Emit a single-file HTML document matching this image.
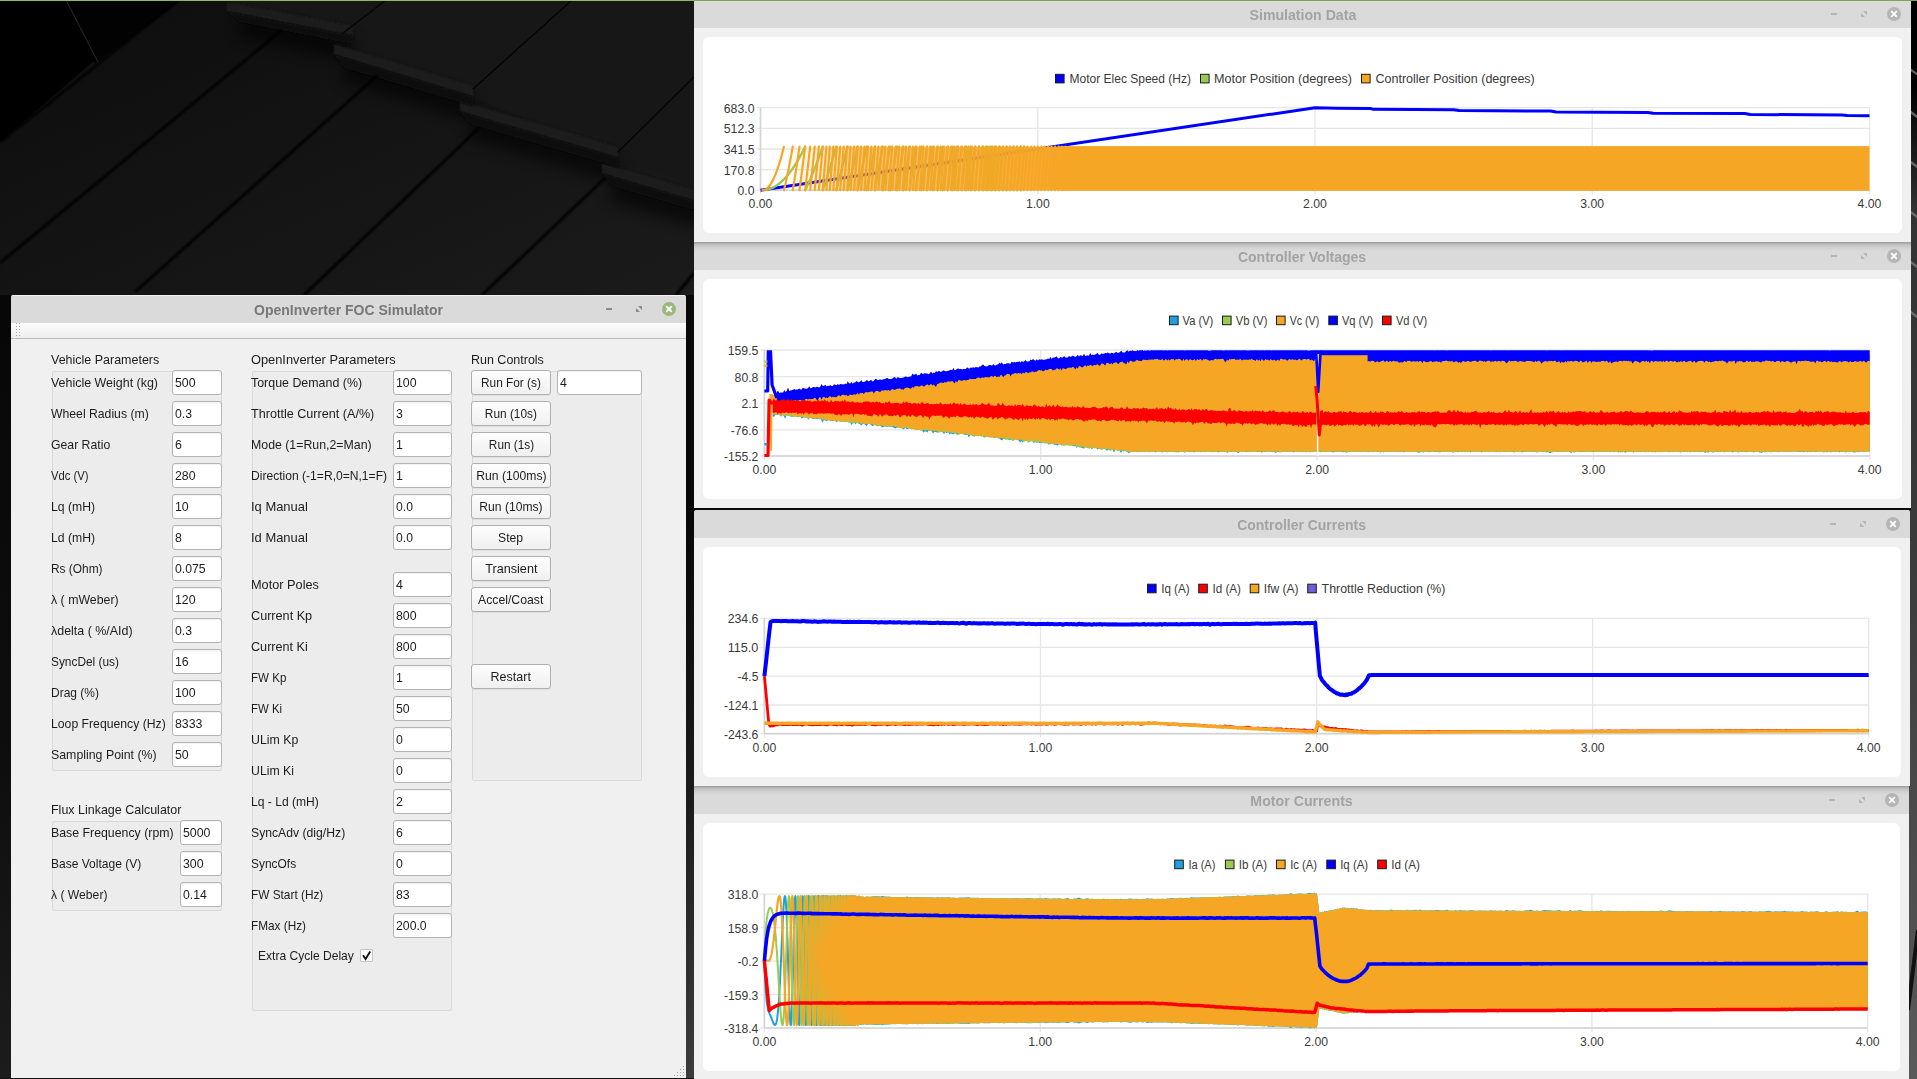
<!DOCTYPE html>
<html lang="en"><head><meta charset="utf-8"><title>OpenInverter FOC Simulator</title><style>
html,body{margin:0;padding:0}
body{width:1917px;height:1079px;overflow:hidden;position:relative;background:#151515;font-family:"Liberation Sans",sans-serif;font-size:12.25px;color:#1c1c1c}
.abs{position:absolute}
.win{position:absolute;background:#f0f0f0;overflow:hidden}
.tb{position:absolute;left:0;top:0;right:0;height:28px;background:#dadada;text-align:center;font-weight:bold;font-size:14px;line-height:30px;white-space:nowrap}
.tb.act{color:#777;box-shadow:inset 0 1px 0 #f2f2f2}
.tb.ina{color:#a3a3a3}
.tb.sh{background:linear-gradient(#9a9a9a 0,#c4c4c4 3px,#d6d6d6 7px,#dadada 10px)}
.card{position:absolute;background:#fff;border-radius:6px}
.lbl{position:absolute;white-space:nowrap;height:16px;line-height:16px}
.inp{position:absolute;box-sizing:border-box;height:25px;background:#fff;border:1px solid #b4b4b4;border-radius:3px;line-height:25px;padding-left:2px;white-space:nowrap;overflow:hidden;box-shadow:inset 0 1px 1px rgba(0,0,0,.06)}
.btn{position:absolute;box-sizing:border-box;height:25px;width:80px;background:linear-gradient(#fdfdfd,#f0f0f0);border:1px solid #b0b0b0;border-radius:3px;line-height:25px;text-align:center;white-space:nowrap;box-shadow:0 1px 0 rgba(0,0,0,.05)}
.grp{position:absolute;box-sizing:border-box;background:#ececec;border:1px solid #d9d9d9;border-radius:2px}
svg{position:absolute;display:block}
svg text{font-family:"Liberation Sans",sans-serif;font-size:12px;fill:#3a3a3a}
</style></head><body>
<svg style="left:0;top:0" width="1917" height="1079" viewBox="0 0 1917 1079">
<defs><linearGradient id="wg" x1="0" y1="0" x2="1" y2="1"><stop offset="0" stop-color="#0d0d0d"/><stop offset="1" stop-color="#1b1b1b"/></linearGradient></defs>
<rect width="700" height="300" fill="url(#wg)"/>
<polygon points="0,0 66,0 95,60 0,142" fill="#000"/>
<polygon points="66,0 181,0 95,64" fill="#020202"/>
<polygon points="226,0 694,186 694,0" fill="#171717"/>
<filter id="b1" x="-5%" y="-5%" width="110%" height="110%"><feGaussianBlur stdDeviation="0.8"/></filter><filter id="b2" x="-10%" y="-30%" width="120%" height="160%"><feGaussianBlur stdDeviation="7"/></filter>
<g filter="url(#b2)" stroke="#060606" stroke-width="22" fill="none" opacity=".6"><path d="M240,26 L353,50"/><path d="M345,70 L473,110"/><path d="M470,127 L618,172"/><path d="M612,190 L700,216"/></g>
<g fill="#1c1c1c" filter="url(#b1)"><polygon points="227,2 353,26 353,36 227,12"/><polygon points="334,44 473,86 473,97 334,55"/><polygon points="460,101 618,147 618,158 460,112"/><polygon points="602,163 694,190 694,201 602,174"/></g>
<g fill="#0c0c0c" filter="url(#b1)"><polygon points="227,12 353,36 353,44 240,22"/><polygon points="334,55 473,97 473,106 345,68"/><polygon points="460,112 618,158 618,167 470,124"/><polygon points="602,174 694,201 694,210 612,186"/></g>
<g stroke="#030303" stroke-width="2.8" fill="none" filter="url(#b1)"><path d="M0,263 L282,30"/><path d="M135,292 L378,75"/><path d="M304,295 L479,128"/><path d="M482,295 L605,178"/><path d="M676,295 L694,273"/><path d="M0,142 L179,0"/></g>
<g stroke="#050505" stroke-width="1.5" fill="none"><path d="M342,34 L386,0"/><path d="M473,89 L572,0"/><path d="M618,152 L694,77"/><path d="M66,0 L98,62" stroke="#2a2a2a" stroke-width="1"/></g>
<rect x="0" y="295" width="11" height="784" fill="url(#lg)"/>
<rect x="686" y="295" width="8" height="230" fill="#080808"/>
<rect x="686" y="525" width="8" height="554" fill="url(#sg)"/>
<defs><linearGradient id="lg" x1="0" y1="0" x2="0" y2="1"><stop offset="0" stop-color="#070707"/><stop offset=".6" stop-color="#0e0e0e"/><stop offset="1" stop-color="#1c1c1c"/></linearGradient><linearGradient id="sg" x1="0" y1="0" x2="0" y2="1"><stop offset="0" stop-color="#080808"/><stop offset=".5" stop-color="#1c1c1c"/><stop offset="1" stop-color="#3c3c3c"/></linearGradient>
<linearGradient id="rg" x1="0" y1="0" x2="0" y2="1"><stop offset="0" stop-color="#000"/><stop offset=".08" stop-color="#000"/><stop offset=".2" stop-color="#333"/><stop offset=".5" stop-color="#3a3a3a"/><stop offset="1" stop-color="#5a5a5a"/></linearGradient></defs>
<rect x="1908" y="0" width="9" height="1079" fill="url(#rg)"/>
<g stroke="#7a7a7a" stroke-width="2.2" opacity=".8"><path d="M1908,68 L1920,76"/><path d="M1908,110 L1920,119"/><path d="M1908,160 L1920,169"/><path d="M1908,210 L1920,219"/><path d="M1908,260 L1920,269"/><path d="M1908,310 L1920,319"/></g><path d="M1908,1010 L1918,930" stroke="#111" stroke-width="4"/>
<rect x="0" y="1078" width="694" height="1" fill="#111"/>
<rect x="694" y="508" width="1217" height="2" fill="#0a0a0a"/>
</svg>
<div class="abs" style="left:0;top:0;width:694px;height:1px;background:#8fb963;z-index:9"></div><div class="abs" style="left:694px;top:0;width:1223px;height:1px;background:#7fa352;z-index:9"></div>
<div class="win" style="left:11px;top:295px;width:675px;height:783px;border-radius:3px 3px 0 0">
<div class="tb act"><span style="display:inline-block;transform:scaleX(0.9999);transform-origin:center center">OpenInverter FOC Simulator</span></div>
<div class="abs" style="left:0;top:28px;width:675px;height:15px;background:linear-gradient(#fbfbfb,#ededed)"></div><div class="abs" style="left:0;top:43px;width:675px;height:1px;background:#b9b9b9"></div>
<svg style="left:4px;top:28px" width="8" height="18" viewBox="0 0 8 18"><rect x="1" y="0" width="1" height="1" fill="#a8a8a8"/><rect x="4" y="0" width="1" height="1" fill="#a8a8a8"/><rect x="1" y="3" width="1" height="1" fill="#a8a8a8"/><rect x="4" y="3" width="1" height="1" fill="#a8a8a8"/><rect x="1" y="6" width="1" height="1" fill="#a8a8a8"/><rect x="4" y="6" width="1" height="1" fill="#a8a8a8"/><rect x="1" y="9" width="1" height="1" fill="#a8a8a8"/><rect x="4" y="9" width="1" height="1" fill="#a8a8a8"/><rect x="1" y="12" width="1" height="1" fill="#a8a8a8"/><rect x="4" y="12" width="1" height="1" fill="#a8a8a8"/><rect x="1" y="15" width="1" height="1" fill="#a8a8a8"/><rect x="4" y="15" width="1" height="1" fill="#a8a8a8"/></svg>
<div class="grp" style="left:41px;top:76px;width:170px;height:400px"></div>
<div class="lbl" style="left:40px;top:57px"><span style="display:inline-block;transform:scaleX(1.0188);transform-origin:left center">Vehicle Parameters</span></div>
<div class="lbl" style="left:40px;top:80px"><span style="display:inline-block;transform:scaleX(1.0162);transform-origin:left center">Vehicle Weight (kg)</span></div>
<div class="inp" style="left:161px;top:75px;width:50px"><span style="display:inline-block;transform:scaleX(1.0069);transform-origin:left center">500</span></div>
<div class="lbl" style="left:40px;top:111px"><span style="display:inline-block;transform:scaleX(0.9968);transform-origin:left center">Wheel Radius (m)</span></div>
<div class="inp" style="left:161px;top:106px;width:50px"><span style="display:inline-block;transform:scaleX(0.9954);transform-origin:left center">0.3</span></div>
<div class="lbl" style="left:40px;top:142px"><span style="display:inline-block;transform:scaleX(0.9995);transform-origin:left center">Gear Ratio</span></div>
<div class="inp" style="left:161px;top:137px;width:50px"><span style="display:inline-block;transform:scaleX(1.0069);transform-origin:left center">6</span></div>
<div class="lbl" style="left:40px;top:173px"><span style="display:inline-block;transform:scaleX(0.9212);transform-origin:left center">Vdc (V)</span></div>
<div class="inp" style="left:161px;top:168px;width:50px"><span style="display:inline-block;transform:scaleX(1.0069);transform-origin:left center">280</span></div>
<div class="lbl" style="left:40px;top:204px"><span style="display:inline-block;transform:scaleX(0.9968);transform-origin:left center">Lq (mH)</span></div>
<div class="inp" style="left:161px;top:199px;width:50px"><span style="display:inline-block;transform:scaleX(1.0069);transform-origin:left center">10</span></div>
<div class="lbl" style="left:40px;top:235px"><span style="display:inline-block;transform:scaleX(0.9968);transform-origin:left center">Ld (mH)</span></div>
<div class="inp" style="left:161px;top:230px;width:50px"><span style="display:inline-block;transform:scaleX(1.0069);transform-origin:left center">8</span></div>
<div class="lbl" style="left:40px;top:266px"><span style="display:inline-block;transform:scaleX(0.9709);transform-origin:left center">Rs (Ohm)</span></div>
<div class="inp" style="left:161px;top:261px;width:50px"><span style="display:inline-block;transform:scaleX(1.0010);transform-origin:left center">0.075</span></div>
<div class="lbl" style="left:40px;top:297px"><span style="display:inline-block;transform:scaleX(1.0079);transform-origin:left center">λ ( mWeber)</span></div>
<div class="inp" style="left:161px;top:292px;width:50px"><span style="display:inline-block;transform:scaleX(1.0069);transform-origin:left center">120</span></div>
<div class="lbl" style="left:40px;top:328px"><span style="display:inline-block;transform:scaleX(1.0148);transform-origin:left center">λdelta ( %/AId)</span></div>
<div class="inp" style="left:161px;top:323px;width:50px"><span style="display:inline-block;transform:scaleX(0.9954);transform-origin:left center">0.3</span></div>
<div class="lbl" style="left:40px;top:359px"><span style="display:inline-block;transform:scaleX(0.9697);transform-origin:left center">SyncDel (us)</span></div>
<div class="inp" style="left:161px;top:354px;width:50px"><span style="display:inline-block;transform:scaleX(1.0069);transform-origin:left center">16</span></div>
<div class="lbl" style="left:40px;top:390px"><span style="display:inline-block;transform:scaleX(0.9770);transform-origin:left center">Drag (%)</span></div>
<div class="inp" style="left:161px;top:385px;width:50px"><span style="display:inline-block;transform:scaleX(1.0069);transform-origin:left center">100</span></div>
<div class="lbl" style="left:40px;top:421px"><span style="display:inline-block;transform:scaleX(0.9970);transform-origin:left center">Loop Frequency (Hz)</span></div>
<div class="inp" style="left:161px;top:416px;width:50px"><span style="display:inline-block;transform:scaleX(1.0074);transform-origin:left center">8333</span></div>
<div class="lbl" style="left:40px;top:452px"><span style="display:inline-block;transform:scaleX(1.0079);transform-origin:left center">Sampling Point (%)</span></div>
<div class="inp" style="left:161px;top:447px;width:50px"><span style="display:inline-block;transform:scaleX(1.0069);transform-origin:left center">50</span></div>
<div class="grp" style="left:41px;top:526px;width:170px;height:90px"></div>
<div class="lbl" style="left:40px;top:507px"><span style="display:inline-block;transform:scaleX(1.0186);transform-origin:left center">Flux Linkage Calculator</span></div>
<div class="lbl" style="left:40px;top:530px"><span style="display:inline-block;transform:scaleX(1.0062);transform-origin:left center">Base Frequency (rpm)</span></div>
<div class="inp" style="left:169px;top:525px;width:42px"><span style="display:inline-block;transform:scaleX(1.0074);transform-origin:left center">5000</span></div>
<div class="lbl" style="left:40px;top:561px"><span style="display:inline-block;transform:scaleX(0.9813);transform-origin:left center">Base Voltage (V)</span></div>
<div class="inp" style="left:169px;top:556px;width:42px"><span style="display:inline-block;transform:scaleX(1.0069);transform-origin:left center">300</span></div>
<div class="lbl" style="left:40px;top:592px"><span style="display:inline-block;transform:scaleX(0.9915);transform-origin:left center">λ ( Weber)</span></div>
<div class="inp" style="left:169px;top:587px;width:42px"><span style="display:inline-block;transform:scaleX(0.9987);transform-origin:left center">0.14</span></div>
<div class="grp" style="left:241px;top:76px;width:200px;height:640px"></div>
<div class="lbl" style="left:240px;top:57px"><span style="display:inline-block;transform:scaleX(1.0466);transform-origin:left center">OpenInverter Parameters</span></div>
<div class="lbl" style="left:240px;top:80px"><span style="display:inline-block;transform:scaleX(1.0131);transform-origin:left center">Torque Demand (%)</span></div>
<div class="inp" style="left:382px;top:75px;width:59px"><span style="display:inline-block;transform:scaleX(1.0069);transform-origin:left center">100</span></div>
<div class="lbl" style="left:240px;top:111px"><span style="display:inline-block;transform:scaleX(1.0293);transform-origin:left center">Throttle Current (A/%)</span></div>
<div class="inp" style="left:382px;top:106px;width:59px"><span style="display:inline-block;transform:scaleX(1.0069);transform-origin:left center">3</span></div>
<div class="lbl" style="left:240px;top:142px"><span style="display:inline-block;transform:scaleX(1.0064);transform-origin:left center">Mode (1=Run,2=Man)</span></div>
<div class="inp" style="left:382px;top:137px;width:59px"><span style="display:inline-block;transform:scaleX(1.0069);transform-origin:left center">1</span></div>
<div class="lbl" style="left:240px;top:173px"><span style="display:inline-block;transform:scaleX(0.9869);transform-origin:left center">Direction (-1=R,0=N,1=F)</span></div>
<div class="inp" style="left:382px;top:168px;width:59px"><span style="display:inline-block;transform:scaleX(1.0069);transform-origin:left center">1</span></div>
<div class="lbl" style="left:240px;top:204px"><span style="display:inline-block;transform:scaleX(1.0566);transform-origin:left center">Iq Manual</span></div>
<div class="inp" style="left:382px;top:199px;width:59px"><span style="display:inline-block;transform:scaleX(0.9954);transform-origin:left center">0.0</span></div>
<div class="lbl" style="left:240px;top:235px"><span style="display:inline-block;transform:scaleX(1.0566);transform-origin:left center">Id Manual</span></div>
<div class="inp" style="left:382px;top:230px;width:59px"><span style="display:inline-block;transform:scaleX(0.9954);transform-origin:left center">0.0</span></div>
<div class="lbl" style="left:240px;top:282px"><span style="display:inline-block;transform:scaleX(1.0397);transform-origin:left center">Motor Poles</span></div>
<div class="inp" style="left:382px;top:277px;width:59px"><span style="display:inline-block;transform:scaleX(1.0069);transform-origin:left center">4</span></div>
<div class="lbl" style="left:240px;top:313px"><span style="display:inline-block;transform:scaleX(1.0319);transform-origin:left center">Current Kp</span></div>
<div class="inp" style="left:382px;top:308px;width:59px"><span style="display:inline-block;transform:scaleX(1.0069);transform-origin:left center">800</span></div>
<div class="lbl" style="left:240px;top:344px"><span style="display:inline-block;transform:scaleX(1.0306);transform-origin:left center">Current Ki</span></div>
<div class="inp" style="left:382px;top:339px;width:59px"><span style="display:inline-block;transform:scaleX(1.0069);transform-origin:left center">800</span></div>
<div class="lbl" style="left:240px;top:375px"><span style="display:inline-block;transform:scaleX(0.9437);transform-origin:left center">FW Kp</span></div>
<div class="inp" style="left:382px;top:370px;width:59px"><span style="display:inline-block;transform:scaleX(1.0069);transform-origin:left center">1</span></div>
<div class="lbl" style="left:240px;top:406px"><span style="display:inline-block;transform:scaleX(0.9311);transform-origin:left center">FW Ki</span></div>
<div class="inp" style="left:382px;top:401px;width:59px"><span style="display:inline-block;transform:scaleX(1.0069);transform-origin:left center">50</span></div>
<div class="lbl" style="left:240px;top:437px"><span style="display:inline-block;transform:scaleX(1.0070);transform-origin:left center">ULim Kp</span></div>
<div class="inp" style="left:382px;top:432px;width:59px"><span style="display:inline-block;transform:scaleX(1.0069);transform-origin:left center">0</span></div>
<div class="lbl" style="left:240px;top:468px"><span style="display:inline-block;transform:scaleX(1.0033);transform-origin:left center">ULim Ki</span></div>
<div class="inp" style="left:382px;top:463px;width:59px"><span style="display:inline-block;transform:scaleX(1.0069);transform-origin:left center">0</span></div>
<div class="lbl" style="left:240px;top:499px"><span style="display:inline-block;transform:scaleX(0.9870);transform-origin:left center">Lq - Ld (mH)</span></div>
<div class="inp" style="left:382px;top:494px;width:59px"><span style="display:inline-block;transform:scaleX(1.0069);transform-origin:left center">2</span></div>
<div class="lbl" style="left:240px;top:530px"><span style="display:inline-block;transform:scaleX(0.9954);transform-origin:left center">SyncAdv (dig/Hz)</span></div>
<div class="inp" style="left:382px;top:525px;width:59px"><span style="display:inline-block;transform:scaleX(1.0069);transform-origin:left center">6</span></div>
<div class="lbl" style="left:240px;top:561px"><span style="display:inline-block;transform:scaleX(0.9750);transform-origin:left center">SyncOfs</span></div>
<div class="inp" style="left:382px;top:556px;width:59px"><span style="display:inline-block;transform:scaleX(1.0069);transform-origin:left center">0</span></div>
<div class="lbl" style="left:240px;top:592px"><span style="display:inline-block;transform:scaleX(0.9660);transform-origin:left center">FW Start (Hz)</span></div>
<div class="inp" style="left:382px;top:587px;width:59px"><span style="display:inline-block;transform:scaleX(1.0069);transform-origin:left center">83</span></div>
<div class="lbl" style="left:240px;top:623px"><span style="display:inline-block;transform:scaleX(0.9628);transform-origin:left center">FMax (Hz)</span></div>
<div class="inp" style="left:382px;top:618px;width:59px"><span style="display:inline-block;transform:scaleX(1.0010);transform-origin:left center">200.0</span></div>
<div class="lbl" style="left:247px;top:653px"><span style="display:inline-block;transform:scaleX(0.9846);transform-origin:left center">Extra Cycle Delay</span></div>
<div class="abs" style="left:349px;top:654px;width:13px;height:13px;box-sizing:border-box;background:#fff;border:1px solid #c4c4c4;border-radius:1px"></div>
<svg style="left:349px;top:654px" width="13" height="13" viewBox="0 0 13 13"><path d="M3,6.2 L5.6,10 L10.2,2.6" stroke="#111" stroke-width="1.9" fill="none"/></svg>
<div class="grp" style="left:461px;top:76px;width:170px;height:410px"></div>
<div class="lbl" style="left:460px;top:57px"><span style="display:inline-block;transform:scaleX(1.0188);transform-origin:left center">Run Controls</span></div>
<div class="btn" style="left:460px;top:75px"><span style="display:inline-block;transform:scaleX(0.9675);transform-origin:center center">Run For (s)</span></div>
<div class="btn" style="left:460px;top:106px"><span style="display:inline-block;transform:scaleX(0.9683);transform-origin:center center">Run (10s)</span></div>
<div class="btn" style="left:460px;top:137px"><span style="display:inline-block;transform:scaleX(0.9628);transform-origin:center center">Run (1s)</span></div>
<div class="btn" style="left:460px;top:168px"><span style="display:inline-block;transform:scaleX(0.9912);transform-origin:center center">Run (100ms)</span></div>
<div class="btn" style="left:460px;top:199px"><span style="display:inline-block;transform:scaleX(0.9893);transform-origin:center center">Run (10ms)</span></div>
<div class="btn" style="left:460px;top:230px"><span style="display:inline-block;transform:scaleX(0.9950);transform-origin:center center">Step</span></div>
<div class="btn" style="left:460px;top:261px"><span style="display:inline-block;transform:scaleX(1.0333);transform-origin:center center">Transient</span></div>
<div class="btn" style="left:460px;top:292px"><span style="display:inline-block;transform:scaleX(0.9974);transform-origin:center center">Accel/Coast</span></div>
<div class="btn" style="left:460px;top:369px"><span style="display:inline-block;transform:scaleX(1.0218);transform-origin:center center">Restart</span></div>
<div class="inp" style="left:546px;top:75px;width:85px"><span style="display:inline-block;transform:scaleX(1.0069);transform-origin:left center">4</span></div>
<svg style="left:661px;top:769px" width="14" height="14" viewBox="0 0 14 14"><rect x="11" y="11" width="1" height="1" fill="#a6a6a6"/><rect x="8" y="11" width="1" height="1" fill="#a6a6a6"/><rect x="5" y="11" width="1" height="1" fill="#a6a6a6"/><rect x="2" y="11" width="1" height="1" fill="#a6a6a6"/><rect x="11" y="8" width="1" height="1" fill="#a6a6a6"/><rect x="8" y="8" width="1" height="1" fill="#a6a6a6"/><rect x="5" y="8" width="1" height="1" fill="#a6a6a6"/><rect x="11" y="5" width="1" height="1" fill="#a6a6a6"/><rect x="8" y="5" width="1" height="1" fill="#a6a6a6"/><rect x="11" y="2" width="1" height="1" fill="#a6a6a6"/></svg>
</div>
<svg style="left:599px;top:299px" width="80" height="20" viewBox="599 299 80 20"><rect x="606" y="308" width="6" height="2" fill="#8a8a8a"/><polygon points="638,306 642,306 642,310" fill="#8a8a8a"/><polygon points="636,308 636,312 640,312" fill="#8a8a8a"/><circle cx="669" cy="309" r="7" fill="#9ab87c"/><path d="M666.2,306.2 L671.8,311.8 M671.8,306.2 L666.2,311.8" stroke="#fff" stroke-width="1.9" fill="none"/></svg>
<div class="win" style="left:694px;top:0px;width:1217px;height:242px"><div class="tb ina"><span style="display:inline-block;transform:scaleX(1.0084);transform-origin:center center">Simulation Data</span></div>
<div class="card" style="left:9px;top:37px;width:1199px;height:196px"></div></div>
<svg style="left:1824px;top:4px" width="80" height="20" viewBox="1824 4 80 20"><rect x="1831" y="13" width="6" height="2" fill="#b4b4b4"/><polygon points="1863,11 1867,11 1867,15" fill="#b4b4b4"/><polygon points="1861,13 1861,17 1865,17" fill="#b4b4b4"/><circle cx="1894" cy="14" r="7" fill="#b5b5b5"/><path d="M1891.2,11.2 L1896.8,16.8 M1896.8,11.2 L1891.2,16.8" stroke="#fff" stroke-width="1.9" fill="none"/></svg>
<svg style="left:703px;top:37px" width="1199" height="196" viewBox="703 37 1199 196">
<line x1="756.5" y1="107.7" x2="1869.5" y2="107.7" stroke="#e6e6e6" stroke-width="1.3"/><line x1="756.5" y1="128.4" x2="1869.5" y2="128.4" stroke="#e6e6e6" stroke-width="1.3"/><line x1="756.5" y1="149" x2="1869.5" y2="149" stroke="#e6e6e6" stroke-width="1.3"/><line x1="756.5" y1="169.6" x2="1869.5" y2="169.6" stroke="#e6e6e6" stroke-width="1.3"/><line x1="756.5" y1="190.2" x2="1869.5" y2="190.2" stroke="#e6e6e6" stroke-width="1.3"/><line x1="760.5" y1="107.7" x2="760.5" y2="194.2" stroke="#e6e6e6" stroke-width="1.3"/><line x1="1037.8" y1="107.7" x2="1037.8" y2="194.2" stroke="#e6e6e6" stroke-width="1.3"/><line x1="1315.0" y1="107.7" x2="1315.0" y2="194.2" stroke="#e6e6e6" stroke-width="1.3"/><line x1="1592.2" y1="107.7" x2="1592.2" y2="194.2" stroke="#e6e6e6" stroke-width="1.3"/><line x1="1869.5" y1="107.7" x2="1869.5" y2="194.2" stroke="#e6e6e6" stroke-width="1.3"/><line x1="760.5" y1="107.7" x2="760.5" y2="190.2" stroke="#d4d4d4" stroke-width="1.6"/><line x1="760.5" y1="190.2" x2="1869.5" y2="190.2" stroke="#d4d4d4" stroke-width="1.6"/><text x="754.5" y="112.7" text-anchor="end" textLength="30.7" lengthAdjust="spacingAndGlyphs">683.0</text><text x="754.5" y="133.4" text-anchor="end" textLength="30.7" lengthAdjust="spacingAndGlyphs">512.3</text><text x="754.5" y="154.0" text-anchor="end" textLength="30.7" lengthAdjust="spacingAndGlyphs">341.5</text><text x="754.5" y="174.6" text-anchor="end" textLength="30.7" lengthAdjust="spacingAndGlyphs">170.8</text><text x="754.5" y="195.2" text-anchor="end" textLength="17.0" lengthAdjust="spacingAndGlyphs">0.0</text><text x="760.5" y="208" text-anchor="middle" textLength="23.8" lengthAdjust="spacingAndGlyphs">0.00</text><text x="1037.8" y="208" text-anchor="middle" textLength="23.8" lengthAdjust="spacingAndGlyphs">1.00</text><text x="1315.0" y="208" text-anchor="middle" textLength="23.8" lengthAdjust="spacingAndGlyphs">2.00</text><text x="1592.2" y="208" text-anchor="middle" textLength="23.8" lengthAdjust="spacingAndGlyphs">3.00</text><text x="1869.5" y="208" text-anchor="middle" textLength="23.8" lengthAdjust="spacingAndGlyphs">4.00</text>
<rect x="1055.5" y="74.3" width="8.6" height="8.6" fill="#0000ff" stroke="#1c1c1c" stroke-width="1"/><text x="1069.5" y="83.3" textLength="121.5" lengthAdjust="spacingAndGlyphs">Motor Elec Speed (Hz)</text><rect x="1200.5" y="74.3" width="8.6" height="8.6" fill="#99ca53" stroke="#1c1c1c" stroke-width="1"/><text x="1214" y="83.3" textLength="138.0" lengthAdjust="spacingAndGlyphs">Motor Position (degrees)</text><rect x="1361.5" y="74.3" width="8.6" height="8.6" fill="#f6a625" stroke="#1c1c1c" stroke-width="1"/><text x="1375.5" y="83.3" textLength="159.3" lengthAdjust="spacingAndGlyphs">Controller Position (degrees)</text>
<polyline points="760.5,190.2 1315.0,107.7 1315.0,107.7 1337.2,108.2 1370.5,108.4 1373.2,109.3 1453.6,109.7 1459.2,110.5 1550.7,111.1 1556.2,112.0 1647.7,112.4 1653.2,113.2 1744.7,113.6 1750.3,114.5 1841.8,114.9 1847.3,115.5 1869.5,115.7" fill="none" stroke="#0000ff" stroke-width="3" stroke-linejoin="round"/>
<defs><linearGradient id="of" x1="0" y1="0" x2="1" y2="0"><stop offset="0" stop-color="#f6a625" stop-opacity="0"/><stop offset=".1" stop-color="#f6a625" stop-opacity=".15"/><stop offset=".25" stop-color="#f6a625" stop-opacity=".6"/><stop offset=".6" stop-color="#f6a625" stop-opacity=".78"/><stop offset=".9" stop-color="#f6a625" stop-opacity=".93"/><stop offset="1" stop-color="#f6a625" stop-opacity="1"/></linearGradient></defs>
<path d="M762.7,190.2 L766.0,189.9 L769.2,189.2 L772.5,187.9 L775.8,186.1 L779.0,183.8 L782.3,180.9 L785.6,177.6 L788.8,173.7 L792.1,169.4 L795.4,164.5 L798.6,159.1 L801.9,153.1 L805.1,146.7M805.1,190.2 L806.5,187.4 L807.9,184.5 L809.2,181.5 L810.6,178.4 L811.9,175.2 L813.3,172.0 L814.6,168.6 L816.0,165.2 L817.3,161.7 L818.7,158.1 L820.0,154.4 L821.4,150.6 L822.7,146.7M822.7,190.2 L823.8,187.2 L824.8,184.1 L825.8,180.9 L826.9,177.8 L827.9,174.5 L828.9,171.2 L830.0,167.9 L831.0,164.5 L832.1,161.0 L833.1,157.5 L834.1,154.0 L835.2,150.4 L836.2,146.7M836.2,190.2 L847.6,146.7M847.6,190.2 L857.6,146.7M857.6,190.2 L866.6,146.7M866.6,190.2 L875.0,146.7M875.0,190.2 L882.7,146.7M882.7,190.2 L890.0,146.7M890.0,190.2 L896.9,146.7M896.9,190.2 L903.4,146.7M903.4,190.2 L909.7,146.7M909.7,190.2 L915.7,146.7M915.7,190.2 L921.5,146.7M921.5,190.2 L927.0,146.7M927.0,190.2 L932.4,146.7M932.4,190.2 L937.7,146.7M937.7,190.2 L942.7,146.7M942.7,190.2 L947.7,146.7M947.7,190.2 L952.5,146.7M952.5,190.2 L957.1,146.7M957.1,190.2 L961.7,146.7M961.7,190.2 L966.2,146.7M966.2,190.2 L970.6,146.7M970.6,190.2 L974.9,146.7M974.9,190.2 L979.1,146.7M979.1,190.2 L983.2,146.7M983.2,190.2 L987.2,146.7M987.2,190.2 L991.2,146.7M991.2,190.2 L995.1,146.7M995.1,190.2 L998.9,146.7M998.9,190.2 L1002.7,146.7M1002.7,190.2 L1006.5,146.7M1006.5,190.2 L1010.1,146.7M1010.1,190.2 L1013.7,146.7M1013.7,190.2 L1017.3,146.7M1017.3,190.2 L1020.8,146.7M1020.8,190.2 L1024.3,146.7" fill="none" stroke="#99ca53" stroke-width="2.4" stroke-linecap="round"/>
<rect x="788.2" y="146.7" width="271.7" height="43.5" fill="url(#of)"/>
<rect x="1059.4" y="146.1" width="810.1" height="44.7" fill="#f6a625"/>
<path d="M762.7,190.2 L764.4,189.9 L766.0,189.2 L767.6,187.9 L769.2,186.1 L770.9,183.8 L772.5,180.9 L774.1,177.6 L775.8,173.7 L777.4,169.4 L779.0,164.5 L780.7,159.1 L782.3,153.1 L783.9,146.7M783.9,190.2 L784.6,187.4 L785.3,184.5 L786.0,181.5 L786.6,178.4 L787.3,175.2 L788.0,172.0 L788.7,168.6 L789.3,165.2 L790.0,161.7 L790.7,158.1 L791.4,154.4 L792.0,150.6 L792.7,146.7M792.7,190.2 L793.2,187.2 L793.8,184.1 L794.3,180.9 L794.8,177.8 L795.3,174.5 L795.8,171.2 L796.4,167.9 L796.9,164.5 L797.4,161.0 L797.9,157.5 L798.4,154.0 L798.9,150.4 L799.5,146.7M799.5,190.2 L805.2,146.7M805.2,190.2 L810.2,146.7M810.2,190.2 L814.7,146.7M814.7,190.2 L818.9,146.7M818.9,190.2 L822.7,146.7M822.7,190.2 L826.4,146.7M826.4,190.2 L829.8,146.7M829.8,190.2 L833.3,146.7M833.3,190.2 L836.8,146.7M836.8,190.2 L840.2,146.7M840.2,190.2 L843.7,146.7M843.7,190.2 L847.2,146.7M847.2,190.2 L850.6,146.7M850.6,190.2 L854.1,146.7M854.1,190.2 L857.6,146.7M857.6,190.2 L861.0,146.7M861.0,190.2 L864.5,146.7M864.5,190.2 L868.0,146.7M868.0,190.2 L871.4,146.7M871.4,190.2 L874.9,146.7M874.9,190.2 L878.4,146.7M878.4,190.2 L881.8,146.7M881.8,190.2 L885.3,146.7M885.3,190.2 L888.8,146.7M888.8,190.2 L892.2,146.7M892.2,190.2 L895.7,146.7M895.7,190.2 L899.2,146.7M899.2,190.2 L902.6,146.7M902.6,190.2 L906.1,146.7M906.1,190.2 L909.6,146.7M909.6,190.2 L913.0,146.7M913.0,190.2 L916.5,146.7M916.5,190.2 L920.0,146.7M920.0,190.2 L923.4,146.7M923.4,190.2 L926.9,146.7M926.9,190.2 L930.4,146.7M930.4,190.2 L933.8,146.7M933.8,190.2 L937.3,146.7M937.3,190.2 L940.7,146.7M940.7,190.2 L944.2,146.7M944.2,190.2 L947.7,146.7M947.7,190.2 L951.1,146.7M951.1,190.2 L954.6,146.7M954.6,190.2 L958.1,146.7M958.1,190.2 L961.5,146.7M961.5,190.2 L965.0,146.7M965.0,190.2 L968.5,146.7M968.5,190.2 L971.9,146.7M971.9,190.2 L975.4,146.7M975.4,190.2 L978.9,146.7M978.9,190.2 L982.3,146.7M982.3,190.2 L985.8,146.7M985.8,190.2 L989.3,146.7M989.3,190.2 L992.7,146.7M992.7,190.2 L996.2,146.7M996.2,190.2 L999.7,146.7M999.7,190.2 L1003.1,146.7M1003.1,190.2 L1006.6,146.7M1006.6,190.2 L1010.1,146.7M1010.1,190.2 L1013.5,146.7M1013.5,190.2 L1017.0,146.7M1017.0,190.2 L1020.5,146.7M1020.5,190.2 L1023.9,146.7M1023.9,190.2 L1027.4,146.7M1027.4,190.2 L1030.9,146.7M1030.9,190.2 L1034.3,146.7M1034.3,190.2 L1037.8,146.7M1037.8,190.2 L1041.3,146.7M1041.3,190.2 L1044.7,146.7M1044.7,190.2 L1048.2,146.7M1048.2,190.2 L1051.6,146.7M1051.6,190.2 L1055.1,146.7M1055.1,190.2 L1058.6,146.7M1058.6,190.2 L1062.0,146.7M1062.0,190.2 L1065.5,146.7" fill="none" stroke="#f6a625" stroke-width="2.2" stroke-linecap="round"/>
</svg>
<div class="win" style="left:694px;top:242px;width:1217px;height:266px"><div class="tb ina sh"><span style="display:inline-block;transform:scaleX(1.0010);transform-origin:center center">Controller Voltages</span></div>
<div class="card" style="left:9px;top:37px;width:1199px;height:220px"></div></div>
<svg style="left:1824px;top:246px" width="80" height="20" viewBox="1824 246 80 20"><rect x="1831" y="255" width="6" height="2" fill="#b4b4b4"/><polygon points="1863,253 1867,253 1867,257" fill="#b4b4b4"/><polygon points="1861,255 1861,259 1865,259" fill="#b4b4b4"/><circle cx="1894" cy="256" r="7" fill="#b5b5b5"/><path d="M1891.2,253.2 L1896.8,258.8 M1896.8,253.2 L1891.2,258.8" stroke="#fff" stroke-width="1.9" fill="none"/></svg>
<svg style="left:703px;top:279px" width="1199" height="220" viewBox="703 279 1199 220">
<line x1="760.4" y1="350" x2="1869.7" y2="350" stroke="#e6e6e6" stroke-width="1.3"/><line x1="760.4" y1="376.6" x2="1869.7" y2="376.6" stroke="#e6e6e6" stroke-width="1.3"/><line x1="760.4" y1="403.2" x2="1869.7" y2="403.2" stroke="#e6e6e6" stroke-width="1.3"/><line x1="760.4" y1="429.8" x2="1869.7" y2="429.8" stroke="#e6e6e6" stroke-width="1.3"/><line x1="760.4" y1="456" x2="1869.7" y2="456" stroke="#e6e6e6" stroke-width="1.3"/><line x1="764.4" y1="350" x2="764.4" y2="460" stroke="#e6e6e6" stroke-width="1.3"/><line x1="1040.7" y1="350" x2="1040.7" y2="460" stroke="#e6e6e6" stroke-width="1.3"/><line x1="1317.1" y1="350" x2="1317.1" y2="460" stroke="#e6e6e6" stroke-width="1.3"/><line x1="1593.4" y1="350" x2="1593.4" y2="460" stroke="#e6e6e6" stroke-width="1.3"/><line x1="1869.7" y1="350" x2="1869.7" y2="460" stroke="#e6e6e6" stroke-width="1.3"/><line x1="764.4" y1="350" x2="764.4" y2="456" stroke="#d4d4d4" stroke-width="1.6"/><line x1="764.4" y1="456" x2="1869.7" y2="456" stroke="#d4d4d4" stroke-width="1.6"/><text x="758.4" y="355.0" text-anchor="end" textLength="30.7" lengthAdjust="spacingAndGlyphs">159.5</text><text x="758.4" y="381.6" text-anchor="end" textLength="23.8" lengthAdjust="spacingAndGlyphs">80.8</text><text x="758.4" y="408.2" text-anchor="end" textLength="17.0" lengthAdjust="spacingAndGlyphs">2.1</text><text x="758.4" y="434.8" text-anchor="end" textLength="27.7" lengthAdjust="spacingAndGlyphs">-76.6</text><text x="758.4" y="461.0" text-anchor="end" textLength="34.5" lengthAdjust="spacingAndGlyphs">-155.2</text><text x="764.4" y="474" text-anchor="middle" textLength="23.8" lengthAdjust="spacingAndGlyphs">0.00</text><text x="1040.7" y="474" text-anchor="middle" textLength="23.8" lengthAdjust="spacingAndGlyphs">1.00</text><text x="1317.1" y="474" text-anchor="middle" textLength="23.8" lengthAdjust="spacingAndGlyphs">2.00</text><text x="1593.4" y="474" text-anchor="middle" textLength="23.8" lengthAdjust="spacingAndGlyphs">3.00</text><text x="1869.7" y="474" text-anchor="middle" textLength="23.8" lengthAdjust="spacingAndGlyphs">4.00</text>
<rect x="1169.5" y="316.1" width="8.6" height="8.6" fill="#209fdf" stroke="#1c1c1c" stroke-width="1"/><text x="1182.6" y="325.1" textLength="30.7" lengthAdjust="spacingAndGlyphs">Va (V)</text><rect x="1222.5" y="316.1" width="8.6" height="8.6" fill="#99ca53" stroke="#1c1c1c" stroke-width="1"/><text x="1235.7" y="325.1" textLength="31.7" lengthAdjust="spacingAndGlyphs">Vb (V)</text><rect x="1276.5" y="316.1" width="8.6" height="8.6" fill="#f6a625" stroke="#1c1c1c" stroke-width="1"/><text x="1289.7" y="325.1" textLength="29.5" lengthAdjust="spacingAndGlyphs">Vc (V)</text><rect x="1328.8" y="316.1" width="8.6" height="8.6" fill="#0000ff" stroke="#1c1c1c" stroke-width="1"/><text x="1341.9" y="325.1" textLength="31.4" lengthAdjust="spacingAndGlyphs">Vq (V)</text><rect x="1382.5" y="316.1" width="8.6" height="8.6" fill="#ff0000" stroke="#1c1c1c" stroke-width="1"/><text x="1395.9" y="325.1" textLength="31.4" lengthAdjust="spacingAndGlyphs">Vd (V)</text>
<defs><clipPath id="c2"><rect x="762.4" y="350.2" width="1109.3000000000002" height="107"/></clipPath></defs><g clip-path="url(#c2)">
<polygon points="772.7,395.0 774.1,395.6 775.5,395.4 776.8,394.4 778.2,394.4 779.6,394.2 781.0,394.6 782.4,394.2 783.7,394.5 785.1,393.1 786.5,394.7 787.9,393.8 789.3,394.1 790.7,393.5 792.0,393.3 793.4,393.6 794.8,393.6 796.2,393.0 797.6,392.8 798.9,393.1 800.3,392.2 801.7,391.7 803.1,392.5 804.5,391.9 805.8,391.1 807.2,391.5 808.6,391.5 810.0,391.0 811.4,390.7 812.8,391.4 814.1,391.6 815.5,390.9 816.9,390.5 818.3,391.0 819.7,391.0 821.0,390.3 822.4,390.6 823.8,390.7 825.2,389.9 826.6,389.5 828.0,389.9 829.3,389.7 830.7,390.0 832.1,388.7 833.5,388.9 834.9,388.6 836.2,388.0 837.6,388.8 839.0,388.9 840.4,388.1 841.8,389.0 843.2,388.6 844.5,388.4 845.9,388.1 847.3,388.2 848.7,386.9 850.1,387.8 851.4,387.6 852.8,386.3 854.2,387.2 855.6,386.8 857.0,387.1 858.4,386.4 859.7,386.4 861.1,386.5 862.5,385.7 863.9,386.3 865.3,385.8 866.6,386.0 868.0,385.3 869.4,386.0 870.8,385.6 872.2,385.1 873.5,385.3 874.9,385.5 876.3,385.6 877.7,383.8 879.1,384.9 880.5,384.5 881.8,384.1 883.2,383.5 884.6,384.5 886.0,383.1 887.4,383.9 888.7,384.1 890.1,382.5 891.5,383.0 892.9,382.4 894.3,383.0 895.7,383.5 897.0,383.6 898.4,381.5 899.8,382.0 901.2,382.5 902.6,382.8 903.9,382.0 905.3,381.3 906.7,381.6 908.1,381.3 909.5,381.0 910.9,380.6 912.2,381.0 913.6,380.7 915.0,380.4 916.4,380.1 917.8,379.4 919.1,379.6 920.5,380.3 921.9,379.4 923.3,378.6 924.7,379.8 926.1,379.3 927.4,379.9 928.8,378.7 930.2,378.2 931.6,377.6 933.0,378.8 934.3,379.2 935.7,377.4 937.1,377.3 938.5,377.7 939.9,376.8 941.2,376.9 942.6,376.7 944.0,376.8 945.4,377.1 946.8,376.4 948.2,376.6 949.5,375.8 950.9,376.0 952.3,374.6 953.7,374.8 955.1,375.7 956.4,374.9 957.8,375.3 959.2,375.1 960.6,375.3 962.0,374.9 963.4,374.8 964.7,374.1 966.1,373.7 967.5,373.5 968.9,373.4 970.3,372.9 971.6,373.1 973.0,373.1 974.4,373.1 975.8,372.7 977.2,371.7 978.6,372.5 979.9,372.4 981.3,372.7 982.7,372.3 984.1,371.5 985.5,371.3 986.8,372.5 988.2,371.7 989.6,372.1 991.0,372.1 992.4,370.4 993.7,370.9 995.1,370.7 996.5,370.6 997.9,370.4 999.3,370.1 1000.7,369.9 1002.0,368.9 1003.4,369.4 1004.8,369.0 1006.2,369.2 1007.6,368.8 1008.9,369.1 1010.3,369.1 1011.7,368.7 1013.1,368.5 1014.5,368.2 1015.9,367.8 1017.2,367.8 1018.6,367.4 1020.0,367.7 1021.4,367.3 1022.8,367.5 1024.1,366.3 1025.5,367.3 1026.9,366.3 1028.3,366.1 1029.7,366.2 1031.1,365.9 1032.4,366.1 1033.8,365.5 1035.2,365.1 1036.6,365.1 1038.0,366.0 1039.3,365.2 1040.7,364.4 1042.1,364.9 1043.5,364.0 1044.9,365.5 1046.3,363.7 1047.6,364.6 1049.0,364.5 1050.4,363.3 1051.8,364.1 1053.2,364.3 1054.5,363.9 1055.9,363.6 1057.3,363.8 1058.7,363.3 1060.1,363.3 1061.4,362.9 1062.8,363.1 1064.2,362.2 1065.6,363.0 1067.0,362.2 1068.4,361.7 1069.7,362.3 1071.1,362.9 1072.5,362.4 1073.9,361.5 1075.3,362.0 1076.6,361.2 1078.0,361.3 1079.4,361.2 1080.8,359.9 1082.2,361.0 1083.6,360.3 1084.9,360.3 1086.3,359.8 1087.7,359.6 1089.1,359.8 1090.5,360.5 1091.8,360.8 1093.2,359.8 1094.6,360.3 1096.0,359.4 1097.4,358.5 1098.8,359.4 1100.1,359.4 1101.5,358.8 1102.9,359.0 1104.3,359.0 1105.7,358.2 1107.0,357.7 1108.4,358.2 1109.8,358.1 1111.2,357.9 1112.6,358.4 1114.0,358.7 1115.3,357.5 1116.7,357.9 1118.1,357.9 1119.5,357.6 1120.9,357.7 1122.2,356.8 1123.6,357.2 1125.0,357.7 1126.4,357.0 1127.8,356.1 1129.1,356.6 1130.5,356.8 1131.9,356.2 1133.3,355.6 1134.7,356.5 1136.1,355.0 1137.4,355.8 1138.8,355.4 1140.2,354.8 1141.6,355.9 1143.0,355.4 1144.3,354.6 1145.7,355.4 1147.1,354.8 1148.5,354.0 1149.9,354.5 1151.3,354.9 1152.6,355.0 1154.0,354.7 1155.4,354.6 1156.8,354.7 1158.2,354.4 1159.5,355.1 1160.9,354.6 1162.3,354.6 1163.7,354.8 1165.1,354.0 1166.5,354.1 1167.8,355.3 1169.2,354.7 1170.6,354.4 1172.0,354.7 1173.4,354.3 1174.7,354.6 1176.1,354.2 1177.5,354.6 1178.9,353.7 1180.3,355.2 1181.7,354.2 1183.0,353.7 1184.4,354.4 1185.8,354.3 1187.2,354.6 1188.6,353.9 1189.9,354.7 1191.3,356.3 1192.7,353.9 1194.1,354.7 1195.5,354.3 1196.8,354.6 1198.2,353.6 1199.6,353.9 1201.0,354.7 1202.4,354.5 1203.8,355.3 1205.1,354.1 1206.5,354.6 1207.9,356.0 1209.3,354.1 1210.7,354.0 1212.0,354.5 1213.4,354.5 1214.8,354.9 1216.2,354.6 1217.6,354.1 1219.0,354.6 1220.3,355.8 1221.7,355.1 1223.1,353.1 1224.5,354.4 1225.9,354.1 1227.2,354.8 1228.6,354.4 1230.0,355.5 1231.4,355.0 1232.8,354.9 1234.2,354.6 1235.5,354.5 1236.9,354.7 1238.3,355.1 1239.7,354.8 1241.1,354.3 1242.4,355.1 1243.8,354.6 1245.2,354.5 1246.6,354.1 1248.0,354.2 1249.4,354.2 1250.7,353.1 1252.1,355.0 1253.5,354.8 1254.9,354.4 1256.3,355.0 1257.6,354.7 1259.0,354.7 1260.4,353.3 1261.8,354.4 1263.2,354.8 1264.5,355.3 1265.9,355.4 1267.3,355.2 1268.7,353.9 1270.1,353.4 1271.5,354.8 1272.8,354.5 1274.2,355.0 1275.6,354.4 1277.0,354.6 1278.4,353.8 1279.7,354.7 1281.1,354.3 1282.5,354.7 1283.9,354.7 1285.3,354.4 1286.7,354.7 1288.0,354.5 1289.4,354.9 1290.8,354.8 1292.2,354.2 1293.6,354.2 1294.9,355.4 1296.3,354.4 1297.7,355.0 1299.1,354.7 1300.5,354.2 1301.9,354.1 1303.2,354.6 1304.6,354.6 1306.0,354.8 1307.4,353.9 1308.8,354.2 1310.1,354.5 1311.5,355.3 1312.9,353.3 1314.3,354.7 1315.7,354.2 1317.0,354.7 1318.4,354.3 1319.8,354.7 1321.2,355.3 1322.6,354.7 1324.0,354.7 1325.3,354.7 1326.7,354.1 1328.1,354.8 1329.5,354.4 1330.9,354.1 1332.2,354.5 1333.6,354.4 1335.0,354.9 1336.4,354.5 1337.8,354.2 1339.2,355.2 1340.5,355.0 1341.9,355.1 1343.3,354.8 1344.7,354.4 1346.1,354.3 1347.4,354.4 1348.8,355.0 1350.2,354.6 1351.6,353.8 1353.0,354.5 1354.4,353.8 1355.7,354.6 1357.1,353.9 1358.5,353.9 1359.9,354.6 1361.3,354.5 1362.6,353.7 1364.0,354.9 1365.4,355.6 1366.8,353.8 1368.2,355.4 1369.6,354.2 1370.9,354.3 1372.3,354.4 1373.7,353.8 1375.1,355.1 1376.5,354.7 1377.8,354.1 1379.2,354.4 1380.6,353.7 1382.0,354.3 1383.4,355.0 1384.7,353.6 1386.1,354.3 1387.5,354.6 1388.9,355.0 1390.3,355.2 1391.7,354.3 1393.0,354.1 1394.4,354.7 1395.8,354.3 1397.2,354.3 1398.6,355.0 1399.9,355.3 1401.3,354.6 1402.7,354.4 1404.1,354.8 1405.5,353.6 1406.9,354.5 1408.2,354.0 1409.6,355.7 1411.0,354.9 1412.4,354.6 1413.8,354.4 1415.1,353.2 1416.5,354.9 1417.9,355.3 1419.3,354.1 1420.7,354.8 1422.1,354.9 1423.4,353.7 1424.8,355.0 1426.2,355.2 1427.6,354.6 1429.0,354.5 1430.3,354.9 1431.7,353.7 1433.1,354.5 1434.5,355.0 1435.9,353.9 1437.3,355.0 1438.6,354.3 1440.0,353.5 1441.4,354.4 1442.8,354.0 1444.2,354.7 1445.5,353.9 1446.9,355.0 1448.3,354.1 1449.7,354.7 1451.1,354.2 1452.4,354.3 1453.8,355.1 1455.2,354.6 1456.6,354.3 1458.0,353.9 1459.4,355.1 1460.7,354.9 1462.1,354.3 1463.5,354.6 1464.9,354.0 1466.3,354.0 1467.6,354.1 1469.0,354.7 1470.4,354.6 1471.8,354.1 1473.2,354.9 1474.6,354.9 1475.9,354.6 1477.3,355.0 1478.7,354.4 1480.1,354.4 1481.5,354.7 1482.8,354.5 1484.2,354.9 1485.6,353.9 1487.0,355.2 1488.4,354.1 1489.8,354.4 1491.1,353.8 1492.5,354.8 1493.9,355.1 1495.3,355.0 1496.7,354.9 1498.0,353.7 1499.4,354.1 1500.8,354.3 1502.2,354.0 1503.6,355.1 1505.0,354.6 1506.3,354.5 1507.7,354.7 1509.1,354.0 1510.5,354.0 1511.9,354.1 1513.2,354.7 1514.6,354.7 1516.0,354.8 1517.4,355.0 1518.8,353.8 1520.1,354.2 1521.5,354.6 1522.9,353.8 1524.3,354.2 1525.7,355.0 1527.1,355.1 1528.4,355.0 1529.8,354.5 1531.2,354.4 1532.6,355.0 1534.0,354.3 1535.3,354.7 1536.7,355.2 1538.1,354.3 1539.5,354.2 1540.9,354.5 1542.3,354.8 1543.6,354.7 1545.0,354.6 1546.4,354.8 1547.8,353.7 1549.2,354.1 1550.5,354.6 1551.9,354.0 1553.3,353.8 1554.7,353.9 1556.1,354.0 1557.5,354.4 1558.8,354.0 1560.2,354.6 1561.6,355.3 1563.0,354.4 1564.4,355.1 1565.7,354.6 1567.1,353.9 1568.5,354.4 1569.9,354.0 1571.3,354.9 1572.7,353.9 1574.0,355.2 1575.4,354.8 1576.8,353.5 1578.2,354.9 1579.6,355.3 1580.9,354.1 1582.3,355.0 1583.7,353.6 1585.1,354.6 1586.5,353.7 1587.8,354.7 1589.2,353.6 1590.6,353.2 1592.0,354.7 1593.4,355.6 1594.8,354.2 1596.1,354.9 1597.5,354.6 1598.9,354.3 1600.3,354.8 1601.7,355.3 1603.0,353.9 1604.4,354.8 1605.8,354.7 1607.2,353.8 1608.6,355.3 1610.0,355.5 1611.3,354.0 1612.7,355.4 1614.1,354.5 1615.5,354.4 1616.9,355.3 1618.2,354.6 1619.6,354.7 1621.0,355.3 1622.4,355.1 1623.8,354.9 1625.2,353.8 1626.5,353.7 1627.9,355.1 1629.3,354.0 1630.7,354.6 1632.1,354.0 1633.4,354.4 1634.8,353.9 1636.2,355.3 1637.6,354.0 1639.0,354.4 1640.4,354.4 1641.7,355.1 1643.1,353.8 1644.5,354.5 1645.9,354.4 1647.3,354.8 1648.6,354.7 1650.0,354.3 1651.4,354.6 1652.8,354.3 1654.2,354.7 1655.5,354.4 1656.9,354.2 1658.3,354.5 1659.7,354.7 1661.1,355.6 1662.5,354.3 1663.8,354.7 1665.2,355.2 1666.6,353.5 1668.0,353.6 1669.4,353.9 1670.7,354.4 1672.1,355.7 1673.5,354.7 1674.9,355.1 1676.3,354.4 1677.7,353.3 1679.0,353.3 1680.4,355.0 1681.8,354.6 1683.2,353.9 1684.6,355.1 1685.9,353.7 1687.3,355.1 1688.7,355.2 1690.1,354.1 1691.5,353.9 1692.9,354.9 1694.2,354.0 1695.6,354.9 1697.0,353.9 1698.4,354.9 1699.8,354.5 1701.1,354.3 1702.5,354.1 1703.9,354.6 1705.3,353.6 1706.7,354.4 1708.0,354.3 1709.4,354.8 1710.8,353.9 1712.2,355.4 1713.6,354.3 1715.0,353.9 1716.3,355.2 1717.7,355.3 1719.1,354.4 1720.5,354.1 1721.9,354.5 1723.2,354.2 1724.6,354.3 1726.0,355.3 1727.4,354.7 1728.8,354.6 1730.2,354.7 1731.5,354.5 1732.9,354.9 1734.3,354.9 1735.7,354.3 1737.1,354.6 1738.4,355.7 1739.8,354.7 1741.2,354.4 1742.6,355.5 1744.0,354.5 1745.4,354.0 1746.7,354.8 1748.1,354.1 1749.5,354.3 1750.9,354.7 1752.3,354.4 1753.6,354.1 1755.0,354.2 1756.4,354.2 1757.8,355.1 1759.2,354.1 1760.6,354.2 1761.9,355.5 1763.3,354.2 1764.7,355.2 1766.1,355.2 1767.5,354.4 1768.8,353.8 1770.2,354.7 1771.6,354.8 1773.0,355.0 1774.4,354.5 1775.7,355.1 1777.1,355.2 1778.5,354.0 1779.9,355.2 1781.3,354.6 1782.7,354.2 1784.0,354.3 1785.4,355.4 1786.8,355.0 1788.2,353.6 1789.6,354.5 1790.9,354.4 1792.3,354.4 1793.7,354.2 1795.1,353.8 1796.5,354.9 1797.9,354.0 1799.2,354.3 1800.6,354.2 1802.0,354.1 1803.4,354.9 1804.8,354.7 1806.1,354.2 1807.5,354.0 1808.9,354.3 1810.3,355.0 1811.7,354.6 1813.1,354.6 1814.4,354.3 1815.8,354.4 1817.2,354.6 1818.6,353.6 1820.0,355.3 1821.3,354.1 1822.7,354.2 1824.1,355.2 1825.5,354.6 1826.9,354.5 1828.3,354.2 1829.6,353.7 1831.0,354.6 1832.4,355.1 1833.8,354.1 1835.2,355.2 1836.5,353.9 1837.9,354.1 1839.3,354.8 1840.7,354.5 1842.1,354.8 1843.4,354.1 1844.8,354.0 1846.2,353.6 1847.6,353.9 1849.0,354.0 1850.4,353.8 1851.7,354.7 1853.1,354.2 1854.5,353.5 1855.9,355.7 1857.3,354.1 1858.6,353.9 1860.0,355.1 1861.4,355.1 1862.8,353.9 1864.2,353.8 1865.6,354.0 1866.9,355.1 1868.3,354.3 1869.7,354.1 1869.7,451.4 1868.3,451.5 1866.9,451.5 1865.6,451.7 1864.2,451.5 1862.8,451.7 1861.4,451.4 1860.0,451.5 1858.6,452.3 1857.3,452.0 1855.9,452.2 1854.5,452.4 1853.1,452.2 1851.7,451.8 1850.4,451.6 1849.0,451.8 1847.6,451.5 1846.2,452.4 1844.8,451.5 1843.4,451.8 1842.1,452.0 1840.7,451.5 1839.3,452.6 1837.9,451.5 1836.5,452.0 1835.2,452.1 1833.8,451.8 1832.4,451.7 1831.0,452.4 1829.6,451.7 1828.3,451.7 1826.9,452.4 1825.5,451.4 1824.1,452.5 1822.7,451.9 1821.3,451.5 1820.0,451.4 1818.6,451.8 1817.2,451.6 1815.8,452.3 1814.4,451.5 1813.1,451.7 1811.7,451.6 1810.3,452.3 1808.9,451.7 1807.5,452.3 1806.1,451.4 1804.8,452.0 1803.4,452.3 1802.0,451.4 1800.6,452.0 1799.2,451.9 1797.9,451.9 1796.5,451.5 1795.1,451.6 1793.7,451.5 1792.3,451.9 1790.9,451.6 1789.6,451.7 1788.2,451.7 1786.8,451.6 1785.4,451.9 1784.0,451.7 1782.7,451.6 1781.3,451.4 1779.9,451.8 1778.5,452.2 1777.1,451.9 1775.7,452.0 1774.4,451.5 1773.0,451.5 1771.6,452.2 1770.2,452.2 1768.8,452.1 1767.5,451.5 1766.1,451.5 1764.7,452.6 1763.3,451.6 1761.9,453.1 1760.6,452.4 1759.2,452.4 1757.8,451.4 1756.4,451.6 1755.0,451.7 1753.6,452.4 1752.3,452.1 1750.9,451.5 1749.5,451.5 1748.1,451.6 1746.7,452.5 1745.4,451.7 1744.0,452.2 1742.6,451.6 1741.2,451.5 1739.8,451.4 1738.4,452.7 1737.1,451.8 1735.7,451.5 1734.3,451.4 1732.9,452.4 1731.5,452.1 1730.2,451.5 1728.8,451.7 1727.4,451.9 1726.0,451.6 1724.6,452.2 1723.2,451.7 1721.9,451.5 1720.5,451.9 1719.1,451.5 1717.7,452.2 1716.3,451.4 1715.0,451.7 1713.6,452.4 1712.2,452.2 1710.8,451.6 1709.4,451.5 1708.0,452.8 1706.7,451.9 1705.3,452.9 1703.9,451.9 1702.5,451.5 1701.1,451.9 1699.8,451.9 1698.4,451.7 1697.0,451.9 1695.6,452.0 1694.2,452.3 1692.9,451.8 1691.5,451.7 1690.1,452.6 1688.7,451.6 1687.3,452.3 1685.9,451.7 1684.6,451.4 1683.2,452.1 1681.8,452.0 1680.4,452.4 1679.0,451.5 1677.7,451.5 1676.3,451.4 1674.9,451.8 1673.5,451.9 1672.1,451.5 1670.7,452.1 1669.4,452.2 1668.0,451.7 1666.6,451.7 1665.2,451.4 1663.8,451.5 1662.5,452.0 1661.1,451.9 1659.7,452.1 1658.3,451.7 1656.9,451.7 1655.5,452.0 1654.2,451.9 1652.8,452.3 1651.4,451.7 1650.0,451.6 1648.6,452.2 1647.3,451.6 1645.9,452.2 1644.5,451.7 1643.1,451.9 1641.7,451.6 1640.4,451.9 1639.0,451.5 1637.6,451.5 1636.2,451.8 1634.8,451.8 1633.4,452.8 1632.1,451.5 1630.7,451.5 1629.3,451.4 1627.9,451.9 1626.5,452.1 1625.2,452.8 1623.8,451.7 1622.4,451.6 1621.0,452.4 1619.6,452.1 1618.2,452.4 1616.9,451.8 1615.5,451.5 1614.1,452.2 1612.7,451.5 1611.3,451.6 1610.0,452.1 1608.6,451.9 1607.2,451.8 1605.8,451.6 1604.4,451.8 1603.0,451.8 1601.7,451.6 1600.3,452.1 1598.9,451.6 1597.5,451.4 1596.1,451.6 1594.8,452.0 1593.4,451.9 1592.0,451.9 1590.6,451.8 1589.2,451.8 1587.8,451.5 1586.5,452.0 1585.1,452.0 1583.7,452.1 1582.3,451.9 1580.9,451.9 1579.6,452.0 1578.2,452.0 1576.8,451.6 1575.4,451.6 1574.0,452.7 1572.7,451.8 1571.3,452.9 1569.9,452.2 1568.5,451.7 1567.1,451.7 1565.7,451.8 1564.4,451.6 1563.0,451.7 1561.6,451.9 1560.2,451.5 1558.8,451.9 1557.5,451.8 1556.1,451.5 1554.7,451.7 1553.3,452.0 1551.9,452.0 1550.5,453.3 1549.2,452.7 1547.8,452.0 1546.4,452.4 1545.0,451.4 1543.6,452.0 1542.3,452.1 1540.9,451.4 1539.5,451.7 1538.1,452.2 1536.7,452.4 1535.3,451.7 1534.0,451.6 1532.6,451.9 1531.2,451.9 1529.8,451.5 1528.4,451.6 1527.1,451.4 1525.7,452.1 1524.3,451.7 1522.9,452.3 1521.5,452.3 1520.1,451.9 1518.8,451.6 1517.4,451.6 1516.0,451.6 1514.6,452.4 1513.2,452.1 1511.9,452.1 1510.5,451.4 1509.1,451.6 1507.7,451.6 1506.3,451.6 1505.0,452.0 1503.6,451.7 1502.2,451.5 1500.8,451.6 1499.4,452.2 1498.0,451.7 1496.7,451.9 1495.3,451.7 1493.9,451.4 1492.5,451.7 1491.1,451.4 1489.8,451.8 1488.4,452.1 1487.0,451.8 1485.6,451.5 1484.2,451.4 1482.8,451.6 1481.5,452.5 1480.1,451.6 1478.7,451.4 1477.3,451.5 1475.9,451.7 1474.6,451.6 1473.2,451.6 1471.8,451.5 1470.4,452.4 1469.0,451.6 1467.6,451.7 1466.3,451.5 1464.9,452.3 1463.5,451.4 1462.1,451.9 1460.7,452.1 1459.4,451.8 1458.0,452.2 1456.6,452.0 1455.2,451.8 1453.8,452.2 1452.4,452.4 1451.1,451.6 1449.7,451.9 1448.3,451.5 1446.9,451.5 1445.5,451.6 1444.2,452.1 1442.8,451.4 1441.4,451.8 1440.0,452.2 1438.6,452.2 1437.3,452.0 1435.9,451.9 1434.5,452.1 1433.1,451.5 1431.7,451.5 1430.3,452.3 1429.0,451.9 1427.6,452.0 1426.2,451.4 1424.8,451.5 1423.4,452.7 1422.1,451.4 1420.7,451.5 1419.3,452.9 1417.9,452.4 1416.5,451.5 1415.1,451.4 1413.8,451.8 1412.4,451.8 1411.0,451.9 1409.6,451.6 1408.2,451.9 1406.9,451.5 1405.5,451.4 1404.1,452.2 1402.7,452.0 1401.3,452.1 1399.9,451.7 1398.6,451.7 1397.2,451.8 1395.8,452.0 1394.4,451.4 1393.0,451.4 1391.7,451.7 1390.3,451.7 1388.9,451.9 1387.5,451.6 1386.1,451.8 1384.7,452.1 1383.4,452.3 1382.0,451.7 1380.6,452.4 1379.2,451.9 1377.8,452.0 1376.5,451.7 1375.1,451.5 1373.7,451.7 1372.3,452.0 1370.9,451.5 1369.6,452.2 1368.2,452.0 1366.8,452.0 1365.4,451.5 1364.0,451.4 1362.6,451.5 1361.3,452.1 1359.9,452.0 1358.5,451.5 1357.1,451.7 1355.7,451.7 1354.4,451.8 1353.0,451.7 1351.6,451.6 1350.2,452.0 1348.8,451.8 1347.4,452.6 1346.1,452.6 1344.7,451.5 1343.3,452.3 1341.9,451.9 1340.5,451.9 1339.2,451.7 1337.8,452.1 1336.4,451.9 1335.0,452.0 1333.6,452.2 1332.2,452.2 1330.9,451.8 1329.5,451.7 1328.1,452.2 1326.7,451.5 1325.3,452.2 1324.0,451.7 1322.6,451.5 1321.2,452.2 1319.8,452.0 1318.4,451.6 1317.0,451.7 1315.7,451.7 1314.3,451.5 1312.9,451.9 1311.5,451.6 1310.1,452.5 1308.8,451.4 1307.4,451.9 1306.0,452.2 1304.6,451.7 1303.2,452.0 1301.9,451.6 1300.5,451.9 1299.1,451.5 1297.7,451.7 1296.3,451.5 1294.9,451.6 1293.6,452.4 1292.2,451.8 1290.8,451.8 1289.4,451.6 1288.0,451.8 1286.7,452.1 1285.3,451.5 1283.9,451.7 1282.5,452.1 1281.1,451.8 1279.7,451.8 1278.4,452.3 1277.0,451.9 1275.6,452.9 1274.2,451.5 1272.8,451.8 1271.5,452.1 1270.1,451.5 1268.7,451.6 1267.3,451.6 1265.9,451.8 1264.5,451.9 1263.2,451.6 1261.8,452.8 1260.4,451.7 1259.0,451.8 1257.6,451.9 1256.3,451.9 1254.9,451.5 1253.5,451.4 1252.1,451.5 1250.7,452.2 1249.4,451.5 1248.0,452.0 1246.6,452.3 1245.2,452.1 1243.8,451.8 1242.4,452.3 1241.1,451.8 1239.7,451.9 1238.3,453.2 1236.9,451.9 1235.5,452.0 1234.2,451.8 1232.8,451.6 1231.4,451.9 1230.0,451.8 1228.6,451.9 1227.2,453.1 1225.9,451.5 1224.5,451.8 1223.1,452.0 1221.7,452.0 1220.3,451.7 1219.0,452.3 1217.6,452.2 1216.2,451.6 1214.8,451.7 1213.4,451.6 1212.0,451.7 1210.7,451.7 1209.3,451.6 1207.9,451.9 1206.5,451.4 1205.1,452.2 1203.8,452.1 1202.4,451.4 1201.0,452.3 1199.6,451.9 1198.2,451.7 1196.8,451.9 1195.5,451.8 1194.1,452.4 1192.7,451.8 1191.3,451.6 1189.9,452.2 1188.6,452.1 1187.2,451.5 1185.8,451.7 1184.4,452.7 1183.0,451.4 1181.7,452.0 1180.3,451.4 1178.9,452.5 1177.5,451.9 1176.1,452.5 1174.7,451.7 1173.4,452.3 1172.0,451.5 1170.6,451.7 1169.2,451.7 1167.8,452.3 1166.5,451.9 1165.1,452.1 1163.7,451.6 1162.3,452.5 1160.9,452.1 1159.5,451.5 1158.2,451.5 1156.8,451.5 1155.4,452.5 1154.0,451.8 1152.6,451.6 1151.3,451.5 1149.9,452.2 1148.5,451.8 1147.1,451.5 1145.7,451.7 1144.3,451.9 1143.0,451.4 1141.6,451.8 1140.2,452.1 1138.8,451.8 1137.4,452.0 1136.1,451.7 1134.7,451.8 1133.3,451.9 1131.9,451.4 1130.5,451.4 1129.1,453.4 1127.8,452.5 1126.4,451.6 1125.0,450.9 1123.6,451.5 1122.2,451.1 1120.9,453.2 1119.5,450.1 1118.1,450.6 1116.7,450.0 1115.3,449.9 1114.0,452.5 1112.6,449.4 1111.2,450.2 1109.8,450.4 1108.4,449.2 1107.0,451.0 1105.7,449.4 1104.3,448.6 1102.9,449.2 1101.5,449.7 1100.1,449.0 1098.8,448.7 1097.4,449.4 1096.0,447.7 1094.6,447.7 1093.2,447.7 1091.8,449.5 1090.5,447.6 1089.1,447.6 1087.7,448.1 1086.3,446.8 1084.9,446.6 1083.6,448.8 1082.2,447.8 1080.8,447.5 1079.4,447.4 1078.0,445.9 1076.6,448.3 1075.3,445.7 1073.9,446.4 1072.5,445.4 1071.1,445.2 1069.7,444.9 1068.4,444.9 1067.0,445.3 1065.6,444.9 1064.2,445.3 1062.8,444.2 1061.4,445.4 1060.1,443.8 1058.7,444.5 1057.3,445.8 1055.9,444.4 1054.5,445.3 1053.2,443.4 1051.8,443.2 1050.4,443.2 1049.0,444.8 1047.6,443.3 1046.3,442.6 1044.9,443.6 1043.5,442.3 1042.1,443.5 1040.7,442.7 1039.3,442.9 1038.0,442.3 1036.6,442.7 1035.2,442.1 1033.8,443.2 1032.4,440.9 1031.1,441.3 1029.7,441.4 1028.3,441.4 1026.9,440.5 1025.5,440.7 1024.1,440.1 1022.8,442.7 1021.4,441.1 1020.0,442.4 1018.6,440.2 1017.2,440.3 1015.9,439.3 1014.5,439.4 1013.1,441.0 1011.7,438.9 1010.3,439.9 1008.9,439.8 1007.6,439.4 1006.2,438.3 1004.8,438.6 1003.4,439.0 1002.0,440.4 1000.7,439.8 999.3,438.2 997.9,438.3 996.5,437.3 995.1,437.5 993.7,437.9 992.4,437.1 991.0,437.6 989.6,437.0 988.2,437.3 986.8,436.2 985.5,436.5 984.1,437.8 982.7,435.8 981.3,435.7 979.9,435.8 978.6,435.2 977.2,436.2 975.8,435.6 974.4,436.5 973.0,436.2 971.6,435.2 970.3,434.7 968.9,437.4 967.5,434.7 966.1,435.1 964.7,434.7 963.4,434.2 962.0,434.1 960.6,433.7 959.2,434.0 957.8,435.0 956.4,433.9 955.1,433.0 953.7,434.0 952.3,434.2 950.9,433.3 949.5,434.4 948.2,432.2 946.8,432.9 945.4,432.0 944.0,434.2 942.6,432.3 941.2,431.3 939.9,432.2 938.5,432.3 937.1,432.5 935.7,432.1 934.3,432.1 933.0,433.4 931.6,431.0 930.2,430.9 928.8,430.4 927.4,432.5 926.1,431.6 924.7,431.5 923.3,432.7 921.9,429.5 920.5,429.8 919.1,429.1 917.8,429.0 916.4,429.7 915.0,429.6 913.6,428.7 912.2,428.6 910.9,428.5 909.5,428.2 908.1,428.8 906.7,429.2 905.3,427.5 903.9,429.6 902.6,428.8 901.2,427.8 899.8,427.2 898.4,427.2 897.0,427.4 895.7,428.4 894.3,428.1 892.9,427.2 891.5,427.1 890.1,426.7 888.7,426.2 887.4,427.1 886.0,426.4 884.6,426.3 883.2,427.3 881.8,427.2 880.5,425.4 879.1,424.8 877.7,426.4 876.3,425.8 874.9,424.7 873.5,425.7 872.2,426.1 870.8,424.6 869.4,424.1 868.0,424.2 866.6,426.2 865.3,424.8 863.9,424.0 862.5,424.2 861.1,425.5 859.7,423.7 858.4,423.8 857.0,422.5 855.6,424.4 854.2,422.7 852.8,422.9 851.4,425.1 850.1,422.0 848.7,422.5 847.3,421.7 845.9,422.0 844.5,421.8 843.2,422.1 841.8,421.1 840.4,422.1 839.0,420.7 837.6,421.3 836.2,422.0 834.9,420.1 833.5,419.9 832.1,421.2 830.7,420.2 829.3,420.4 828.0,419.7 826.6,421.4 825.2,420.3 823.8,420.2 822.4,422.4 821.0,419.5 819.7,418.6 818.3,419.1 816.9,419.3 815.5,418.4 814.1,419.0 812.8,419.0 811.4,417.9 810.0,417.8 808.6,419.8 807.2,417.8 805.8,417.2 804.5,417.5 803.1,417.4 801.7,418.6 800.3,416.4 798.9,416.5 797.6,417.4 796.2,416.3 794.8,416.5 793.4,416.2 792.0,416.9 790.7,416.3 789.3,415.6 787.9,415.6 786.5,415.3 785.1,419.1 783.7,415.8 782.4,414.8 781.0,417.0 779.6,414.5 778.2,414.7 776.8,414.7 775.5,414.3 774.1,417.0 772.7,416.2" fill="#209fdf"/>
<polygon points="772.7,395.0 774.1,395.6 775.5,395.4 776.8,394.4 778.2,394.4 779.6,394.2 781.0,394.6 782.4,394.2 783.7,394.5 785.1,393.1 786.5,394.7 787.9,393.8 789.3,394.1 790.7,393.5 792.0,393.3 793.4,393.6 794.8,393.6 796.2,393.0 797.6,392.8 798.9,393.1 800.3,392.2 801.7,391.7 803.1,392.5 804.5,391.9 805.8,391.1 807.2,391.5 808.6,391.5 810.0,391.0 811.4,390.7 812.8,391.4 814.1,391.6 815.5,390.9 816.9,390.5 818.3,391.0 819.7,391.0 821.0,390.3 822.4,390.6 823.8,390.7 825.2,389.9 826.6,389.5 828.0,389.9 829.3,389.7 830.7,390.0 832.1,388.7 833.5,388.9 834.9,388.6 836.2,388.0 837.6,388.8 839.0,388.9 840.4,388.1 841.8,389.0 843.2,388.6 844.5,388.4 845.9,388.1 847.3,388.2 848.7,386.9 850.1,387.8 851.4,387.6 852.8,386.3 854.2,387.2 855.6,386.8 857.0,387.1 858.4,386.4 859.7,386.4 861.1,386.5 862.5,385.7 863.9,386.3 865.3,385.8 866.6,386.0 868.0,385.3 869.4,386.0 870.8,385.6 872.2,385.1 873.5,385.3 874.9,385.5 876.3,385.6 877.7,383.8 879.1,384.9 880.5,384.5 881.8,384.1 883.2,383.5 884.6,384.5 886.0,383.1 887.4,383.9 888.7,384.1 890.1,382.5 891.5,383.0 892.9,382.4 894.3,383.0 895.7,383.5 897.0,383.6 898.4,381.5 899.8,382.0 901.2,382.5 902.6,382.8 903.9,382.0 905.3,381.3 906.7,381.6 908.1,381.3 909.5,381.0 910.9,380.6 912.2,381.0 913.6,380.7 915.0,380.4 916.4,380.1 917.8,379.4 919.1,379.6 920.5,380.3 921.9,379.4 923.3,378.6 924.7,379.8 926.1,379.3 927.4,379.9 928.8,378.7 930.2,378.2 931.6,377.6 933.0,378.8 934.3,379.2 935.7,377.4 937.1,377.3 938.5,377.7 939.9,376.8 941.2,376.9 942.6,376.7 944.0,376.8 945.4,377.1 946.8,376.4 948.2,376.6 949.5,375.8 950.9,376.0 952.3,374.6 953.7,374.8 955.1,375.7 956.4,374.9 957.8,375.3 959.2,375.1 960.6,375.3 962.0,374.9 963.4,374.8 964.7,374.1 966.1,373.7 967.5,373.5 968.9,373.4 970.3,372.9 971.6,373.1 973.0,373.1 974.4,373.1 975.8,372.7 977.2,371.7 978.6,372.5 979.9,372.4 981.3,372.7 982.7,372.3 984.1,371.5 985.5,371.3 986.8,372.5 988.2,371.7 989.6,372.1 991.0,372.1 992.4,370.4 993.7,370.9 995.1,370.7 996.5,370.6 997.9,370.4 999.3,370.1 1000.7,369.9 1002.0,368.9 1003.4,369.4 1004.8,369.0 1006.2,369.2 1007.6,368.8 1008.9,369.1 1010.3,369.1 1011.7,368.7 1013.1,368.5 1014.5,368.2 1015.9,367.8 1017.2,367.8 1018.6,367.4 1020.0,367.7 1021.4,367.3 1022.8,367.5 1024.1,366.3 1025.5,367.3 1026.9,366.3 1028.3,366.1 1029.7,366.2 1031.1,365.9 1032.4,366.1 1033.8,365.5 1035.2,365.1 1036.6,365.1 1038.0,366.0 1039.3,365.2 1040.7,364.4 1042.1,364.9 1043.5,364.0 1044.9,365.5 1046.3,363.7 1047.6,364.6 1049.0,364.5 1050.4,363.3 1051.8,364.1 1053.2,364.3 1054.5,363.9 1055.9,363.6 1057.3,363.8 1058.7,363.3 1060.1,363.3 1061.4,362.9 1062.8,363.1 1064.2,362.2 1065.6,363.0 1067.0,362.2 1068.4,361.7 1069.7,362.3 1071.1,362.9 1072.5,362.4 1073.9,361.5 1075.3,362.0 1076.6,361.2 1078.0,361.3 1079.4,361.2 1080.8,359.9 1082.2,361.0 1083.6,360.3 1084.9,360.3 1086.3,359.8 1087.7,359.6 1089.1,359.8 1090.5,360.5 1091.8,360.8 1093.2,359.8 1094.6,360.3 1096.0,359.4 1097.4,358.5 1098.8,359.4 1100.1,359.4 1101.5,358.8 1102.9,359.0 1104.3,359.0 1105.7,358.2 1107.0,357.7 1108.4,358.2 1109.8,358.1 1111.2,357.9 1112.6,358.4 1114.0,358.7 1115.3,357.5 1116.7,357.9 1118.1,357.9 1119.5,357.6 1120.9,357.7 1122.2,356.8 1123.6,357.2 1125.0,357.7 1126.4,357.0 1127.8,356.1 1129.1,356.6 1130.5,356.8 1131.9,356.2 1133.3,355.6 1134.7,356.5 1136.1,355.0 1137.4,355.8 1138.8,355.4 1140.2,354.8 1141.6,355.9 1143.0,355.4 1144.3,354.6 1145.7,355.4 1147.1,354.8 1148.5,354.0 1149.9,354.5 1151.3,354.9 1152.6,355.0 1154.0,354.7 1155.4,354.6 1156.8,354.7 1158.2,354.4 1159.5,355.1 1160.9,354.6 1162.3,354.6 1163.7,354.8 1165.1,354.0 1166.5,354.1 1167.8,355.3 1169.2,354.7 1170.6,354.4 1172.0,354.7 1173.4,354.3 1174.7,354.6 1176.1,354.2 1177.5,354.6 1178.9,353.7 1180.3,355.2 1181.7,354.2 1183.0,353.7 1184.4,354.4 1185.8,354.3 1187.2,354.6 1188.6,353.9 1189.9,354.7 1191.3,356.3 1192.7,353.9 1194.1,354.7 1195.5,354.3 1196.8,354.6 1198.2,353.6 1199.6,353.9 1201.0,354.7 1202.4,354.5 1203.8,355.3 1205.1,354.1 1206.5,354.6 1207.9,356.0 1209.3,354.1 1210.7,354.0 1212.0,354.5 1213.4,354.5 1214.8,354.9 1216.2,354.6 1217.6,354.1 1219.0,354.6 1220.3,355.8 1221.7,355.1 1223.1,353.1 1224.5,354.4 1225.9,354.1 1227.2,354.8 1228.6,354.4 1230.0,355.5 1231.4,355.0 1232.8,354.9 1234.2,354.6 1235.5,354.5 1236.9,354.7 1238.3,355.1 1239.7,354.8 1241.1,354.3 1242.4,355.1 1243.8,354.6 1245.2,354.5 1246.6,354.1 1248.0,354.2 1249.4,354.2 1250.7,353.1 1252.1,355.0 1253.5,354.8 1254.9,354.4 1256.3,355.0 1257.6,354.7 1259.0,354.7 1260.4,353.3 1261.8,354.4 1263.2,354.8 1264.5,355.3 1265.9,355.4 1267.3,355.2 1268.7,353.9 1270.1,353.4 1271.5,354.8 1272.8,354.5 1274.2,355.0 1275.6,354.4 1277.0,354.6 1278.4,353.8 1279.7,354.7 1281.1,354.3 1282.5,354.7 1283.9,354.7 1285.3,354.4 1286.7,354.7 1288.0,354.5 1289.4,354.9 1290.8,354.8 1292.2,354.2 1293.6,354.2 1294.9,355.4 1296.3,354.4 1297.7,355.0 1299.1,354.7 1300.5,354.2 1301.9,354.1 1303.2,354.6 1304.6,354.6 1306.0,354.8 1307.4,353.9 1308.8,354.2 1310.1,354.5 1311.5,355.3 1312.9,353.3 1314.3,354.7 1315.7,354.2 1317.0,354.7 1318.4,354.3 1319.8,354.7 1321.2,355.3 1322.6,354.7 1324.0,354.7 1325.3,354.7 1326.7,354.1 1328.1,354.8 1329.5,354.4 1330.9,354.1 1332.2,354.5 1333.6,354.4 1335.0,354.9 1336.4,354.5 1337.8,354.2 1339.2,355.2 1340.5,355.0 1341.9,355.1 1343.3,354.8 1344.7,354.4 1346.1,354.3 1347.4,354.4 1348.8,355.0 1350.2,354.6 1351.6,353.8 1353.0,354.5 1354.4,353.8 1355.7,354.6 1357.1,353.9 1358.5,353.9 1359.9,354.6 1361.3,354.5 1362.6,353.7 1364.0,354.9 1365.4,355.6 1366.8,353.8 1368.2,355.4 1369.6,354.2 1370.9,354.3 1372.3,354.4 1373.7,353.8 1375.1,355.1 1376.5,354.7 1377.8,354.1 1379.2,354.4 1380.6,353.7 1382.0,354.3 1383.4,355.0 1384.7,353.6 1386.1,354.3 1387.5,354.6 1388.9,355.0 1390.3,355.2 1391.7,354.3 1393.0,354.1 1394.4,354.7 1395.8,354.3 1397.2,354.3 1398.6,355.0 1399.9,355.3 1401.3,354.6 1402.7,354.4 1404.1,354.8 1405.5,353.6 1406.9,354.5 1408.2,354.0 1409.6,355.7 1411.0,354.9 1412.4,354.6 1413.8,354.4 1415.1,353.2 1416.5,354.9 1417.9,355.3 1419.3,354.1 1420.7,354.8 1422.1,354.9 1423.4,353.7 1424.8,355.0 1426.2,355.2 1427.6,354.6 1429.0,354.5 1430.3,354.9 1431.7,353.7 1433.1,354.5 1434.5,355.0 1435.9,353.9 1437.3,355.0 1438.6,354.3 1440.0,353.5 1441.4,354.4 1442.8,354.0 1444.2,354.7 1445.5,353.9 1446.9,355.0 1448.3,354.1 1449.7,354.7 1451.1,354.2 1452.4,354.3 1453.8,355.1 1455.2,354.6 1456.6,354.3 1458.0,353.9 1459.4,355.1 1460.7,354.9 1462.1,354.3 1463.5,354.6 1464.9,354.0 1466.3,354.0 1467.6,354.1 1469.0,354.7 1470.4,354.6 1471.8,354.1 1473.2,354.9 1474.6,354.9 1475.9,354.6 1477.3,355.0 1478.7,354.4 1480.1,354.4 1481.5,354.7 1482.8,354.5 1484.2,354.9 1485.6,353.9 1487.0,355.2 1488.4,354.1 1489.8,354.4 1491.1,353.8 1492.5,354.8 1493.9,355.1 1495.3,355.0 1496.7,354.9 1498.0,353.7 1499.4,354.1 1500.8,354.3 1502.2,354.0 1503.6,355.1 1505.0,354.6 1506.3,354.5 1507.7,354.7 1509.1,354.0 1510.5,354.0 1511.9,354.1 1513.2,354.7 1514.6,354.7 1516.0,354.8 1517.4,355.0 1518.8,353.8 1520.1,354.2 1521.5,354.6 1522.9,353.8 1524.3,354.2 1525.7,355.0 1527.1,355.1 1528.4,355.0 1529.8,354.5 1531.2,354.4 1532.6,355.0 1534.0,354.3 1535.3,354.7 1536.7,355.2 1538.1,354.3 1539.5,354.2 1540.9,354.5 1542.3,354.8 1543.6,354.7 1545.0,354.6 1546.4,354.8 1547.8,353.7 1549.2,354.1 1550.5,354.6 1551.9,354.0 1553.3,353.8 1554.7,353.9 1556.1,354.0 1557.5,354.4 1558.8,354.0 1560.2,354.6 1561.6,355.3 1563.0,354.4 1564.4,355.1 1565.7,354.6 1567.1,353.9 1568.5,354.4 1569.9,354.0 1571.3,354.9 1572.7,353.9 1574.0,355.2 1575.4,354.8 1576.8,353.5 1578.2,354.9 1579.6,355.3 1580.9,354.1 1582.3,355.0 1583.7,353.6 1585.1,354.6 1586.5,353.7 1587.8,354.7 1589.2,353.6 1590.6,353.2 1592.0,354.7 1593.4,355.6 1594.8,354.2 1596.1,354.9 1597.5,354.6 1598.9,354.3 1600.3,354.8 1601.7,355.3 1603.0,353.9 1604.4,354.8 1605.8,354.7 1607.2,353.8 1608.6,355.3 1610.0,355.5 1611.3,354.0 1612.7,355.4 1614.1,354.5 1615.5,354.4 1616.9,355.3 1618.2,354.6 1619.6,354.7 1621.0,355.3 1622.4,355.1 1623.8,354.9 1625.2,353.8 1626.5,353.7 1627.9,355.1 1629.3,354.0 1630.7,354.6 1632.1,354.0 1633.4,354.4 1634.8,353.9 1636.2,355.3 1637.6,354.0 1639.0,354.4 1640.4,354.4 1641.7,355.1 1643.1,353.8 1644.5,354.5 1645.9,354.4 1647.3,354.8 1648.6,354.7 1650.0,354.3 1651.4,354.6 1652.8,354.3 1654.2,354.7 1655.5,354.4 1656.9,354.2 1658.3,354.5 1659.7,354.7 1661.1,355.6 1662.5,354.3 1663.8,354.7 1665.2,355.2 1666.6,353.5 1668.0,353.6 1669.4,353.9 1670.7,354.4 1672.1,355.7 1673.5,354.7 1674.9,355.1 1676.3,354.4 1677.7,353.3 1679.0,353.3 1680.4,355.0 1681.8,354.6 1683.2,353.9 1684.6,355.1 1685.9,353.7 1687.3,355.1 1688.7,355.2 1690.1,354.1 1691.5,353.9 1692.9,354.9 1694.2,354.0 1695.6,354.9 1697.0,353.9 1698.4,354.9 1699.8,354.5 1701.1,354.3 1702.5,354.1 1703.9,354.6 1705.3,353.6 1706.7,354.4 1708.0,354.3 1709.4,354.8 1710.8,353.9 1712.2,355.4 1713.6,354.3 1715.0,353.9 1716.3,355.2 1717.7,355.3 1719.1,354.4 1720.5,354.1 1721.9,354.5 1723.2,354.2 1724.6,354.3 1726.0,355.3 1727.4,354.7 1728.8,354.6 1730.2,354.7 1731.5,354.5 1732.9,354.9 1734.3,354.9 1735.7,354.3 1737.1,354.6 1738.4,355.7 1739.8,354.7 1741.2,354.4 1742.6,355.5 1744.0,354.5 1745.4,354.0 1746.7,354.8 1748.1,354.1 1749.5,354.3 1750.9,354.7 1752.3,354.4 1753.6,354.1 1755.0,354.2 1756.4,354.2 1757.8,355.1 1759.2,354.1 1760.6,354.2 1761.9,355.5 1763.3,354.2 1764.7,355.2 1766.1,355.2 1767.5,354.4 1768.8,353.8 1770.2,354.7 1771.6,354.8 1773.0,355.0 1774.4,354.5 1775.7,355.1 1777.1,355.2 1778.5,354.0 1779.9,355.2 1781.3,354.6 1782.7,354.2 1784.0,354.3 1785.4,355.4 1786.8,355.0 1788.2,353.6 1789.6,354.5 1790.9,354.4 1792.3,354.4 1793.7,354.2 1795.1,353.8 1796.5,354.9 1797.9,354.0 1799.2,354.3 1800.6,354.2 1802.0,354.1 1803.4,354.9 1804.8,354.7 1806.1,354.2 1807.5,354.0 1808.9,354.3 1810.3,355.0 1811.7,354.6 1813.1,354.6 1814.4,354.3 1815.8,354.4 1817.2,354.6 1818.6,353.6 1820.0,355.3 1821.3,354.1 1822.7,354.2 1824.1,355.2 1825.5,354.6 1826.9,354.5 1828.3,354.2 1829.6,353.7 1831.0,354.6 1832.4,355.1 1833.8,354.1 1835.2,355.2 1836.5,353.9 1837.9,354.1 1839.3,354.8 1840.7,354.5 1842.1,354.8 1843.4,354.1 1844.8,354.0 1846.2,353.6 1847.6,353.9 1849.0,354.0 1850.4,353.8 1851.7,354.7 1853.1,354.2 1854.5,353.5 1855.9,355.7 1857.3,354.1 1858.6,353.9 1860.0,355.1 1861.4,355.1 1862.8,353.9 1864.2,353.8 1865.6,354.0 1866.9,355.1 1868.3,354.3 1869.7,354.1 1869.7,451.7 1868.3,451.7 1866.9,451.6 1865.6,452.0 1864.2,452.0 1862.8,451.8 1861.4,451.9 1860.0,451.5 1858.6,451.6 1857.3,452.1 1855.9,451.4 1854.5,451.5 1853.1,451.6 1851.7,451.7 1850.4,451.9 1849.0,451.6 1847.6,452.0 1846.2,451.8 1844.8,452.5 1843.4,451.9 1842.1,451.6 1840.7,451.6 1839.3,451.4 1837.9,451.6 1836.5,451.9 1835.2,451.5 1833.8,451.8 1832.4,451.7 1831.0,451.8 1829.6,451.4 1828.3,451.6 1826.9,451.8 1825.5,451.5 1824.1,452.2 1822.7,451.7 1821.3,451.6 1820.0,451.8 1818.6,451.5 1817.2,451.7 1815.8,451.5 1814.4,451.6 1813.1,452.1 1811.7,451.6 1810.3,451.6 1808.9,451.8 1807.5,451.5 1806.1,451.7 1804.8,451.8 1803.4,451.4 1802.0,451.4 1800.6,451.5 1799.2,451.4 1797.9,451.5 1796.5,451.5 1795.1,451.5 1793.7,452.2 1792.3,451.8 1790.9,451.5 1789.6,451.6 1788.2,451.5 1786.8,451.8 1785.4,451.6 1784.0,452.1 1782.7,451.5 1781.3,451.8 1779.9,451.4 1778.5,451.8 1777.1,451.5 1775.7,452.0 1774.4,451.8 1773.0,451.8 1771.6,451.7 1770.2,452.1 1768.8,451.5 1767.5,451.5 1766.1,451.7 1764.7,451.9 1763.3,451.5 1761.9,451.9 1760.6,451.9 1759.2,451.6 1757.8,451.7 1756.4,451.4 1755.0,451.6 1753.6,451.5 1752.3,451.8 1750.9,451.8 1749.5,452.0 1748.1,451.9 1746.7,451.6 1745.4,451.6 1744.0,451.6 1742.6,452.1 1741.2,451.8 1739.8,451.9 1738.4,451.9 1737.1,451.6 1735.7,451.4 1734.3,451.6 1732.9,451.5 1731.5,451.7 1730.2,451.7 1728.8,451.6 1727.4,452.1 1726.0,451.7 1724.6,452.2 1723.2,452.1 1721.9,451.9 1720.5,451.5 1719.1,451.8 1717.7,451.5 1716.3,451.5 1715.0,451.6 1713.6,451.6 1712.2,452.0 1710.8,451.9 1709.4,451.6 1708.0,451.6 1706.7,452.0 1705.3,451.7 1703.9,451.7 1702.5,451.5 1701.1,451.4 1699.8,451.4 1698.4,451.6 1697.0,451.7 1695.6,451.4 1694.2,452.1 1692.9,451.7 1691.5,452.2 1690.1,451.7 1688.7,451.7 1687.3,451.7 1685.9,452.1 1684.6,451.5 1683.2,451.9 1681.8,451.8 1680.4,451.7 1679.0,451.4 1677.7,451.4 1676.3,451.6 1674.9,452.1 1673.5,451.4 1672.1,451.9 1670.7,451.6 1669.4,452.0 1668.0,451.5 1666.6,451.7 1665.2,451.9 1663.8,451.7 1662.5,451.7 1661.1,452.2 1659.7,451.6 1658.3,452.2 1656.9,451.4 1655.5,452.7 1654.2,451.6 1652.8,451.7 1651.4,452.3 1650.0,452.1 1648.6,451.9 1647.3,451.7 1645.9,452.2 1644.5,452.0 1643.1,451.7 1641.7,451.6 1640.4,451.5 1639.0,451.9 1637.6,451.8 1636.2,452.2 1634.8,451.8 1633.4,451.4 1632.1,451.5 1630.7,451.7 1629.3,451.7 1627.9,452.3 1626.5,451.5 1625.2,451.5 1623.8,451.9 1622.4,452.4 1621.0,451.5 1619.6,451.5 1618.2,451.7 1616.9,452.0 1615.5,452.0 1614.1,451.8 1612.7,451.7 1611.3,451.4 1610.0,451.6 1608.6,451.9 1607.2,451.7 1605.8,451.6 1604.4,451.5 1603.0,451.7 1601.7,452.2 1600.3,451.5 1598.9,451.9 1597.5,451.5 1596.1,451.9 1594.8,451.7 1593.4,451.5 1592.0,451.4 1590.6,451.4 1589.2,451.8 1587.8,451.8 1586.5,451.8 1585.1,451.7 1583.7,451.4 1582.3,451.4 1580.9,451.8 1579.6,451.6 1578.2,451.7 1576.8,451.8 1575.4,451.6 1574.0,452.4 1572.7,451.9 1571.3,451.7 1569.9,451.5 1568.5,452.0 1567.1,452.0 1565.7,451.5 1564.4,451.4 1563.0,451.5 1561.6,451.5 1560.2,451.4 1558.8,451.7 1557.5,451.5 1556.1,451.4 1554.7,451.6 1553.3,451.9 1551.9,452.7 1550.5,451.7 1549.2,452.0 1547.8,451.6 1546.4,451.5 1545.0,452.4 1543.6,451.6 1542.3,451.4 1540.9,451.5 1539.5,451.6 1538.1,452.1 1536.7,451.9 1535.3,451.8 1534.0,451.5 1532.6,451.4 1531.2,452.1 1529.8,451.8 1528.4,451.6 1527.1,452.1 1525.7,451.6 1524.3,451.5 1522.9,451.5 1521.5,451.7 1520.1,452.2 1518.8,452.2 1517.4,451.4 1516.0,451.5 1514.6,451.9 1513.2,451.6 1511.9,451.9 1510.5,451.9 1509.1,451.8 1507.7,452.0 1506.3,451.9 1505.0,451.5 1503.6,451.4 1502.2,451.7 1500.8,451.8 1499.4,452.2 1498.0,451.5 1496.7,451.5 1495.3,452.2 1493.9,451.8 1492.5,451.7 1491.1,451.4 1489.8,451.5 1488.4,452.2 1487.0,452.1 1485.6,452.1 1484.2,452.0 1482.8,452.0 1481.5,451.5 1480.1,451.8 1478.7,451.5 1477.3,451.6 1475.9,451.8 1474.6,451.6 1473.2,451.5 1471.8,451.5 1470.4,451.5 1469.0,451.4 1467.6,452.6 1466.3,451.5 1464.9,451.4 1463.5,451.8 1462.1,451.8 1460.7,451.7 1459.4,451.7 1458.0,451.8 1456.6,451.7 1455.2,451.7 1453.8,452.2 1452.4,451.8 1451.1,451.6 1449.7,452.0 1448.3,452.0 1446.9,451.9 1445.5,451.5 1444.2,451.6 1442.8,451.7 1441.4,451.5 1440.0,451.6 1438.6,451.5 1437.3,451.7 1435.9,451.6 1434.5,451.8 1433.1,451.5 1431.7,451.6 1430.3,451.7 1429.0,451.6 1427.6,451.7 1426.2,452.0 1424.8,451.8 1423.4,452.0 1422.1,451.5 1420.7,451.6 1419.3,451.7 1417.9,452.1 1416.5,451.5 1415.1,451.4 1413.8,451.5 1412.4,452.1 1411.0,451.6 1409.6,451.8 1408.2,451.6 1406.9,451.8 1405.5,452.1 1404.1,451.4 1402.7,451.7 1401.3,451.6 1399.9,451.5 1398.6,451.9 1397.2,451.5 1395.8,451.8 1394.4,451.7 1393.0,451.4 1391.7,451.8 1390.3,451.7 1388.9,451.7 1387.5,451.9 1386.1,451.9 1384.7,451.7 1383.4,452.2 1382.0,451.5 1380.6,451.6 1379.2,451.9 1377.8,451.5 1376.5,451.7 1375.1,451.7 1373.7,451.7 1372.3,451.5 1370.9,452.0 1369.6,451.9 1368.2,451.4 1366.8,451.9 1365.4,451.6 1364.0,451.5 1362.6,451.9 1361.3,452.1 1359.9,451.5 1358.5,451.6 1357.1,451.6 1355.7,451.9 1354.4,451.7 1353.0,451.7 1351.6,451.9 1350.2,451.6 1348.8,451.5 1347.4,452.0 1346.1,451.8 1344.7,451.5 1343.3,451.6 1341.9,451.5 1340.5,451.8 1339.2,451.8 1337.8,451.7 1336.4,451.5 1335.0,451.5 1333.6,451.6 1332.2,451.6 1330.9,451.8 1329.5,452.1 1328.1,452.0 1326.7,451.6 1325.3,452.1 1324.0,451.8 1322.6,451.5 1321.2,451.7 1319.8,451.4 1318.4,451.7 1317.0,452.0 1315.7,451.6 1314.3,451.8 1312.9,451.7 1311.5,451.7 1310.1,451.7 1308.8,451.9 1307.4,451.5 1306.0,452.1 1304.6,451.6 1303.2,451.7 1301.9,451.6 1300.5,451.6 1299.1,451.8 1297.7,451.5 1296.3,451.5 1294.9,451.6 1293.6,451.6 1292.2,451.8 1290.8,452.0 1289.4,451.4 1288.0,451.5 1286.7,451.7 1285.3,452.0 1283.9,451.5 1282.5,451.5 1281.1,452.5 1279.7,452.4 1278.4,451.4 1277.0,451.5 1275.6,451.6 1274.2,451.6 1272.8,451.7 1271.5,451.5 1270.1,451.6 1268.7,451.6 1267.3,451.6 1265.9,451.4 1264.5,451.6 1263.2,451.6 1261.8,451.6 1260.4,451.8 1259.0,451.7 1257.6,451.4 1256.3,451.5 1254.9,452.1 1253.5,451.9 1252.1,451.6 1250.7,452.0 1249.4,451.6 1248.0,451.5 1246.6,452.0 1245.2,451.7 1243.8,451.9 1242.4,451.9 1241.1,451.9 1239.7,451.4 1238.3,452.2 1236.9,451.5 1235.5,451.9 1234.2,451.8 1232.8,451.5 1231.4,451.4 1230.0,451.7 1228.6,451.7 1227.2,451.7 1225.9,451.4 1224.5,451.9 1223.1,451.4 1221.7,451.6 1220.3,452.1 1219.0,451.6 1217.6,451.6 1216.2,451.8 1214.8,452.2 1213.4,451.9 1212.0,452.5 1210.7,451.6 1209.3,451.9 1207.9,451.7 1206.5,451.7 1205.1,452.0 1203.8,451.8 1202.4,451.9 1201.0,451.5 1199.6,452.2 1198.2,451.8 1196.8,451.5 1195.5,451.8 1194.1,451.6 1192.7,451.7 1191.3,451.7 1189.9,451.4 1188.6,451.9 1187.2,451.8 1185.8,451.8 1184.4,452.0 1183.0,451.6 1181.7,451.7 1180.3,451.5 1178.9,451.7 1177.5,451.8 1176.1,451.7 1174.7,451.7 1173.4,451.8 1172.0,451.4 1170.6,451.5 1169.2,451.5 1167.8,451.6 1166.5,452.4 1165.1,451.4 1163.7,451.4 1162.3,451.4 1160.9,451.9 1159.5,451.9 1158.2,451.5 1156.8,451.5 1155.4,451.4 1154.0,451.5 1152.6,451.5 1151.3,451.7 1149.9,452.1 1148.5,451.9 1147.1,451.7 1145.7,451.4 1144.3,451.9 1143.0,452.1 1141.6,451.7 1140.2,451.9 1138.8,451.6 1137.4,451.5 1136.1,451.6 1134.7,451.4 1133.3,451.5 1131.9,452.1 1130.5,452.5 1129.1,451.9 1127.8,451.8 1126.4,451.1 1125.0,450.9 1123.6,450.8 1122.2,450.7 1120.9,450.5 1119.5,450.2 1118.1,451.4 1116.7,450.6 1115.3,449.7 1114.0,450.1 1112.6,450.0 1111.2,450.4 1109.8,449.2 1108.4,449.5 1107.0,449.1 1105.7,449.8 1104.3,448.5 1102.9,448.9 1101.5,448.4 1100.1,448.5 1098.8,448.6 1097.4,448.2 1096.0,447.9 1094.6,448.5 1093.2,447.5 1091.8,448.1 1090.5,448.1 1089.1,449.0 1087.7,447.5 1086.3,446.7 1084.9,448.4 1083.6,447.4 1082.2,446.3 1080.8,447.2 1079.4,447.0 1078.0,445.9 1076.6,448.1 1075.3,445.5 1073.9,445.3 1072.5,445.9 1071.1,445.1 1069.7,445.0 1068.4,445.7 1067.0,444.8 1065.6,445.2 1064.2,445.8 1062.8,445.7 1061.4,444.1 1060.1,444.4 1058.7,444.4 1057.3,444.1 1055.9,444.3 1054.5,444.3 1053.2,443.1 1051.8,443.5 1050.4,444.7 1049.0,443.1 1047.6,443.8 1046.3,443.3 1044.9,443.4 1043.5,442.1 1042.1,443.6 1040.7,442.0 1039.3,442.1 1038.0,442.3 1036.6,441.7 1035.2,442.1 1033.8,441.5 1032.4,440.9 1031.1,441.3 1029.7,441.5 1028.3,442.9 1026.9,441.2 1025.5,440.6 1024.1,442.0 1022.8,441.6 1021.4,439.8 1020.0,439.8 1018.6,439.6 1017.2,439.9 1015.9,439.5 1014.5,439.5 1013.1,441.0 1011.7,439.9 1010.3,439.4 1008.9,439.3 1007.6,439.1 1006.2,439.9 1004.8,439.5 1003.4,438.4 1002.0,438.3 1000.7,437.7 999.3,438.4 997.9,438.1 996.5,437.7 995.1,437.9 993.7,437.0 992.4,437.5 991.0,436.9 989.6,436.6 988.2,436.5 986.8,436.8 985.5,437.4 984.1,436.3 982.7,436.0 981.3,437.1 979.9,435.4 978.6,436.5 977.2,436.0 975.8,435.9 974.4,436.5 973.0,436.0 971.6,434.5 970.3,435.7 968.9,434.8 967.5,434.8 966.1,434.2 964.7,434.6 963.4,434.3 962.0,433.6 960.6,433.9 959.2,434.8 957.8,433.5 956.4,433.3 955.1,433.5 953.7,432.9 952.3,433.1 950.9,432.4 949.5,432.6 948.2,432.4 946.8,431.9 945.4,432.6 944.0,432.5 942.6,431.7 941.2,431.5 939.9,432.2 938.5,432.7 937.1,431.2 935.7,431.0 934.3,431.5 933.0,430.5 931.6,431.2 930.2,430.7 928.8,430.5 927.4,429.8 926.1,430.5 924.7,430.4 923.3,429.7 921.9,430.8 920.5,430.5 919.1,429.4 917.8,430.5 916.4,428.8 915.0,428.9 913.6,428.5 912.2,428.7 910.9,428.7 909.5,428.4 908.1,428.2 906.7,427.9 905.3,427.8 903.9,427.5 902.6,428.9 901.2,428.2 899.8,427.4 898.4,428.0 897.0,426.7 895.7,426.9 894.3,426.3 892.9,426.5 891.5,427.1 890.1,426.4 888.7,426.9 887.4,426.5 886.0,425.8 884.6,426.3 883.2,426.0 881.8,425.3 880.5,425.7 879.1,425.9 877.7,425.7 876.3,425.6 874.9,425.1 873.5,424.9 872.2,424.1 870.8,424.1 869.4,423.8 868.0,423.9 866.6,424.0 865.3,423.3 863.9,423.3 862.5,423.3 861.1,424.0 859.7,422.7 858.4,423.1 857.0,423.1 855.6,423.0 854.2,422.7 852.8,424.1 851.4,422.3 850.1,423.0 848.7,422.3 847.3,421.7 845.9,422.2 844.5,421.7 843.2,422.0 841.8,421.7 840.4,420.9 839.0,420.7 837.6,422.1 836.2,420.2 834.9,420.1 833.5,420.9 832.1,420.0 830.7,421.4 829.3,420.1 828.0,420.4 826.6,420.2 825.2,419.2 823.8,420.1 822.4,419.7 821.0,419.0 819.7,419.4 818.3,418.6 816.9,418.2 815.5,418.0 814.1,419.0 812.8,417.9 811.4,418.5 810.0,417.7 808.6,418.8 807.2,417.9 805.8,417.4 804.5,417.4 803.1,416.8 801.7,417.1 800.3,417.1 798.9,416.7 797.6,416.7 796.2,417.0 794.8,415.9 793.4,417.2 792.0,415.7 790.7,416.8 789.3,416.1 787.9,416.2 786.5,415.2 785.1,416.3 783.7,415.3 782.4,415.2 781.0,414.9 779.6,414.3 778.2,415.1 776.8,414.3 775.5,414.0 774.1,414.8 772.7,414.2" fill="#99ca53"/>
<polygon points="772.7,395.0 774.1,395.6 775.5,395.4 776.8,394.4 778.2,394.4 779.6,394.2 781.0,394.6 782.4,394.2 783.7,394.5 785.1,393.1 786.5,394.7 787.9,393.8 789.3,394.1 790.7,393.5 792.0,393.3 793.4,393.6 794.8,393.6 796.2,393.0 797.6,392.8 798.9,393.1 800.3,392.2 801.7,391.7 803.1,392.5 804.5,391.9 805.8,391.1 807.2,391.5 808.6,391.5 810.0,391.0 811.4,390.7 812.8,391.4 814.1,391.6 815.5,390.9 816.9,390.5 818.3,391.0 819.7,391.0 821.0,390.3 822.4,390.6 823.8,390.7 825.2,389.9 826.6,389.5 828.0,389.9 829.3,389.7 830.7,390.0 832.1,388.7 833.5,388.9 834.9,388.6 836.2,388.0 837.6,388.8 839.0,388.9 840.4,388.1 841.8,389.0 843.2,388.6 844.5,388.4 845.9,388.1 847.3,388.2 848.7,386.9 850.1,387.8 851.4,387.6 852.8,386.3 854.2,387.2 855.6,386.8 857.0,387.1 858.4,386.4 859.7,386.4 861.1,386.5 862.5,385.7 863.9,386.3 865.3,385.8 866.6,386.0 868.0,385.3 869.4,386.0 870.8,385.6 872.2,385.1 873.5,385.3 874.9,385.5 876.3,385.6 877.7,383.8 879.1,384.9 880.5,384.5 881.8,384.1 883.2,383.5 884.6,384.5 886.0,383.1 887.4,383.9 888.7,384.1 890.1,382.5 891.5,383.0 892.9,382.4 894.3,383.0 895.7,383.5 897.0,383.6 898.4,381.5 899.8,382.0 901.2,382.5 902.6,382.8 903.9,382.0 905.3,381.3 906.7,381.6 908.1,381.3 909.5,381.0 910.9,380.6 912.2,381.0 913.6,380.7 915.0,380.4 916.4,380.1 917.8,379.4 919.1,379.6 920.5,380.3 921.9,379.4 923.3,378.6 924.7,379.8 926.1,379.3 927.4,379.9 928.8,378.7 930.2,378.2 931.6,377.6 933.0,378.8 934.3,379.2 935.7,377.4 937.1,377.3 938.5,377.7 939.9,376.8 941.2,376.9 942.6,376.7 944.0,376.8 945.4,377.1 946.8,376.4 948.2,376.6 949.5,375.8 950.9,376.0 952.3,374.6 953.7,374.8 955.1,375.7 956.4,374.9 957.8,375.3 959.2,375.1 960.6,375.3 962.0,374.9 963.4,374.8 964.7,374.1 966.1,373.7 967.5,373.5 968.9,373.4 970.3,372.9 971.6,373.1 973.0,373.1 974.4,373.1 975.8,372.7 977.2,371.7 978.6,372.5 979.9,372.4 981.3,372.7 982.7,372.3 984.1,371.5 985.5,371.3 986.8,372.5 988.2,371.7 989.6,372.1 991.0,372.1 992.4,370.4 993.7,370.9 995.1,370.7 996.5,370.6 997.9,370.4 999.3,370.1 1000.7,369.9 1002.0,368.9 1003.4,369.4 1004.8,369.0 1006.2,369.2 1007.6,368.8 1008.9,369.1 1010.3,369.1 1011.7,368.7 1013.1,368.5 1014.5,368.2 1015.9,367.8 1017.2,367.8 1018.6,367.4 1020.0,367.7 1021.4,367.3 1022.8,367.5 1024.1,366.3 1025.5,367.3 1026.9,366.3 1028.3,366.1 1029.7,366.2 1031.1,365.9 1032.4,366.1 1033.8,365.5 1035.2,365.1 1036.6,365.1 1038.0,366.0 1039.3,365.2 1040.7,364.4 1042.1,364.9 1043.5,364.0 1044.9,365.5 1046.3,363.7 1047.6,364.6 1049.0,364.5 1050.4,363.3 1051.8,364.1 1053.2,364.3 1054.5,363.9 1055.9,363.6 1057.3,363.8 1058.7,363.3 1060.1,363.3 1061.4,362.9 1062.8,363.1 1064.2,362.2 1065.6,363.0 1067.0,362.2 1068.4,361.7 1069.7,362.3 1071.1,362.9 1072.5,362.4 1073.9,361.5 1075.3,362.0 1076.6,361.2 1078.0,361.3 1079.4,361.2 1080.8,359.9 1082.2,361.0 1083.6,360.3 1084.9,360.3 1086.3,359.8 1087.7,359.6 1089.1,359.8 1090.5,360.5 1091.8,360.8 1093.2,359.8 1094.6,360.3 1096.0,359.4 1097.4,358.5 1098.8,359.4 1100.1,359.4 1101.5,358.8 1102.9,359.0 1104.3,359.0 1105.7,358.2 1107.0,357.7 1108.4,358.2 1109.8,358.1 1111.2,357.9 1112.6,358.4 1114.0,358.7 1115.3,357.5 1116.7,357.9 1118.1,357.9 1119.5,357.6 1120.9,357.7 1122.2,356.8 1123.6,357.2 1125.0,357.7 1126.4,357.0 1127.8,356.1 1129.1,356.6 1130.5,356.8 1131.9,356.2 1133.3,355.6 1134.7,356.5 1136.1,355.0 1137.4,355.8 1138.8,355.4 1140.2,354.8 1141.6,355.9 1143.0,355.4 1144.3,354.6 1145.7,355.4 1147.1,354.8 1148.5,354.0 1149.9,354.5 1151.3,354.9 1152.6,355.0 1154.0,354.7 1155.4,354.6 1156.8,354.7 1158.2,354.4 1159.5,355.1 1160.9,354.6 1162.3,354.6 1163.7,354.8 1165.1,354.0 1166.5,354.1 1167.8,355.3 1169.2,354.7 1170.6,354.4 1172.0,354.7 1173.4,354.3 1174.7,354.6 1176.1,354.2 1177.5,354.6 1178.9,353.7 1180.3,355.2 1181.7,354.2 1183.0,353.7 1184.4,354.4 1185.8,354.3 1187.2,354.6 1188.6,353.9 1189.9,354.7 1191.3,356.3 1192.7,353.9 1194.1,354.7 1195.5,354.3 1196.8,354.6 1198.2,353.6 1199.6,353.9 1201.0,354.7 1202.4,354.5 1203.8,355.3 1205.1,354.1 1206.5,354.6 1207.9,356.0 1209.3,354.1 1210.7,354.0 1212.0,354.5 1213.4,354.5 1214.8,354.9 1216.2,354.6 1217.6,354.1 1219.0,354.6 1220.3,355.8 1221.7,355.1 1223.1,353.1 1224.5,354.4 1225.9,354.1 1227.2,354.8 1228.6,354.4 1230.0,355.5 1231.4,355.0 1232.8,354.9 1234.2,354.6 1235.5,354.5 1236.9,354.7 1238.3,355.1 1239.7,354.8 1241.1,354.3 1242.4,355.1 1243.8,354.6 1245.2,354.5 1246.6,354.1 1248.0,354.2 1249.4,354.2 1250.7,353.1 1252.1,355.0 1253.5,354.8 1254.9,354.4 1256.3,355.0 1257.6,354.7 1259.0,354.7 1260.4,353.3 1261.8,354.4 1263.2,354.8 1264.5,355.3 1265.9,355.4 1267.3,355.2 1268.7,353.9 1270.1,353.4 1271.5,354.8 1272.8,354.5 1274.2,355.0 1275.6,354.4 1277.0,354.6 1278.4,353.8 1279.7,354.7 1281.1,354.3 1282.5,354.7 1283.9,354.7 1285.3,354.4 1286.7,354.7 1288.0,354.5 1289.4,354.9 1290.8,354.8 1292.2,354.2 1293.6,354.2 1294.9,355.4 1296.3,354.4 1297.7,355.0 1299.1,354.7 1300.5,354.2 1301.9,354.1 1303.2,354.6 1304.6,354.6 1306.0,354.8 1307.4,353.9 1308.8,354.2 1310.1,354.5 1311.5,355.3 1312.9,353.3 1314.3,354.7 1315.7,354.2 1317.0,354.7 1318.4,354.3 1319.8,354.7 1321.2,355.3 1322.6,354.7 1324.0,354.7 1325.3,354.7 1326.7,354.1 1328.1,354.8 1329.5,354.4 1330.9,354.1 1332.2,354.5 1333.6,354.4 1335.0,354.9 1336.4,354.5 1337.8,354.2 1339.2,355.2 1340.5,355.0 1341.9,355.1 1343.3,354.8 1344.7,354.4 1346.1,354.3 1347.4,354.4 1348.8,355.0 1350.2,354.6 1351.6,353.8 1353.0,354.5 1354.4,353.8 1355.7,354.6 1357.1,353.9 1358.5,353.9 1359.9,354.6 1361.3,354.5 1362.6,353.7 1364.0,354.9 1365.4,355.6 1366.8,353.8 1368.2,355.4 1369.6,354.2 1370.9,354.3 1372.3,354.4 1373.7,353.8 1375.1,355.1 1376.5,354.7 1377.8,354.1 1379.2,354.4 1380.6,353.7 1382.0,354.3 1383.4,355.0 1384.7,353.6 1386.1,354.3 1387.5,354.6 1388.9,355.0 1390.3,355.2 1391.7,354.3 1393.0,354.1 1394.4,354.7 1395.8,354.3 1397.2,354.3 1398.6,355.0 1399.9,355.3 1401.3,354.6 1402.7,354.4 1404.1,354.8 1405.5,353.6 1406.9,354.5 1408.2,354.0 1409.6,355.7 1411.0,354.9 1412.4,354.6 1413.8,354.4 1415.1,353.2 1416.5,354.9 1417.9,355.3 1419.3,354.1 1420.7,354.8 1422.1,354.9 1423.4,353.7 1424.8,355.0 1426.2,355.2 1427.6,354.6 1429.0,354.5 1430.3,354.9 1431.7,353.7 1433.1,354.5 1434.5,355.0 1435.9,353.9 1437.3,355.0 1438.6,354.3 1440.0,353.5 1441.4,354.4 1442.8,354.0 1444.2,354.7 1445.5,353.9 1446.9,355.0 1448.3,354.1 1449.7,354.7 1451.1,354.2 1452.4,354.3 1453.8,355.1 1455.2,354.6 1456.6,354.3 1458.0,353.9 1459.4,355.1 1460.7,354.9 1462.1,354.3 1463.5,354.6 1464.9,354.0 1466.3,354.0 1467.6,354.1 1469.0,354.7 1470.4,354.6 1471.8,354.1 1473.2,354.9 1474.6,354.9 1475.9,354.6 1477.3,355.0 1478.7,354.4 1480.1,354.4 1481.5,354.7 1482.8,354.5 1484.2,354.9 1485.6,353.9 1487.0,355.2 1488.4,354.1 1489.8,354.4 1491.1,353.8 1492.5,354.8 1493.9,355.1 1495.3,355.0 1496.7,354.9 1498.0,353.7 1499.4,354.1 1500.8,354.3 1502.2,354.0 1503.6,355.1 1505.0,354.6 1506.3,354.5 1507.7,354.7 1509.1,354.0 1510.5,354.0 1511.9,354.1 1513.2,354.7 1514.6,354.7 1516.0,354.8 1517.4,355.0 1518.8,353.8 1520.1,354.2 1521.5,354.6 1522.9,353.8 1524.3,354.2 1525.7,355.0 1527.1,355.1 1528.4,355.0 1529.8,354.5 1531.2,354.4 1532.6,355.0 1534.0,354.3 1535.3,354.7 1536.7,355.2 1538.1,354.3 1539.5,354.2 1540.9,354.5 1542.3,354.8 1543.6,354.7 1545.0,354.6 1546.4,354.8 1547.8,353.7 1549.2,354.1 1550.5,354.6 1551.9,354.0 1553.3,353.8 1554.7,353.9 1556.1,354.0 1557.5,354.4 1558.8,354.0 1560.2,354.6 1561.6,355.3 1563.0,354.4 1564.4,355.1 1565.7,354.6 1567.1,353.9 1568.5,354.4 1569.9,354.0 1571.3,354.9 1572.7,353.9 1574.0,355.2 1575.4,354.8 1576.8,353.5 1578.2,354.9 1579.6,355.3 1580.9,354.1 1582.3,355.0 1583.7,353.6 1585.1,354.6 1586.5,353.7 1587.8,354.7 1589.2,353.6 1590.6,353.2 1592.0,354.7 1593.4,355.6 1594.8,354.2 1596.1,354.9 1597.5,354.6 1598.9,354.3 1600.3,354.8 1601.7,355.3 1603.0,353.9 1604.4,354.8 1605.8,354.7 1607.2,353.8 1608.6,355.3 1610.0,355.5 1611.3,354.0 1612.7,355.4 1614.1,354.5 1615.5,354.4 1616.9,355.3 1618.2,354.6 1619.6,354.7 1621.0,355.3 1622.4,355.1 1623.8,354.9 1625.2,353.8 1626.5,353.7 1627.9,355.1 1629.3,354.0 1630.7,354.6 1632.1,354.0 1633.4,354.4 1634.8,353.9 1636.2,355.3 1637.6,354.0 1639.0,354.4 1640.4,354.4 1641.7,355.1 1643.1,353.8 1644.5,354.5 1645.9,354.4 1647.3,354.8 1648.6,354.7 1650.0,354.3 1651.4,354.6 1652.8,354.3 1654.2,354.7 1655.5,354.4 1656.9,354.2 1658.3,354.5 1659.7,354.7 1661.1,355.6 1662.5,354.3 1663.8,354.7 1665.2,355.2 1666.6,353.5 1668.0,353.6 1669.4,353.9 1670.7,354.4 1672.1,355.7 1673.5,354.7 1674.9,355.1 1676.3,354.4 1677.7,353.3 1679.0,353.3 1680.4,355.0 1681.8,354.6 1683.2,353.9 1684.6,355.1 1685.9,353.7 1687.3,355.1 1688.7,355.2 1690.1,354.1 1691.5,353.9 1692.9,354.9 1694.2,354.0 1695.6,354.9 1697.0,353.9 1698.4,354.9 1699.8,354.5 1701.1,354.3 1702.5,354.1 1703.9,354.6 1705.3,353.6 1706.7,354.4 1708.0,354.3 1709.4,354.8 1710.8,353.9 1712.2,355.4 1713.6,354.3 1715.0,353.9 1716.3,355.2 1717.7,355.3 1719.1,354.4 1720.5,354.1 1721.9,354.5 1723.2,354.2 1724.6,354.3 1726.0,355.3 1727.4,354.7 1728.8,354.6 1730.2,354.7 1731.5,354.5 1732.9,354.9 1734.3,354.9 1735.7,354.3 1737.1,354.6 1738.4,355.7 1739.8,354.7 1741.2,354.4 1742.6,355.5 1744.0,354.5 1745.4,354.0 1746.7,354.8 1748.1,354.1 1749.5,354.3 1750.9,354.7 1752.3,354.4 1753.6,354.1 1755.0,354.2 1756.4,354.2 1757.8,355.1 1759.2,354.1 1760.6,354.2 1761.9,355.5 1763.3,354.2 1764.7,355.2 1766.1,355.2 1767.5,354.4 1768.8,353.8 1770.2,354.7 1771.6,354.8 1773.0,355.0 1774.4,354.5 1775.7,355.1 1777.1,355.2 1778.5,354.0 1779.9,355.2 1781.3,354.6 1782.7,354.2 1784.0,354.3 1785.4,355.4 1786.8,355.0 1788.2,353.6 1789.6,354.5 1790.9,354.4 1792.3,354.4 1793.7,354.2 1795.1,353.8 1796.5,354.9 1797.9,354.0 1799.2,354.3 1800.6,354.2 1802.0,354.1 1803.4,354.9 1804.8,354.7 1806.1,354.2 1807.5,354.0 1808.9,354.3 1810.3,355.0 1811.7,354.6 1813.1,354.6 1814.4,354.3 1815.8,354.4 1817.2,354.6 1818.6,353.6 1820.0,355.3 1821.3,354.1 1822.7,354.2 1824.1,355.2 1825.5,354.6 1826.9,354.5 1828.3,354.2 1829.6,353.7 1831.0,354.6 1832.4,355.1 1833.8,354.1 1835.2,355.2 1836.5,353.9 1837.9,354.1 1839.3,354.8 1840.7,354.5 1842.1,354.8 1843.4,354.1 1844.8,354.0 1846.2,353.6 1847.6,353.9 1849.0,354.0 1850.4,353.8 1851.7,354.7 1853.1,354.2 1854.5,353.5 1855.9,355.7 1857.3,354.1 1858.6,353.9 1860.0,355.1 1861.4,355.1 1862.8,353.9 1864.2,353.8 1865.6,354.0 1866.9,355.1 1868.3,354.3 1869.7,354.1 1869.7,451.5 1868.3,451.6 1866.9,451.1 1865.6,451.7 1864.2,451.2 1862.8,451.5 1861.4,451.2 1860.0,451.5 1858.6,451.2 1857.3,451.5 1855.9,451.5 1854.5,451.7 1853.1,451.3 1851.7,451.3 1850.4,451.3 1849.0,451.5 1847.6,451.3 1846.2,451.3 1844.8,451.5 1843.4,451.3 1842.1,451.1 1840.7,451.4 1839.3,451.1 1837.9,451.4 1836.5,451.2 1835.2,451.4 1833.8,451.4 1832.4,451.4 1831.0,451.4 1829.6,451.5 1828.3,451.2 1826.9,451.4 1825.5,451.5 1824.1,451.5 1822.7,451.3 1821.3,451.7 1820.0,451.4 1818.6,451.4 1817.2,451.5 1815.8,451.3 1814.4,451.5 1813.1,451.5 1811.7,451.3 1810.3,451.2 1808.9,451.4 1807.5,451.3 1806.1,451.4 1804.8,451.2 1803.4,451.3 1802.0,451.2 1800.6,451.1 1799.2,451.4 1797.9,451.1 1796.5,451.2 1795.1,451.4 1793.7,451.3 1792.3,451.4 1790.9,451.3 1789.6,451.5 1788.2,451.5 1786.8,451.3 1785.4,451.2 1784.0,451.5 1782.7,451.4 1781.3,451.6 1779.9,451.5 1778.5,451.9 1777.1,451.4 1775.7,451.3 1774.4,451.6 1773.0,451.4 1771.6,451.6 1770.2,451.4 1768.8,451.6 1767.5,451.3 1766.1,451.3 1764.7,451.4 1763.3,451.3 1761.9,451.3 1760.6,451.3 1759.2,451.4 1757.8,451.5 1756.4,451.4 1755.0,451.7 1753.6,451.4 1752.3,451.4 1750.9,451.5 1749.5,451.5 1748.1,451.5 1746.7,451.5 1745.4,451.3 1744.0,451.4 1742.6,451.3 1741.2,451.3 1739.8,451.3 1738.4,451.6 1737.1,451.4 1735.7,451.2 1734.3,451.3 1732.9,451.2 1731.5,451.1 1730.2,451.4 1728.8,451.4 1727.4,451.7 1726.0,451.5 1724.6,451.5 1723.2,451.5 1721.9,451.4 1720.5,451.5 1719.1,451.5 1717.7,451.3 1716.3,451.2 1715.0,451.2 1713.6,451.6 1712.2,451.7 1710.8,451.6 1709.4,451.3 1708.0,451.5 1706.7,451.1 1705.3,451.5 1703.9,451.3 1702.5,451.6 1701.1,451.2 1699.8,451.5 1698.4,451.6 1697.0,451.5 1695.6,451.5 1694.2,451.2 1692.9,451.5 1691.5,451.6 1690.1,451.5 1688.7,451.4 1687.3,451.2 1685.9,451.2 1684.6,451.5 1683.2,451.5 1681.8,451.4 1680.4,451.7 1679.0,451.3 1677.7,451.5 1676.3,451.4 1674.9,451.5 1673.5,451.6 1672.1,451.2 1670.7,451.4 1669.4,451.5 1668.0,451.4 1666.6,451.3 1665.2,451.5 1663.8,451.2 1662.5,451.6 1661.1,450.9 1659.7,451.5 1658.3,451.7 1656.9,451.4 1655.5,451.4 1654.2,451.2 1652.8,451.7 1651.4,451.5 1650.0,451.7 1648.6,451.8 1647.3,451.5 1645.9,451.5 1644.5,451.1 1643.1,451.3 1641.7,451.6 1640.4,451.6 1639.0,451.3 1637.6,451.7 1636.2,451.5 1634.8,451.3 1633.4,451.2 1632.1,451.3 1630.7,451.1 1629.3,451.2 1627.9,451.5 1626.5,451.6 1625.2,451.1 1623.8,451.3 1622.4,451.5 1621.0,451.3 1619.6,451.5 1618.2,451.2 1616.9,451.6 1615.5,451.6 1614.1,451.3 1612.7,451.3 1611.3,451.2 1610.0,451.3 1608.6,451.4 1607.2,451.4 1605.8,451.5 1604.4,451.2 1603.0,451.5 1601.7,451.3 1600.3,451.6 1598.9,451.4 1597.5,451.3 1596.1,451.5 1594.8,451.3 1593.4,451.3 1592.0,451.2 1590.6,451.4 1589.2,451.2 1587.8,451.1 1586.5,451.2 1585.1,451.4 1583.7,451.5 1582.3,451.6 1580.9,451.1 1579.6,451.6 1578.2,451.7 1576.8,451.6 1575.4,451.7 1574.0,451.5 1572.7,451.3 1571.3,451.6 1569.9,451.3 1568.5,451.2 1567.1,451.2 1565.7,451.4 1564.4,451.6 1563.0,451.2 1561.6,451.3 1560.2,451.7 1558.8,451.5 1557.5,451.2 1556.1,451.8 1554.7,451.1 1553.3,451.4 1551.9,451.7 1550.5,451.3 1549.2,451.7 1547.8,451.3 1546.4,451.3 1545.0,451.1 1543.6,451.4 1542.3,451.4 1540.9,451.3 1539.5,451.6 1538.1,451.6 1536.7,451.5 1535.3,450.8 1534.0,451.3 1532.6,451.6 1531.2,451.5 1529.8,451.5 1528.4,451.6 1527.1,451.1 1525.7,451.4 1524.3,451.3 1522.9,451.3 1521.5,451.1 1520.1,451.5 1518.8,451.0 1517.4,451.3 1516.0,451.4 1514.6,451.3 1513.2,451.3 1511.9,451.4 1510.5,451.5 1509.1,451.5 1507.7,451.1 1506.3,451.3 1505.0,451.5 1503.6,451.4 1502.2,451.5 1500.8,451.2 1499.4,451.4 1498.0,451.4 1496.7,451.0 1495.3,451.2 1493.9,451.4 1492.5,451.3 1491.1,451.6 1489.8,451.6 1488.4,451.4 1487.0,451.6 1485.6,451.1 1484.2,451.5 1482.8,451.3 1481.5,451.6 1480.1,451.6 1478.7,451.4 1477.3,451.4 1475.9,451.1 1474.6,451.3 1473.2,451.6 1471.8,451.4 1470.4,450.9 1469.0,451.2 1467.6,451.4 1466.3,451.3 1464.9,451.7 1463.5,451.4 1462.1,451.1 1460.7,451.6 1459.4,451.4 1458.0,451.4 1456.6,451.3 1455.2,451.4 1453.8,451.2 1452.4,451.7 1451.1,451.3 1449.7,451.4 1448.3,451.4 1446.9,451.8 1445.5,451.2 1444.2,451.4 1442.8,451.1 1441.4,451.2 1440.0,451.3 1438.6,451.4 1437.3,451.3 1435.9,451.5 1434.5,451.5 1433.1,451.5 1431.7,451.3 1430.3,451.4 1429.0,451.5 1427.6,451.3 1426.2,451.0 1424.8,451.3 1423.4,451.4 1422.1,451.4 1420.7,451.3 1419.3,451.5 1417.9,451.3 1416.5,451.5 1415.1,451.5 1413.8,451.6 1412.4,451.7 1411.0,451.4 1409.6,451.4 1408.2,451.7 1406.9,451.6 1405.5,451.5 1404.1,451.2 1402.7,451.4 1401.3,451.5 1399.9,451.5 1398.6,451.5 1397.2,451.4 1395.8,451.4 1394.4,451.3 1393.0,451.2 1391.7,451.5 1390.3,451.5 1388.9,451.2 1387.5,451.4 1386.1,451.6 1384.7,451.5 1383.4,451.4 1382.0,451.3 1380.6,451.7 1379.2,451.8 1377.8,451.5 1376.5,451.0 1375.1,451.4 1373.7,451.5 1372.3,451.2 1370.9,451.2 1369.6,451.2 1368.2,451.5 1366.8,451.2 1365.4,451.3 1364.0,451.5 1362.6,451.5 1361.3,451.3 1359.9,451.6 1358.5,451.3 1357.1,451.5 1355.7,451.5 1354.4,451.5 1353.0,451.4 1351.6,451.2 1350.2,451.4 1348.8,451.1 1347.4,451.5 1346.1,451.4 1344.7,451.0 1343.3,451.2 1341.9,451.3 1340.5,451.3 1339.2,451.3 1337.8,451.8 1336.4,451.2 1335.0,451.4 1333.6,451.2 1332.2,451.2 1330.9,451.3 1329.5,451.3 1328.1,451.4 1326.7,451.1 1325.3,451.5 1324.0,451.1 1322.6,451.5 1321.2,451.4 1319.8,451.3 1318.4,451.3 1317.0,451.4 1315.7,451.5 1314.3,451.5 1312.9,451.3 1311.5,450.9 1310.1,451.2 1308.8,451.3 1307.4,451.7 1306.0,451.6 1304.6,451.6 1303.2,451.5 1301.9,451.5 1300.5,451.5 1299.1,451.7 1297.7,451.3 1296.3,451.7 1294.9,451.2 1293.6,451.6 1292.2,451.3 1290.8,451.4 1289.4,451.1 1288.0,451.3 1286.7,451.4 1285.3,451.2 1283.9,451.5 1282.5,451.4 1281.1,451.3 1279.7,451.4 1278.4,451.3 1277.0,451.1 1275.6,451.6 1274.2,451.2 1272.8,451.7 1271.5,451.4 1270.1,451.4 1268.7,451.4 1267.3,451.5 1265.9,451.3 1264.5,451.1 1263.2,451.4 1261.8,451.1 1260.4,451.5 1259.0,451.3 1257.6,451.4 1256.3,451.4 1254.9,451.4 1253.5,451.3 1252.1,451.5 1250.7,451.5 1249.4,451.3 1248.0,451.5 1246.6,451.5 1245.2,451.2 1243.8,451.6 1242.4,451.6 1241.1,451.6 1239.7,451.8 1238.3,451.5 1236.9,451.6 1235.5,451.5 1234.2,451.4 1232.8,450.9 1231.4,451.4 1230.0,451.6 1228.6,451.4 1227.2,451.3 1225.9,451.2 1224.5,451.5 1223.1,451.5 1221.7,451.5 1220.3,451.6 1219.0,451.2 1217.6,451.4 1216.2,451.5 1214.8,451.5 1213.4,451.4 1212.0,451.3 1210.7,451.2 1209.3,451.4 1207.9,451.5 1206.5,451.4 1205.1,451.2 1203.8,451.4 1202.4,451.3 1201.0,451.3 1199.6,451.2 1198.2,451.5 1196.8,451.6 1195.5,451.4 1194.1,451.3 1192.7,451.4 1191.3,451.4 1189.9,451.2 1188.6,451.3 1187.2,451.6 1185.8,451.5 1184.4,451.7 1183.0,451.3 1181.7,451.4 1180.3,451.4 1178.9,451.4 1177.5,451.2 1176.1,451.4 1174.7,451.4 1173.4,451.3 1172.0,451.4 1170.6,451.6 1169.2,451.7 1167.8,451.5 1166.5,451.5 1165.1,451.3 1163.7,451.3 1162.3,451.7 1160.9,451.5 1159.5,451.3 1158.2,451.3 1156.8,451.4 1155.4,451.2 1154.0,451.9 1152.6,451.5 1151.3,451.6 1149.9,451.5 1148.5,451.5 1147.1,451.5 1145.7,451.5 1144.3,451.3 1143.0,451.1 1141.6,451.7 1140.2,451.1 1138.8,451.3 1137.4,451.4 1136.1,451.4 1134.7,451.4 1133.3,451.4 1131.9,452.0 1130.5,451.1 1129.1,451.4 1127.8,449.5 1126.4,450.7 1125.0,450.9 1123.6,450.0 1122.2,450.5 1120.9,450.3 1119.5,450.5 1118.1,449.8 1116.7,449.8 1115.3,449.7 1114.0,449.5 1112.6,449.5 1111.2,448.2 1109.8,449.4 1108.4,449.3 1107.0,448.6 1105.7,447.8 1104.3,447.7 1102.9,448.0 1101.5,449.3 1100.1,449.1 1098.8,448.9 1097.4,446.9 1096.0,447.2 1094.6,448.2 1093.2,447.3 1091.8,448.2 1090.5,447.2 1089.1,445.9 1087.7,446.0 1086.3,448.3 1084.9,446.4 1083.6,446.8 1082.2,446.3 1080.8,446.6 1079.4,445.6 1078.0,443.8 1076.6,446.5 1075.3,444.5 1073.9,444.1 1072.5,445.1 1071.1,445.6 1069.7,446.5 1068.4,442.4 1067.0,443.2 1065.6,444.4 1064.2,444.5 1062.8,444.0 1061.4,444.4 1060.1,444.2 1058.7,443.4 1057.3,442.8 1055.9,443.5 1054.5,443.1 1053.2,444.7 1051.8,442.9 1050.4,442.9 1049.0,442.8 1047.6,441.9 1046.3,441.5 1044.9,442.1 1043.5,442.3 1042.1,441.5 1040.7,441.6 1039.3,441.2 1038.0,439.6 1036.6,439.9 1035.2,441.5 1033.8,441.4 1032.4,441.4 1031.1,440.1 1029.7,439.3 1028.3,439.5 1026.9,440.5 1025.5,440.5 1024.1,439.7 1022.8,440.0 1021.4,438.8 1020.0,440.0 1018.6,439.4 1017.2,440.1 1015.9,439.3 1014.5,438.9 1013.1,440.4 1011.7,437.4 1010.3,437.9 1008.9,437.8 1007.6,438.3 1006.2,437.1 1004.8,438.4 1003.4,437.7 1002.0,438.6 1000.7,437.0 999.3,437.8 997.9,438.2 996.5,437.0 995.1,437.3 993.7,437.5 992.4,436.6 991.0,437.2 989.6,437.3 988.2,437.3 986.8,436.4 985.5,436.0 984.1,435.3 982.7,436.4 981.3,435.2 979.9,434.5 978.6,435.7 977.2,435.9 975.8,435.5 974.4,435.3 973.0,435.6 971.6,434.2 970.3,434.4 968.9,434.8 967.5,433.1 966.1,433.8 964.7,433.8 963.4,433.0 962.0,434.0 960.6,434.0 959.2,433.8 957.8,432.5 956.4,432.5 955.1,432.6 953.7,432.0 952.3,431.0 950.9,431.3 949.5,432.6 948.2,432.1 946.8,431.1 945.4,430.2 944.0,431.1 942.6,431.5 941.2,430.7 939.9,431.4 938.5,429.9 937.1,431.5 935.7,430.0 934.3,431.5 933.0,429.7 931.6,430.5 930.2,430.4 928.8,429.9 927.4,430.2 926.1,428.7 924.7,429.6 923.3,429.1 921.9,429.3 920.5,430.8 919.1,429.2 917.8,429.4 916.4,429.8 915.0,430.3 913.6,427.4 912.2,429.7 910.9,429.0 909.5,427.7 908.1,427.5 906.7,426.2 905.3,426.8 903.9,428.3 902.6,427.4 901.2,427.5 899.8,427.9 898.4,426.7 897.0,426.0 895.7,425.7 894.3,426.5 892.9,425.3 891.5,426.1 890.1,424.8 888.7,426.4 887.4,425.9 886.0,425.8 884.6,425.7 883.2,425.4 881.8,425.2 880.5,424.4 879.1,426.2 877.7,424.4 876.3,424.6 874.9,424.2 873.5,424.5 872.2,423.5 870.8,424.7 869.4,423.7 868.0,423.6 866.6,423.6 865.3,423.9 863.9,424.1 862.5,423.4 861.1,423.0 859.7,421.7 858.4,423.3 857.0,421.8 855.6,422.3 854.2,421.4 852.8,420.7 851.4,421.7 850.1,420.5 848.7,421.3 847.3,422.2 845.9,420.4 844.5,421.1 843.2,421.2 841.8,421.0 840.4,421.8 839.0,421.2 837.6,420.5 836.2,420.2 834.9,421.4 833.5,420.6 832.1,419.9 830.7,421.4 829.3,419.8 828.0,419.7 826.6,419.6 825.2,419.7 823.8,419.0 822.4,418.0 821.0,418.2 819.7,418.6 818.3,418.4 816.9,417.8 815.5,418.3 814.1,418.2 812.8,418.3 811.4,417.4 810.0,417.8 808.6,418.8 807.2,416.8 805.8,415.1 804.5,416.2 803.1,417.5 801.7,416.5 800.3,416.9 798.9,415.6 797.6,416.3 796.2,416.5 794.8,416.2 793.4,415.4 792.0,415.0 790.7,414.5 789.3,414.3 787.9,415.3 786.5,413.5 785.1,415.3 783.7,414.6 782.4,415.2 781.0,415.6 779.6,415.7 778.2,413.1 776.8,413.7 775.5,412.8 774.1,414.5 772.7,413.5" fill="#f6a625"/>
<polygon points="769.4,394 772.7,394 771.9,451 770.2,451" fill="#f6a625"/>
<rect x="1316.9" y="351" width="1.4" height="105" fill="#fff"/>
<polygon points="776.8,391.7 778.1,390.8 779.3,393.1 780.6,392.6 781.8,392.5 783.1,392.5 784.3,390.0 785.5,391.9 786.8,390.8 788.0,387.6 789.3,391.0 790.5,390.5 791.8,390.3 793.0,389.7 794.2,389.1 795.5,389.7 796.7,389.5 798.0,389.6 799.2,388.6 800.5,389.4 801.7,389.5 802.9,387.5 804.2,388.6 805.4,388.5 806.7,388.7 807.9,388.2 809.2,386.3 810.4,388.2 811.7,388.1 812.9,387.0 814.1,387.0 815.4,387.6 816.6,386.8 817.9,387.0 819.1,387.4 820.4,386.6 821.6,383.9 822.8,385.9 824.1,385.8 825.3,384.8 826.6,386.4 827.8,385.7 829.1,385.9 830.3,385.0 831.5,386.1 832.8,385.9 834.0,384.2 835.3,384.8 836.5,385.3 837.8,384.1 839.0,385.0 840.3,384.0 841.5,384.3 842.7,384.2 844.0,384.5 845.2,383.6 846.5,384.2 847.7,381.3 849.0,383.3 850.2,383.4 851.4,381.9 852.7,383.7 853.9,382.4 855.2,382.6 856.4,380.9 857.7,382.1 858.9,382.2 860.1,381.5 861.4,380.2 862.6,382.0 863.9,382.1 865.1,381.6 866.4,380.3 867.6,380.6 868.9,381.5 870.1,380.5 871.3,379.9 872.6,381.5 873.8,380.9 875.1,379.1 876.3,379.1 877.6,380.0 878.8,379.9 880.0,379.3 881.3,380.1 882.5,379.6 883.8,379.3 885.0,379.1 886.3,378.3 887.5,378.1 888.7,378.9 890.0,379.1 891.2,379.1 892.5,378.6 893.7,377.6 895.0,376.9 896.2,378.8 897.5,377.2 898.7,377.6 899.9,378.1 901.2,377.9 902.4,377.8 903.7,377.6 904.9,376.8 906.2,376.6 907.4,377.2 908.6,377.1 909.9,376.4 911.1,376.6 912.4,373.6 913.6,374.7 914.9,374.5 916.1,373.6 917.3,375.5 918.6,375.0 919.8,374.9 921.1,372.6 922.3,373.7 923.6,373.7 924.8,373.2 926.1,373.4 927.3,373.5 928.5,374.2 929.8,373.3 931.0,371.4 932.3,373.4 933.5,372.6 934.8,373.1 936.0,371.0 937.2,372.0 938.5,371.1 939.7,371.3 941.0,372.1 942.2,371.2 943.5,370.2 944.7,371.0 945.9,371.3 947.2,370.9 948.4,370.7 949.7,370.2 950.9,369.8 952.2,370.2 953.4,367.7 954.6,370.2 955.9,369.7 957.1,368.8 958.4,368.4 959.6,369.3 960.9,368.7 962.1,369.6 963.4,369.0 964.6,369.1 965.8,369.0 967.1,367.2 968.3,368.3 969.6,368.5 970.8,367.6 972.1,367.8 973.3,367.3 974.5,367.7 975.8,366.9 977.0,367.3 978.3,367.4 979.5,366.5 980.8,366.6 982.0,365.1 983.2,364.5 984.5,365.9 985.7,366.2 987.0,366.4 988.2,365.4 989.5,365.0 990.7,364.9 992.0,365.8 993.2,363.9 994.4,365.3 995.7,365.4 996.9,364.4 998.2,364.6 999.4,362.5 1000.7,363.7 1001.9,362.2 1003.1,364.6 1004.4,364.0 1005.6,364.1 1006.9,363.3 1008.1,363.3 1009.4,363.4 1010.6,363.7 1011.8,361.6 1013.1,362.6 1014.3,362.0 1015.6,362.4 1016.8,361.8 1018.1,362.0 1019.3,361.3 1020.6,362.4 1021.8,361.1 1023.0,362.0 1024.3,361.3 1025.5,360.0 1026.8,361.5 1028.0,361.4 1029.3,361.2 1030.5,359.4 1031.7,360.3 1033.0,358.9 1034.2,360.1 1035.5,360.7 1036.7,359.2 1038.0,360.4 1039.2,359.3 1040.4,359.7 1041.7,359.3 1042.9,359.7 1044.2,359.7 1045.4,359.5 1046.7,359.3 1047.9,358.5 1049.2,359.1 1050.4,356.7 1051.6,358.9 1052.9,357.6 1054.1,357.6 1055.4,357.3 1056.6,356.3 1057.9,358.4 1059.1,358.3 1060.3,357.1 1061.6,357.6 1062.8,357.6 1064.1,355.9 1065.3,357.6 1066.6,357.6 1067.8,357.5 1069.0,356.1 1070.3,356.7 1071.5,356.4 1072.8,355.8 1074.0,356.3 1075.3,356.9 1076.5,356.2 1077.8,354.7 1079.0,356.4 1080.2,355.3 1081.5,355.5 1082.7,356.3 1084.0,353.5 1085.2,355.9 1086.5,355.8 1087.7,355.3 1088.9,355.7 1090.2,352.9 1091.4,354.9 1092.7,354.5 1093.9,355.1 1095.2,354.5 1096.4,353.7 1097.6,352.9 1098.9,354.7 1100.1,354.7 1101.4,353.5 1102.6,353.7 1103.9,353.7 1105.1,353.1 1106.4,353.3 1107.6,352.6 1108.8,353.1 1110.1,353.8 1111.3,352.7 1112.6,352.9 1113.8,353.4 1115.1,352.5 1116.3,351.8 1117.5,352.9 1118.8,352.7 1120.0,352.1 1121.3,350.6 1122.5,352.5 1123.8,352.5 1125.0,352.4 1126.2,350.9 1127.5,350.1 1128.7,351.7 1130.0,350.6 1131.2,351.0 1132.5,350.1 1133.7,351.1 1135.0,351.0 1136.2,351.3 1137.4,349.6 1138.7,350.7 1139.9,349.1 1141.2,350.2 1142.4,349.0 1143.7,351.0 1144.9,349.9 1146.1,351.0 1147.4,348.3 1148.6,350.2 1149.9,350.6 1151.1,349.4 1152.4,349.1 1153.6,350.2 1154.8,349.8 1156.1,348.5 1157.3,349.7 1158.6,349.5 1159.8,349.9 1161.1,349.4 1162.3,348.7 1163.6,350.5 1164.8,349.1 1166.0,348.9 1167.3,350.5 1168.5,349.4 1169.8,350.2 1171.0,349.8 1172.3,350.0 1173.5,350.1 1174.7,349.9 1176.0,350.1 1177.2,348.9 1178.5,348.6 1179.7,349.9 1181.0,349.2 1182.2,349.3 1183.4,349.7 1184.7,350.4 1185.9,347.0 1187.2,349.4 1188.4,349.7 1189.7,349.6 1190.9,350.1 1192.2,349.7 1193.4,349.2 1194.6,349.6 1195.9,346.8 1197.1,349.5 1198.4,349.8 1199.6,348.7 1200.9,349.7 1202.1,349.1 1203.3,348.6 1204.6,349.2 1205.8,350.3 1207.1,348.8 1208.3,350.4 1209.6,350.4 1210.8,350.4 1212.0,349.5 1213.3,349.5 1214.5,349.8 1215.8,349.8 1217.0,347.7 1218.3,350.1 1219.5,349.4 1220.8,349.6 1222.0,350.0 1223.2,350.2 1224.5,350.3 1225.7,349.1 1227.0,349.7 1228.2,350.4 1229.5,347.4 1230.7,349.4 1231.9,348.7 1233.2,349.7 1234.4,349.7 1235.7,349.0 1236.9,349.8 1238.2,350.3 1239.4,349.1 1240.6,349.7 1241.9,350.2 1243.1,349.6 1244.4,349.7 1245.6,348.4 1246.9,350.0 1248.1,350.4 1249.4,349.9 1250.6,350.2 1251.8,349.5 1253.1,350.2 1254.3,349.2 1255.6,349.8 1256.8,348.9 1258.1,349.5 1259.3,350.4 1260.5,348.2 1261.8,350.1 1263.0,349.6 1264.3,350.3 1265.5,349.8 1266.8,349.9 1268.0,350.0 1269.2,349.4 1270.5,348.9 1271.7,350.3 1273.0,349.9 1274.2,348.9 1275.5,350.3 1276.7,348.8 1278.0,349.9 1279.2,349.6 1280.4,348.8 1281.7,348.8 1282.9,349.3 1284.2,349.6 1285.4,349.1 1286.7,349.8 1287.9,349.6 1289.1,349.6 1290.4,348.7 1291.6,350.2 1292.9,348.1 1294.1,348.0 1295.4,349.7 1296.6,349.3 1297.8,350.1 1299.1,350.0 1300.3,349.6 1301.6,349.8 1302.8,349.9 1304.1,350.3 1305.3,349.3 1306.5,349.0 1307.8,350.4 1309.0,350.4 1310.3,350.3 1311.5,349.3 1312.8,349.2 1314.0,348.9 1315.3,350.4 1316.5,349.2 1316.5,360.1 1315.3,358.8 1314.0,361.3 1312.8,360.3 1311.5,359.4 1310.3,360.4 1309.0,359.0 1307.8,358.8 1306.5,359.7 1305.3,359.0 1304.1,358.9 1302.8,359.3 1301.6,360.4 1300.3,359.4 1299.1,358.7 1297.8,359.9 1296.6,360.2 1295.4,359.6 1294.1,359.9 1292.9,359.2 1291.6,359.6 1290.4,359.7 1289.1,358.7 1287.9,360.5 1286.7,360.4 1285.4,359.3 1284.2,359.4 1282.9,359.6 1281.7,358.8 1280.4,358.8 1279.2,361.0 1278.0,359.4 1276.7,360.5 1275.5,360.7 1274.2,359.5 1273.0,360.5 1271.7,360.0 1270.5,358.9 1269.2,360.7 1268.0,359.5 1266.8,359.9 1265.5,358.9 1264.3,360.5 1263.0,360.6 1261.8,358.8 1260.5,361.3 1259.3,359.4 1258.1,360.7 1256.8,359.0 1255.6,360.9 1254.3,360.0 1253.1,360.1 1251.8,358.8 1250.6,359.8 1249.4,359.2 1248.1,360.0 1246.9,359.6 1245.6,359.8 1244.4,359.8 1243.1,359.6 1241.9,360.4 1240.6,359.0 1239.4,359.5 1238.2,359.8 1236.9,359.6 1235.7,360.1 1234.4,358.8 1233.2,359.1 1231.9,359.0 1230.7,359.6 1229.5,359.0 1228.2,360.7 1227.0,359.6 1225.7,362.3 1224.5,360.9 1223.2,358.8 1222.0,358.9 1220.8,358.9 1219.5,359.3 1218.3,359.0 1217.0,359.4 1215.8,358.7 1214.5,358.9 1213.3,360.5 1212.0,360.0 1210.8,360.2 1209.6,360.7 1208.3,360.2 1207.1,359.4 1205.8,359.1 1204.6,359.5 1203.3,358.9 1202.1,360.8 1200.9,359.0 1199.6,359.4 1198.4,359.9 1197.1,358.9 1195.9,361.1 1194.6,359.0 1193.4,359.9 1192.2,360.2 1190.9,359.4 1189.7,359.2 1188.4,360.7 1187.2,359.3 1185.9,359.3 1184.7,360.7 1183.4,358.8 1182.2,360.9 1181.0,359.7 1179.7,359.0 1178.5,358.8 1177.2,359.5 1176.0,359.0 1174.7,360.6 1173.5,358.9 1172.3,359.3 1171.0,359.1 1169.8,360.5 1168.5,359.3 1167.3,360.6 1166.0,358.8 1164.8,360.0 1163.6,360.5 1162.3,358.7 1161.1,359.9 1159.8,359.7 1158.6,359.7 1157.3,358.8 1156.1,359.2 1154.8,359.1 1153.6,359.8 1152.4,359.4 1151.1,359.6 1149.9,359.7 1148.6,359.5 1147.4,360.3 1146.1,359.8 1144.9,359.9 1143.7,359.5 1142.4,360.3 1141.2,361.3 1139.9,360.7 1138.7,361.0 1137.4,360.0 1136.2,360.2 1135.0,361.6 1133.7,361.8 1132.5,361.7 1131.2,360.7 1130.0,360.8 1128.7,363.2 1127.5,361.3 1126.2,364.4 1125.0,363.2 1123.8,363.3 1122.5,361.4 1121.3,361.9 1120.0,362.3 1118.8,363.7 1117.5,363.4 1116.3,362.2 1115.1,362.4 1113.8,362.7 1112.6,364.6 1111.3,363.1 1110.1,364.3 1108.8,363.2 1107.6,363.1 1106.4,363.1 1105.1,365.8 1103.9,364.2 1102.6,363.6 1101.4,363.6 1100.1,365.8 1098.9,365.4 1097.6,364.3 1096.4,364.8 1095.2,365.2 1093.9,364.8 1092.7,366.2 1091.4,365.3 1090.2,364.8 1088.9,365.9 1087.7,365.2 1086.5,366.8 1085.2,365.3 1084.0,366.0 1082.7,367.6 1081.5,367.2 1080.2,366.2 1079.0,366.1 1077.8,368.8 1076.5,367.3 1075.3,369.4 1074.0,367.5 1072.8,366.7 1071.5,367.7 1070.3,367.8 1069.0,367.5 1067.8,368.1 1066.6,368.4 1065.3,369.3 1064.1,368.4 1062.8,368.3 1061.6,370.2 1060.3,368.3 1059.1,369.7 1057.9,368.7 1056.6,368.3 1055.4,369.8 1054.1,369.7 1052.9,370.6 1051.6,369.0 1050.4,369.1 1049.2,369.1 1047.9,370.0 1046.7,370.3 1045.4,369.6 1044.2,370.9 1042.9,371.3 1041.7,370.3 1040.4,370.5 1039.2,370.1 1038.0,370.5 1036.7,371.7 1035.5,371.5 1034.2,372.2 1033.0,371.4 1031.7,371.6 1030.5,372.4 1029.3,372.3 1028.0,373.3 1026.8,372.2 1025.5,372.0 1024.3,373.5 1023.0,372.4 1021.8,373.9 1020.6,373.0 1019.3,373.4 1018.1,373.0 1016.8,373.8 1015.6,373.1 1014.3,373.3 1013.1,374.0 1011.8,374.3 1010.6,376.4 1009.4,373.9 1008.1,374.0 1006.9,374.0 1005.6,375.2 1004.4,375.8 1003.1,377.3 1001.9,375.2 1000.7,375.1 999.4,376.9 998.2,376.5 996.9,377.3 995.7,376.2 994.4,375.8 993.2,377.2 992.0,376.1 990.7,376.3 989.5,377.5 988.2,377.2 987.0,377.3 985.7,376.9 984.5,377.6 983.2,377.7 982.0,377.3 980.8,378.6 979.5,377.7 978.3,377.5 977.0,377.9 975.8,378.9 974.5,378.9 973.3,379.0 972.1,379.0 970.8,379.3 969.6,378.8 968.3,379.9 967.1,380.1 965.8,380.5 964.6,380.0 963.4,380.2 962.1,380.7 960.9,380.8 959.6,380.1 958.4,380.3 957.1,382.6 955.9,381.0 954.6,383.4 953.4,382.0 952.2,381.1 950.9,381.4 949.7,381.6 948.4,381.5 947.2,381.8 945.9,382.4 944.7,381.9 943.5,382.9 942.2,382.7 941.0,382.4 939.7,382.9 938.5,383.8 937.2,384.0 936.0,386.9 934.8,385.8 933.5,384.5 932.3,385.5 931.0,383.7 929.8,385.0 928.5,385.4 927.3,384.2 926.1,385.1 924.8,386.1 923.6,386.8 922.3,385.5 921.1,385.6 919.8,386.4 918.6,386.6 917.3,385.9 916.1,386.3 914.9,386.2 913.6,387.8 912.4,387.0 911.1,388.6 909.9,388.6 908.6,387.9 907.4,387.5 906.2,387.8 904.9,387.9 903.7,389.8 902.4,389.3 901.2,389.5 899.9,388.2 898.7,388.7 897.5,388.8 896.2,389.0 895.0,389.9 893.7,389.4 892.5,389.3 891.2,389.6 890.0,391.1 888.7,390.1 887.5,390.6 886.3,390.3 885.0,389.9 883.8,390.7 882.5,390.2 881.3,391.1 880.0,391.9 878.8,391.4 877.6,391.0 876.3,390.9 875.1,391.5 873.8,393.5 872.6,391.6 871.3,391.4 870.1,391.8 868.9,392.2 867.6,392.2 866.4,392.3 865.1,392.3 863.9,394.3 862.6,392.8 861.4,393.2 860.1,392.8 858.9,394.8 857.7,393.1 856.4,394.2 855.2,394.7 853.9,394.2 852.7,395.1 851.4,395.0 850.2,394.6 849.0,395.6 847.7,396.2 846.5,394.7 845.2,395.4 844.0,394.7 842.7,394.8 841.5,395.2 840.3,396.4 839.0,395.1 837.8,396.0 836.5,397.1 835.3,397.2 834.0,396.9 832.8,396.8 831.5,397.4 830.3,396.2 829.1,396.5 827.8,398.2 826.6,397.4 825.3,397.9 824.1,396.8 822.8,397.2 821.6,399.8 820.4,397.2 819.1,397.5 817.9,400.6 816.6,399.7 815.4,397.9 814.1,398.0 812.9,398.9 811.7,399.1 810.4,399.3 809.2,398.9 807.9,399.6 806.7,398.9 805.4,398.9 804.2,400.6 802.9,400.4 801.7,400.7 800.5,400.1 799.2,400.2 798.0,400.6 796.7,401.1 795.5,400.0 794.2,400.2 793.0,400.8 791.8,401.0 790.5,401.7 789.3,401.6 788.0,402.1 786.8,403.2 785.5,403.9 784.3,402.9 783.1,404.7 781.8,403.8 780.6,404.4 779.3,403.9 778.1,403.7 776.8,404.6" fill="#0000ff"/>
<rect x="1320.4" y="350" width="47.8" height="5.2" fill="#0000ff"/>
<polygon points="1367.6,349.5 1368.9,350.0 1370.1,348.4 1371.3,349.5 1372.6,348.4 1373.8,350.2 1375.1,349.5 1376.3,350.0 1377.6,348.4 1378.8,349.9 1380.1,349.9 1381.3,348.5 1382.5,349.9 1383.8,349.6 1385.0,348.6 1386.3,347.7 1387.5,348.1 1388.8,349.0 1390.0,349.8 1391.2,349.2 1392.5,349.5 1393.7,349.5 1395.0,349.8 1396.2,350.1 1397.5,348.6 1398.7,348.2 1399.9,350.2 1401.2,349.2 1402.4,349.3 1403.7,347.9 1404.9,349.8 1406.2,350.0 1407.4,348.6 1408.7,349.1 1409.9,350.0 1411.1,349.1 1412.4,349.1 1413.6,349.1 1414.9,349.3 1416.1,350.0 1417.4,349.4 1418.6,349.3 1419.8,349.4 1421.1,349.5 1422.3,349.3 1423.6,349.6 1424.8,349.9 1426.1,350.1 1427.3,347.9 1428.5,349.6 1429.8,349.9 1431.0,349.7 1432.3,349.2 1433.5,349.8 1434.8,350.2 1436.0,349.3 1437.3,348.8 1438.5,348.7 1439.7,349.8 1441.0,350.0 1442.2,349.3 1443.5,349.5 1444.7,349.0 1446.0,350.0 1447.2,350.2 1448.4,349.9 1449.7,349.1 1450.9,348.9 1452.2,349.3 1453.4,348.8 1454.7,347.9 1455.9,350.0 1457.1,348.9 1458.4,348.2 1459.6,349.8 1460.9,349.0 1462.1,349.3 1463.4,349.9 1464.6,348.3 1465.9,348.1 1467.1,349.1 1468.3,350.1 1469.6,349.3 1470.8,347.5 1472.1,349.1 1473.3,349.1 1474.6,349.5 1475.8,350.0 1477.0,348.6 1478.3,348.6 1479.5,349.3 1480.8,348.9 1482.0,350.2 1483.3,349.4 1484.5,348.8 1485.7,350.0 1487.0,350.0 1488.2,348.9 1489.5,349.6 1490.7,350.2 1492.0,350.1 1493.2,350.1 1494.5,349.0 1495.7,349.3 1496.9,349.8 1498.2,349.3 1499.4,349.6 1500.7,349.6 1501.9,348.6 1503.2,348.7 1504.4,350.1 1505.6,350.0 1506.9,349.5 1508.1,350.2 1509.4,349.9 1510.6,348.9 1511.9,350.1 1513.1,349.2 1514.3,349.7 1515.6,348.3 1516.8,348.4 1518.1,350.0 1519.3,350.1 1520.6,347.7 1521.8,347.8 1523.1,350.1 1524.3,349.5 1525.5,349.0 1526.8,348.3 1528.0,350.1 1529.3,350.1 1530.5,348.9 1531.8,349.9 1533.0,349.4 1534.2,349.5 1535.5,349.0 1536.7,349.3 1538.0,347.3 1539.2,349.9 1540.5,348.7 1541.7,349.0 1542.9,348.8 1544.2,349.1 1545.4,350.1 1546.7,350.2 1547.9,350.1 1549.2,349.3 1550.4,349.9 1551.6,350.1 1552.9,349.5 1554.1,349.3 1555.4,349.4 1556.6,349.3 1557.9,349.3 1559.1,350.0 1560.4,349.8 1561.6,350.2 1562.8,350.1 1564.1,349.9 1565.3,349.6 1566.6,349.5 1567.8,350.0 1569.1,349.1 1570.3,350.1 1571.5,348.1 1572.8,350.0 1574.0,346.9 1575.3,349.7 1576.5,348.4 1577.8,350.2 1579.0,349.7 1580.2,349.2 1581.5,348.7 1582.7,349.1 1584.0,349.5 1585.2,349.7 1586.5,348.6 1587.7,349.3 1589.0,348.8 1590.2,349.4 1591.4,350.0 1592.7,350.1 1593.9,349.4 1595.2,350.2 1596.4,347.0 1597.7,348.5 1598.9,349.1 1600.1,350.1 1601.4,349.8 1602.6,350.0 1603.9,348.8 1605.1,349.9 1606.4,349.9 1607.6,349.8 1608.8,349.2 1610.1,349.5 1611.3,349.0 1612.6,348.7 1613.8,349.6 1615.1,350.1 1616.3,349.2 1617.6,349.4 1618.8,348.4 1620.0,348.4 1621.3,348.9 1622.5,347.8 1623.8,349.8 1625.0,349.8 1626.3,348.7 1627.5,348.5 1628.7,350.0 1630.0,349.2 1631.2,349.7 1632.5,348.7 1633.7,349.3 1635.0,348.3 1636.2,350.1 1637.4,349.9 1638.7,349.5 1639.9,349.8 1641.2,348.2 1642.4,347.8 1643.7,349.6 1644.9,350.0 1646.2,348.9 1647.4,349.4 1648.6,350.2 1649.9,350.1 1651.1,350.2 1652.4,350.2 1653.6,349.7 1654.9,348.7 1656.1,349.1 1657.3,349.0 1658.6,349.3 1659.8,349.6 1661.1,348.8 1662.3,349.5 1663.6,349.9 1664.8,348.2 1666.0,349.3 1667.3,350.2 1668.5,349.0 1669.8,349.4 1671.0,350.1 1672.3,350.0 1673.5,348.9 1674.8,350.0 1676.0,350.0 1677.2,350.1 1678.5,349.3 1679.7,349.2 1681.0,348.1 1682.2,350.1 1683.5,348.8 1684.7,349.5 1685.9,349.5 1687.2,350.0 1688.4,348.3 1689.7,349.5 1690.9,349.8 1692.2,349.5 1693.4,349.8 1694.6,349.9 1695.9,349.9 1697.1,349.2 1698.4,347.1 1699.6,350.0 1700.9,349.1 1702.1,349.0 1703.4,349.1 1704.6,350.1 1705.8,350.1 1707.1,349.3 1708.3,349.2 1709.6,349.6 1710.8,348.5 1712.1,349.2 1713.3,349.1 1714.5,349.2 1715.8,349.8 1717.0,349.7 1718.3,348.2 1719.5,349.5 1720.8,350.0 1722.0,349.0 1723.2,349.0 1724.5,350.2 1725.7,349.3 1727.0,349.5 1728.2,349.4 1729.5,349.4 1730.7,347.3 1732.0,348.6 1733.2,348.7 1734.4,350.1 1735.7,349.9 1736.9,350.0 1738.2,347.8 1739.4,348.3 1740.7,349.5 1741.9,349.1 1743.1,349.7 1744.4,349.2 1745.6,348.8 1746.9,349.8 1748.1,349.7 1749.4,350.2 1750.6,349.1 1751.8,350.0 1753.1,350.1 1754.3,348.5 1755.6,349.0 1756.8,348.5 1758.1,349.9 1759.3,349.1 1760.6,349.3 1761.8,349.5 1763.0,349.4 1764.3,348.8 1765.5,350.0 1766.8,348.5 1768.0,349.5 1769.3,350.2 1770.5,349.4 1771.7,349.6 1773.0,349.7 1774.2,349.5 1775.5,349.4 1776.7,350.1 1778.0,349.2 1779.2,348.6 1780.4,350.1 1781.7,349.9 1782.9,349.2 1784.2,349.7 1785.4,350.1 1786.7,350.0 1787.9,349.0 1789.2,348.8 1790.4,349.8 1791.6,348.9 1792.9,350.0 1794.1,349.7 1795.4,348.4 1796.6,349.8 1797.9,349.7 1799.1,350.2 1800.3,348.2 1801.6,349.0 1802.8,349.4 1804.1,349.6 1805.3,348.9 1806.6,349.0 1807.8,349.4 1809.0,350.0 1810.3,349.8 1811.5,348.2 1812.8,349.4 1814.0,350.1 1815.3,349.9 1816.5,349.4 1817.8,349.5 1819.0,349.6 1820.2,349.4 1821.5,348.7 1822.7,347.5 1824.0,350.0 1825.2,349.8 1826.5,349.2 1827.7,346.7 1828.9,350.2 1830.2,350.2 1831.4,349.1 1832.7,349.7 1833.9,348.0 1835.2,350.2 1836.4,349.3 1837.6,347.7 1838.9,348.6 1840.1,350.0 1841.4,350.1 1842.6,349.4 1843.9,349.9 1845.1,350.0 1846.4,348.6 1847.6,350.0 1848.8,348.7 1850.1,347.8 1851.3,347.4 1852.6,349.2 1853.8,349.9 1855.1,348.2 1856.3,348.4 1857.5,349.6 1858.8,350.0 1860.0,349.9 1861.3,349.8 1862.5,350.2 1863.8,349.3 1865.0,347.5 1866.2,349.0 1867.5,348.5 1868.7,349.5 1869.7,348.9 1869.7,361.5 1868.7,360.8 1867.5,361.2 1866.2,362.8 1865.0,361.7 1863.8,360.7 1862.5,361.7 1861.3,361.5 1860.0,360.8 1858.8,361.7 1857.5,361.7 1856.3,361.5 1855.1,361.1 1853.8,362.0 1852.6,362.1 1851.3,362.1 1850.1,361.1 1848.8,362.4 1847.6,361.4 1846.4,361.2 1845.1,360.9 1843.9,361.2 1842.6,361.6 1841.4,362.3 1840.1,361.0 1838.9,361.5 1837.6,362.4 1836.4,362.2 1835.2,362.0 1833.9,361.8 1832.7,362.2 1831.4,361.2 1830.2,362.0 1828.9,361.0 1827.7,361.1 1826.5,362.2 1825.2,361.1 1824.0,361.0 1822.7,362.0 1821.5,362.2 1820.2,361.3 1819.0,361.7 1817.8,360.7 1816.5,360.7 1815.3,363.6 1814.0,361.5 1812.8,361.5 1811.5,361.8 1810.3,361.7 1809.0,361.0 1807.8,360.9 1806.6,361.1 1805.3,360.6 1804.1,360.9 1802.8,361.1 1801.6,360.9 1800.3,361.5 1799.1,360.9 1797.9,360.8 1796.6,364.2 1795.4,361.3 1794.1,361.4 1792.9,361.4 1791.6,362.6 1790.4,362.4 1789.2,361.6 1787.9,360.9 1786.7,360.9 1785.4,362.0 1784.2,361.9 1782.9,361.3 1781.7,361.3 1780.4,362.4 1779.2,360.8 1778.0,361.1 1776.7,360.9 1775.5,362.1 1774.2,361.9 1773.0,360.8 1771.7,361.5 1770.5,361.2 1769.3,360.7 1768.0,361.0 1766.8,360.6 1765.5,360.6 1764.3,361.7 1763.0,360.9 1761.8,362.0 1760.6,362.6 1759.3,361.8 1758.1,361.3 1756.8,361.6 1755.6,361.3 1754.3,362.1 1753.1,361.5 1751.8,362.2 1750.6,360.7 1749.4,361.7 1748.1,361.8 1746.9,360.6 1745.6,361.7 1744.4,362.2 1743.1,362.3 1741.9,361.3 1740.7,361.2 1739.4,360.9 1738.2,361.7 1736.9,361.2 1735.7,363.9 1734.4,360.6 1733.2,361.1 1732.0,361.5 1730.7,361.6 1729.5,361.1 1728.2,361.7 1727.0,363.4 1725.7,361.7 1724.5,361.6 1723.2,360.7 1722.0,360.6 1720.8,361.1 1719.5,360.8 1718.3,361.2 1717.0,361.2 1715.8,360.8 1714.5,361.3 1713.3,361.8 1712.1,361.7 1710.8,362.5 1709.6,361.5 1708.3,361.9 1707.1,361.1 1705.8,360.8 1704.6,362.8 1703.4,361.3 1702.1,360.9 1700.9,360.8 1699.6,361.0 1698.4,361.2 1697.1,361.8 1695.9,362.9 1694.6,361.1 1693.4,361.6 1692.2,362.5 1690.9,360.8 1689.7,361.0 1688.4,361.3 1687.2,361.7 1685.9,362.3 1684.7,361.0 1683.5,361.1 1682.2,362.3 1681.0,361.0 1679.7,362.1 1678.5,361.5 1677.2,362.4 1676.0,361.7 1674.8,360.7 1673.5,361.7 1672.3,361.5 1671.0,360.7 1669.8,361.2 1668.5,361.9 1667.3,360.8 1666.0,360.8 1664.8,362.2 1663.6,360.8 1662.3,362.0 1661.1,361.3 1659.8,361.2 1658.6,361.5 1657.3,361.4 1656.1,361.1 1654.9,360.9 1653.6,362.3 1652.4,361.1 1651.1,360.8 1649.9,363.3 1648.6,361.0 1647.4,362.1 1646.2,360.6 1644.9,362.1 1643.7,361.0 1642.4,361.1 1641.2,361.8 1639.9,363.1 1638.7,361.9 1637.4,361.6 1636.2,361.2 1635.0,360.7 1633.7,362.3 1632.5,363.4 1631.2,361.0 1630.0,361.6 1628.7,360.7 1627.5,361.2 1626.3,360.8 1625.0,361.1 1623.8,360.6 1622.5,361.5 1621.3,361.0 1620.0,360.7 1618.8,361.3 1617.6,362.3 1616.3,361.3 1615.1,361.7 1613.8,361.9 1612.6,362.4 1611.3,363.4 1610.1,361.1 1608.8,363.0 1607.6,361.5 1606.4,360.7 1605.1,361.7 1603.9,360.8 1602.6,360.9 1601.4,360.9 1600.1,361.9 1598.9,361.5 1597.7,361.8 1596.4,362.1 1595.2,361.5 1593.9,361.5 1592.7,361.3 1591.4,363.0 1590.2,360.7 1589.0,361.2 1587.7,363.1 1586.5,360.6 1585.2,361.6 1584.0,361.9 1582.7,362.5 1581.5,360.9 1580.2,360.8 1579.0,362.4 1577.8,361.2 1576.5,361.0 1575.3,360.8 1574.0,361.5 1572.8,361.4 1571.5,360.9 1570.3,361.1 1569.1,361.8 1567.8,360.8 1566.6,362.4 1565.3,360.9 1564.1,362.4 1562.8,362.5 1561.6,361.5 1560.4,363.2 1559.1,360.9 1557.9,362.1 1556.6,362.2 1555.4,360.7 1554.1,360.8 1552.9,361.4 1551.6,360.7 1550.4,361.2 1549.2,360.7 1547.9,361.4 1546.7,361.5 1545.4,360.9 1544.2,361.6 1542.9,362.1 1541.7,363.7 1540.5,362.0 1539.2,360.8 1538.0,361.0 1536.7,362.0 1535.5,360.8 1534.2,362.2 1533.0,361.6 1531.8,361.6 1530.5,361.1 1529.3,360.9 1528.0,361.0 1526.8,361.1 1525.5,361.5 1524.3,361.9 1523.1,361.4 1521.8,361.4 1520.6,361.1 1519.3,361.2 1518.1,362.1 1516.8,361.3 1515.6,360.9 1514.3,360.7 1513.1,361.3 1511.9,360.9 1510.6,361.5 1509.4,360.6 1508.1,361.7 1506.9,363.2 1505.6,362.6 1504.4,361.0 1503.2,361.0 1501.9,360.7 1500.7,361.7 1499.4,360.9 1498.2,360.9 1496.9,361.7 1495.7,360.8 1494.5,361.3 1493.2,361.8 1492.0,361.2 1490.7,361.9 1489.5,360.7 1488.2,360.8 1487.0,361.0 1485.7,361.9 1484.5,361.0 1483.3,361.8 1482.0,360.9 1480.8,360.7 1479.5,360.6 1478.3,361.7 1477.0,361.9 1475.8,360.7 1474.6,360.8 1473.3,360.9 1472.1,361.2 1470.8,362.0 1469.6,361.4 1468.3,360.9 1467.1,360.9 1465.9,362.0 1464.6,361.6 1463.4,361.1 1462.1,361.8 1460.9,363.0 1459.6,362.0 1458.4,362.7 1457.1,361.4 1455.9,361.3 1454.7,361.7 1453.4,362.2 1452.2,360.7 1450.9,361.5 1449.7,361.3 1448.4,361.2 1447.2,360.9 1446.0,360.6 1444.7,360.9 1443.5,361.1 1442.2,361.2 1441.0,362.8 1439.7,361.6 1438.5,362.1 1437.3,361.6 1436.0,361.2 1434.8,361.7 1433.5,361.6 1432.3,362.2 1431.0,360.8 1429.8,361.6 1428.5,361.7 1427.3,362.2 1426.1,362.0 1424.8,361.6 1423.6,360.7 1422.3,363.3 1421.1,361.0 1419.8,360.9 1418.6,362.0 1417.4,361.0 1416.1,361.4 1414.9,361.5 1413.6,361.2 1412.4,361.6 1411.1,361.7 1409.9,360.8 1408.7,361.1 1407.4,360.8 1406.2,362.2 1404.9,361.1 1403.7,361.4 1402.4,362.8 1401.2,362.0 1399.9,362.4 1398.7,362.4 1397.5,361.2 1396.2,361.5 1395.0,361.2 1393.7,360.8 1392.5,361.3 1391.2,361.7 1390.0,360.8 1388.8,362.0 1387.5,361.3 1386.3,360.8 1385.0,362.3 1383.8,360.6 1382.5,360.8 1381.3,361.2 1380.1,361.7 1378.8,362.3 1377.6,361.3 1376.3,361.7 1375.1,362.4 1373.8,361.0 1372.6,360.7 1371.3,360.9 1370.1,361.7 1368.9,361.0 1367.6,361.4" fill="#0000ff"/>
<path d="M764.4,391 L767.7,391 L768.3,351 L770.5,351 L772.1,385 L776.8,398" fill="none" stroke="#0000ff" stroke-width="3.2" stroke-linejoin="round"/>
<path d="M1316.2,352 L1318.2,392 L1320.6,352" fill="none" stroke="#0000ff" stroke-width="2.6" stroke-linejoin="round"/>
<rect x="1315.4" y="350" width="6.1" height="4" fill="#0000ff"/>
<polygon points="772.7,399.8 773.9,399.1 775.2,400.6 776.4,400.4 777.7,399.4 778.9,400.9 780.2,400.3 781.4,400.0 782.6,400.1 783.9,398.9 785.1,400.8 786.4,399.5 787.6,399.9 788.9,399.0 790.1,401.0 791.3,398.9 792.6,401.2 793.8,399.8 795.1,400.5 796.3,400.8 797.6,400.5 798.8,400.7 800.0,401.5 801.3,400.7 802.5,401.0 803.8,400.5 805.0,399.4 806.3,401.3 807.5,400.3 808.8,401.5 810.0,400.0 811.2,401.8 812.5,401.8 813.7,401.4 815.0,400.4 816.2,401.4 817.5,400.4 818.7,400.1 819.9,401.7 821.2,400.5 822.4,400.4 823.7,401.1 824.9,399.3 826.2,401.8 827.4,400.6 828.6,402.2 829.9,402.2 831.1,399.5 832.4,402.0 833.6,402.0 834.9,401.0 836.1,400.7 837.3,401.4 838.6,400.9 839.8,402.0 841.1,401.3 842.3,400.5 843.6,401.8 844.8,399.2 846.1,401.7 847.3,401.5 848.5,401.5 849.8,401.9 851.0,402.6 852.3,400.9 853.5,402.2 854.8,402.6 856.0,402.8 857.2,402.0 858.5,402.4 859.7,402.7 861.0,402.6 862.2,402.9 863.5,401.8 864.7,401.8 865.9,401.3 867.2,401.4 868.4,401.4 869.7,401.8 870.9,402.7 872.2,401.9 873.4,401.7 874.7,402.7 875.9,401.8 877.1,401.6 878.4,402.5 879.6,401.7 880.9,403.0 882.1,403.5 883.4,402.9 884.6,403.5 885.8,401.7 887.1,402.9 888.3,401.9 889.6,401.1 890.8,403.4 892.1,403.2 893.3,403.4 894.5,403.1 895.8,403.1 897.0,402.8 898.3,403.1 899.5,403.7 900.8,403.4 902.0,403.8 903.3,401.3 904.5,403.3 905.7,401.8 907.0,401.6 908.2,403.6 909.5,402.8 910.7,402.9 912.0,404.1 913.2,403.3 914.4,403.3 915.7,402.9 916.9,404.2 918.2,402.8 919.4,403.9 920.7,403.8 921.9,401.8 923.1,402.7 924.4,404.1 925.6,404.1 926.9,403.0 928.1,403.1 929.4,404.6 930.6,404.0 931.9,403.9 933.1,404.6 934.3,403.7 935.6,404.3 936.8,403.5 938.1,404.1 939.3,404.1 940.6,402.3 941.8,404.0 943.0,404.7 944.3,403.9 945.5,403.7 946.8,404.5 948.0,403.9 949.3,404.2 950.5,402.9 951.7,405.1 953.0,403.1 954.2,402.4 955.5,403.7 956.7,403.7 958.0,403.3 959.2,405.2 960.5,402.8 961.7,404.8 962.9,404.7 964.2,403.2 965.4,404.3 966.7,405.1 967.9,405.1 969.2,405.0 970.4,404.3 971.6,405.3 972.9,404.1 974.1,404.8 975.4,404.4 976.6,404.1 977.9,405.6 979.1,404.8 980.3,404.9 981.6,403.5 982.8,403.1 984.1,404.6 985.3,404.5 986.6,404.7 987.8,404.1 989.1,402.6 990.3,405.2 991.5,405.5 992.8,405.2 994.0,405.9 995.3,405.8 996.5,406.1 997.8,403.6 999.0,403.2 1000.2,405.5 1001.5,405.0 1002.7,402.5 1004.0,405.0 1005.2,405.6 1006.5,406.3 1007.7,405.7 1008.9,405.0 1010.2,405.9 1011.4,405.3 1012.7,405.8 1013.9,406.2 1015.2,404.0 1016.4,406.6 1017.7,404.8 1018.9,405.2 1020.1,404.7 1021.4,406.0 1022.6,403.8 1023.9,406.0 1025.1,406.8 1026.4,405.2 1027.6,405.5 1028.8,406.0 1030.1,405.8 1031.3,406.0 1032.6,406.7 1033.8,404.6 1035.1,404.7 1036.3,405.9 1037.5,406.7 1038.8,405.6 1040.0,407.0 1041.3,407.1 1042.5,406.0 1043.8,407.3 1045.0,407.2 1046.3,403.4 1047.5,407.1 1048.7,405.6 1050.0,405.6 1051.2,407.2 1052.5,405.8 1053.7,404.5 1055.0,407.4 1056.2,406.4 1057.4,404.2 1058.7,406.0 1059.9,406.2 1061.2,407.3 1062.4,406.2 1063.7,407.2 1064.9,407.0 1066.1,406.8 1067.4,407.2 1068.6,407.5 1069.9,407.0 1071.1,407.8 1072.4,406.1 1073.6,407.5 1074.9,407.1 1076.1,407.8 1077.3,406.3 1078.6,407.1 1079.8,407.2 1081.1,408.0 1082.3,406.9 1083.6,405.9 1084.8,408.1 1086.0,407.8 1087.3,407.8 1088.5,407.9 1089.8,408.0 1091.0,408.0 1092.3,407.1 1093.5,407.1 1094.7,406.6 1096.0,407.4 1097.2,408.1 1098.5,408.5 1099.7,407.9 1101.0,408.2 1102.2,407.9 1103.5,407.1 1104.7,407.6 1105.9,406.3 1107.2,407.1 1108.4,408.8 1109.7,407.8 1110.9,407.0 1112.2,406.5 1113.4,407.9 1114.6,408.8 1115.9,408.5 1117.1,408.8 1118.4,408.8 1119.6,408.7 1120.9,407.5 1122.1,407.3 1123.3,409.1 1124.6,409.1 1125.8,409.1 1127.1,405.9 1128.3,408.5 1129.6,408.8 1130.8,408.9 1132.1,409.3 1133.3,408.0 1134.5,408.2 1135.8,408.5 1137.0,408.2 1138.3,408.3 1139.5,409.3 1140.8,408.5 1142.0,408.7 1143.2,407.5 1144.5,408.2 1145.7,408.2 1147.0,408.0 1148.2,409.7 1149.5,408.8 1150.7,408.9 1151.9,409.2 1153.2,408.6 1154.4,409.6 1155.7,408.6 1156.9,407.0 1158.2,409.7 1159.4,408.4 1160.7,408.5 1161.9,408.1 1163.1,409.2 1164.4,409.1 1165.6,408.3 1166.9,409.4 1168.1,406.5 1169.4,408.4 1170.6,407.4 1171.8,408.8 1173.1,409.6 1174.3,409.7 1175.6,407.9 1176.8,409.7 1178.1,410.3 1179.3,408.7 1180.5,410.4 1181.8,409.5 1183.0,409.6 1184.3,409.6 1185.5,410.5 1186.8,410.2 1188.0,409.4 1189.2,408.8 1190.5,410.5 1191.7,408.1 1193.0,410.7 1194.2,409.1 1195.5,409.2 1196.7,409.0 1198.0,409.9 1199.2,409.0 1200.4,410.6 1201.7,410.5 1202.9,408.8 1204.2,410.4 1205.4,409.3 1206.7,408.8 1207.9,410.8 1209.1,411.1 1210.4,410.2 1211.6,409.9 1212.9,410.5 1214.1,410.7 1215.4,410.7 1216.6,411.3 1217.8,410.8 1219.1,410.9 1220.3,410.7 1221.6,411.0 1222.8,410.6 1224.1,410.6 1225.3,410.9 1226.6,411.3 1227.8,411.5 1229.0,408.1 1230.3,407.9 1231.5,411.2 1232.8,411.3 1234.0,409.8 1235.3,410.8 1236.5,411.5 1237.7,411.8 1239.0,409.9 1240.2,410.7 1241.5,411.1 1242.7,411.2 1244.0,411.7 1245.2,411.6 1246.4,410.8 1247.7,411.4 1248.9,411.6 1250.2,410.9 1251.4,411.6 1252.7,409.9 1253.9,411.7 1255.2,410.6 1256.4,411.1 1257.6,411.3 1258.9,411.2 1260.1,410.9 1261.4,411.9 1262.6,410.2 1263.9,411.5 1265.1,412.4 1266.3,411.5 1267.6,412.1 1268.8,411.1 1270.1,410.3 1271.3,412.1 1272.6,410.5 1273.8,410.2 1275.0,411.4 1276.3,412.0 1277.5,412.0 1278.8,412.3 1280.0,412.5 1281.3,411.8 1282.5,411.6 1283.8,411.6 1285.0,412.6 1286.2,412.3 1287.5,412.7 1288.7,411.5 1290.0,411.0 1291.2,412.6 1292.5,412.5 1293.7,411.4 1294.9,412.2 1296.2,412.2 1297.4,411.4 1298.7,412.7 1299.9,412.6 1301.2,413.0 1302.4,411.0 1303.6,411.6 1304.9,413.0 1306.1,412.8 1307.4,411.8 1308.6,413.5 1309.9,411.7 1311.1,411.4 1312.4,413.2 1313.6,412.6 1314.8,412.7 1316.1,412.5 1316.1,424.8 1314.8,424.6 1313.6,424.2 1312.4,424.4 1311.1,428.3 1309.9,424.6 1308.6,424.9 1307.4,424.9 1306.1,427.3 1304.9,426.2 1303.6,425.3 1302.4,427.1 1301.2,425.3 1299.9,424.5 1298.7,427.2 1297.4,424.5 1296.2,425.4 1294.9,424.7 1293.7,425.9 1292.5,426.0 1291.2,424.1 1290.0,425.1 1288.7,424.2 1287.5,424.5 1286.2,424.4 1285.0,424.1 1283.8,423.8 1282.5,424.0 1281.3,424.0 1280.0,426.1 1278.8,424.0 1277.5,426.0 1276.3,423.8 1275.0,423.5 1273.8,425.1 1272.6,423.8 1271.3,423.4 1270.1,425.5 1268.8,423.5 1267.6,425.7 1266.3,423.9 1265.1,423.5 1263.9,424.3 1262.6,423.3 1261.4,423.0 1260.1,423.2 1258.9,423.4 1257.6,424.4 1256.4,424.2 1255.2,425.1 1253.9,423.4 1252.7,423.6 1251.4,424.4 1250.2,423.3 1248.9,423.1 1247.7,424.0 1246.4,423.0 1245.2,423.7 1244.0,422.9 1242.7,426.0 1241.5,424.0 1240.2,424.0 1239.0,423.0 1237.7,422.7 1236.5,422.4 1235.3,423.5 1234.0,424.2 1232.8,423.3 1231.5,423.9 1230.3,423.7 1229.0,423.6 1227.8,423.7 1226.6,426.5 1225.3,423.2 1224.1,422.6 1222.8,422.6 1221.6,422.4 1220.3,423.4 1219.1,422.0 1217.8,422.5 1216.6,423.3 1215.4,422.9 1214.1,422.9 1212.9,422.4 1211.6,423.8 1210.4,424.0 1209.1,423.2 1207.9,423.6 1206.7,422.1 1205.4,422.2 1204.2,424.1 1202.9,421.7 1201.7,421.8 1200.4,422.3 1199.2,422.6 1198.0,423.1 1196.7,422.2 1195.5,423.4 1194.2,422.7 1193.0,425.2 1191.7,423.0 1190.5,422.0 1189.2,421.8 1188.0,421.4 1186.8,421.9 1185.5,423.0 1184.3,421.4 1183.0,422.4 1181.8,422.2 1180.5,422.6 1179.3,421.2 1178.1,421.6 1176.8,422.3 1175.6,421.4 1174.3,423.8 1173.1,422.1 1171.8,421.7 1170.6,422.2 1169.4,421.3 1168.1,421.7 1166.9,421.0 1165.6,421.5 1164.4,423.3 1163.1,421.2 1161.9,421.5 1160.7,421.9 1159.4,421.0 1158.2,421.5 1156.9,422.0 1155.7,420.6 1154.4,420.6 1153.2,420.9 1151.9,420.6 1150.7,420.6 1149.5,420.8 1148.2,420.8 1147.0,423.2 1145.7,421.8 1144.5,420.6 1143.2,420.8 1142.0,420.5 1140.8,421.6 1139.5,420.7 1138.3,422.4 1137.0,420.5 1135.8,421.4 1134.5,420.2 1133.3,421.2 1132.1,420.2 1130.8,421.9 1129.6,421.2 1128.3,421.2 1127.1,421.0 1125.8,422.2 1124.6,420.1 1123.3,420.1 1122.1,420.6 1120.9,421.5 1119.6,419.8 1118.4,421.2 1117.1,421.3 1115.9,420.3 1114.6,420.6 1113.4,419.6 1112.2,420.0 1110.9,419.7 1109.7,420.9 1108.4,420.7 1107.2,421.3 1105.9,421.1 1104.7,419.9 1103.5,419.9 1102.2,420.0 1101.0,421.7 1099.7,420.4 1098.5,420.9 1097.2,420.9 1096.0,419.9 1094.7,419.2 1093.5,419.8 1092.3,419.3 1091.0,420.1 1089.8,419.9 1088.5,419.6 1087.3,421.3 1086.0,419.9 1084.8,421.7 1083.6,421.2 1082.3,420.4 1081.1,419.2 1079.8,420.0 1078.6,419.1 1077.3,418.9 1076.1,419.2 1074.9,419.4 1073.6,420.6 1072.4,420.2 1071.1,419.3 1069.9,419.3 1068.6,420.6 1067.4,419.3 1066.1,419.5 1064.9,418.9 1063.7,418.5 1062.4,418.5 1061.2,419.1 1059.9,419.4 1058.7,418.3 1057.4,420.4 1056.2,419.3 1055.0,421.0 1053.7,419.1 1052.5,419.1 1051.2,419.1 1050.0,420.4 1048.7,418.2 1047.5,419.8 1046.3,419.2 1045.0,418.9 1043.8,418.0 1042.5,417.9 1041.3,418.6 1040.0,420.2 1038.8,417.8 1037.5,419.3 1036.3,418.3 1035.1,419.9 1033.8,418.1 1032.6,418.6 1031.3,419.3 1030.1,418.6 1028.8,418.4 1027.6,420.3 1026.4,418.3 1025.1,420.2 1023.9,417.6 1022.6,421.7 1021.4,418.2 1020.1,418.3 1018.9,420.3 1017.7,419.5 1016.4,419.0 1015.2,418.2 1013.9,420.0 1012.7,419.2 1011.4,418.2 1010.2,417.7 1008.9,417.4 1007.7,418.8 1006.5,418.4 1005.2,419.8 1004.0,418.3 1002.7,417.0 1001.5,417.1 1000.2,417.9 999.0,417.9 997.8,419.8 996.5,417.0 995.3,417.2 994.0,418.4 992.8,420.1 991.5,417.0 990.3,416.9 989.1,417.7 987.8,418.7 986.6,418.6 985.3,417.7 984.1,417.6 982.8,416.5 981.6,417.2 980.3,418.0 979.1,417.2 977.9,417.0 976.6,416.6 975.4,417.3 974.1,419.1 972.9,416.6 971.6,417.8 970.4,416.5 969.2,417.8 967.9,417.2 966.7,416.4 965.4,416.2 964.2,416.1 962.9,417.2 961.7,417.2 960.5,417.3 959.2,417.0 958.0,416.0 956.7,415.8 955.5,417.3 954.2,416.4 953.0,416.8 951.7,417.1 950.5,416.5 949.3,419.0 948.0,417.2 946.8,416.5 945.5,415.9 944.3,417.6 943.0,417.7 941.8,415.6 940.6,415.5 939.3,415.8 938.1,415.8 936.8,415.5 935.6,416.2 934.3,415.7 933.1,415.3 931.9,415.9 930.6,417.0 929.4,419.8 928.1,416.3 926.9,417.1 925.6,415.9 924.4,415.6 923.1,418.5 921.9,415.8 920.7,415.1 919.4,415.4 918.2,415.8 916.9,417.3 915.7,416.6 914.4,416.4 913.2,415.1 912.0,414.8 910.7,417.0 909.5,416.2 908.2,415.2 907.0,417.1 905.7,415.2 904.5,415.0 903.3,415.0 902.0,415.6 900.8,417.1 899.5,417.2 898.3,414.5 897.0,414.8 895.8,416.0 894.5,415.1 893.3,416.0 892.1,416.2 890.8,415.8 889.6,416.2 888.3,415.8 887.1,414.5 885.8,414.2 884.6,415.2 883.4,415.6 882.1,416.8 880.9,414.4 879.6,414.2 878.4,416.8 877.1,415.3 875.9,415.0 874.7,414.0 873.4,414.2 872.2,416.6 870.9,416.1 869.7,416.1 868.4,415.8 867.2,415.8 865.9,414.0 864.7,415.0 863.5,414.0 862.2,414.2 861.0,415.0 859.7,414.2 858.5,413.9 857.2,413.7 856.0,413.8 854.8,413.5 853.5,417.5 852.3,413.8 851.0,413.5 849.8,414.6 848.5,414.8 847.3,414.2 846.1,414.3 844.8,414.4 843.6,414.3 842.3,414.2 841.1,415.9 839.8,414.4 838.6,413.9 837.3,415.3 836.1,415.1 834.9,414.8 833.6,413.4 832.4,413.5 831.1,413.8 829.9,413.3 828.6,413.4 827.4,413.1 826.2,413.8 824.9,413.3 823.7,414.0 822.4,413.1 821.2,413.4 819.9,413.5 818.7,413.3 817.5,413.7 816.2,414.6 815.0,413.7 813.7,414.6 812.5,412.8 811.2,413.1 810.0,413.3 808.8,414.8 807.5,412.8 806.3,412.4 805.0,412.6 803.8,414.7 802.5,412.8 801.3,413.7 800.0,413.0 798.8,413.5 797.6,414.6 796.3,412.1 795.1,412.9 793.8,412.7 792.6,412.4 791.3,413.5 790.1,412.2 788.9,413.4 787.6,412.9 786.4,411.9 785.1,413.1 783.9,412.9 782.6,412.6 781.4,413.4 780.2,413.5 778.9,412.8 777.7,414.4 776.4,411.9 775.2,412.3 773.9,413.2 772.7,412.0" fill="#ff0000"/>
<polygon points="1319.8,411.7 1321.1,410.7 1322.3,409.6 1323.5,413.0 1324.8,411.8 1326.0,411.3 1327.3,412.3 1328.5,411.1 1329.8,412.8 1331.0,412.4 1332.2,412.9 1333.5,411.7 1334.7,412.0 1336.0,412.7 1337.2,412.4 1338.5,411.4 1339.7,411.4 1341.0,410.7 1342.2,413.2 1343.4,411.3 1344.7,411.9 1345.9,412.1 1347.2,413.1 1348.4,412.8 1349.7,411.0 1350.9,410.8 1352.1,412.7 1353.4,412.0 1354.6,411.5 1355.9,412.6 1357.1,412.8 1358.4,412.9 1359.6,411.9 1360.8,413.0 1362.1,411.7 1363.3,412.5 1364.6,412.9 1365.8,412.2 1367.1,412.4 1368.3,413.1 1369.6,412.0 1370.8,410.4 1372.0,412.7 1373.3,413.0 1374.5,412.6 1375.8,410.8 1377.0,413.0 1378.3,412.2 1379.5,413.1 1380.7,411.2 1382.0,412.1 1383.2,411.8 1384.5,412.9 1385.7,413.2 1387.0,411.1 1388.2,411.1 1389.4,412.7 1390.7,412.3 1391.9,412.5 1393.2,412.8 1394.4,411.8 1395.7,413.1 1396.9,412.4 1398.2,411.2 1399.4,411.5 1400.6,412.2 1401.9,410.6 1403.1,412.6 1404.4,412.9 1405.6,412.4 1406.9,411.7 1408.1,413.1 1409.3,412.6 1410.6,413.1 1411.8,411.9 1413.1,412.4 1414.3,411.7 1415.6,412.8 1416.8,412.7 1418.0,411.4 1419.3,411.1 1420.5,412.6 1421.8,411.5 1423.0,412.3 1424.3,411.5 1425.5,412.8 1426.8,412.8 1428.0,412.0 1429.2,411.9 1430.5,412.9 1431.7,412.3 1433.0,411.7 1434.2,411.7 1435.5,411.2 1436.7,411.9 1437.9,411.1 1439.2,411.9 1440.4,413.0 1441.7,412.7 1442.9,412.6 1444.2,412.5 1445.4,412.8 1446.6,412.8 1447.9,410.7 1449.1,410.1 1450.4,410.8 1451.6,412.5 1452.9,411.4 1454.1,409.6 1455.4,412.1 1456.6,412.2 1457.8,409.8 1459.1,412.0 1460.3,411.4 1461.6,411.5 1462.8,412.5 1464.1,413.0 1465.3,411.6 1466.5,412.9 1467.8,412.3 1469.0,412.6 1470.3,412.7 1471.5,411.8 1472.8,412.0 1474.0,411.5 1475.2,411.0 1476.5,410.7 1477.7,412.6 1479.0,412.4 1480.2,412.6 1481.5,412.8 1482.7,412.9 1484.0,411.9 1485.2,412.4 1486.4,412.5 1487.7,411.9 1488.9,410.8 1490.2,413.0 1491.4,411.7 1492.7,412.7 1493.9,411.4 1495.1,413.0 1496.4,412.9 1497.6,413.0 1498.9,412.2 1500.1,412.4 1501.4,413.0 1502.6,413.0 1503.8,411.8 1505.1,409.9 1506.3,411.8 1507.6,412.8 1508.8,409.8 1510.1,412.3 1511.3,412.1 1512.5,412.3 1513.8,412.9 1515.0,411.2 1516.3,411.0 1517.5,413.2 1518.8,412.6 1520.0,410.2 1521.3,413.0 1522.5,412.3 1523.7,411.9 1525.0,413.0 1526.2,412.1 1527.5,412.6 1528.7,413.1 1530.0,411.3 1531.2,408.9 1532.4,412.7 1533.7,413.0 1534.9,412.2 1536.2,413.1 1537.4,412.2 1538.7,412.5 1539.9,413.1 1541.1,412.2 1542.4,412.9 1543.6,411.8 1544.9,413.0 1546.1,410.9 1547.4,411.7 1548.6,413.2 1549.9,410.6 1551.1,411.8 1552.3,411.4 1553.6,410.5 1554.8,413.0 1556.1,413.2 1557.3,411.7 1558.6,411.0 1559.8,412.4 1561.0,412.7 1562.3,411.8 1563.5,412.7 1564.8,411.7 1566.0,413.1 1567.3,413.1 1568.5,411.3 1569.7,412.5 1571.0,412.3 1572.2,412.0 1573.5,411.3 1574.7,412.1 1576.0,411.3 1577.2,411.2 1578.5,411.3 1579.7,411.0 1580.9,411.0 1582.2,411.8 1583.4,411.8 1584.7,411.0 1585.9,412.6 1587.2,412.7 1588.4,412.9 1589.6,411.6 1590.9,411.2 1592.1,412.8 1593.4,411.3 1594.6,412.3 1595.9,413.2 1597.1,411.9 1598.3,412.9 1599.6,412.2 1600.8,410.1 1602.1,411.1 1603.3,412.4 1604.6,412.7 1605.8,412.8 1607.1,411.6 1608.3,412.4 1609.5,413.1 1610.8,412.2 1612.0,412.0 1613.3,411.7 1614.5,411.6 1615.8,413.1 1617.0,412.7 1618.2,412.2 1619.5,412.3 1620.7,411.0 1622.0,411.8 1623.2,412.6 1624.5,411.4 1625.7,410.9 1626.9,411.0 1628.2,411.5 1629.4,412.0 1630.7,410.6 1631.9,411.4 1633.2,412.4 1634.4,412.8 1635.7,412.8 1636.9,412.5 1638.1,412.3 1639.4,412.4 1640.6,412.6 1641.9,413.2 1643.1,412.8 1644.4,412.9 1645.6,411.6 1646.8,411.3 1648.1,411.3 1649.3,412.8 1650.6,412.3 1651.8,412.1 1653.1,411.7 1654.3,412.1 1655.5,412.2 1656.8,412.4 1658.0,411.8 1659.3,412.9 1660.5,411.7 1661.8,412.6 1663.0,411.9 1664.3,411.1 1665.5,412.0 1666.7,413.0 1668.0,412.5 1669.2,411.1 1670.5,413.0 1671.7,412.9 1673.0,411.6 1674.2,411.0 1675.4,413.0 1676.7,412.1 1677.9,413.1 1679.2,410.2 1680.4,411.0 1681.7,411.4 1682.9,412.5 1684.1,412.5 1685.4,412.6 1686.6,412.8 1687.9,412.9 1689.1,411.9 1690.4,412.9 1691.6,410.9 1692.9,412.2 1694.1,410.9 1695.3,411.7 1696.6,411.3 1697.8,410.9 1699.1,412.4 1700.3,412.7 1701.6,411.2 1702.8,412.1 1704.0,412.1 1705.3,411.4 1706.5,412.6 1707.8,412.6 1709.0,412.4 1710.3,412.9 1711.5,413.0 1712.7,412.3 1714.0,411.9 1715.2,409.8 1716.5,413.1 1717.7,412.2 1719.0,411.8 1720.2,412.4 1721.5,412.8 1722.7,413.2 1723.9,410.4 1725.2,411.6 1726.4,411.6 1727.7,411.9 1728.9,412.8 1730.2,409.7 1731.4,412.5 1732.6,411.6 1733.9,411.4 1735.1,409.3 1736.4,413.0 1737.6,412.1 1738.9,412.4 1740.1,412.9 1741.3,410.7 1742.6,412.6 1743.8,412.7 1745.1,412.4 1746.3,412.3 1747.6,412.9 1748.8,412.0 1750.1,411.7 1751.3,412.2 1752.5,413.2 1753.8,412.4 1755.0,412.7 1756.3,411.5 1757.5,412.6 1758.8,411.9 1760.0,413.1 1761.2,412.0 1762.5,411.9 1763.7,411.2 1765.0,411.2 1766.2,411.9 1767.5,411.0 1768.7,411.6 1769.9,411.9 1771.2,412.7 1772.4,412.5 1773.7,410.1 1774.9,412.8 1776.2,412.6 1777.4,411.6 1778.7,411.8 1779.9,411.4 1781.1,411.2 1782.4,413.1 1783.6,412.0 1784.9,412.0 1786.1,411.3 1787.4,412.9 1788.6,412.7 1789.8,412.3 1791.1,413.1 1792.3,413.0 1793.6,413.1 1794.8,413.1 1796.1,411.9 1797.3,411.7 1798.5,410.9 1799.8,408.8 1801.0,411.6 1802.3,411.0 1803.5,413.1 1804.8,411.5 1806.0,411.0 1807.3,412.6 1808.5,412.7 1809.7,412.0 1811.0,412.1 1812.2,411.7 1813.5,412.6 1814.7,413.0 1816.0,410.7 1817.2,412.1 1818.4,410.6 1819.7,412.2 1820.9,410.3 1822.2,412.8 1823.4,412.7 1824.7,411.5 1825.9,412.0 1827.1,411.1 1828.4,411.4 1829.6,412.3 1830.9,412.4 1832.1,411.6 1833.4,411.8 1834.6,411.6 1835.9,412.3 1837.1,412.2 1838.3,412.6 1839.6,412.2 1840.8,412.2 1842.1,413.1 1843.3,412.5 1844.6,413.2 1845.8,410.5 1847.0,413.1 1848.3,412.6 1849.5,412.7 1850.8,412.9 1852.0,412.4 1853.3,411.5 1854.5,413.0 1855.7,413.0 1857.0,412.7 1858.2,413.0 1859.5,412.3 1860.7,412.1 1862.0,412.3 1863.2,412.2 1864.4,411.9 1865.7,412.3 1866.9,413.2 1868.2,410.6 1869.4,412.0 1869.7,411.6 1869.7,425.3 1869.4,424.3 1868.2,424.9 1866.9,424.2 1865.7,424.1 1864.4,424.2 1863.2,425.2 1862.0,425.2 1860.7,425.7 1859.5,424.4 1858.2,424.2 1857.0,424.1 1855.7,425.4 1854.5,426.9 1853.3,425.2 1852.0,424.0 1850.8,425.7 1849.5,423.9 1848.3,424.6 1847.0,424.3 1845.8,424.7 1844.6,424.7 1843.3,425.3 1842.1,423.9 1840.8,424.8 1839.6,423.9 1838.3,424.4 1837.1,425.2 1835.9,424.8 1834.6,426.3 1833.4,425.8 1832.1,424.8 1830.9,424.0 1829.6,424.4 1828.4,424.5 1827.1,425.4 1825.9,423.9 1824.7,425.5 1823.4,426.0 1822.2,425.6 1820.9,424.4 1819.7,424.9 1818.4,423.8 1817.2,424.0 1816.0,425.5 1814.7,424.5 1813.5,426.1 1812.2,423.9 1811.0,426.5 1809.7,424.8 1808.5,427.1 1807.3,425.4 1806.0,425.6 1804.8,423.9 1803.5,426.8 1802.3,426.4 1801.0,423.8 1799.8,425.1 1798.5,425.2 1797.3,423.8 1796.1,425.3 1794.8,426.6 1793.6,425.5 1792.3,424.4 1791.1,425.3 1789.8,425.5 1788.6,424.8 1787.4,426.1 1786.1,425.3 1784.9,424.4 1783.6,424.1 1782.4,424.5 1781.1,425.7 1779.9,425.7 1778.7,424.0 1777.4,425.5 1776.2,425.3 1774.9,425.5 1773.7,425.2 1772.4,425.1 1771.2,424.4 1769.9,427.0 1768.7,425.2 1767.5,424.7 1766.2,425.9 1765.0,424.8 1763.7,424.4 1762.5,425.0 1761.2,424.9 1760.0,424.9 1758.8,426.5 1757.5,424.0 1756.3,425.4 1755.0,424.0 1753.8,425.1 1752.5,423.9 1751.3,425.4 1750.1,425.5 1748.8,424.2 1747.6,425.1 1746.3,425.1 1745.1,425.2 1743.8,425.2 1742.6,424.1 1741.3,424.2 1740.1,425.8 1738.9,427.2 1737.6,424.7 1736.4,425.9 1735.1,424.9 1733.9,424.3 1732.6,425.7 1731.4,424.2 1730.2,425.7 1728.9,425.9 1727.7,425.0 1726.4,425.2 1725.2,424.9 1723.9,425.1 1722.7,426.1 1721.5,425.7 1720.2,424.1 1719.0,426.1 1717.7,426.6 1716.5,425.9 1715.2,424.8 1714.0,424.3 1712.7,424.8 1711.5,425.3 1710.3,425.5 1709.0,425.4 1707.8,425.1 1706.5,424.3 1705.3,424.4 1704.0,424.0 1702.8,423.9 1701.6,424.9 1700.3,423.9 1699.1,425.9 1697.8,425.0 1696.6,424.1 1695.3,424.8 1694.1,426.1 1692.9,424.8 1691.6,424.4 1690.4,425.3 1689.1,425.1 1687.9,425.4 1686.6,424.7 1685.4,424.2 1684.1,425.4 1682.9,423.8 1681.7,424.7 1680.4,425.6 1679.2,425.9 1677.9,424.2 1676.7,424.0 1675.4,424.5 1674.2,425.5 1673.0,424.9 1671.7,424.1 1670.5,424.5 1669.2,425.4 1668.0,424.5 1666.7,424.6 1665.5,425.3 1664.3,425.9 1663.0,424.3 1661.8,424.8 1660.5,424.5 1659.3,424.0 1658.0,424.3 1656.8,424.9 1655.5,424.3 1654.3,424.5 1653.1,427.3 1651.8,427.1 1650.6,424.5 1649.3,424.2 1648.1,424.4 1646.8,426.2 1645.6,424.6 1644.4,426.6 1643.1,424.6 1641.9,424.2 1640.6,425.3 1639.4,424.5 1638.1,424.1 1636.9,425.5 1635.7,424.7 1634.4,424.2 1633.2,424.8 1631.9,425.9 1630.7,424.9 1629.4,424.7 1628.2,426.0 1626.9,424.8 1625.7,425.2 1624.5,425.0 1623.2,425.4 1622.0,424.4 1620.7,424.0 1619.5,425.5 1618.2,423.8 1617.0,424.5 1615.8,424.0 1614.5,424.5 1613.3,424.2 1612.0,424.3 1610.8,425.1 1609.5,424.3 1608.3,424.7 1607.1,424.0 1605.8,426.3 1604.6,424.4 1603.3,424.1 1602.1,425.3 1600.8,425.0 1599.6,424.3 1598.3,424.3 1597.1,426.2 1595.9,424.5 1594.6,425.0 1593.4,424.2 1592.1,425.3 1590.9,424.1 1589.6,424.4 1588.4,424.7 1587.2,424.2 1585.9,425.0 1584.7,424.5 1583.4,426.2 1582.2,424.5 1580.9,424.1 1579.7,424.6 1578.5,425.7 1577.2,425.9 1576.0,425.8 1574.7,424.9 1573.5,424.3 1572.2,425.2 1571.0,424.9 1569.7,424.1 1568.5,424.0 1567.3,425.4 1566.0,424.2 1564.8,424.4 1563.5,424.5 1562.3,424.6 1561.0,424.2 1559.8,423.9 1558.6,423.9 1557.3,424.4 1556.1,427.0 1554.8,425.7 1553.6,425.0 1552.3,423.9 1551.1,423.8 1549.9,424.8 1548.6,423.9 1547.4,425.3 1546.1,424.0 1544.9,427.3 1543.6,425.5 1542.4,423.9 1541.1,424.0 1539.9,425.4 1538.7,425.8 1537.4,424.0 1536.2,423.9 1534.9,424.2 1533.7,424.6 1532.4,424.4 1531.2,424.0 1530.0,424.1 1528.7,424.7 1527.5,424.4 1526.2,424.3 1525.0,423.8 1523.7,425.3 1522.5,425.2 1521.3,424.0 1520.0,424.4 1518.8,424.9 1517.5,425.6 1516.3,424.5 1515.0,426.3 1513.8,424.5 1512.5,425.2 1511.3,424.6 1510.1,424.3 1508.8,424.8 1507.6,424.3 1506.3,425.5 1505.1,424.3 1503.8,425.8 1502.6,424.8 1501.4,423.9 1500.1,425.3 1498.9,424.8 1497.6,424.4 1496.4,424.6 1495.1,425.5 1493.9,423.9 1492.7,424.0 1491.4,424.6 1490.2,424.7 1488.9,424.3 1487.7,425.1 1486.4,425.0 1485.2,424.9 1484.0,424.0 1482.7,424.8 1481.5,424.5 1480.2,428.5 1479.0,424.1 1477.7,424.5 1476.5,425.5 1475.2,424.3 1474.0,424.6 1472.8,423.8 1471.5,425.5 1470.3,423.8 1469.0,425.8 1467.8,424.3 1466.5,424.7 1465.3,424.2 1464.1,425.8 1462.8,424.5 1461.6,424.1 1460.3,424.5 1459.1,424.2 1457.8,424.4 1456.6,425.5 1455.4,424.3 1454.1,426.0 1452.9,424.6 1451.6,424.1 1450.4,425.0 1449.1,424.0 1447.9,424.0 1446.6,424.1 1445.4,424.6 1444.2,424.0 1442.9,424.0 1441.7,424.2 1440.4,424.3 1439.2,424.3 1437.9,423.8 1436.7,425.8 1435.5,427.7 1434.2,427.0 1433.0,426.2 1431.7,424.0 1430.5,425.7 1429.2,425.1 1428.0,425.1 1426.8,425.2 1425.5,424.0 1424.3,425.6 1423.0,425.2 1421.8,424.3 1420.5,426.6 1419.3,424.1 1418.0,424.2 1416.8,424.7 1415.6,424.5 1414.3,427.2 1413.1,423.8 1411.8,425.5 1410.6,425.4 1409.3,424.6 1408.1,424.1 1406.9,424.4 1405.6,424.6 1404.4,424.8 1403.1,424.7 1401.9,424.5 1400.6,425.6 1399.4,425.3 1398.2,423.8 1396.9,424.2 1395.7,423.8 1394.4,425.2 1393.2,424.8 1391.9,424.1 1390.7,424.3 1389.4,425.2 1388.2,426.1 1387.0,424.6 1385.7,425.0 1384.5,424.2 1383.2,425.0 1382.0,424.5 1380.7,424.1 1379.5,426.0 1378.3,427.6 1377.0,424.0 1375.8,424.1 1374.5,427.2 1373.3,424.4 1372.0,427.0 1370.8,424.5 1369.6,424.2 1368.3,424.4 1367.1,424.0 1365.8,426.3 1364.6,425.8 1363.3,424.0 1362.1,424.8 1360.8,425.6 1359.6,425.9 1358.4,425.2 1357.1,424.2 1355.9,425.1 1354.6,424.1 1353.4,425.9 1352.1,424.2 1350.9,424.9 1349.7,424.5 1348.4,425.6 1347.2,424.0 1345.9,425.5 1344.7,424.8 1343.4,425.2 1342.2,425.9 1341.0,425.2 1339.7,424.8 1338.5,425.6 1337.2,424.1 1336.0,425.3 1334.7,426.8 1333.5,424.7 1332.2,424.7 1331.0,426.1 1329.8,426.1 1328.5,424.3 1327.3,424.9 1326.0,425.2 1324.8,425.1 1323.5,424.4 1322.3,424.9 1321.1,425.1 1319.8,424.8" fill="#ff0000"/>
<path d="M764.4,455.5 L768.0,455.5 L769.1,400 L772.7,404" fill="none" stroke="#ff0000" stroke-width="3.2" stroke-linejoin="round"/>
<path d="M1315.7,386 L1317.1,400 L1319.3,435 L1320.9,420" fill="none" stroke="#ff0000" stroke-width="3" stroke-linejoin="round"/>
<rect x="764.4" y="360.5" width="3" height="2.5" fill="#99ca53"/><rect x="764.4" y="364.5" width="3" height="2.5" fill="#f6a625"/><rect x="764.4" y="443" width="3" height="2.5" fill="#209fdf"/>
</g></svg>
<div class="win" style="left:694px;top:510px;width:1216px;height:276px;border-radius:3px 3px 0 0"><div class="tb ina"><span style="display:inline-block;transform:scaleX(0.9964);transform-origin:center center">Controller Currents</span></div>
<div class="card" style="left:9px;top:37px;width:1198px;height:230px"></div></div>
<svg style="left:1823px;top:514px" width="80" height="20" viewBox="1823 514 80 20"><rect x="1830" y="523" width="6" height="2" fill="#b4b4b4"/><polygon points="1862,521 1866,521 1866,525" fill="#b4b4b4"/><polygon points="1860,523 1860,527 1864,527" fill="#b4b4b4"/><circle cx="1893" cy="524" r="7" fill="#b5b5b5"/><path d="M1890.2,521.2 L1895.8,526.8 M1895.8,521.2 L1890.2,526.8" stroke="#fff" stroke-width="1.9" fill="none"/></svg>
<svg style="left:703px;top:547px" width="1198" height="230" viewBox="703 547 1198 230">
<line x1="760.4" y1="618.4" x2="1868.7" y2="618.4" stroke="#e6e6e6" stroke-width="1.3"/><line x1="760.4" y1="647.3" x2="1868.7" y2="647.3" stroke="#e6e6e6" stroke-width="1.3"/><line x1="760.4" y1="676.2" x2="1868.7" y2="676.2" stroke="#e6e6e6" stroke-width="1.3"/><line x1="760.4" y1="705" x2="1868.7" y2="705" stroke="#e6e6e6" stroke-width="1.3"/><line x1="760.4" y1="733.6" x2="1868.7" y2="733.6" stroke="#e6e6e6" stroke-width="1.3"/><line x1="764.4" y1="618.4" x2="764.4" y2="737.6" stroke="#e6e6e6" stroke-width="1.3"/><line x1="1040.5" y1="618.4" x2="1040.5" y2="737.6" stroke="#e6e6e6" stroke-width="1.3"/><line x1="1316.6" y1="618.4" x2="1316.6" y2="737.6" stroke="#e6e6e6" stroke-width="1.3"/><line x1="1592.6" y1="618.4" x2="1592.6" y2="737.6" stroke="#e6e6e6" stroke-width="1.3"/><line x1="1868.7" y1="618.4" x2="1868.7" y2="737.6" stroke="#e6e6e6" stroke-width="1.3"/><line x1="764.4" y1="618.4" x2="764.4" y2="733.6" stroke="#d4d4d4" stroke-width="1.6"/><line x1="764.4" y1="733.6" x2="1868.7" y2="733.6" stroke="#d4d4d4" stroke-width="1.6"/><text x="758.4" y="623.4" text-anchor="end" textLength="30.7" lengthAdjust="spacingAndGlyphs">234.6</text><text x="758.4" y="652.3" text-anchor="end" textLength="30.7" lengthAdjust="spacingAndGlyphs">115.0</text><text x="758.4" y="681.2" text-anchor="end" textLength="20.8" lengthAdjust="spacingAndGlyphs">-4.5</text><text x="758.4" y="710.0" text-anchor="end" textLength="34.5" lengthAdjust="spacingAndGlyphs">-124.1</text><text x="758.4" y="738.6" text-anchor="end" textLength="34.5" lengthAdjust="spacingAndGlyphs">-243.6</text><text x="764.4" y="752" text-anchor="middle" textLength="23.8" lengthAdjust="spacingAndGlyphs">0.00</text><text x="1040.5" y="752" text-anchor="middle" textLength="23.8" lengthAdjust="spacingAndGlyphs">1.00</text><text x="1316.6" y="752" text-anchor="middle" textLength="23.8" lengthAdjust="spacingAndGlyphs">2.00</text><text x="1592.6" y="752" text-anchor="middle" textLength="23.8" lengthAdjust="spacingAndGlyphs">3.00</text><text x="1868.7" y="752" text-anchor="middle" textLength="23.8" lengthAdjust="spacingAndGlyphs">4.00</text>
<rect x="1147.5" y="584.2" width="8.6" height="8.6" fill="#0000ff" stroke="#1c1c1c" stroke-width="1"/><text x="1161.2" y="593.2" textLength="28.4" lengthAdjust="spacingAndGlyphs">Iq (A)</text><rect x="1198.7" y="584.2" width="8.6" height="8.6" fill="#ff0000" stroke="#1c1c1c" stroke-width="1"/><text x="1212.4" y="593.2" textLength="28.6" lengthAdjust="spacingAndGlyphs">Id (A)</text><rect x="1250.2" y="584.2" width="8.6" height="8.6" fill="#f6a625" stroke="#1c1c1c" stroke-width="1"/><text x="1263.8" y="593.2" textLength="34.8" lengthAdjust="spacingAndGlyphs">Ifw (A)</text><rect x="1307.7" y="584.2" width="8.6" height="8.6" fill="#6d5fd5" stroke="#1c1c1c" stroke-width="1"/><text x="1321.6" y="593.2" textLength="123.9" lengthAdjust="spacingAndGlyphs">Throttle Reduction (%)</text>
<polyline points="764.4,676.1 766.1,661.4 767.7,646.6 769.4,631.6 770.5,622.2 771.0,621.8 772.7,620.9 774.3,621.1 776.0,621.1 777.7,621.1 779.3,621.1 781.0,621.2 782.6,621.0 784.3,621.1 785.9,621.1 787.6,621.3 789.2,621.2 790.9,621.2 792.6,621.1 794.2,621.2 795.9,621.3 797.5,621.2 799.2,621.5 800.8,621.5 802.5,620.9 804.2,621.0 805.8,621.4 807.5,621.3 809.1,621.5 810.8,621.5 812.4,621.8 814.1,621.3 815.7,621.4 817.4,621.9 819.1,621.7 820.7,621.7 822.4,621.5 824.0,621.3 825.7,621.6 827.3,621.7 829.0,621.4 830.7,621.5 832.3,621.7 834.0,621.5 835.6,621.7 837.3,621.8 838.9,621.8 840.6,621.7 842.3,621.9 843.9,622.0 845.6,621.9 847.2,621.7 848.9,622.0 850.5,621.8 852.2,622.1 853.8,621.7 855.5,622.1 857.2,622.0 858.8,621.8 860.5,622.0 862.1,622.0 863.8,622.1 865.4,621.9 867.1,621.9 868.8,622.1 870.4,622.0 872.1,622.2 873.7,622.3 875.4,621.9 877.0,622.3 878.7,622.4 880.4,622.2 882.0,622.1 883.7,622.4 885.3,622.3 887.0,622.5 888.6,622.3 890.3,622.1 891.9,622.4 893.6,622.3 895.3,622.6 896.9,622.5 898.6,622.2 900.2,622.3 901.9,622.7 902.4,622.6 903.5,622.4 905.2,622.5 906.9,622.6 908.5,622.7 910.2,622.7 911.8,622.6 913.5,622.6 915.1,622.6 916.8,622.8 918.4,622.3 920.1,622.7 921.8,622.7 923.4,622.5 925.1,622.8 926.7,622.6 928.4,622.9 930.0,622.8 931.7,622.9 933.4,623.1 935.0,622.9 936.7,622.7 938.3,622.6 940.0,623.2 941.6,622.9 943.3,622.8 945.0,623.0 946.6,622.9 948.3,623.2 949.9,623.0 951.6,623.0 953.2,622.9 954.9,623.2 956.5,622.9 958.2,623.2 959.9,623.4 961.5,622.9 963.2,622.7 964.8,623.3 966.5,623.7 968.1,623.0 969.8,623.0 971.5,623.4 973.1,623.1 974.8,623.2 976.4,623.2 978.1,623.4 979.7,623.3 981.4,623.4 983.1,623.3 984.7,623.2 986.4,623.4 988.0,623.3 989.7,623.4 991.3,623.3 993.0,623.3 994.6,623.8 996.3,623.5 998.0,623.5 999.6,623.6 1001.3,623.5 1002.9,623.6 1004.6,623.7 1006.2,623.7 1007.9,623.4 1009.6,623.8 1011.2,623.6 1012.9,623.5 1014.5,623.6 1016.2,623.7 1017.8,624.0 1019.5,623.6 1021.1,623.8 1022.8,623.4 1024.5,623.8 1026.1,624.0 1027.8,623.8 1029.4,623.8 1031.1,623.9 1032.7,624.0 1034.4,624.1 1036.1,624.3 1037.7,624.0 1039.4,623.9 1040.5,624.0 1041.0,624.0 1042.7,624.0 1044.3,624.0 1046.0,624.1 1047.7,623.7 1049.3,624.2 1051.0,624.0 1052.6,623.9 1054.3,624.2 1055.9,624.3 1057.6,624.2 1059.2,624.1 1060.9,624.0 1062.6,624.7 1064.2,624.3 1065.9,623.9 1067.5,624.0 1069.2,624.2 1070.8,623.9 1072.5,624.2 1074.2,624.1 1075.8,624.4 1077.5,624.4 1079.1,623.7 1080.8,624.3 1082.4,624.0 1084.1,624.5 1085.8,624.3 1087.4,624.4 1089.1,624.1 1090.7,624.6 1092.4,624.7 1094.0,624.1 1095.7,624.4 1097.3,624.2 1099.0,624.3 1100.7,624.1 1102.3,624.7 1104.0,624.2 1105.6,624.3 1107.3,624.5 1108.9,624.3 1110.6,624.4 1112.3,624.3 1113.9,624.4 1115.6,624.2 1117.2,624.4 1118.9,624.4 1120.5,624.4 1122.2,624.5 1123.3,624.4 1123.8,624.6 1125.5,624.4 1127.2,624.5 1128.8,624.4 1130.5,624.4 1132.1,624.2 1133.8,624.5 1135.4,624.2 1137.1,624.3 1138.8,624.5 1140.4,624.5 1142.1,624.3 1143.7,624.0 1145.4,624.5 1147.0,624.4 1148.7,624.1 1150.4,624.5 1152.0,624.2 1153.7,624.2 1155.3,624.4 1157.0,624.3 1158.6,624.4 1160.3,624.0 1161.9,624.7 1163.6,624.2 1165.3,624.0 1166.9,624.4 1168.6,624.2 1170.2,624.3 1171.9,624.2 1173.5,624.3 1175.2,624.3 1176.9,624.1 1178.5,624.4 1180.2,624.2 1181.8,624.1 1183.5,624.2 1185.1,624.3 1186.8,624.2 1188.5,624.0 1190.1,624.3 1191.8,623.9 1193.4,624.0 1195.1,624.2 1196.7,623.9 1198.4,624.2 1200.0,624.1 1201.7,624.3 1203.4,624.0 1205.0,624.0 1206.7,624.2 1208.3,623.7 1210.0,624.7 1211.6,624.0 1213.3,624.0 1215.0,624.2 1216.6,624.1 1218.3,623.7 1219.9,624.2 1221.6,624.2 1223.2,624.0 1224.9,624.0 1226.5,624.1 1228.2,623.9 1229.9,624.1 1231.5,624.0 1233.2,623.9 1233.7,623.7 1234.8,623.9 1236.5,623.8 1238.1,624.1 1239.8,624.0 1241.5,624.0 1243.1,623.9 1244.8,623.9 1246.4,623.7 1248.1,623.9 1249.7,624.1 1251.4,623.7 1253.1,623.7 1254.7,623.7 1256.4,623.6 1258.0,623.6 1259.7,623.7 1261.3,623.6 1263.0,623.9 1264.6,623.6 1266.3,623.7 1268.0,623.8 1269.6,623.5 1271.3,623.8 1272.9,623.4 1274.6,623.4 1276.2,623.4 1277.9,623.4 1279.6,623.2 1281.2,623.4 1282.9,623.1 1284.5,623.6 1286.2,623.3 1287.8,623.2 1289.5,623.2 1291.2,623.2 1292.8,623.2 1294.5,623.1 1296.1,623.1 1297.8,623.2 1299.4,623.1 1301.1,623.3 1302.7,623.4 1304.4,623.1 1306.1,623.2 1307.7,622.9 1309.4,623.2 1311.0,623.0 1312.7,623.1 1314.3,623.3 1315.2,622.6 1316.0,633.2 1316.6,639.8 1317.7,652.1 1319.3,669.8 1319.9,675.9 1321.0,678.0 1322.0,680.0 1322.6,680.7 1324.1,682.5 1324.3,682.7 1325.9,684.9 1326.3,685.1 1327.6,686.1 1328.4,687.4 1329.2,688.1 1330.5,689.3 1330.9,689.4 1332.6,690.8 1332.7,690.6 1334.2,691.9 1334.8,692.1 1335.9,692.8 1337.0,693.5 1337.5,693.4 1339.1,694.1 1339.2,694.1 1340.8,694.8 1341.2,694.8 1342.5,694.6 1343.4,695.0 1344.2,695.1 1345.5,695.3 1345.8,694.6 1347.5,694.6 1347.6,694.9 1349.1,694.0 1349.8,693.9 1350.8,693.8 1351.9,693.5 1352.4,692.9 1354.0,692.3 1354.1,692.2 1355.8,691.3 1356.2,690.8 1357.4,690.0 1358.3,689.0 1359.1,688.5 1360.5,687.2 1360.7,687.2 1362.4,685.4 1362.6,685.0 1364.0,683.6 1364.7,682.8 1365.7,681.4 1366.9,679.8 1367.3,678.8 1369.0,675.2 1370.7,675.2 1371.8,675.0 1372.3,675.0 1374.0,675.0 1375.6,675.0 1377.3,675.0 1378.9,675.0 1380.6,675.1 1382.3,674.9 1383.9,675.0 1385.6,675.0 1387.2,675.0 1388.9,675.0 1390.5,675.0 1392.2,674.9 1393.9,675.0 1395.5,675.0 1397.2,675.0 1398.8,675.0 1400.5,675.0 1402.1,675.0 1403.8,675.0 1405.4,675.0 1407.1,675.0 1408.8,675.0 1410.4,675.0 1412.1,675.0 1413.7,675.0 1415.4,675.0 1417.0,675.0 1418.7,675.0 1420.4,675.0 1422.0,675.0 1423.7,675.0 1425.3,675.1 1427.0,675.0 1428.6,675.1 1430.3,675.0 1431.9,675.0 1433.6,675.0 1435.3,675.0 1436.9,675.0 1438.6,675.0 1440.2,675.0 1441.9,675.0 1443.5,675.0 1445.2,675.0 1446.9,675.0 1448.5,675.0 1450.2,675.0 1451.8,675.0 1453.5,675.0 1455.1,675.0 1456.8,675.1 1458.5,675.0 1460.1,675.0 1461.8,675.0 1463.4,675.0 1465.1,675.0 1466.7,675.0 1468.4,675.0 1470.0,675.1 1471.7,675.0 1473.4,675.0 1475.0,675.1 1476.7,675.0 1478.3,675.1 1480.0,675.0 1481.6,675.0 1483.3,675.0 1485.0,675.0 1486.6,675.0 1488.3,675.0 1489.9,675.0 1491.6,675.0 1493.2,675.0 1494.9,675.0 1496.6,674.9 1498.2,675.0 1499.9,675.0 1501.5,675.0 1503.2,675.0 1504.8,675.0 1506.5,675.0 1508.1,675.0 1509.8,675.0 1511.5,675.0 1513.1,675.0 1514.8,675.1 1516.4,675.0 1518.1,675.0 1519.7,675.0 1521.4,675.0 1523.1,675.0 1524.7,675.0 1526.4,675.0 1528.0,675.0 1529.7,675.0 1531.3,675.0 1533.0,675.0 1534.6,675.0 1536.3,674.9 1538.0,675.0 1539.6,675.0 1541.3,675.0 1542.9,675.1 1544.6,675.0 1546.2,675.0 1547.9,675.0 1549.6,675.0 1551.2,675.0 1552.9,675.0 1554.5,675.0 1556.2,675.0 1557.8,675.0 1559.5,675.0 1561.2,675.1 1562.8,675.0 1564.5,675.0 1566.1,675.0 1567.8,675.0 1569.4,675.0 1571.1,675.0 1572.7,675.0 1574.4,675.0 1576.1,675.0 1577.7,674.9 1579.4,675.1 1581.0,675.1 1582.7,675.0 1584.3,675.0 1586.0,675.1 1587.7,674.9 1589.3,674.9 1591.0,675.0 1592.6,675.0 1594.3,675.0 1595.9,675.0 1597.6,675.0 1599.3,675.0 1600.9,675.0 1602.6,675.1 1604.2,675.0 1605.9,675.0 1607.5,675.0 1609.2,675.0 1610.8,675.0 1612.5,675.0 1614.2,675.0 1615.8,675.0 1617.5,675.0 1619.1,675.0 1620.8,675.0 1622.4,675.0 1624.1,675.0 1625.8,675.0 1627.4,675.0 1629.1,674.9 1630.7,675.0 1632.4,675.0 1634.0,675.0 1635.7,675.0 1637.3,675.0 1639.0,675.0 1640.7,675.0 1642.3,675.0 1644.0,675.0 1645.6,675.0 1647.3,675.0 1648.9,675.0 1650.6,675.0 1652.3,675.1 1653.9,675.0 1655.6,674.9 1657.2,675.0 1658.9,675.1 1660.5,675.0 1662.2,675.0 1663.9,675.0 1665.5,674.9 1667.2,674.9 1668.8,675.0 1670.5,675.0 1672.1,675.0 1673.8,675.0 1675.4,675.0 1677.1,675.0 1678.8,675.0 1680.4,675.0 1682.1,675.0 1683.7,675.0 1685.4,674.9 1687.0,675.0 1688.7,675.0 1690.4,674.9 1692.0,675.0 1693.7,675.0 1695.3,674.9 1697.0,674.9 1698.6,675.0 1700.3,675.0 1702.0,675.0 1703.6,675.0 1705.3,674.9 1706.9,675.0 1708.6,675.0 1710.2,675.1 1711.9,675.0 1713.5,675.0 1715.2,675.1 1716.9,675.0 1718.5,675.0 1720.2,674.9 1721.8,675.0 1723.5,675.1 1725.1,674.9 1726.8,675.0 1728.5,674.9 1730.1,675.0 1731.8,675.0 1733.4,675.0 1735.1,675.0 1736.7,675.0 1738.4,675.0 1740.0,675.1 1741.7,675.0 1743.4,675.0 1745.0,675.0 1746.7,675.0 1748.3,675.0 1750.0,675.0 1751.6,675.1 1753.3,675.1 1755.0,675.0 1756.6,675.0 1758.3,675.1 1759.9,674.9 1761.6,675.0 1763.2,675.0 1764.9,675.0 1766.6,675.0 1768.2,675.0 1769.9,675.0 1771.5,675.0 1773.2,675.0 1774.8,675.0 1776.5,675.0 1778.1,675.0 1779.8,675.0 1781.5,674.9 1783.1,674.9 1784.8,674.9 1786.4,675.0 1788.1,675.0 1789.7,675.0 1791.4,675.0 1793.1,675.0 1794.7,675.0 1796.4,675.0 1798.0,675.0 1799.7,674.9 1801.3,675.0 1803.0,675.0 1804.7,674.9 1806.3,675.0 1808.0,674.9 1809.6,675.0 1811.3,675.0 1812.9,674.9 1814.6,675.0 1816.2,675.1 1817.9,675.0 1819.6,675.0 1821.2,675.0 1822.9,674.9 1824.5,675.0 1826.2,675.0 1827.8,674.9 1829.5,675.0 1831.2,675.0 1832.8,675.0 1834.5,675.0 1836.1,675.0 1837.8,675.0 1839.4,675.0 1841.1,675.0 1842.7,675.0 1844.4,675.1 1846.1,675.0 1847.7,675.1 1849.4,675.0 1851.0,675.0 1852.7,675.0 1854.3,674.9 1856.0,675.0 1857.7,675.0 1859.3,675.0 1861.0,675.0 1862.6,675.0 1864.3,675.0 1865.9,675.0 1867.6,675.0 1868.7,674.9" fill="none" stroke="#0000ff" stroke-width="4" stroke-linejoin="round"/>
<polyline points="764.4,676.1 766.1,693.8 767.7,711.9 768.8,723.3 769.4,725.2 770.5,726.3 771.0,725.8 772.7,725.8 774.3,725.3 776.0,724.8 777.7,724.9 778.2,724.4 779.3,724.4 781.0,724.3 782.6,724.6 784.3,724.5 785.9,724.6 787.6,724.3 789.2,724.5 790.9,724.2 792.6,724.7 794.2,724.5 795.9,724.6 797.5,724.6 799.2,724.2 800.8,724.7 802.5,725.1 804.2,724.0 805.8,723.9 807.5,724.0 809.1,724.7 810.8,724.5 812.4,724.8 814.1,724.6 815.7,724.5 817.4,724.5 819.1,724.4 820.7,724.7 822.4,724.1 824.0,724.3 825.7,724.5 827.3,724.9 829.0,724.2 830.7,724.1 832.3,724.2 834.0,724.7 835.6,724.3 837.3,724.8 838.9,723.8 840.6,724.7 842.3,724.7 843.9,723.9 845.6,724.4 847.2,724.7 848.9,724.4 850.5,724.7 852.2,725.1 853.8,724.4 855.5,724.3 857.2,724.1 858.8,724.5 860.5,724.3 862.1,724.3 863.8,724.3 865.4,724.5 867.1,724.0 868.8,723.9 870.4,723.6 872.1,724.7 873.7,724.3 875.4,724.8 877.0,724.3 878.7,724.1 880.4,724.4 882.0,724.3 883.7,723.9 885.3,724.0 887.0,724.8 888.6,724.4 890.3,724.4 891.9,724.2 893.6,724.1 895.3,724.5 896.9,724.2 898.6,724.0 900.2,724.2 901.9,724.0 903.5,724.3 905.2,724.6 906.9,724.0 908.5,724.7 910.2,724.0 911.8,724.3 913.5,724.0 915.1,724.2 916.8,724.3 918.4,724.1 920.1,724.0 921.8,724.0 923.4,724.0 925.1,723.7 926.7,724.1 928.4,724.3 930.0,724.5 931.7,724.4 933.4,724.9 935.0,724.3 936.7,724.1 938.3,724.8 940.0,723.9 941.6,724.5 943.3,723.9 945.0,724.3 946.6,723.6 948.3,724.4 949.9,724.1 951.6,723.9 953.2,724.7 954.9,724.4 956.5,724.2 958.2,723.9 959.9,724.1 961.5,724.1 963.2,724.4 964.8,724.4 966.5,723.9 968.1,724.0 969.8,724.0 971.5,723.7 973.1,724.0 974.8,724.1 976.4,724.3 978.1,724.5 979.7,723.9 981.4,724.3 983.1,724.0 984.7,724.7 986.4,724.1 988.0,724.3 989.7,723.8 991.3,723.9 993.0,724.2 994.6,724.0 996.3,724.2 998.0,723.6 999.6,724.3 1001.3,723.8 1002.9,724.6 1004.6,724.0 1006.2,724.4 1007.9,723.6 1009.6,724.2 1011.2,723.8 1012.9,723.9 1014.5,724.1 1016.2,724.0 1017.8,724.1 1019.5,724.3 1021.1,724.2 1022.8,724.0 1024.5,723.6 1026.1,723.8 1027.8,724.0 1029.4,723.4 1031.1,724.2 1032.7,723.9 1034.4,723.9 1036.1,724.3 1037.7,724.2 1039.4,724.1 1040.5,723.7 1041.0,724.1 1042.7,724.1 1044.3,723.7 1046.0,724.3 1047.7,724.1 1049.3,723.4 1051.0,724.0 1052.6,723.6 1054.3,724.3 1055.9,724.2 1057.6,723.6 1059.2,723.7 1060.9,723.9 1062.6,723.8 1064.2,724.4 1065.9,724.1 1067.5,723.8 1069.2,724.0 1070.8,723.3 1072.5,724.0 1074.2,724.1 1075.8,723.8 1077.5,723.6 1079.1,724.0 1080.8,724.4 1082.4,723.9 1084.1,723.5 1085.8,724.2 1087.4,723.2 1089.1,723.9 1090.7,723.6 1092.4,724.1 1094.0,723.5 1095.7,724.2 1097.3,723.8 1099.0,723.2 1100.7,723.1 1102.3,723.6 1104.0,724.1 1105.6,723.8 1107.3,723.7 1108.9,723.6 1110.6,723.9 1112.3,723.8 1113.9,723.8 1115.6,723.4 1117.2,724.0 1118.9,724.1 1120.5,723.3 1122.2,724.3 1123.8,723.9 1125.5,723.5 1127.2,723.1 1128.8,723.8 1130.5,723.8 1132.1,723.4 1133.8,723.1 1135.4,723.9 1137.1,723.4 1138.8,723.4 1140.4,724.4 1142.1,724.2 1143.7,723.8 1145.4,723.4 1147.0,723.7 1148.7,722.8 1150.4,723.6 1152.0,723.3 1153.7,723.1 1155.3,723.0 1156.4,723.7 1157.0,723.6 1158.6,723.7 1160.3,723.9 1161.9,723.5 1163.6,723.5 1165.3,723.4 1166.9,723.9 1168.6,724.3 1170.2,724.1 1171.9,724.4 1173.5,723.9 1175.2,724.2 1176.9,724.2 1178.5,724.2 1180.2,725.2 1181.8,724.9 1183.5,724.5 1185.1,724.6 1186.8,724.9 1188.5,724.6 1190.1,725.2 1191.8,724.8 1193.4,725.1 1195.1,725.0 1196.7,725.2 1198.4,725.1 1200.0,725.1 1201.7,725.3 1203.4,725.5 1205.0,725.7 1206.7,725.9 1208.3,726.4 1210.0,726.3 1211.6,726.0 1213.3,726.4 1215.0,726.0 1216.6,726.8 1218.3,726.6 1219.9,726.1 1221.6,726.8 1223.2,726.9 1224.9,725.9 1226.5,726.6 1228.2,726.7 1229.9,726.4 1231.5,726.7 1233.2,726.8 1234.8,727.3 1236.5,727.3 1238.1,728.1 1239.8,727.3 1241.5,727.8 1243.1,727.6 1244.8,727.7 1246.4,727.4 1248.1,727.2 1249.7,727.6 1251.4,728.2 1253.1,728.5 1254.7,728.3 1256.4,728.3 1258.0,728.0 1259.7,728.8 1261.3,728.8 1263.0,728.3 1264.6,728.6 1266.3,728.3 1268.0,729.2 1269.6,728.9 1271.3,728.9 1272.9,729.1 1274.6,729.2 1276.2,729.0 1277.9,728.8 1279.6,728.9 1281.2,728.8 1282.9,729.6 1284.5,730.2 1286.2,729.1 1287.8,729.7 1289.5,729.9 1291.2,729.5 1292.8,729.9 1294.5,729.6 1296.1,730.4 1297.8,729.9 1299.4,730.2 1301.1,730.5 1302.7,730.2 1304.4,729.9 1306.1,730.3 1307.7,730.8 1309.4,730.6 1311.0,730.8 1312.7,730.5 1314.3,730.9 1316.0,731.2 1316.6,731.0 1317.7,723.6 1319.3,725.2 1319.9,725.7 1321.0,725.7 1322.6,726.9 1324.3,726.8 1325.9,727.4 1327.6,727.6 1329.2,728.3 1330.9,728.5 1332.6,728.3 1333.1,728.6 1334.2,728.9 1335.9,728.4 1337.5,729.4 1339.2,729.5 1340.8,729.6 1342.5,729.4 1344.2,729.8 1345.8,729.5 1347.5,730.0 1349.1,730.0 1350.8,730.4 1352.4,730.4 1354.1,730.8 1355.8,731.2 1357.4,730.7 1359.1,731.5 1360.7,730.8 1362.4,730.9 1364.0,731.7 1365.7,731.9 1366.2,732.1 1367.3,731.5 1369.0,732.0 1370.7,732.0 1372.3,732.0 1374.0,732.0 1375.6,732.0 1377.3,731.9 1378.9,731.9 1380.6,731.9 1382.3,732.0 1383.9,731.8 1385.6,731.8 1387.2,731.9 1388.9,732.0 1390.5,731.9 1392.2,731.9 1393.9,731.8 1395.5,731.9 1397.2,731.9 1398.8,731.9 1400.5,731.8 1402.1,731.7 1403.8,731.8 1405.4,731.7 1407.1,731.7 1408.8,731.8 1410.4,731.8 1412.1,731.7 1413.7,731.8 1415.4,731.7 1417.0,731.7 1418.7,731.7 1420.4,731.7 1422.0,731.6 1423.7,731.6 1425.3,731.7 1427.0,731.7 1428.6,731.5 1430.3,731.7 1431.9,731.7 1433.6,731.6 1435.3,731.6 1436.9,731.6 1438.6,731.5 1440.2,731.6 1441.9,731.7 1443.5,731.5 1445.2,731.6 1446.9,731.6 1448.5,731.5 1450.2,731.5 1451.8,731.4 1453.5,731.5 1454.6,731.5 1455.1,731.5 1456.8,731.4 1458.5,731.7 1460.1,731.4 1461.8,731.5 1463.4,731.5 1465.1,731.4 1466.7,731.5 1468.4,731.4 1470.0,731.5 1471.7,731.5 1473.4,731.4 1475.0,731.5 1476.7,731.4 1478.3,731.6 1480.0,731.4 1481.6,731.4 1483.3,731.3 1485.0,731.3 1486.6,731.4 1488.3,731.3 1489.9,731.3 1491.6,731.4 1493.2,731.4 1494.9,731.5 1496.6,731.3 1498.2,731.3 1499.9,731.3 1501.5,731.3 1503.2,731.3 1504.8,731.3 1506.5,731.4 1508.1,731.3 1509.8,731.3 1511.5,731.4 1513.1,731.3 1514.8,731.3 1516.4,731.3 1518.1,731.3 1519.7,731.3 1521.4,731.3 1523.1,731.3 1524.7,731.2 1526.4,731.4 1528.0,731.3 1529.7,731.5 1531.3,731.2 1533.0,731.3 1534.6,731.2 1536.3,731.3 1538.0,731.3 1539.6,731.2 1541.3,731.2 1542.9,731.3 1544.6,731.2 1546.2,731.3 1547.9,731.3 1549.6,731.3 1551.2,731.2 1552.9,731.2 1554.5,731.1 1556.2,731.2 1557.8,731.2 1559.5,731.2 1561.2,731.2 1562.8,731.1 1564.5,731.2 1566.1,731.1 1567.8,731.1 1569.4,731.2 1571.1,731.2 1572.7,731.0 1574.4,731.1 1576.1,731.2 1577.7,731.1 1579.4,731.1 1581.0,731.1 1582.7,731.2 1584.3,731.1 1586.0,731.2 1587.7,731.2 1589.3,731.1 1591.0,731.1 1592.6,731.1 1594.3,731.1 1595.9,731.0 1597.6,731.1 1599.3,731.1 1600.9,731.0 1602.6,731.0 1604.2,731.2 1605.9,731.1 1607.5,731.0 1609.2,731.0 1610.8,731.0 1612.5,731.1 1614.2,731.1 1615.8,730.9 1617.5,731.1 1619.1,731.1 1620.8,731.0 1622.4,731.0 1624.1,731.0 1625.8,731.0 1627.4,731.0 1629.1,730.9 1630.7,731.1 1632.4,731.0 1634.0,731.1 1635.7,731.1 1637.3,731.0 1639.0,731.0 1640.7,731.0 1642.3,731.0 1644.0,730.9 1645.6,730.9 1647.3,730.9 1648.9,730.9 1650.6,730.9 1652.3,730.8 1653.9,730.9 1655.6,730.9 1657.2,730.9 1658.9,730.9 1660.5,730.9 1662.2,731.0 1663.9,730.9 1665.5,730.8 1667.2,730.9 1668.8,730.8 1670.5,730.9 1672.1,730.8 1673.8,730.8 1675.4,730.8 1677.1,730.8 1678.8,730.7 1680.4,730.8 1682.1,730.8 1683.7,730.9 1685.4,730.8 1687.0,730.8 1688.7,730.9 1690.4,730.8 1692.0,730.9 1693.7,730.8 1695.3,730.8 1697.0,730.9 1698.6,730.9 1700.3,730.8 1702.0,730.8 1703.6,730.7 1705.3,730.8 1706.9,730.7 1708.6,730.8 1710.2,730.7 1711.9,730.7 1713.5,730.7 1715.2,730.8 1716.9,730.8 1718.5,730.7 1720.2,730.7 1721.8,730.8 1723.5,730.8 1725.1,730.7 1726.8,730.7 1728.5,730.6 1730.1,730.6 1731.8,730.7 1733.4,730.8 1735.1,730.6 1736.7,730.6 1738.4,730.8 1740.0,730.6 1741.7,730.7 1743.4,730.7 1745.0,730.6 1746.7,730.7 1748.3,730.8 1750.0,730.6 1751.6,730.6 1753.3,730.6 1755.0,730.6 1756.6,730.5 1758.3,730.7 1759.9,730.6 1761.6,730.5 1763.2,730.6 1764.9,730.6 1766.6,730.6 1768.2,730.5 1769.9,730.6 1771.5,730.6 1773.2,730.6 1774.8,730.6 1776.5,730.5 1778.1,730.7 1779.8,730.6 1781.5,730.7 1783.1,730.7 1784.8,730.5 1786.4,730.5 1788.1,730.6 1789.7,730.5 1791.4,730.5 1793.1,730.5 1794.7,730.6 1796.4,730.5 1798.0,730.4 1799.7,730.5 1801.3,730.4 1803.0,730.5 1804.7,730.5 1806.3,730.4 1808.0,730.5 1809.6,730.4 1811.3,730.5 1812.9,730.5 1814.6,730.4 1816.2,730.4 1817.9,730.5 1819.6,730.5 1821.2,730.4 1822.9,730.4 1824.5,730.4 1826.2,730.4 1827.8,730.5 1829.5,730.4 1831.2,730.4 1832.8,730.4 1834.5,730.4 1836.1,730.4 1837.8,730.4 1839.4,730.4 1841.1,730.3 1842.7,730.3 1844.4,730.5 1846.1,730.4 1847.7,730.3 1849.4,730.3 1851.0,730.5 1852.7,730.4 1854.3,730.3 1856.0,730.4 1857.7,730.2 1859.3,730.3 1861.0,730.4 1862.6,730.2 1864.3,730.3 1865.9,730.4 1867.6,730.4 1868.7,730.3" fill="none" stroke="#ff0000" stroke-width="2.8" stroke-linejoin="round"/>
<polyline points="764.4,723.5 766.1,723.1 767.7,723.3 769.4,723.3 771.0,723.3 772.7,723.3 774.3,723.1 776.0,723.3 777.7,723.2 779.3,723.6 781.0,723.3 782.6,723.3 784.3,723.3 785.9,723.2 787.6,723.2 789.2,723.3 790.9,723.3 792.6,723.3 794.2,723.4 795.9,723.3 797.5,723.3 799.2,723.4 800.8,723.3 802.5,723.3 804.2,723.3 805.8,723.3 807.5,723.5 809.1,723.3 810.8,723.3 812.4,723.4 814.1,723.2 815.7,723.3 817.4,723.4 819.1,723.3 820.7,723.3 822.4,723.4 824.0,723.1 825.7,723.4 827.3,723.2 829.0,723.2 830.7,723.3 832.3,723.4 834.0,723.3 835.6,723.2 837.3,723.3 838.9,723.3 840.6,723.4 842.3,723.4 843.9,723.3 845.6,723.4 847.2,723.3 848.9,723.2 850.5,723.3 852.2,723.3 853.8,723.3 855.5,723.2 857.2,723.3 858.8,723.1 860.5,723.4 862.1,723.3 863.8,723.2 865.4,723.3 867.1,723.2 868.8,723.4 870.4,723.1 872.1,723.2 873.7,723.4 875.4,723.4 877.0,723.1 878.7,723.3 880.4,723.3 882.0,723.3 883.7,723.4 885.3,723.2 887.0,723.3 888.6,723.2 890.3,723.4 891.9,723.3 893.6,723.3 895.3,723.2 896.9,723.4 898.6,723.4 900.2,723.4 901.9,723.4 903.5,723.3 905.2,723.2 906.9,723.2 908.5,723.2 910.2,723.4 911.8,723.2 913.5,723.3 915.1,723.3 916.8,723.3 918.4,723.3 920.1,723.2 921.8,723.2 923.4,723.3 925.1,723.4 926.7,723.4 928.4,723.3 930.0,723.3 931.7,723.3 933.4,723.3 935.0,723.4 936.7,723.2 938.3,723.3 940.0,723.3 941.6,723.3 943.3,723.3 945.0,723.5 946.6,723.4 948.3,723.4 949.9,723.1 951.6,723.3 953.2,723.3 954.9,723.3 956.5,723.1 958.2,723.4 959.9,723.4 961.5,723.2 963.2,723.2 964.8,723.2 966.5,723.3 968.1,723.4 969.8,723.5 971.5,723.3 973.1,723.4 974.8,723.3 976.4,723.4 978.1,723.4 979.7,723.4 981.4,723.2 983.1,723.3 984.7,723.2 986.4,723.4 988.0,723.4 989.7,723.3 991.3,723.3 993.0,723.3 994.6,723.2 996.3,723.2 998.0,723.3 999.6,723.5 1001.3,723.3 1002.9,723.3 1004.6,723.2 1006.2,723.2 1007.9,723.3 1009.6,723.4 1011.2,723.3 1012.9,723.3 1014.5,723.3 1016.2,723.3 1017.8,723.2 1019.5,723.3 1021.1,723.3 1022.8,723.2 1024.5,723.3 1026.1,723.2 1027.8,723.3 1029.4,723.4 1031.1,723.3 1032.7,723.3 1034.4,723.4 1036.1,723.4 1037.7,723.4 1039.4,723.1 1041.0,723.4 1042.7,723.3 1044.3,723.3 1046.0,723.4 1047.7,723.4 1049.3,723.4 1051.0,723.3 1052.6,723.4 1054.3,723.3 1055.9,723.3 1057.6,723.4 1059.2,723.3 1060.9,723.5 1062.6,723.4 1064.2,723.5 1065.9,723.3 1067.5,723.3 1069.2,723.3 1070.8,723.4 1072.5,723.3 1074.2,723.3 1075.8,723.3 1077.5,723.4 1079.1,723.2 1080.8,723.4 1082.4,723.2 1084.1,723.2 1085.8,723.2 1087.4,723.2 1089.1,723.3 1090.7,723.4 1092.4,723.3 1094.0,723.3 1095.7,723.4 1097.3,723.3 1099.0,723.3 1100.7,723.3 1102.3,723.2 1104.0,723.4 1105.6,723.2 1107.3,723.4 1108.9,723.3 1110.6,723.4 1112.3,723.3 1113.9,723.2 1115.6,723.3 1117.2,723.3 1118.9,723.3 1120.5,723.3 1122.2,723.3 1123.8,723.3 1125.5,723.2 1127.2,723.3 1128.8,723.1 1130.5,723.3 1132.1,723.2 1133.8,723.4 1135.4,723.4 1137.1,723.1 1138.8,723.3 1140.4,723.3 1142.1,723.2 1143.7,723.3 1145.4,723.3 1147.0,723.2 1148.7,723.3 1150.4,723.3 1152.0,723.3 1153.7,723.2 1155.3,723.3 1156.4,723.4 1157.0,723.2 1158.6,723.4 1160.3,723.5 1161.9,723.6 1163.6,723.8 1165.3,723.8 1166.9,723.8 1168.6,723.9 1170.2,724.1 1171.9,724.3 1173.5,724.2 1175.2,724.3 1176.9,724.5 1178.5,724.5 1180.2,724.8 1181.8,724.6 1183.5,724.8 1185.1,724.9 1186.8,725.0 1188.5,725.0 1190.1,725.3 1191.8,725.2 1193.4,725.3 1195.1,725.3 1196.7,725.5 1198.4,725.6 1200.0,725.8 1201.7,725.8 1203.4,726.0 1205.0,726.0 1206.7,726.1 1208.3,726.2 1210.0,726.3 1211.6,726.3 1213.3,726.5 1215.0,726.6 1216.6,726.6 1218.3,726.7 1219.9,726.8 1221.6,727.0 1223.2,726.9 1224.9,727.0 1226.5,727.1 1228.2,727.3 1229.9,727.2 1231.5,727.4 1233.2,727.6 1234.8,727.5 1236.5,727.8 1238.1,727.8 1239.8,727.8 1241.5,728.0 1243.1,727.9 1244.8,728.1 1246.4,728.4 1248.1,728.3 1249.7,728.6 1251.4,728.5 1253.1,728.7 1254.7,728.7 1256.4,728.6 1258.0,728.8 1259.7,729.0 1261.3,729.0 1263.0,729.0 1264.6,729.3 1266.3,729.3 1268.0,729.3 1269.6,729.4 1271.3,729.7 1272.9,729.6 1274.6,729.9 1276.2,730.0 1277.9,730.0 1279.6,730.0 1281.2,730.0 1282.9,730.2 1284.5,730.4 1286.2,730.4 1287.8,730.5 1289.5,730.6 1291.2,730.7 1292.8,730.7 1294.5,730.8 1296.1,730.9 1297.8,730.9 1299.4,731.1 1301.1,731.1 1302.7,731.2 1304.4,731.5 1306.1,731.5 1307.7,731.8 1309.4,731.8 1311.0,731.7 1312.7,731.9 1314.3,732.0 1315.2,731.9 1316.0,729.1 1317.7,722.9 1317.9,721.8 1319.3,724.2 1319.9,725.0 1321.0,726.1 1322.6,727.4 1324.3,728.9 1324.8,729.6 1325.9,729.5 1327.6,729.7 1329.2,729.9 1330.9,729.9 1332.6,730.1 1334.2,730.2 1335.9,730.4 1337.5,730.4 1339.2,730.6 1340.8,730.7 1342.5,731.0 1344.2,730.9 1345.8,730.9 1347.5,731.2 1349.1,731.2 1350.8,731.4 1352.4,731.5 1354.1,731.7 1355.8,731.7 1357.4,731.9 1359.1,731.8 1360.7,732.0 1362.4,732.3 1364.0,732.3 1365.7,732.4 1366.2,732.4 1367.3,732.5 1369.0,732.5 1370.7,732.4 1372.3,732.5 1374.0,732.5 1375.6,732.5 1377.3,732.4 1378.9,732.5 1380.6,732.4 1382.3,732.4 1383.9,732.4 1385.6,732.4 1387.2,732.4 1388.9,732.4 1390.5,732.4 1392.2,732.4 1393.9,732.4 1395.5,732.3 1397.2,732.3 1398.8,732.3 1400.5,732.3 1402.1,732.3 1403.8,732.3 1405.4,732.3 1407.1,732.3 1408.8,732.3 1410.4,732.2 1412.1,732.3 1413.7,732.2 1415.4,732.2 1417.0,732.2 1418.7,732.2 1420.4,732.2 1422.0,732.2 1423.7,732.2 1425.3,732.2 1427.0,732.2 1428.6,732.2 1430.3,732.2 1431.9,732.1 1433.6,732.1 1435.3,732.1 1436.9,732.1 1438.6,732.1 1440.2,732.1 1441.9,732.1 1443.5,732.0 1445.2,732.1 1446.9,732.1 1448.5,732.0 1450.2,732.0 1451.8,732.0 1453.5,732.0 1454.6,732.0 1455.1,732.0 1456.8,732.0 1458.5,732.0 1460.1,732.0 1461.8,732.0 1463.4,732.0 1465.1,732.0 1466.7,731.9 1468.4,731.9 1470.0,732.0 1471.7,731.9 1473.4,731.9 1475.0,731.9 1476.7,731.9 1478.3,731.9 1480.0,731.9 1481.6,731.9 1483.3,731.9 1485.0,731.9 1486.6,731.9 1488.3,731.9 1489.9,731.9 1491.6,731.9 1493.2,731.9 1494.9,731.9 1496.6,731.9 1498.2,731.9 1499.9,731.9 1501.5,731.9 1503.2,731.9 1504.8,731.8 1506.5,731.9 1508.1,731.9 1509.8,731.9 1511.5,731.8 1513.1,731.8 1514.8,731.8 1516.4,731.8 1518.1,731.8 1519.7,731.8 1521.4,731.8 1523.1,731.8 1524.7,731.8 1526.4,731.8 1528.0,731.8 1529.7,731.8 1531.3,731.8 1533.0,731.7 1534.6,731.8 1536.3,731.8 1538.0,731.7 1539.6,731.8 1541.3,731.7 1542.9,731.7 1544.6,731.7 1546.2,731.7 1547.9,731.7 1549.6,731.7 1551.2,731.7 1552.9,731.7 1554.5,731.7 1556.2,731.7 1557.8,731.7 1559.5,731.7 1561.2,731.7 1562.8,731.7 1564.5,731.7 1566.1,731.7 1567.8,731.7 1569.4,731.7 1571.1,731.7 1572.7,731.7 1574.4,731.7 1576.1,731.7 1577.7,731.6 1579.4,731.7 1581.0,731.6 1582.7,731.7 1584.3,731.6 1586.0,731.6 1587.7,731.6 1589.3,731.6 1591.0,731.6 1592.6,731.6 1594.3,731.6 1595.9,731.6 1597.6,731.6 1599.3,731.6 1600.9,731.6 1602.6,731.6 1604.2,731.6 1605.9,731.6 1607.5,731.6 1609.2,731.6 1610.8,731.5 1612.5,731.5 1614.2,731.5 1615.8,731.5 1617.5,731.5 1619.1,731.5 1620.8,731.5 1622.4,731.5 1624.1,731.5 1625.8,731.5 1627.4,731.5 1629.1,731.5 1630.7,731.5 1632.4,731.5 1634.0,731.5 1635.7,731.5 1637.3,731.5 1639.0,731.4 1640.7,731.5 1642.3,731.5 1644.0,731.4 1645.6,731.5 1647.3,731.4 1648.9,731.4 1650.6,731.4 1652.3,731.5 1653.9,731.4 1655.6,731.4 1657.2,731.4 1658.9,731.4 1660.5,731.4 1662.2,731.4 1663.9,731.4 1665.5,731.4 1667.2,731.4 1668.8,731.4 1670.5,731.4 1672.1,731.4 1673.8,731.4 1675.4,731.4 1677.1,731.3 1678.8,731.3 1680.4,731.4 1682.1,731.4 1683.7,731.3 1685.4,731.3 1687.0,731.3 1688.7,731.3 1690.4,731.3 1692.0,731.3 1693.7,731.3 1695.3,731.3 1697.0,731.3 1698.6,731.3 1700.3,731.3 1702.0,731.3 1703.6,731.3 1705.3,731.3 1706.9,731.3 1708.6,731.3 1710.2,731.3 1711.9,731.2 1713.5,731.2 1715.2,731.2 1716.9,731.2 1718.5,731.3 1720.2,731.2 1721.8,731.2 1723.5,731.2 1725.1,731.2 1726.8,731.2 1728.5,731.2 1730.1,731.2 1731.8,731.2 1733.4,731.2 1735.1,731.2 1736.7,731.2 1738.4,731.2 1740.0,731.2 1741.7,731.2 1743.4,731.2 1745.0,731.2 1746.7,731.1 1748.3,731.1 1750.0,731.1 1751.6,731.1 1753.3,731.1 1755.0,731.1 1756.6,731.1 1758.3,731.1 1759.9,731.1 1761.6,731.1 1763.2,731.1 1764.9,731.1 1766.6,731.1 1768.2,731.1 1769.9,731.1 1771.5,731.1 1773.2,731.1 1774.8,731.1 1776.5,731.1 1778.1,731.0 1779.8,731.1 1781.5,731.1 1783.1,731.0 1784.8,731.0 1786.4,731.1 1788.1,731.0 1789.7,731.0 1791.4,731.0 1793.1,731.0 1794.7,731.0 1796.4,731.0 1798.0,731.0 1799.7,731.0 1801.3,731.0 1803.0,731.0 1804.7,731.0 1806.3,731.0 1808.0,731.0 1809.6,731.0 1811.3,731.0 1812.9,731.0 1814.6,731.0 1816.2,730.9 1817.9,730.9 1819.6,731.0 1821.2,730.9 1822.9,730.9 1824.5,730.9 1826.2,730.9 1827.8,730.9 1829.5,730.9 1831.2,730.9 1832.8,730.9 1834.5,730.9 1836.1,730.9 1837.8,730.9 1839.4,730.9 1841.1,730.9 1842.7,730.9 1844.4,730.9 1846.1,730.9 1847.7,730.9 1849.4,730.8 1851.0,730.8 1852.7,730.8 1854.3,730.8 1856.0,730.8 1857.7,730.9 1859.3,730.8 1861.0,730.8 1862.6,730.8 1864.3,730.8 1865.9,730.8 1867.6,730.8 1868.7,730.8" fill="none" stroke="#f6a625" stroke-width="3.4" stroke-linejoin="round"/>
</svg>
<div class="win" style="left:694px;top:786px;width:1215px;height:293px"><div class="tb ina sh"><span style="display:inline-block;transform:scaleX(1.0127);transform-origin:center center">Motor Currents</span></div>
<div class="card" style="left:9px;top:37px;width:1197px;height:248px"></div></div>
<svg style="left:1822px;top:790px" width="80" height="20" viewBox="1822 790 80 20"><rect x="1829" y="799" width="6" height="2" fill="#b4b4b4"/><polygon points="1861,797 1865,797 1865,801" fill="#b4b4b4"/><polygon points="1859,799 1859,803 1863,803" fill="#b4b4b4"/><circle cx="1892" cy="800" r="7" fill="#b5b5b5"/><path d="M1889.2,797.2 L1894.8,802.8 M1894.8,797.2 L1889.2,802.8" stroke="#fff" stroke-width="1.9" fill="none"/></svg>
<svg style="left:703px;top:823px" width="1197" height="248" viewBox="703 823 1197 248">
<line x1="760.4" y1="894.2" x2="1867.7" y2="894.2" stroke="#e6e6e6" stroke-width="1.3"/><line x1="760.4" y1="927.7" x2="1867.7" y2="927.7" stroke="#e6e6e6" stroke-width="1.3"/><line x1="760.4" y1="961.1" x2="1867.7" y2="961.1" stroke="#e6e6e6" stroke-width="1.3"/><line x1="760.4" y1="994.6" x2="1867.7" y2="994.6" stroke="#e6e6e6" stroke-width="1.3"/><line x1="760.4" y1="1028" x2="1867.7" y2="1028" stroke="#e6e6e6" stroke-width="1.3"/><line x1="764.4" y1="894.2" x2="764.4" y2="1032" stroke="#e6e6e6" stroke-width="1.3"/><line x1="1040.2" y1="894.2" x2="1040.2" y2="1032" stroke="#e6e6e6" stroke-width="1.3"/><line x1="1316.1" y1="894.2" x2="1316.1" y2="1032" stroke="#e6e6e6" stroke-width="1.3"/><line x1="1591.9" y1="894.2" x2="1591.9" y2="1032" stroke="#e6e6e6" stroke-width="1.3"/><line x1="1867.7" y1="894.2" x2="1867.7" y2="1032" stroke="#e6e6e6" stroke-width="1.3"/><line x1="764.4" y1="894.2" x2="764.4" y2="1028" stroke="#d4d4d4" stroke-width="1.6"/><line x1="764.4" y1="1028" x2="1867.7" y2="1028" stroke="#d4d4d4" stroke-width="1.6"/><text x="758.4" y="899.2" text-anchor="end" textLength="30.7" lengthAdjust="spacingAndGlyphs">318.0</text><text x="758.4" y="932.7" text-anchor="end" textLength="30.7" lengthAdjust="spacingAndGlyphs">158.9</text><text x="758.4" y="966.1" text-anchor="end" textLength="20.8" lengthAdjust="spacingAndGlyphs">-0.2</text><text x="758.4" y="999.6" text-anchor="end" textLength="34.5" lengthAdjust="spacingAndGlyphs">-159.3</text><text x="758.4" y="1033.0" text-anchor="end" textLength="34.5" lengthAdjust="spacingAndGlyphs">-318.4</text><text x="764.4" y="1046" text-anchor="middle" textLength="23.8" lengthAdjust="spacingAndGlyphs">0.00</text><text x="1040.2" y="1046" text-anchor="middle" textLength="23.8" lengthAdjust="spacingAndGlyphs">1.00</text><text x="1316.1" y="1046" text-anchor="middle" textLength="23.8" lengthAdjust="spacingAndGlyphs">2.00</text><text x="1591.9" y="1046" text-anchor="middle" textLength="23.8" lengthAdjust="spacingAndGlyphs">3.00</text><text x="1867.7" y="1046" text-anchor="middle" textLength="23.8" lengthAdjust="spacingAndGlyphs">4.00</text>
<rect x="1174.7" y="860.1" width="8.6" height="8.6" fill="#209fdf" stroke="#1c1c1c" stroke-width="1"/><text x="1188.4" y="869.1" textLength="27.0" lengthAdjust="spacingAndGlyphs">Ia (A)</text><rect x="1225.4" y="860.1" width="8.6" height="8.6" fill="#99ca53" stroke="#1c1c1c" stroke-width="1"/><text x="1238.8" y="869.1" textLength="28.3" lengthAdjust="spacingAndGlyphs">Ib (A)</text><rect x="1276.5" y="860.1" width="8.6" height="8.6" fill="#f6a625" stroke="#1c1c1c" stroke-width="1"/><text x="1290.2" y="869.1" textLength="26.9" lengthAdjust="spacingAndGlyphs">Ic (A)</text><rect x="1326.8" y="860.1" width="8.6" height="8.6" fill="#0000ff" stroke="#1c1c1c" stroke-width="1"/><text x="1340.2" y="869.1" textLength="28.0" lengthAdjust="spacingAndGlyphs">Iq (A)</text><rect x="1377.7" y="860.1" width="8.6" height="8.6" fill="#ff0000" stroke="#1c1c1c" stroke-width="1"/><text x="1391.3" y="869.1" textLength="28.6" lengthAdjust="spacingAndGlyphs">Id (A)</text>
<polyline points="764.4,960.6 764.5,963.9 764.6,967.1 764.7,970.0 764.8,972.8 765.0,975.4 765.1,977.8 765.2,980.2 765.3,982.3 765.4,984.4 765.5,986.3 765.6,988.1 765.7,989.8 765.8,991.4 765.9,992.9 766.1,994.3 766.2,995.6 766.3,996.8 766.4,998.0 766.5,999.1 766.6,1000.1 766.7,1001.1 766.8,1002.0 766.9,1002.9 767.0,1003.7 767.2,1004.5 767.3,1005.2 767.4,1005.9 767.5,1006.5 767.6,1007.1 767.7,1007.6 767.8,1008.2 767.9,1008.7 768.0,1009.1 768.2,1009.6 768.3,1010.0 768.4,1010.4 768.5,1010.7 768.6,1011.1 768.7,1011.4 768.8,1011.7 768.9,1012.0 769.0,1012.3 769.1,1012.5 769.3,1012.8 769.4,1013.1 769.5,1013.4 769.6,1013.6 769.7,1013.9 769.8,1014.1 769.9,1014.4 770.0,1014.7 770.1,1014.9 770.2,1015.2 770.4,1015.5 770.5,1015.7 770.6,1016.0 770.7,1016.3 770.8,1016.5 770.9,1016.8 771.0,1017.1 771.1,1017.4 771.2,1017.7 771.4,1017.9 771.5,1018.2 771.6,1018.5 771.7,1018.8 771.8,1019.1 771.9,1019.4 772.0,1019.7 772.1,1019.9 772.2,1020.2 772.3,1020.5 772.5,1020.8 772.6,1021.1 772.7,1021.4 772.8,1021.6 772.9,1021.9 773.0,1022.2 773.1,1022.4 773.2,1022.7 773.3,1022.9 773.4,1023.1 773.6,1023.4 773.7,1023.6 773.8,1023.8 773.9,1024.0 774.0,1024.1 774.1,1024.3 774.2,1024.4 774.3,1024.6 774.4,1024.7 774.6,1024.8 774.7,1024.8 774.8,1024.9 774.9,1024.9 775.0,1024.9 775.1,1024.9 775.2,1024.9 775.3,1024.8 775.4,1024.7 775.5,1024.5 775.7,1024.4 775.8,1024.2 775.9,1024.0 776.0,1023.7 776.1,1023.4 776.2,1023.1 776.3,1022.7 776.4,1022.3 776.5,1021.8 776.6,1021.3 776.8,1020.8 776.9,1020.2 777.0,1019.5 777.1,1018.9 777.2,1018.1 777.3,1017.3 777.4,1016.5 777.5,1015.6 777.6,1014.7 777.7,1013.7 777.9,1012.7 778.0,1011.6 778.1,1010.4 778.2,1009.2 778.3,1008.0 778.4,1006.6 778.5,1005.3 778.6,1003.8 778.7,1002.3 778.9,1000.8 779.0,999.2 779.1,997.5 779.2,995.8 779.3,994.0 779.4,992.2 779.5,990.3 779.6,988.4 779.7,986.4 779.8,984.4 780.0,982.3 780.1,980.2 780.2,978.0 780.3,975.8 780.4,973.5 780.5,971.2 780.6,968.9 780.7,966.5 780.8,964.1 780.9,961.7 781.1,959.3 781.2,956.8 781.3,954.3 781.4,951.8 781.5,949.3 781.6,946.8 781.7,944.3 781.8,941.8 781.9,939.3 782.1,936.8 782.2,934.4 782.3,931.9 782.4,929.5 782.5,927.2 782.6,924.8 782.7,922.6 782.8,920.3 782.9,918.2 783.0,916.1 783.2,914.0 783.3,912.1 783.4,910.2 783.5,908.4 783.6,906.8 783.7,905.2 783.8,903.7 783.9,902.3 784.0,901.1 784.1,900.0 784.3,899.0 784.4,898.1 784.5,897.4 784.6,896.9 784.7,896.5 784.8,896.2 784.9,896.1 785.0,896.2 785.1,896.4 785.3,896.8 785.4,897.3 785.5,898.1 785.6,899.0 785.7,900.1 785.8,901.3 785.9,902.8 786.0,904.4 786.1,906.2 786.2,908.1 786.4,910.2 786.5,912.5 786.6,914.9 786.7,917.5 786.8,920.3 786.9,923.2 787.0,926.2 787.1,929.3 787.2,932.6 787.3,936.0 787.5,939.5 787.6,943.1 787.7,946.7 787.8,950.5 787.9,954.3 788.0,958.1 788.1,962.0 788.2,965.8 788.3,969.7 788.5,973.6 788.6,977.4 788.7,981.2 788.8,985.0 788.9,988.7 789.0,992.2 789.1,995.7 789.2,999.1 789.3,1002.3 789.4,1005.3 789.6,1008.2 789.7,1011.0 789.8,1013.5 789.9,1015.8 790.0,1017.8 790.1,1019.7 790.2,1021.3 790.3,1022.6 790.4,1023.7 790.5,1024.4 790.7,1024.9 790.8,1025.1 790.9,1025.0 791.0,1024.6 791.1,1023.8 791.2,1022.8 791.3,1021.5 791.4,1019.8 791.5,1017.9 791.7,1015.6 791.8,1013.1 791.9,1010.3 792.0,1007.2 792.1,1003.9 792.2,1000.3 792.3,996.5 792.4,992.4 792.5,988.2 792.6,983.9 792.8,979.3 792.9,974.7 793.0,969.9 793.1,965.1 793.2,960.2 793.3,955.3 793.4,950.4 793.5,945.6 793.6,940.8 793.7,936.1 793.9,931.5 794.0,927.1 794.1,922.9 794.2,918.9 794.3,915.1 794.4,911.6 794.5,908.5 794.6,905.6 794.7,903.1 794.9,900.9 795.0,899.1 795.1,897.7 795.2,896.8 795.3,896.2 795.4,896.1 795.5,896.5 795.6,897.2 795.7,898.5 795.8,900.1 796.0,902.2 796.1,904.8 796.2,907.7 796.3,911.0 796.4,914.8 796.5,918.8 796.6,923.2 796.7,927.9 796.8,932.9 796.9,938.0 797.1,943.4 797.2,949.0 797.3,954.6 797.4,960.3 797.5,966.1 797.6,971.8 797.7,977.4 797.8,983.0 797.9,988.3 798.1,993.5 798.2,998.4 798.3,1003.0 798.4,1007.3 798.5,1011.2 798.6,1014.7 798.7,1017.7 798.8,1020.3 798.9,1022.3 799.0,1023.8 799.2,1024.7 799.3,1025.1 799.4,1024.9 799.5,1024.1 799.6,1022.7 799.7,1020.8 799.8,1018.3 799.9,1015.2 800.0,1011.6 800.1,1007.6 800.3,1003.0 800.4,998.1 800.5,992.7 800.6,987.1 800.7,981.1 800.8,975.0 800.9,968.6 801.0,962.2 801.1,955.7 801.3,949.3 801.4,942.9 801.5,936.7 801.6,930.8 801.7,925.1 801.8,919.8 801.9,914.9 802.0,910.4 802.1,906.5 802.2,903.2 802.4,900.4 802.5,898.3 802.6,896.9 802.7,896.2 802.8,896.2 802.9,896.9 803.0,898.3 803.1,900.5 803.2,903.3 803.3,906.8 803.5,911.0 803.6,915.7 803.7,921.0 803.8,926.7 803.9,932.9 804.0,939.4 804.1,946.2 804.2,953.2 804.3,960.3 804.4,967.5 804.6,974.5 804.7,981.4 804.8,988.1 804.9,994.5 805.0,1000.4 805.1,1005.9 805.2,1010.8 805.3,1015.0 805.4,1018.6 805.6,1021.4 805.7,1023.5 805.8,1024.7 805.9,1025.1 806.0,1024.6 806.1,1023.3 806.2,1021.1 806.3,1018.1 806.4,1014.3 806.5,1009.7 806.7,1004.5 806.8,998.6 806.9,992.2 807.0,985.4 807.1,978.1 807.2,970.6 807.3,962.9 807.4,955.2 807.5,947.5 807.6,940.0 807.8,932.8 807.9,925.9 808.0,919.6 808.1,913.8 808.2,908.8 808.3,904.5 808.4,901.0 808.5,898.4 808.6,896.8 808.8,896.1 808.9,896.5 809.0,897.8 809.1,900.1 809.2,903.4 809.3,907.6 809.4,912.6 809.5,918.4 809.6,924.9 809.7,932.0 809.9,939.6 810.0,947.6 810.1,955.8 810.2,964.1 810.3,972.3 810.4,980.4 810.5,988.2 810.6,995.5 810.7,1002.2 810.8,1008.3 811.0,1013.6 811.1,1017.9 811.2,1021.3 811.3,1023.6 811.4,1024.9 811.5,1025.0 811.6,1024.0 811.7,1021.8 811.8,1018.6 812.0,1014.3 812.1,1009.0 812.2,1002.9 812.3,995.9 812.4,988.3 812.5,980.2 812.6,971.7 812.7,962.9 812.8,954.1 812.9,945.4 813.1,937.0 813.2,928.9 813.3,921.5 813.4,914.8 813.5,908.9 813.6,904.1 813.7,900.3 813.8,897.7 813.9,896.3 814.0,896.2 814.2,897.4 814.3,899.8 814.4,903.4 814.5,908.2 814.6,914.1 814.7,920.9 814.8,928.6 814.9,936.9 815.0,945.7 815.2,954.9 815.3,964.2 815.4,973.5 815.5,982.5 815.6,991.0 815.7,999.0 815.8,1006.1 815.9,1012.3 816.0,1017.4 816.1,1021.2 816.3,1023.8 816.4,1025.0 816.5,1024.8 816.6,1023.2 816.7,1020.2 816.8,1015.8 816.9,1010.3 817.0,1003.6 817.1,995.9 817.2,987.4 817.4,978.3 817.5,968.7 817.6,959.0 817.7,949.2 817.8,939.7 817.9,930.7 818.0,922.3 818.1,914.9 818.2,908.4 818.4,903.2 818.5,899.4 818.6,897.0 818.7,896.1 818.8,896.8 818.9,899.0 819.0,902.7 819.1,907.8 819.2,914.3 819.3,921.8 819.5,930.4 819.6,939.7 819.7,949.6 819.8,959.8 819.9,970.0 820.0,980.0 820.1,989.5 820.2,998.3 820.3,1006.2 820.4,1012.9 820.6,1018.3 820.7,1022.1 820.8,1024.4 820.9,1025.1 821.0,1024.0 821.1,1021.3 821.2,1017.0 821.3,1011.1 821.4,1003.9 821.6,995.6 821.7,986.2 821.8,976.2 821.9,965.7 822.0,955.0 822.1,944.5 822.2,934.4 822.3,925.0 822.4,916.6 822.5,909.4 822.7,903.5 822.8,899.3 822.9,896.8 823.0,896.1 823.1,897.2 823.2,900.2 823.3,904.8 823.4,911.1 823.5,918.8 823.6,927.8 823.8,937.7 823.9,948.3 824.0,959.2 824.1,970.3 824.2,981.1 824.3,991.3 824.4,1000.6 824.5,1008.7 824.6,1015.4 824.8,1020.5 824.9,1023.7 825.0,1025.1 825.1,1024.5 825.2,1021.9 825.3,1017.4 825.4,1011.2 825.5,1003.4 825.6,994.3 825.7,984.0 825.9,973.1 826.0,961.7 826.1,950.3 826.2,939.1 826.3,928.7 826.4,919.2 826.5,911.0 826.6,904.5 826.7,899.7 826.8,896.9 827.0,896.1 827.1,897.5 827.2,900.9 827.3,906.3 827.4,913.5 827.5,922.3 827.6,932.4 827.7,943.4 827.8,955.1 828.0,966.9 828.1,978.6 828.2,989.6 828.3,999.7 828.4,1008.5 828.5,1015.6 828.6,1020.9 828.7,1024.1 828.8,1025.1 828.9,1023.8 829.1,1020.4 829.2,1014.8 829.3,1007.3 829.4,998.2 829.5,987.7 829.6,976.2 829.7,964.2 829.8,952.0 829.9,940.0 830.0,928.9 830.2,918.8 830.3,910.2 830.4,903.5 830.5,898.8 830.6,896.4 830.7,896.4 830.8,898.7 830.9,903.4 831.0,910.1 831.1,918.8 831.3,929.1 831.4,940.6 831.5,952.8 831.6,965.4 831.7,977.8 831.8,989.6 831.9,1000.2 832.0,1009.4 832.1,1016.7 832.3,1021.9 832.4,1024.6 832.5,1024.9 832.6,1022.7 832.7,1018.0 832.8,1011.0 832.9,1002.1 833.0,991.5 833.1,979.6 833.2,966.9 833.4,954.0 833.5,941.3 833.6,929.4 833.7,918.7 833.8,909.7 833.9,902.8 834.0,898.2 834.1,896.2 834.2,896.8 834.3,900.1 834.5,905.8 834.6,913.9 834.7,923.9 834.8,935.5 834.9,948.2 835.0,961.4 835.1,974.5 835.2,987.2 835.3,998.7 835.5,1008.6 835.6,1016.4 835.7,1021.9 835.8,1024.7 835.9,1024.8 836.0,1022.1 836.1,1016.6 836.2,1008.8 836.3,998.8 836.4,987.1 836.6,974.2 836.7,960.7 836.8,947.2 836.9,934.2 837.0,922.4 837.1,912.3 837.2,904.4 837.3,899.0 837.4,896.3 837.5,896.6 837.7,899.8 837.8,905.8 837.9,914.3 838.0,925.0 838.1,937.3 838.2,950.7 838.3,964.6 838.4,978.4 838.5,991.3 838.7,1002.8 838.8,1012.3 838.9,1019.4 839.0,1023.8 839.1,1025.1 839.2,1023.4 839.3,1018.6 839.4,1011.1 839.5,1001.1 839.6,989.2 839.8,975.8 839.9,961.7 840.0,947.5 840.1,934.0 840.2,921.7 840.3,911.3 840.4,903.3 840.5,898.2 840.6,896.1 840.7,897.3 840.9,901.6 841.0,908.9 841.1,918.8 841.2,930.8 841.3,944.3 841.4,958.7 841.5,973.2 841.6,987.1 841.7,999.6 841.9,1010.2 842.0,1018.2 842.1,1023.3 842.2,1025.1 842.3,1023.6 842.4,1018.8 842.5,1010.9 842.6,1000.4 842.7,987.8 842.8,973.8 843.0,959.0 843.1,944.3 843.2,930.4 843.3,918.1 843.4,908.1 843.5,900.9 843.6,896.9 843.7,896.3 843.8,899.2 843.9,905.4 844.1,914.7 844.2,926.4 844.3,940.1 844.4,954.9 844.5,970.0 844.6,984.7 844.7,998.0 844.8,1009.3 844.9,1017.8 845.1,1023.2 845.2,1025.1 845.3,1023.4 845.4,1018.1 845.5,1009.5 845.6,998.2 845.7,984.7 845.8,969.9 845.9,954.4 846.0,939.3 846.2,925.4 846.3,913.6 846.4,904.4 846.5,898.5 846.6,896.1 846.7,897.6 846.8,902.7 846.9,911.2 847.0,922.7 847.1,936.4 847.3,951.5 847.4,967.2 847.5,982.6 847.6,996.6 847.7,1008.5 847.8,1017.6 847.9,1023.2 848.0,1025.1 848.1,1023.1 848.3,1017.2 848.4,1008.0 848.5,995.8 848.6,981.4 848.7,965.8 848.8,949.8 848.9,934.5 849.0,920.7 849.1,909.4 849.2,901.3 849.4,896.9 849.5,896.4 849.6,900.0 849.7,907.3 849.8,918.1 849.9,931.5 850.0,946.8 850.1,963.0 850.2,979.1 850.3,994.0 850.5,1006.8 850.6,1016.6 850.7,1022.9 850.8,1025.1 850.9,1023.1 851.0,1017.1 851.1,1007.4 851.2,994.7 851.3,979.6 851.5,963.3 851.6,946.9 851.7,931.3 851.8,917.6 851.9,906.7 852.0,899.4 852.1,896.2 852.2,897.3 852.3,902.7 852.4,911.9 852.6,924.4 852.7,939.4 852.8,955.8 852.9,972.6 853.0,988.6 853.1,1002.7 853.2,1013.9 853.3,1021.5 853.4,1024.9 853.5,1023.9 853.7,1018.5 853.8,1009.1 853.9,996.3 854.0,980.9 854.1,964.2 854.2,947.2 854.3,931.1 854.4,917.0 854.5,906.0 854.6,898.9 854.8,896.1 854.9,897.9 855.0,904.2 855.1,914.6 855.2,928.2 855.3,944.2" fill="none" stroke="#209fdf" stroke-width="2" stroke-linejoin="round"/>
<polyline points="764.4,960.6 764.5,957.3 764.6,954.1 764.7,951.2 764.8,948.4 765.0,945.8 765.1,943.4 765.2,941.0 765.3,938.9 765.4,936.8 765.5,934.9 765.6,933.1 765.7,931.4 765.8,929.8 765.9,928.3 766.1,926.9 766.2,925.6 766.3,924.4 766.4,923.2 766.5,922.1 766.6,921.1 766.7,920.1 766.8,919.2 766.9,918.3 767.0,917.5 767.2,916.7 767.3,916.0 767.4,915.3 767.5,914.7 767.6,914.1 767.7,913.6 767.8,913.0 767.9,912.5 768.0,912.1 768.2,911.6 768.3,911.2 768.4,910.8 768.5,910.5 768.6,910.1 768.7,909.8 768.8,909.5 768.9,909.2 769.0,909.0 769.1,908.7 769.3,908.5 769.4,908.4 769.5,908.2 769.6,908.1 769.7,908.0 769.8,907.9 769.9,907.9 770.0,907.8 770.1,907.8 770.2,907.8 770.4,907.8 770.5,907.9 770.6,907.9 770.7,908.0 770.8,908.1 770.9,908.3 771.0,908.4 771.1,908.6 771.2,908.8 771.4,909.0 771.5,909.2 771.6,909.5 771.7,909.7 771.8,910.0 771.9,910.4 772.0,910.7 772.1,911.0 772.2,911.4 772.3,911.8 772.5,912.3 772.6,912.7 772.7,913.2 772.8,913.7 772.9,914.2 773.0,914.7 773.1,915.3 773.2,915.9 773.3,916.5 773.4,917.2 773.6,917.9 773.7,918.6 773.8,919.3 773.9,920.0 774.0,920.8 774.1,921.7 774.2,922.5 774.3,923.4 774.4,924.3 774.6,925.2 774.7,926.2 774.8,927.2 774.9,928.2 775.0,929.3 775.1,930.4 775.2,931.5 775.3,932.6 775.4,933.8 775.5,935.0 775.7,936.3 775.8,937.6 775.9,938.9 776.0,940.2 776.1,941.6 776.2,943.0 776.3,944.4 776.4,945.9 776.5,947.4 776.6,948.9 776.8,950.5 776.9,952.1 777.0,953.7 777.1,955.3 777.2,957.0 777.3,958.7 777.4,960.4 777.5,962.2 777.6,963.9 777.7,965.7 777.9,967.5 778.0,969.3 778.1,971.1 778.2,973.0 778.3,974.8 778.4,976.7 778.5,978.5 778.6,980.4 778.7,982.3 778.9,984.2 779.0,986.0 779.1,987.9 779.2,989.8 779.3,991.6 779.4,993.5 779.5,995.3 779.6,997.1 779.7,998.9 779.8,1000.6 780.0,1002.3 780.1,1004.0 780.2,1005.7 780.3,1007.3 780.4,1008.9 780.5,1010.4 780.6,1011.8 780.7,1013.2 780.8,1014.6 780.9,1015.9 781.1,1017.1 781.2,1018.3 781.3,1019.3 781.4,1020.3 781.5,1021.2 781.6,1022.1 781.7,1022.8 781.8,1023.4 781.9,1024.0 782.1,1024.4 782.2,1024.7 782.3,1025.0 782.4,1025.1 782.5,1025.1 782.6,1025.0 782.7,1024.7 782.8,1024.4 782.9,1023.9 783.0,1023.3 783.2,1022.5 783.3,1021.7 783.4,1020.7 783.5,1019.5 783.6,1018.3 783.7,1016.9 783.8,1015.4 783.9,1013.7 784.0,1011.9 784.1,1010.0 784.3,1007.9 784.4,1005.8 784.5,1003.5 784.6,1001.1 784.7,998.6 784.8,995.9 784.9,993.2 785.0,990.4 785.1,987.4 785.3,984.4 785.4,981.3 785.5,978.1 785.6,974.9 785.7,971.5 785.8,968.2 785.9,964.8 786.0,961.3 786.1,957.9 786.2,954.4 786.4,950.9 786.5,947.4 786.6,944.0 786.7,940.5 786.8,937.2 786.9,933.8 787.0,930.6 787.1,927.4 787.2,924.3 787.3,921.3 787.5,918.4 787.6,915.6 787.7,913.0 787.8,910.5 787.9,908.2 788.0,906.0 788.1,904.1 788.2,902.3 788.3,900.7 788.5,899.4 788.6,898.3 788.7,897.4 788.8,896.7 788.9,896.3 789.0,896.1 789.1,896.2 789.2,896.5 789.3,897.1 789.4,898.0 789.6,899.1 789.7,900.5 789.8,902.2 789.9,904.1 790.0,906.2 790.1,908.7 790.2,911.3 790.3,914.2 790.4,917.3 790.5,920.6 790.7,924.1 790.8,927.8 790.9,931.7 791.0,935.8 791.1,939.9 791.2,944.2 791.3,948.6 791.4,953.1 791.5,957.6 791.7,962.2 791.8,966.8 791.9,971.4 792.0,975.9 792.1,980.4 792.2,984.8 792.3,989.1 792.4,993.3 792.5,997.3 792.6,1001.1 792.8,1004.7 792.9,1008.1 793.0,1011.2 793.1,1014.1 793.2,1016.7 793.3,1018.9 793.4,1020.9 793.5,1022.4 793.6,1023.7 793.7,1024.5 793.9,1025.0 794.0,1025.1 794.1,1024.8 794.2,1024.1 794.3,1023.0 794.4,1021.4 794.5,1019.5 794.6,1017.3 794.7,1014.6 794.9,1011.6 795.0,1008.2 795.1,1004.5 795.2,1000.5 795.3,996.2 795.4,991.6 795.5,986.8 795.6,981.9 795.7,976.7 795.8,971.4 796.0,966.0 796.1,960.6 796.2,955.1 796.3,949.6 796.4,944.2 796.5,938.9 796.6,933.8 796.7,928.8 796.8,924.0 796.9,919.5 797.1,915.3 797.2,911.5 797.3,908.0 797.4,904.9 797.5,902.2 797.6,900.0 797.7,898.3 797.8,897.0 797.9,896.3 798.1,896.1 798.2,896.4 798.3,897.3 798.4,898.7 798.5,900.7 798.6,903.1 798.7,906.1 798.8,909.5 798.9,913.4 799.0,917.8 799.2,922.5 799.3,927.6 799.4,933.0 799.5,938.6 799.6,944.5 799.7,950.6 799.8,956.8 799.9,963.0 800.0,969.2 800.1,975.4 800.3,981.5 800.4,987.3 800.5,993.0 800.6,998.3 800.7,1003.3 800.8,1007.9 800.9,1012.0 801.0,1015.6 801.1,1018.7 801.3,1021.3 801.4,1023.2 801.5,1024.4 801.6,1025.0 801.7,1025.0 801.8,1024.3 801.9,1022.9 802.0,1020.8 802.1,1018.1 802.2,1014.7 802.4,1010.8 802.5,1006.3 802.6,1001.3 802.7,995.8 802.8,989.9 802.9,983.6 803.0,977.1 803.1,970.4 803.2,963.5 803.3,956.6 803.5,949.7 803.6,942.9 803.7,936.3 803.8,930.0 803.9,924.0 804.0,918.4 804.1,913.3 804.2,908.8 804.3,904.9 804.4,901.6 804.6,899.1 804.7,897.3 804.8,896.3 804.9,896.1 805.0,896.7 805.1,898.2 805.2,900.4 805.3,903.4 805.4,907.2 805.6,911.6 805.7,916.8 805.8,922.5 805.9,928.7 806.0,935.4 806.1,942.4 806.2,949.7 806.3,957.2 806.4,964.7 806.5,972.2 806.7,979.6 806.8,986.7 806.9,993.5 807.0,999.8 807.1,1005.6 807.2,1010.8 807.3,1015.3 807.4,1019.0 807.5,1021.8 807.6,1023.8 807.8,1024.9 807.9,1025.0 808.0,1024.2 808.1,1022.5 808.2,1019.8 808.3,1016.2 808.4,1011.7 808.5,1006.5 808.6,1000.5 808.8,994.0 808.9,986.9 809.0,979.3 809.1,971.5 809.2,963.4 809.3,955.3 809.4,947.3 809.5,939.4 809.6,931.9 809.7,924.8 809.9,918.3 810.0,912.4 810.1,907.3 810.2,903.1 810.3,899.8 810.4,897.5 810.5,896.3 810.6,896.2 810.7,897.1 810.8,899.1 811.0,902.2 811.1,906.3 811.2,911.4 811.3,917.3 811.4,924.0 811.5,931.3 811.6,939.2 811.7,947.5 811.8,956.0 812.0,964.7 812.1,973.3 812.2,981.6 812.3,989.7 812.4,997.2 812.5,1004.0 812.6,1010.1 812.7,1015.3 812.8,1019.4 812.9,1022.5 813.1,1024.4 813.2,1025.1 813.3,1024.6 813.4,1022.8 813.5,1019.9 813.6,1015.8 813.7,1010.6 813.8,1004.4 813.9,997.4 814.0,989.6 814.2,981.2 814.3,972.4 814.4,963.3 814.5,954.2 814.6,945.1 814.7,936.4 814.8,928.1 814.9,920.5 815.0,913.7 815.2,907.8 815.3,903.0 815.4,899.4 815.5,897.1 815.6,896.1 815.7,896.5 815.8,898.3 815.9,901.3 816.0,905.7 816.1,911.2 816.3,917.9 816.4,925.5 816.5,933.8 816.6,942.8 816.7,952.2 816.8,961.8 816.9,971.4 817.0,980.8 817.1,989.7 817.2,998.0 817.4,1005.5 817.5,1011.9 817.6,1017.3 817.7,1021.3 817.8,1023.9 817.9,1025.0 818.0,1024.7 818.1,1022.9 818.2,1019.5 818.4,1014.8 818.5,1008.8 818.6,1001.6 818.7,993.5 818.8,984.5 818.9,974.9 819.0,965.0 819.1,954.9 819.2,944.9 819.3,935.3 819.5,926.3 819.6,918.2 819.7,911.1 819.8,905.2 819.9,900.6 820.0,897.6 820.1,896.2 820.2,896.4 820.3,898.3 820.4,901.7 820.6,906.7 820.7,913.1 820.8,920.8 820.9,929.5 821.0,939.0 821.1,949.1 821.2,959.5 821.3,970.0 821.4,980.3 821.6,990.1 821.7,999.1 821.8,1007.0 821.9,1013.7 822.0,1019.0 822.1,1022.7 822.2,1024.7 822.3,1025.0 822.4,1023.4 822.5,1020.1 822.7,1015.2 822.8,1008.7 822.9,1000.8 823.0,991.8 823.1,981.9 823.2,971.3 823.3,960.4 823.4,949.5 823.5,938.9 823.6,929.0 823.8,919.9 823.9,911.9 824.0,905.4 824.1,900.5 824.2,897.4 824.3,896.1 824.4,896.8 824.5,899.3 824.6,903.7 824.8,909.9 824.9,917.5 825.0,926.5 825.1,936.6 825.2,947.4 825.3,958.6 825.4,969.9 825.5,981.0 825.6,991.4 825.7,1000.9 825.9,1009.2 826.0,1015.9 826.1,1020.9 826.2,1024.0 826.3,1025.1 826.4,1024.1 826.5,1021.1 826.6,1016.2 826.7,1009.4 826.8,1001.0 827.0,991.4 827.1,980.6 827.2,969.3 827.3,957.6 827.4,945.9 827.5,934.8 827.6,924.5 827.7,915.3 827.8,907.7 828.0,901.9 828.1,898.0 828.2,896.2 828.3,896.6 828.4,899.2 828.5,904.0 828.6,910.6 828.7,919.1 828.8,928.9 828.9,939.9 829.1,951.7 829.2,963.7 829.3,975.7 829.4,987.2 829.5,997.7 829.6,1007.0 829.7,1014.6 829.8,1020.3 829.9,1023.8 830.0,1025.1 830.2,1024.0 830.3,1020.7 830.4,1015.1 830.5,1007.5 830.6,998.2 830.7,987.5 830.8,975.8 830.9,963.5 831.0,951.0 831.1,938.9 831.3,927.6 831.4,917.5 831.5,909.0 831.6,902.5 831.7,898.2 831.8,896.2 831.9,896.7 832.0,899.7 832.1,905.0 832.3,912.5 832.4,921.9 832.5,932.8 832.6,944.8 832.7,957.4 832.8,970.2 832.9,982.6 833.0,994.2 833.1,1004.5 833.2,1013.0 833.4,1019.5 833.5,1023.5 833.6,1025.1 833.7,1024.0 833.8,1020.4 833.9,1014.3 834.0,1006.0 834.1,995.8 834.2,984.2 834.3,971.6 834.5,958.5 834.6,945.4 834.7,933.0 834.8,921.7 834.9,912.0 835.0,904.4 835.1,899.1 835.2,896.4 835.3,896.5 835.5,899.3 835.6,904.7 835.7,912.5 835.8,922.5 835.9,934.1 836.0,946.8 836.1,960.2 836.2,973.7 836.3,986.5 836.4,998.3 836.6,1008.4 836.7,1016.4 836.8,1022.0 836.9,1024.8 837.0,1024.7 837.1,1021.8 837.2,1016.1 837.3,1007.9 837.4,997.5 837.5,985.5 837.7,972.3 837.8,958.5 837.9,944.8 838.0,931.8 838.1,920.1 838.2,910.3 838.3,902.8 838.4,898.0 838.5,896.1 838.7,897.3 838.8,901.4 838.9,908.3 839.0,917.7 839.1,929.2 839.2,942.1 839.3,956.0 839.4,970.1 839.5,983.8 839.6,996.4 839.8,1007.3 839.9,1015.9 840.0,1021.8 840.1,1024.8 840.2,1024.6 840.3,1021.3 840.4,1014.9 840.5,1005.9 840.6,994.6 840.7,981.6 840.9,967.5 841.0,953.1 841.1,939.0 841.2,926.0 841.3,914.7 841.4,905.7 841.5,899.5 841.6,896.4 841.7,896.6 841.9,900.1 842.0,906.7 842.1,916.0 842.2,927.7 842.3,941.2 842.4,955.6 842.5,970.4 842.6,984.6 842.7,997.6 842.8,1008.7 843.0,1017.2 843.1,1022.8 843.2,1025.1 843.3,1023.9 843.4,1019.3 843.5,1011.6 843.6,1001.1 843.7,988.4 843.8,974.2 843.9,959.3 844.1,944.4 844.2,930.3 844.3,917.9 844.4,907.8 844.5,900.6 844.6,896.7 844.7,896.4 844.8,899.6 844.9,906.2 845.1,915.9 845.2,928.1 845.3,942.1 845.4,957.2 845.5,972.5 845.6,987.2 845.7,1000.3 845.8,1011.3 845.9,1019.3 846.0,1024.0 846.2,1025.0 846.3,1022.3 846.4,1016.1 846.5,1006.6 846.6,994.5 846.7,980.3 846.8,965.0 846.9,949.4 847.0,934.4 847.1,921.0 847.3,909.8 847.4,901.7 847.5,897.1 847.6,896.3 847.7,899.3 847.8,905.9 847.9,915.9 848.0,928.6 848.1,943.3 848.3,959.0 848.4,974.8 848.5,989.8 848.6,1003.0 848.7,1013.7 848.8,1021.1 848.9,1024.7 849.0,1024.4 849.1,1020.2 849.2,1012.2 849.4,1001.0 849.5,987.3 849.6,971.9 849.7,955.7 849.8,939.8 849.9,925.3 850.0,912.9 850.1,903.6 850.2,897.8 850.3,896.1 850.5,898.5 850.6,904.9 850.7,914.9 850.8,927.9 850.9,943.0 851.0,959.2 851.1,975.6 851.2,991.0 851.3,1004.5 851.5,1015.0 851.6,1022.0 851.7,1025.0 851.8,1023.7 851.9,1018.2 852.0,1008.9 852.1,996.4 852.2,981.4 852.3,965.0 852.4,948.3 852.6,932.5 852.7,918.4 852.8,907.3 852.9,899.7 853.0,896.3 853.1,897.2 853.2,902.5 853.3,911.8 853.4,924.5 853.5,939.6 853.7,956.3 853.8,973.2 853.9,989.3 854.0,1003.4 854.1,1014.6 854.2,1022.0 854.3,1025.0 854.4,1023.6 854.5,1017.7 854.6,1007.7 854.8,994.4 854.9,978.7 855.0,961.6 855.1,944.5 855.2,928.5 855.3,914.8" fill="none" stroke="#99ca53" stroke-width="2" stroke-linejoin="round"/>
<polygon points="847.1,896.6 849.4,896.0 851.6,895.8 853.8,895.9 856.0,896.8 858.2,896.5 860.4,896.5 862.6,896.4 864.8,896.9 867.0,896.5 869.2,896.7 871.4,896.7 873.6,896.2 875.8,896.2 878.0,896.3 880.2,896.6 882.5,896.0 884.7,896.6 886.9,896.7 889.1,896.6 891.3,897.0 893.5,897.2 895.7,896.9 897.9,897.4 900.1,897.3 902.3,896.9 904.5,897.4 906.7,896.6 908.9,897.1 911.1,897.3 913.3,897.3 915.6,897.1 917.8,897.0 920.0,897.1 922.2,897.4 924.4,897.6 926.6,897.5 928.8,897.4 931.0,897.6 933.2,897.5 935.4,897.7 937.6,897.3 939.8,897.7 942.0,897.4 944.2,897.4 946.4,897.8 948.7,897.2 950.9,898.0 953.1,898.0 955.3,898.0 957.5,898.0 959.7,897.4 961.9,897.4 964.1,897.5 966.3,897.5 968.5,897.3 970.7,897.8 972.9,898.1 975.1,898.2 977.3,897.7 979.5,897.9 981.8,898.3 984.0,898.0 986.2,898.0 988.4,898.0 990.6,897.9 992.8,898.4 995.0,898.4 997.2,898.4 999.4,898.2 1001.6,898.2 1003.8,897.9 1006.0,898.2 1008.2,898.5 1010.4,898.5 1012.6,898.5 1014.8,898.3 1017.1,897.9 1019.3,898.5 1021.5,898.5 1023.7,898.6 1025.9,898.3 1028.1,898.0 1030.3,898.3 1032.5,898.4 1034.7,898.7 1036.9,898.4 1039.1,898.3 1041.3,898.6 1043.5,898.7 1045.7,898.0 1047.9,898.4 1050.2,898.7 1052.4,898.5 1054.6,898.5 1056.8,898.8 1059.0,898.2 1061.2,899.0 1063.4,898.9 1065.6,898.5 1067.8,898.1 1070.0,898.9 1072.2,899.1 1074.4,898.4 1076.6,898.6 1078.8,897.6 1081.0,898.5 1083.3,899.1 1085.5,898.8 1087.7,898.3 1089.9,899.1 1092.1,898.9 1094.3,898.9 1096.5,899.4 1098.7,899.3 1100.9,899.4 1103.1,898.7 1105.3,898.9 1107.5,898.9 1109.7,899.4 1111.9,899.5 1114.1,899.1 1116.4,899.1 1118.6,899.4 1120.8,898.8 1123.0,899.2 1125.2,899.2 1127.4,898.9 1129.6,898.4 1131.8,898.7 1134.0,899.1 1136.2,898.8 1138.4,898.9 1140.6,899.3 1142.8,898.7 1145.0,899.1 1147.2,898.2 1149.5,898.7 1151.7,898.5 1153.9,898.9 1156.1,899.0 1158.3,898.8 1160.5,898.9 1162.7,898.8 1164.9,899.0 1167.1,898.6 1169.3,898.6 1171.5,898.0 1173.7,898.2 1175.9,898.4 1178.1,898.3 1180.3,898.4 1182.6,898.2 1184.8,898.3 1187.0,897.7 1189.2,897.9 1191.4,897.3 1193.6,897.4 1195.8,897.6 1198.0,897.4 1200.2,897.5 1202.4,897.2 1204.6,897.6 1206.8,897.2 1209.0,897.0 1211.2,897.1 1213.4,896.9 1215.6,897.0 1217.9,897.0 1220.1,897.0 1222.3,897.0 1224.5,896.6 1226.7,896.6 1228.9,896.5 1231.1,896.4 1233.3,896.0 1235.5,896.4 1237.7,895.6 1239.9,896.1 1242.1,896.2 1244.3,896.2 1246.5,895.8 1248.7,895.6 1251.0,895.9 1253.2,895.8 1255.4,895.3 1257.6,895.2 1259.8,895.5 1262.0,895.0 1264.2,894.9 1266.4,895.2 1268.6,894.5 1270.8,894.8 1273.0,894.2 1275.2,895.0 1277.4,894.9 1279.6,894.6 1281.8,894.7 1284.1,894.4 1286.3,894.5 1288.5,894.3 1290.7,893.3 1292.9,894.1 1295.1,894.0 1297.3,893.8 1299.5,893.6 1301.7,893.5 1303.9,893.9 1306.1,893.9 1308.3,893.1 1310.5,892.7 1312.7,893.7 1313.3,893.6 1313.8,893.4 1314.4,892.2 1314.9,893.6 1315.5,893.3 1316.1,893.1 1316.6,893.4 1317.2,895.1 1317.7,899.8 1318.3,904.4 1318.8,908.5 1319.4,912.9 1319.9,913.0 1320.5,912.0 1321.0,912.7 1321.6,912.4 1322.1,911.6 1322.7,912.0 1323.2,912.1 1323.8,911.8 1324.3,911.3 1324.9,911.0 1325.4,911.7 1326.0,911.4 1326.5,910.5 1327.1,911.3 1327.6,910.9 1328.2,911.0 1328.7,910.4 1329.3,910.3 1329.8,910.8 1330.4,910.6 1330.9,910.5 1331.5,910.3 1332.0,910.0 1332.6,910.2 1333.2,910.1 1333.7,909.7 1334.3,909.5 1334.8,909.7 1335.4,909.7 1335.9,909.4 1336.5,909.0 1337.0,908.8 1337.6,908.7 1338.1,908.7 1338.7,908.9 1339.2,908.9 1339.8,908.3 1340.3,908.2 1340.9,908.3 1341.4,908.3 1342.0,907.7 1342.5,907.5 1343.1,907.6 1343.6,907.9 1344.2,907.6 1344.7,907.6 1345.3,907.9 1345.8,908.0 1346.4,907.9 1346.9,908.1 1347.5,907.8 1348.0,908.0 1348.6,908.3 1349.1,908.5 1349.7,908.6 1350.3,908.4 1350.8,908.1 1351.4,908.4 1351.9,907.6 1352.5,908.8 1353.0,908.3 1353.6,907.8 1354.1,908.6 1354.7,908.5 1355.2,909.0 1355.8,908.1 1356.3,908.6 1356.9,908.5 1357.4,908.5 1358.0,909.0 1358.5,909.0 1359.1,909.4 1359.6,909.5 1360.2,909.2 1360.7,909.3 1361.3,909.6 1361.8,909.0 1362.4,909.4 1362.9,909.7 1363.5,909.8 1364.0,909.9 1364.6,909.9 1365.1,909.7 1365.7,909.8 1366.3,910.1 1366.8,909.6 1367.4,910.1 1367.9,910.0 1368.5,909.9 1369.0,909.8 1369.6,910.3 1370.1,909.6 1370.7,910.0 1371.2,910.0 1371.8,910.0 1372.3,910.4 1372.9,910.0 1373.4,910.3 1374.0,910.4 1374.5,910.3 1375.1,910.1 1375.6,910.2 1376.2,910.1 1376.7,910.5 1377.3,909.7 1377.8,910.1 1378.4,910.4 1378.9,910.0 1379.5,910.3 1380.0,910.3 1380.6,910.6 1381.1,910.2 1381.7,910.2 1382.2,910.5 1382.8,910.3 1383.4,910.5 1383.9,910.5 1384.5,910.5 1385.0,910.4 1387.2,910.6 1389.4,909.9 1391.6,909.4 1393.8,910.5 1396.0,910.1 1398.2,910.5 1400.5,910.2 1402.7,910.5 1404.9,910.5 1407.1,910.2 1409.3,910.4 1411.5,910.3 1413.7,909.9 1415.9,909.8 1418.1,910.2 1420.3,909.5 1422.5,910.5 1424.7,910.6 1426.9,910.7 1429.1,910.6 1431.3,910.2 1433.6,910.6 1435.8,909.9 1438.0,910.1 1440.2,910.6 1442.4,910.6 1444.6,910.3 1446.8,909.5 1449.0,910.8 1451.2,910.7 1453.4,910.8 1455.6,910.3 1457.8,910.7 1460.0,909.9 1462.2,910.5 1464.4,910.6 1466.7,910.8 1468.9,910.5 1471.1,910.2 1473.3,910.5 1475.5,910.7 1477.7,910.8 1479.9,910.5 1482.1,910.8 1484.3,910.7 1486.5,910.7 1488.7,910.9 1490.9,910.2 1493.1,910.9 1495.3,910.6 1497.5,910.9 1499.7,910.4 1502.0,911.0 1504.2,910.9 1506.4,910.0 1508.6,910.4 1510.8,910.9 1513.0,910.3 1515.2,910.8 1517.4,911.1 1519.6,910.8 1521.8,910.9 1524.0,910.9 1526.2,910.2 1528.4,910.4 1530.6,909.8 1532.8,910.6 1535.1,910.9 1537.3,910.6 1539.5,911.1 1541.7,910.7 1543.9,910.1 1546.1,910.3 1548.3,910.2 1550.5,910.6 1552.7,910.7 1554.9,910.7 1557.1,910.6 1559.3,910.0 1561.5,911.1 1563.7,911.1 1565.9,911.2 1568.2,911.0 1570.4,910.1 1572.6,911.2 1574.8,910.6 1577.0,910.8 1579.2,910.3 1581.4,910.4 1583.6,911.0 1585.8,911.1 1588.0,911.3 1590.2,911.3 1592.4,910.7 1594.6,911.0 1596.8,910.7 1599.0,911.2 1601.3,910.2 1603.5,911.2 1605.7,910.9 1607.9,910.7 1610.1,910.8 1612.3,911.2 1614.5,910.9 1616.7,910.9 1618.9,911.2 1621.1,911.3 1623.3,910.8 1625.5,911.3 1627.7,910.7 1629.9,911.1 1632.1,911.4 1634.4,911.2 1636.6,911.5 1638.8,911.4 1641.0,911.1 1643.2,911.3 1645.4,911.5 1647.6,911.3 1649.8,911.1 1652.0,911.0 1654.2,911.3 1656.4,911.3 1658.6,911.3 1660.8,910.6 1663.0,910.9 1665.2,911.6 1667.5,910.7 1669.7,910.3 1671.9,910.7 1674.1,910.9 1676.3,911.6 1678.5,911.5 1680.7,911.6 1682.9,911.6 1685.1,911.4 1687.3,911.1 1689.5,911.6 1691.7,911.0 1693.9,911.6 1696.1,911.4 1698.3,911.7 1700.6,911.2 1702.8,911.6 1705.0,911.6 1707.2,911.5 1709.4,911.3 1711.6,911.0 1713.8,911.7 1716.0,911.6 1718.2,911.2 1720.4,910.8 1722.6,911.7 1724.8,911.6 1727.0,911.8 1729.2,911.4 1731.4,911.5 1733.6,911.2 1735.9,911.8 1738.1,911.6 1740.3,911.8 1742.5,911.0 1744.7,911.2 1746.9,911.9 1749.1,911.3 1751.3,911.2 1753.5,911.7 1755.7,911.8 1757.9,911.8 1760.1,911.3 1762.3,911.9 1764.5,911.6 1766.7,911.0 1769.0,910.7 1771.2,911.6 1773.4,911.7 1775.6,911.3 1777.8,911.4 1780.0,911.4 1782.2,911.5 1784.4,910.7 1786.6,911.4 1788.8,911.6 1791.0,911.7 1793.2,911.5 1795.4,911.9 1797.6,911.7 1799.8,911.7 1802.1,911.0 1804.3,911.7 1806.5,911.5 1808.7,911.9 1810.9,911.6 1813.1,912.1 1815.3,911.5 1817.5,911.3 1819.7,912.1 1821.9,912.0 1824.1,912.0 1826.3,911.2 1828.5,912.1 1830.7,912.0 1832.9,912.0 1835.2,912.1 1837.4,911.2 1839.6,912.1 1841.8,911.4 1844.0,912.2 1846.2,911.9 1848.4,912.0 1850.6,911.9 1852.8,912.1 1855.0,911.8 1857.2,910.6 1859.4,912.1 1861.6,911.7 1863.8,911.5 1866.0,911.4 1867.7,911.9 1867.7,1009.3 1866.0,1009.8 1863.8,1009.7 1861.6,1009.5 1859.4,1009.1 1857.2,1010.6 1855.0,1009.4 1852.8,1009.1 1850.6,1009.3 1848.4,1009.2 1846.2,1009.3 1844.0,1009.0 1841.8,1009.8 1839.6,1009.1 1837.4,1010.0 1835.2,1009.1 1832.9,1009.2 1830.7,1009.2 1828.5,1009.1 1826.3,1010.0 1824.1,1009.2 1821.9,1009.2 1819.7,1009.1 1817.5,1009.9 1815.3,1009.7 1813.1,1009.1 1810.9,1009.6 1808.7,1009.3 1806.5,1009.7 1804.3,1009.5 1802.1,1010.2 1799.8,1009.5 1797.6,1009.5 1795.4,1009.3 1793.2,1009.7 1791.0,1009.5 1788.8,1009.6 1786.6,1009.8 1784.4,1010.5 1782.2,1009.7 1780.0,1009.8 1777.8,1009.8 1775.6,1009.9 1773.4,1009.5 1771.2,1009.6 1769.0,1010.5 1766.7,1010.2 1764.5,1009.6 1762.3,1009.3 1760.1,1009.9 1757.9,1009.4 1755.7,1009.4 1753.5,1009.5 1751.3,1010.0 1749.1,1009.9 1746.9,1009.3 1744.7,1010.0 1742.5,1010.2 1740.3,1009.4 1738.1,1009.6 1735.9,1009.4 1733.6,1010.0 1731.4,1009.7 1729.2,1009.8 1727.0,1009.4 1724.8,1009.6 1722.6,1009.5 1720.4,1010.4 1718.2,1010.0 1716.0,1009.6 1713.8,1009.5 1711.6,1010.2 1709.4,1009.9 1707.2,1009.7 1705.0,1009.6 1702.8,1009.6 1700.6,1010.0 1698.3,1009.5 1696.1,1009.8 1693.9,1009.6 1691.7,1010.2 1689.5,1009.6 1687.3,1010.1 1685.1,1009.8 1682.9,1009.6 1680.7,1009.6 1678.5,1009.7 1676.3,1009.6 1674.1,1010.3 1671.9,1010.5 1669.7,1010.9 1667.5,1010.5 1665.2,1009.6 1663.0,1010.3 1660.8,1010.6 1658.6,1009.9 1656.4,1009.9 1654.2,1009.9 1652.0,1010.2 1649.8,1010.1 1647.6,1009.9 1645.4,1009.7 1643.2,1009.9 1641.0,1010.1 1638.8,1009.8 1636.6,1009.7 1634.4,1010.0 1632.1,1009.8 1629.9,1010.1 1627.7,1010.5 1625.5,1009.9 1623.3,1010.4 1621.1,1009.9 1618.9,1010.0 1616.7,1010.3 1614.5,1010.3 1612.3,1010.0 1610.1,1010.4 1607.9,1010.5 1605.7,1010.3 1603.5,1010.0 1601.3,1011.0 1599.0,1010.0 1596.8,1010.5 1594.6,1010.2 1592.4,1010.5 1590.2,1009.9 1588.0,1009.9 1585.8,1010.1 1583.6,1010.2 1581.4,1010.8 1579.2,1010.9 1577.0,1010.4 1574.8,1010.6 1572.6,1010.0 1570.4,1011.1 1568.2,1010.2 1565.9,1010.0 1563.7,1010.1 1561.5,1010.1 1559.3,1011.2 1557.1,1010.6 1554.9,1010.5 1552.7,1010.5 1550.5,1010.6 1548.3,1011.0 1546.1,1010.9 1543.9,1011.1 1541.7,1010.5 1539.5,1010.1 1537.3,1010.6 1535.1,1010.3 1532.8,1010.6 1530.6,1011.4 1528.4,1010.8 1526.2,1011.0 1524.0,1010.3 1521.8,1010.3 1519.6,1010.4 1517.4,1010.1 1515.2,1010.4 1513.0,1010.9 1510.8,1010.3 1508.6,1010.8 1506.4,1011.2 1504.2,1010.3 1502.0,1010.2 1499.7,1010.8 1497.5,1010.3 1495.3,1010.6 1493.1,1010.3 1490.9,1011.0 1488.7,1010.3 1486.5,1010.5 1484.3,1010.5 1482.1,1010.4 1479.9,1010.7 1477.7,1010.4 1475.5,1010.5 1473.3,1010.7 1471.1,1011.0 1468.9,1010.7 1466.7,1010.4 1464.4,1010.6 1462.2,1010.7 1460.0,1011.3 1457.8,1010.5 1455.6,1010.9 1453.4,1010.4 1451.2,1010.5 1449.0,1010.4 1446.8,1011.7 1444.6,1010.9 1442.4,1010.6 1440.2,1010.6 1438.0,1011.1 1435.8,1011.3 1433.6,1010.6 1431.3,1011.0 1429.1,1010.6 1426.9,1010.5 1424.7,1010.6 1422.5,1010.7 1420.3,1011.7 1418.1,1011.0 1415.9,1011.4 1413.7,1011.3 1411.5,1010.9 1409.3,1010.8 1407.1,1011.0 1404.9,1010.7 1402.7,1010.7 1400.5,1011.0 1398.2,1010.7 1396.0,1011.1 1393.8,1010.7 1391.6,1011.8 1389.4,1011.3 1387.2,1010.6 1385.0,1010.8 1384.5,1010.7 1383.9,1010.7 1383.4,1010.7 1382.8,1010.9 1382.2,1010.7 1381.7,1011.0 1381.1,1011.0 1380.6,1010.6 1380.0,1010.9 1379.5,1010.9 1378.9,1011.2 1378.4,1010.8 1377.8,1011.1 1377.3,1011.5 1376.7,1010.7 1376.2,1011.1 1375.6,1011.0 1375.1,1011.1 1374.5,1010.9 1374.0,1010.8 1373.4,1010.9 1372.9,1011.2 1372.3,1010.8 1371.8,1011.2 1371.2,1011.2 1370.7,1011.2 1370.1,1011.6 1369.6,1010.9 1369.0,1011.4 1368.5,1011.3 1367.9,1011.2 1367.4,1011.1 1366.8,1011.6 1366.3,1011.1 1365.7,1011.4 1365.1,1011.5 1364.6,1011.3 1364.0,1011.3 1363.5,1011.4 1362.9,1011.5 1362.4,1011.8 1361.8,1012.2 1361.3,1011.6 1360.7,1011.9 1360.2,1012.0 1359.6,1011.7 1359.1,1011.8 1358.5,1012.2 1358.0,1012.2 1357.4,1012.7 1356.9,1012.7 1356.3,1012.6 1355.8,1013.1 1355.2,1012.2 1354.7,1012.7 1354.1,1012.6 1353.6,1013.4 1353.0,1012.9 1352.5,1012.4 1351.9,1013.6 1351.4,1012.8 1350.8,1013.1 1350.3,1012.8 1349.7,1012.6 1349.1,1012.7 1348.6,1012.9 1348.0,1013.2 1347.5,1013.4 1346.9,1013.1 1346.4,1013.3 1345.8,1013.2 1345.3,1013.3 1344.7,1013.6 1344.2,1013.6 1343.6,1013.3 1343.1,1013.6 1342.5,1013.7 1342.0,1013.5 1341.4,1012.9 1340.9,1012.9 1340.3,1013.0 1339.8,1012.9 1339.2,1012.3 1338.7,1012.3 1338.1,1012.5 1337.6,1012.5 1337.0,1012.4 1336.5,1012.2 1335.9,1011.8 1335.4,1011.5 1334.8,1011.5 1334.3,1011.7 1333.7,1011.5 1333.2,1011.1 1332.6,1011.0 1332.0,1011.2 1331.5,1010.9 1330.9,1010.7 1330.4,1010.6 1329.8,1010.4 1329.3,1010.9 1328.7,1010.8 1328.2,1010.2 1327.6,1010.3 1327.1,1009.9 1326.5,1010.7 1326.0,1009.8 1325.4,1009.5 1324.9,1010.2 1324.3,1009.9 1323.8,1009.4 1323.2,1009.1 1322.7,1009.2 1322.1,1009.6 1321.6,1008.8 1321.0,1008.5 1320.5,1009.2 1319.9,1008.2 1319.4,1008.3 1318.8,1012.7 1318.3,1016.8 1317.7,1021.4 1317.2,1026.1 1316.6,1027.8 1316.1,1028.1 1315.5,1027.9 1314.9,1027.6 1314.4,1029.0 1313.8,1027.8 1313.3,1027.6 1312.7,1027.5 1310.5,1028.5 1308.3,1028.1 1306.1,1027.3 1303.9,1027.3 1301.7,1027.7 1299.5,1027.6 1297.3,1027.4 1295.1,1027.2 1292.9,1027.1 1290.7,1027.9 1288.5,1026.9 1286.3,1026.7 1284.1,1026.8 1281.8,1026.5 1279.6,1026.6 1277.4,1026.3 1275.2,1026.2 1273.0,1027.0 1270.8,1026.4 1268.6,1026.7 1266.4,1026.0 1264.2,1026.3 1262.0,1026.2 1259.8,1025.7 1257.6,1026.0 1255.4,1025.9 1253.2,1025.4 1251.0,1025.3 1248.7,1025.6 1246.5,1025.4 1244.3,1025.0 1242.1,1025.0 1239.9,1025.1 1237.7,1025.6 1235.5,1024.8 1233.3,1025.2 1231.1,1024.8 1228.9,1024.7 1226.7,1024.6 1224.5,1024.6 1222.3,1024.2 1220.1,1024.2 1217.9,1024.2 1215.6,1024.2 1213.4,1024.3 1211.2,1024.1 1209.0,1024.2 1206.8,1024.0 1204.6,1023.6 1202.4,1024.0 1200.2,1023.7 1198.0,1023.8 1195.8,1023.6 1193.6,1023.8 1191.4,1023.9 1189.2,1023.3 1187.0,1023.5 1184.8,1022.9 1182.6,1023.0 1180.3,1022.8 1178.1,1022.9 1175.9,1022.8 1173.7,1023.0 1171.5,1023.2 1169.3,1022.6 1167.1,1022.6 1164.9,1022.2 1162.7,1022.4 1160.5,1022.3 1158.3,1022.4 1156.1,1022.2 1153.9,1022.3 1151.7,1022.7 1149.5,1022.5 1147.2,1023.0 1145.0,1022.1 1142.8,1022.5 1140.6,1021.9 1138.4,1022.3 1136.2,1022.4 1134.0,1022.1 1131.8,1022.5 1129.6,1022.8 1127.4,1022.3 1125.2,1022.0 1123.0,1022.0 1120.8,1022.4 1118.6,1021.8 1116.4,1022.1 1114.1,1022.1 1111.9,1021.7 1109.7,1021.8 1107.5,1022.3 1105.3,1022.3 1103.1,1022.5 1100.9,1021.8 1098.7,1021.9 1096.5,1021.8 1094.3,1022.3 1092.1,1022.3 1089.9,1022.1 1087.7,1022.9 1085.5,1022.4 1083.3,1022.1 1081.0,1022.7 1078.8,1023.6 1076.6,1022.6 1074.4,1022.8 1072.2,1022.1 1070.0,1022.3 1067.8,1023.1 1065.6,1022.7 1063.4,1022.3 1061.2,1022.2 1059.0,1023.0 1056.8,1022.4 1054.6,1022.7 1052.4,1022.7 1050.2,1022.5 1047.9,1022.8 1045.7,1023.2 1043.5,1022.5 1041.3,1022.6 1039.1,1022.9 1036.9,1022.8 1034.7,1022.5 1032.5,1022.8 1030.3,1022.9 1028.1,1023.2 1025.9,1022.9 1023.7,1022.6 1021.5,1022.7 1019.3,1022.7 1017.1,1023.3 1014.8,1022.9 1012.6,1022.7 1010.4,1022.7 1008.2,1022.7 1006.0,1023.0 1003.8,1023.3 1001.6,1023.0 999.4,1023.0 997.2,1022.8 995.0,1022.8 992.8,1022.8 990.6,1023.3 988.4,1023.2 986.2,1023.2 984.0,1023.2 981.8,1022.9 979.5,1023.3 977.3,1023.5 975.1,1023.0 972.9,1023.1 970.7,1023.4 968.5,1023.9 966.3,1023.7 964.1,1023.7 961.9,1023.8 959.7,1023.8 957.5,1023.2 955.3,1023.2 953.1,1023.2 950.9,1023.2 948.7,1024.0 946.4,1023.4 944.2,1023.8 942.0,1023.8 939.8,1023.5 937.6,1023.9 935.4,1023.5 933.2,1023.7 931.0,1023.6 928.8,1023.8 926.6,1023.7 924.4,1023.6 922.2,1023.8 920.0,1024.1 917.8,1024.2 915.6,1024.1 913.3,1023.9 911.1,1023.9 908.9,1024.1 906.7,1024.6 904.5,1023.8 902.3,1024.3 900.1,1023.9 897.9,1023.8 895.7,1024.3 893.5,1024.0 891.3,1024.2 889.1,1024.6 886.9,1024.5 884.7,1024.6 882.5,1025.2 880.2,1024.6 878.0,1024.9 875.8,1025.0 873.6,1025.0 871.4,1024.5 869.2,1024.5 867.0,1024.7 864.8,1024.3 862.6,1024.8 860.4,1024.7 858.2,1024.7 856.0,1024.4 853.8,1025.3 851.6,1025.4 849.4,1025.2 847.1,1024.6" fill="#209fdf"/>
<polygon points="847.1,896.3 849.4,896.4 851.6,896.4 853.8,896.6 856.0,896.4 858.2,896.3 860.4,896.6 862.6,896.5 864.8,896.9 867.0,896.8 869.2,896.9 871.4,896.6 873.6,896.3 875.8,896.8 878.0,896.6 880.2,897.0 882.5,896.9 884.7,896.6 886.9,896.8 889.1,897.1 891.3,897.2 893.5,896.9 895.7,897.1 897.9,897.3 900.1,897.2 902.3,897.2 904.5,896.8 906.7,897.4 908.9,897.2 911.1,897.2 913.3,896.9 915.6,897.4 917.8,897.2 920.0,897.1 922.2,896.9 924.4,897.2 926.6,897.7 928.8,897.4 931.0,897.6 933.2,897.6 935.4,897.7 937.6,897.7 939.8,897.6 942.0,897.5 944.2,897.4 946.4,897.3 948.7,897.6 950.9,897.4 953.1,897.3 955.3,897.8 957.5,897.8 959.7,897.9 961.9,897.9 964.1,897.9 966.3,897.6 968.5,898.1 970.7,898.0 972.9,897.5 975.1,897.8 977.3,897.7 979.5,897.9 981.8,898.2 984.0,898.2 986.2,898.2 988.4,898.1 990.6,898.2 992.8,898.3 995.0,898.2 997.2,898.4 999.4,897.9 1001.6,898.4 1003.8,898.0 1006.0,898.3 1008.2,898.3 1010.4,898.4 1012.6,898.5 1014.8,898.5 1017.1,898.5 1019.3,898.3 1021.5,898.4 1023.7,898.5 1025.9,898.6 1028.1,898.5 1030.3,897.8 1032.5,898.3 1034.7,898.8 1036.9,898.1 1039.1,898.6 1041.3,898.6 1043.5,898.6 1045.7,898.9 1047.9,898.5 1050.2,898.9 1052.4,898.9 1054.6,898.9 1056.8,898.6 1059.0,898.6 1061.2,898.6 1063.4,898.8 1065.6,898.9 1067.8,899.1 1070.0,899.0 1072.2,899.1 1074.4,898.8 1076.6,898.9 1078.8,898.9 1081.0,898.9 1083.3,899.0 1085.5,898.7 1087.7,899.3 1089.9,899.1 1092.1,898.5 1094.3,899.3 1096.5,899.3 1098.7,899.4 1100.9,899.2 1103.1,899.2 1105.3,899.4 1107.5,898.8 1109.7,899.1 1111.9,899.1 1114.1,899.1 1116.4,899.4 1118.6,899.3 1120.8,899.4 1123.0,899.1 1125.2,899.5 1127.4,899.5 1129.6,899.0 1131.8,899.4 1134.0,899.1 1136.2,899.2 1138.4,899.2 1140.6,899.1 1142.8,899.1 1145.0,899.2 1147.2,899.2 1149.5,898.9 1151.7,898.8 1153.9,898.9 1156.1,898.8 1158.3,899.1 1160.5,898.7 1162.7,898.8 1164.9,898.9 1167.1,899.0 1169.3,898.8 1171.5,898.7 1173.7,898.2 1175.9,898.7 1178.1,898.4 1180.3,897.6 1182.6,898.1 1184.8,898.4 1187.0,898.3 1189.2,897.8 1191.4,897.8 1193.6,897.7 1195.8,897.9 1198.0,897.9 1200.2,897.7 1202.4,897.1 1204.6,897.6 1206.8,897.1 1209.0,897.1 1211.2,897.3 1213.4,897.0 1215.6,896.9 1217.9,896.8 1220.1,896.5 1222.3,896.9 1224.5,896.9 1226.7,896.8 1228.9,896.6 1231.1,896.4 1233.3,896.4 1235.5,896.3 1237.7,896.3 1239.9,896.2 1242.1,896.1 1244.3,896.0 1246.5,895.8 1248.7,895.5 1251.0,895.6 1253.2,895.8 1255.4,895.8 1257.6,895.1 1259.8,895.5 1262.0,895.4 1264.2,895.0 1266.4,895.2 1268.6,895.1 1270.8,895.1 1273.0,894.7 1275.2,894.5 1277.4,894.9 1279.6,894.6 1281.8,894.6 1284.1,894.7 1286.3,894.6 1288.5,894.6 1290.7,894.3 1292.9,894.4 1295.1,894.0 1297.3,894.2 1299.5,894.1 1301.7,894.0 1303.9,893.8 1306.1,893.8 1308.3,893.5 1310.5,893.7 1312.7,893.6 1313.3,893.6 1313.8,893.6 1314.4,893.4 1314.9,893.5 1315.5,893.3 1316.1,893.3 1316.6,893.5 1317.2,894.9 1317.7,900.0 1318.3,904.3 1318.8,908.7 1319.4,913.0 1319.9,913.0 1320.5,912.2 1321.0,912.7 1321.6,912.1 1322.1,912.3 1322.7,912.1 1323.2,912.1 1323.8,912.0 1324.3,911.7 1324.9,911.5 1325.4,911.7 1326.0,911.5 1326.5,911.2 1327.1,911.3 1327.6,911.2 1328.2,910.4 1328.7,911.1 1329.3,910.9 1329.8,910.8 1330.4,910.6 1330.9,910.5 1331.5,910.4 1332.0,910.1 1332.6,910.1 1333.2,910.1 1333.7,910.0 1334.3,909.8 1334.8,909.4 1335.4,909.3 1335.9,909.5 1336.5,909.2 1337.0,909.1 1337.6,909.3 1338.1,909.1 1338.7,908.7 1339.2,908.8 1339.8,908.7 1340.3,908.4 1340.9,908.4 1341.4,907.7 1342.0,908.1 1342.5,907.9 1343.1,907.7 1343.6,907.8 1344.2,908.0 1344.7,907.6 1345.3,907.7 1345.8,908.0 1346.4,907.7 1346.9,907.9 1347.5,908.4 1348.0,907.5 1348.6,908.3 1349.1,908.4 1349.7,908.2 1350.3,908.2 1350.8,908.5 1351.4,908.4 1351.9,908.4 1352.5,908.0 1353.0,908.6 1353.6,908.6 1354.1,908.7 1354.7,908.9 1355.2,908.7 1355.8,908.8 1356.3,908.6 1356.9,909.2 1357.4,909.0 1358.0,909.1 1358.5,909.4 1359.1,909.0 1359.6,909.5 1360.2,909.4 1360.7,909.1 1361.3,909.2 1361.8,909.4 1362.4,909.6 1362.9,909.6 1363.5,909.2 1364.0,909.3 1364.6,909.9 1365.1,909.9 1365.7,909.7 1366.3,910.1 1366.8,909.6 1367.4,910.1 1367.9,910.1 1368.5,910.1 1369.0,910.3 1369.6,910.4 1370.1,910.4 1370.7,910.4 1371.2,910.5 1371.8,910.5 1372.3,910.5 1372.9,910.2 1373.4,910.1 1374.0,910.4 1374.5,910.5 1375.1,910.3 1375.6,910.0 1376.2,910.6 1376.7,910.5 1377.3,910.6 1377.8,910.2 1378.4,910.1 1378.9,910.6 1379.5,910.4 1380.0,910.0 1380.6,910.5 1381.1,910.1 1381.7,910.4 1382.2,910.5 1382.8,910.5 1383.4,910.4 1383.9,910.2 1384.5,910.5 1385.0,910.1 1387.2,910.4 1389.4,910.2 1391.6,910.6 1393.8,910.2 1396.0,910.0 1398.2,910.1 1400.5,910.3 1402.7,910.5 1404.9,910.4 1407.1,909.6 1409.3,910.2 1411.5,910.3 1413.7,910.4 1415.9,910.4 1418.1,909.8 1420.3,910.6 1422.5,910.5 1424.7,910.2 1426.9,910.6 1429.1,910.4 1431.3,910.4 1433.6,910.5 1435.8,910.8 1438.0,910.4 1440.2,910.2 1442.4,910.6 1444.6,910.3 1446.8,910.6 1449.0,910.8 1451.2,910.5 1453.4,910.7 1455.6,910.8 1457.8,910.8 1460.0,910.6 1462.2,910.8 1464.4,910.6 1466.7,910.7 1468.9,910.7 1471.1,910.8 1473.3,910.6 1475.5,910.7 1477.7,910.7 1479.9,910.6 1482.1,910.8 1484.3,910.5 1486.5,910.7 1488.7,910.6 1490.9,910.5 1493.1,910.5 1495.3,910.8 1497.5,910.8 1499.7,911.0 1502.0,910.6 1504.2,911.0 1506.4,911.0 1508.6,910.4 1510.8,910.6 1513.0,910.9 1515.2,910.7 1517.4,910.8 1519.6,911.1 1521.8,910.9 1524.0,910.4 1526.2,910.7 1528.4,911.1 1530.6,911.1 1532.8,911.0 1535.1,910.8 1537.3,911.1 1539.5,911.1 1541.7,911.1 1543.9,911.0 1546.1,911.1 1548.3,911.1 1550.5,910.5 1552.7,910.8 1554.9,911.0 1557.1,910.7 1559.3,910.8 1561.5,910.7 1563.7,910.8 1565.9,911.2 1568.2,910.9 1570.4,910.7 1572.6,911.3 1574.8,911.2 1577.0,911.0 1579.2,911.1 1581.4,911.3 1583.6,911.3 1585.8,910.7 1588.0,911.3 1590.2,911.0 1592.4,911.0 1594.6,911.0 1596.8,911.2 1599.0,911.4 1601.3,911.1 1603.5,911.2 1605.7,910.8 1607.9,911.1 1610.1,911.4 1612.3,911.2 1614.5,911.3 1616.7,911.2 1618.9,911.3 1621.1,911.4 1623.3,910.9 1625.5,911.0 1627.7,910.9 1629.9,911.4 1632.1,911.3 1634.4,911.1 1636.6,911.1 1638.8,911.0 1641.0,911.4 1643.2,911.1 1645.4,911.2 1647.6,911.2 1649.8,910.8 1652.0,911.5 1654.2,911.3 1656.4,911.4 1658.6,911.3 1660.8,911.3 1663.0,911.5 1665.2,910.9 1667.5,911.3 1669.7,911.2 1671.9,911.4 1674.1,911.5 1676.3,911.6 1678.5,911.2 1680.7,911.6 1682.9,911.3 1685.1,911.5 1687.3,911.6 1689.5,911.5 1691.7,911.5 1693.9,911.5 1696.1,911.4 1698.3,911.2 1700.6,911.5 1702.8,911.4 1705.0,911.3 1707.2,911.6 1709.4,911.7 1711.6,911.7 1713.8,911.5 1716.0,911.5 1718.2,911.4 1720.4,911.5 1722.6,911.0 1724.8,911.8 1727.0,911.7 1729.2,911.7 1731.4,911.8 1733.6,911.6 1735.9,911.7 1738.1,911.7 1740.3,911.8 1742.5,911.8 1744.7,911.1 1746.9,911.7 1749.1,911.5 1751.3,911.9 1753.5,911.8 1755.7,911.6 1757.9,911.9 1760.1,911.6 1762.3,911.2 1764.5,911.8 1766.7,911.7 1769.0,911.7 1771.2,911.9 1773.4,911.8 1775.6,911.9 1777.8,911.8 1780.0,911.7 1782.2,911.5 1784.4,911.7 1786.6,911.8 1788.8,912.0 1791.0,911.6 1793.2,911.8 1795.4,911.8 1797.6,911.6 1799.8,911.9 1802.1,911.5 1804.3,911.8 1806.5,912.0 1808.7,912.0 1810.9,912.0 1813.1,911.5 1815.3,911.9 1817.5,911.4 1819.7,912.0 1821.9,911.9 1824.1,912.1 1826.3,911.5 1828.5,912.0 1830.7,912.1 1832.9,911.4 1835.2,911.6 1837.4,912.0 1839.6,911.9 1841.8,911.6 1844.0,911.8 1846.2,911.4 1848.4,912.1 1850.6,912.0 1852.8,912.2 1855.0,911.9 1857.2,912.2 1859.4,912.3 1861.6,911.4 1863.8,912.3 1866.0,911.8 1867.7,912.3 1867.7,1008.9 1866.0,1009.4 1863.8,1008.9 1861.6,1009.8 1859.4,1008.9 1857.2,1009.0 1855.0,1009.3 1852.8,1009.0 1850.6,1009.2 1848.4,1009.1 1846.2,1009.8 1844.0,1009.4 1841.8,1009.6 1839.6,1009.3 1837.4,1009.2 1835.2,1009.6 1832.9,1009.8 1830.7,1009.1 1828.5,1009.2 1826.3,1009.7 1824.1,1009.1 1821.9,1009.3 1819.7,1009.2 1817.5,1009.8 1815.3,1009.3 1813.1,1009.7 1810.9,1009.2 1808.7,1009.2 1806.5,1009.2 1804.3,1009.4 1802.1,1009.7 1799.8,1009.3 1797.6,1009.6 1795.4,1009.4 1793.2,1009.4 1791.0,1009.6 1788.8,1009.2 1786.6,1009.4 1784.4,1009.5 1782.2,1009.7 1780.0,1009.5 1777.8,1009.4 1775.6,1009.3 1773.4,1009.4 1771.2,1009.3 1769.0,1009.5 1766.7,1009.5 1764.5,1009.4 1762.3,1010.0 1760.1,1009.6 1757.9,1009.3 1755.7,1009.6 1753.5,1009.4 1751.3,1009.3 1749.1,1009.7 1746.9,1009.5 1744.7,1010.1 1742.5,1009.4 1740.3,1009.4 1738.1,1009.5 1735.9,1009.5 1733.6,1009.6 1731.4,1009.4 1729.2,1009.5 1727.0,1009.5 1724.8,1009.4 1722.6,1010.2 1720.4,1009.7 1718.2,1009.8 1716.0,1009.7 1713.8,1009.7 1711.6,1009.5 1709.4,1009.5 1707.2,1009.6 1705.0,1009.9 1702.8,1009.8 1700.6,1009.7 1698.3,1010.0 1696.1,1009.8 1693.9,1009.7 1691.7,1009.7 1689.5,1009.7 1687.3,1009.6 1685.1,1009.7 1682.9,1009.9 1680.7,1009.6 1678.5,1010.0 1676.3,1009.6 1674.1,1009.7 1671.9,1009.8 1669.7,1010.0 1667.5,1009.9 1665.2,1010.3 1663.0,1009.7 1660.8,1009.9 1658.6,1009.9 1656.4,1009.8 1654.2,1009.9 1652.0,1009.7 1649.8,1010.4 1647.6,1010.0 1645.4,1010.0 1643.2,1010.1 1641.0,1009.8 1638.8,1010.2 1636.6,1010.1 1634.4,1010.1 1632.1,1009.9 1629.9,1009.8 1627.7,1010.3 1625.5,1010.2 1623.3,1010.3 1621.1,1009.8 1618.9,1009.9 1616.7,1010.0 1614.5,1009.9 1612.3,1010.0 1610.1,1009.8 1607.9,1010.1 1605.7,1010.4 1603.5,1010.0 1601.3,1010.1 1599.0,1009.8 1596.8,1010.0 1594.6,1010.2 1592.4,1010.2 1590.2,1010.2 1588.0,1009.9 1585.8,1010.5 1583.6,1009.9 1581.4,1009.9 1579.2,1010.1 1577.0,1010.2 1574.8,1010.0 1572.6,1009.9 1570.4,1010.5 1568.2,1010.3 1565.9,1010.0 1563.7,1010.4 1561.5,1010.5 1559.3,1010.4 1557.1,1010.5 1554.9,1010.2 1552.7,1010.4 1550.5,1010.7 1548.3,1010.1 1546.1,1010.1 1543.9,1010.2 1541.7,1010.1 1539.5,1010.1 1537.3,1010.1 1535.1,1010.4 1532.8,1010.2 1530.6,1010.1 1528.4,1010.1 1526.2,1010.5 1524.0,1010.8 1521.8,1010.3 1519.6,1010.1 1517.4,1010.4 1515.2,1010.5 1513.0,1010.3 1510.8,1010.6 1508.6,1010.8 1506.4,1010.2 1504.2,1010.2 1502.0,1010.6 1499.7,1010.2 1497.5,1010.4 1495.3,1010.4 1493.1,1010.7 1490.9,1010.7 1488.7,1010.6 1486.5,1010.5 1484.3,1010.7 1482.1,1010.4 1479.9,1010.6 1477.7,1010.5 1475.5,1010.5 1473.3,1010.6 1471.1,1010.4 1468.9,1010.5 1466.7,1010.5 1464.4,1010.6 1462.2,1010.4 1460.0,1010.6 1457.8,1010.4 1455.6,1010.4 1453.4,1010.5 1451.2,1010.7 1449.0,1010.4 1446.8,1010.6 1444.6,1010.9 1442.4,1010.6 1440.2,1011.0 1438.0,1010.8 1435.8,1010.4 1433.6,1010.7 1431.3,1010.8 1429.1,1010.8 1426.9,1010.6 1424.7,1011.0 1422.5,1010.7 1420.3,1010.6 1418.1,1011.4 1415.9,1010.8 1413.7,1010.8 1411.5,1010.9 1409.3,1011.0 1407.1,1011.6 1404.9,1010.8 1402.7,1010.7 1400.5,1010.9 1398.2,1011.1 1396.0,1011.2 1393.8,1011.0 1391.6,1010.6 1389.4,1011.0 1387.2,1010.8 1385.0,1011.1 1384.5,1010.7 1383.9,1011.0 1383.4,1010.8 1382.8,1010.7 1382.2,1010.7 1381.7,1010.8 1381.1,1011.1 1380.6,1010.7 1380.0,1011.2 1379.5,1010.8 1378.9,1010.6 1378.4,1011.1 1377.8,1011.0 1377.3,1010.6 1376.7,1010.7 1376.2,1010.6 1375.6,1011.2 1375.1,1010.9 1374.5,1010.7 1374.0,1010.8 1373.4,1011.1 1372.9,1011.0 1372.3,1010.7 1371.8,1010.7 1371.2,1010.7 1370.7,1010.8 1370.1,1010.8 1369.6,1010.8 1369.0,1010.9 1368.5,1011.1 1367.9,1011.1 1367.4,1011.1 1366.8,1011.6 1366.3,1011.1 1365.7,1011.5 1365.1,1011.3 1364.6,1011.3 1364.0,1011.9 1363.5,1012.0 1362.9,1011.6 1362.4,1011.6 1361.8,1011.8 1361.3,1012.0 1360.7,1012.1 1360.2,1011.8 1359.6,1011.7 1359.1,1012.2 1358.5,1011.8 1358.0,1012.1 1357.4,1012.2 1356.9,1012.0 1356.3,1012.6 1355.8,1012.4 1355.2,1012.5 1354.7,1012.3 1354.1,1012.5 1353.6,1012.6 1353.0,1012.6 1352.5,1013.2 1351.9,1012.8 1351.4,1012.8 1350.8,1012.7 1350.3,1013.0 1349.7,1013.0 1349.1,1012.8 1348.6,1012.9 1348.0,1013.7 1347.5,1012.8 1346.9,1013.3 1346.4,1013.5 1345.8,1013.2 1345.3,1013.5 1344.7,1013.6 1344.2,1013.2 1343.6,1013.4 1343.1,1013.5 1342.5,1013.3 1342.0,1013.1 1341.4,1013.5 1340.9,1012.8 1340.3,1012.8 1339.8,1012.5 1339.2,1012.4 1338.7,1012.5 1338.1,1012.1 1337.6,1011.9 1337.0,1012.1 1336.5,1012.0 1335.9,1011.7 1335.4,1011.9 1334.8,1011.8 1334.3,1011.4 1333.7,1011.2 1333.2,1011.1 1332.6,1011.1 1332.0,1011.1 1331.5,1010.8 1330.9,1010.7 1330.4,1010.6 1329.8,1010.4 1329.3,1010.3 1328.7,1010.1 1328.2,1010.8 1327.6,1010.0 1327.1,1009.9 1326.5,1010.0 1326.0,1009.7 1325.4,1009.5 1324.9,1009.7 1324.3,1009.5 1323.8,1009.2 1323.2,1009.1 1322.7,1009.1 1322.1,1008.9 1321.6,1009.1 1321.0,1008.5 1320.5,1009.0 1319.9,1008.2 1319.4,1008.2 1318.8,1012.5 1318.3,1016.9 1317.7,1021.2 1317.2,1026.3 1316.6,1027.7 1316.1,1027.9 1315.5,1027.9 1314.9,1027.7 1314.4,1027.8 1313.8,1027.6 1313.3,1027.6 1312.7,1027.6 1310.5,1027.5 1308.3,1027.7 1306.1,1027.4 1303.9,1027.4 1301.7,1027.2 1299.5,1027.1 1297.3,1027.0 1295.1,1027.2 1292.9,1026.8 1290.7,1026.9 1288.5,1026.6 1286.3,1026.6 1284.1,1026.5 1281.8,1026.6 1279.6,1026.6 1277.4,1026.3 1275.2,1026.7 1273.0,1026.5 1270.8,1026.1 1268.6,1026.1 1266.4,1026.0 1264.2,1026.2 1262.0,1025.8 1259.8,1025.7 1257.6,1026.1 1255.4,1025.4 1253.2,1025.4 1251.0,1025.6 1248.7,1025.7 1246.5,1025.4 1244.3,1025.2 1242.1,1025.1 1239.9,1025.0 1237.7,1024.9 1235.5,1024.9 1233.3,1024.8 1231.1,1024.8 1228.9,1024.6 1226.7,1024.4 1224.5,1024.3 1222.3,1024.3 1220.1,1024.7 1217.9,1024.4 1215.6,1024.3 1213.4,1024.2 1211.2,1023.9 1209.0,1024.1 1206.8,1024.1 1204.6,1023.6 1202.4,1024.1 1200.2,1023.5 1198.0,1023.3 1195.8,1023.3 1193.6,1023.5 1191.4,1023.4 1189.2,1023.4 1187.0,1022.9 1184.8,1022.8 1182.6,1023.1 1180.3,1023.6 1178.1,1022.8 1175.9,1022.5 1173.7,1023.0 1171.5,1022.5 1169.3,1022.4 1167.1,1022.2 1164.9,1022.3 1162.7,1022.4 1160.5,1022.5 1158.3,1022.1 1156.1,1022.4 1153.9,1022.3 1151.7,1022.4 1149.5,1022.3 1147.2,1022.0 1145.0,1022.0 1142.8,1022.1 1140.6,1022.1 1138.4,1022.0 1136.2,1022.0 1134.0,1022.1 1131.8,1021.8 1129.6,1022.2 1127.4,1021.7 1125.2,1021.7 1123.0,1022.1 1120.8,1021.8 1118.6,1021.9 1116.4,1021.8 1114.1,1022.1 1111.9,1022.1 1109.7,1022.1 1107.5,1022.4 1105.3,1021.8 1103.1,1022.0 1100.9,1022.0 1098.7,1021.8 1096.5,1021.9 1094.3,1021.9 1092.1,1022.7 1089.9,1022.1 1087.7,1021.9 1085.5,1022.5 1083.3,1022.2 1081.0,1022.3 1078.8,1022.3 1076.6,1022.3 1074.4,1022.4 1072.2,1022.1 1070.0,1022.2 1067.8,1022.1 1065.6,1022.3 1063.4,1022.4 1061.2,1022.6 1059.0,1022.6 1056.8,1022.6 1054.6,1022.3 1052.4,1022.3 1050.2,1022.3 1047.9,1022.7 1045.7,1022.3 1043.5,1022.6 1041.3,1022.6 1039.1,1022.6 1036.9,1023.1 1034.7,1022.4 1032.5,1022.9 1030.3,1023.4 1028.1,1022.7 1025.9,1022.6 1023.7,1022.7 1021.5,1022.8 1019.3,1022.9 1017.1,1022.7 1014.8,1022.7 1012.6,1022.7 1010.4,1022.8 1008.2,1022.9 1006.0,1022.9 1003.8,1023.2 1001.6,1022.8 999.4,1023.3 997.2,1022.8 995.0,1023.0 992.8,1022.9 990.6,1023.0 988.4,1023.1 986.2,1023.0 984.0,1023.0 981.8,1023.0 979.5,1023.3 977.3,1023.5 975.1,1023.4 972.9,1023.7 970.7,1023.2 968.5,1023.1 966.3,1023.6 964.1,1023.3 961.9,1023.3 959.7,1023.3 957.5,1023.4 955.3,1023.4 953.1,1023.9 950.9,1023.8 948.7,1023.6 946.4,1023.9 944.2,1023.8 942.0,1023.7 939.8,1023.6 937.6,1023.5 935.4,1023.5 933.2,1023.6 931.0,1023.6 928.8,1023.8 926.6,1023.5 924.4,1024.0 922.2,1024.3 920.0,1024.1 917.8,1024.0 915.6,1023.8 913.3,1024.3 911.1,1024.0 908.9,1024.0 906.7,1023.8 904.5,1024.4 902.3,1024.0 900.1,1024.0 897.9,1023.9 895.7,1024.1 893.5,1024.3 891.3,1024.0 889.1,1024.1 886.9,1024.4 884.7,1024.6 882.5,1024.3 880.2,1024.2 878.0,1024.6 875.8,1024.4 873.6,1024.9 871.4,1024.6 869.2,1024.3 867.0,1024.4 864.8,1024.3 862.6,1024.7 860.4,1024.6 858.2,1024.9 856.0,1024.8 853.8,1024.6 851.6,1024.8 849.4,1024.8 847.1,1024.9" fill="#99ca53"/>
<polygon points="847.1,897.0 849.4,896.8 851.6,896.7 853.8,896.7 856.0,897.1 858.2,897.0 860.4,897.1 862.6,897.1 864.8,897.1 867.0,896.8 869.2,897.0 871.4,897.1 873.6,897.1 875.8,897.0 878.0,897.1 880.2,897.3 882.5,897.0 884.7,897.4 886.9,897.3 889.1,897.2 891.3,897.1 893.5,897.4 895.7,897.3 897.9,897.2 900.1,897.3 902.3,897.3 904.5,897.3 906.7,897.5 908.9,897.4 911.1,897.4 913.3,897.6 915.6,897.4 917.8,897.9 920.0,897.8 922.2,897.5 924.4,897.7 926.6,897.8 928.8,897.7 931.0,897.7 933.2,897.9 935.4,897.7 937.6,897.9 939.8,897.9 942.0,897.9 944.2,897.8 946.4,898.1 948.7,898.0 950.9,897.9 953.1,898.2 955.3,898.3 957.5,898.0 959.7,898.1 961.9,898.2 964.1,898.2 966.3,898.3 968.5,897.9 970.7,898.3 972.9,898.3 975.1,898.4 977.3,898.3 979.5,898.1 981.8,898.3 984.0,898.3 986.2,898.4 988.4,898.2 990.6,898.4 992.8,898.6 995.0,898.4 997.2,898.5 999.4,898.4 1001.6,898.5 1003.8,898.5 1006.0,898.5 1008.2,898.7 1010.4,898.8 1012.6,898.5 1014.8,898.6 1017.1,898.6 1019.3,898.7 1021.5,898.9 1023.7,898.9 1025.9,898.6 1028.1,898.8 1030.3,898.8 1032.5,899.0 1034.7,898.9 1036.9,898.9 1039.1,898.9 1041.3,898.9 1043.5,899.0 1045.7,899.0 1047.9,898.9 1050.2,898.9 1052.4,899.0 1054.6,898.8 1056.8,899.0 1059.0,899.0 1061.2,899.1 1063.4,898.9 1065.6,899.2 1067.8,899.3 1070.0,899.2 1072.2,899.1 1074.4,899.3 1076.6,899.0 1078.8,899.2 1081.0,899.4 1083.3,899.3 1085.5,899.1 1087.7,899.4 1089.9,899.5 1092.1,899.3 1094.3,899.2 1096.5,899.2 1098.7,899.4 1100.9,899.4 1103.1,899.4 1105.3,899.3 1107.5,899.2 1109.7,899.5 1111.9,899.4 1114.1,899.6 1116.4,899.5 1118.6,899.7 1120.8,899.7 1123.0,899.6 1125.2,899.7 1127.4,899.4 1129.6,899.6 1131.8,899.5 1134.0,899.5 1136.2,899.5 1138.4,899.4 1140.6,899.3 1142.8,899.0 1145.0,899.5 1147.2,899.3 1149.5,899.3 1151.7,899.4 1153.9,899.2 1156.1,899.3 1158.3,899.2 1160.5,899.0 1162.7,899.4 1164.9,899.1 1167.1,899.0 1169.3,899.0 1171.5,898.8 1173.7,898.7 1175.9,898.7 1178.1,898.5 1180.3,898.7 1182.6,898.4 1184.8,898.4 1187.0,898.4 1189.2,898.2 1191.4,898.2 1193.6,898.0 1195.8,898.1 1198.0,897.9 1200.2,897.9 1202.4,897.5 1204.6,897.8 1206.8,897.4 1209.0,897.7 1211.2,897.4 1213.4,897.3 1215.6,897.2 1217.9,897.3 1220.1,897.3 1222.3,897.2 1224.5,896.8 1226.7,896.8 1228.9,896.9 1231.1,896.6 1233.3,896.7 1235.5,896.6 1237.7,896.6 1239.9,896.2 1242.1,896.1 1244.3,896.3 1246.5,896.1 1248.7,895.9 1251.0,895.7 1253.2,896.2 1255.4,895.8 1257.6,895.7 1259.8,895.8 1262.0,895.5 1264.2,895.5 1266.4,895.3 1268.6,895.4 1270.8,895.2 1273.0,895.2 1275.2,895.0 1277.4,895.0 1279.6,895.0 1281.8,895.0 1284.1,894.6 1286.3,894.6 1288.5,894.5 1290.7,894.6 1292.9,894.5 1295.1,894.2 1297.3,894.2 1299.5,894.3 1301.7,894.1 1303.9,894.0 1306.1,894.0 1308.3,894.0 1310.5,893.7 1312.7,893.7 1313.3,893.7 1313.8,893.9 1314.4,893.7 1314.9,893.7 1315.5,893.5 1316.1,893.7 1316.6,893.5 1317.2,895.8 1317.7,900.2 1318.3,904.8 1318.8,908.9 1319.4,913.3 1319.9,913.0 1320.5,912.8 1321.0,912.6 1321.6,912.6 1322.1,912.7 1322.7,912.1 1323.2,912.3 1323.8,912.2 1324.3,912.1 1324.9,912.1 1325.4,911.8 1326.0,911.7 1326.5,911.4 1327.1,911.4 1327.6,911.3 1328.2,911.1 1328.7,911.2 1329.3,911.1 1329.8,910.9 1330.4,910.9 1330.9,910.7 1331.5,910.6 1332.0,910.4 1332.6,910.3 1333.2,910.4 1333.7,910.1 1334.3,909.8 1334.8,910.1 1335.4,909.8 1335.9,909.6 1336.5,909.7 1337.0,909.5 1337.6,909.3 1338.1,909.3 1338.7,909.0 1339.2,908.9 1339.8,909.0 1340.3,908.7 1340.9,908.5 1341.4,908.5 1342.0,908.3 1342.5,908.2 1343.1,908.1 1343.6,907.9 1344.2,908.0 1344.7,908.2 1345.3,908.1 1345.8,908.1 1346.4,908.2 1346.9,908.4 1347.5,908.3 1348.0,908.3 1348.6,908.4 1349.1,908.4 1349.7,908.4 1350.3,908.6 1350.8,908.6 1351.4,908.8 1351.9,908.7 1352.5,908.8 1353.0,909.0 1353.6,908.9 1354.1,909.0 1354.7,909.0 1355.2,909.0 1355.8,909.3 1356.3,909.3 1356.9,909.2 1357.4,909.2 1358.0,909.3 1358.5,909.1 1359.1,909.3 1359.6,909.5 1360.2,909.5 1360.7,909.5 1361.3,909.6 1361.8,909.9 1362.4,909.8 1362.9,909.8 1363.5,909.6 1364.0,910.1 1364.6,909.8 1365.1,910.0 1365.7,910.0 1366.3,910.2 1366.8,910.2 1367.4,910.1 1367.9,910.3 1368.5,910.2 1369.0,910.4 1369.6,910.5 1370.1,910.5 1370.7,910.6 1371.2,910.6 1371.8,910.4 1372.3,910.7 1372.9,910.8 1373.4,910.6 1374.0,910.4 1374.5,910.5 1375.1,910.5 1375.6,910.5 1376.2,910.7 1376.7,910.6 1377.3,910.9 1377.8,910.7 1378.4,910.5 1378.9,910.8 1379.5,910.9 1380.0,910.8 1380.6,910.6 1381.1,910.5 1381.7,910.3 1382.2,910.5 1382.8,910.8 1383.4,910.9 1383.9,910.6 1384.5,910.5 1385.0,910.8 1387.2,910.7 1389.4,910.7 1391.6,910.7 1393.8,910.7 1396.0,910.6 1398.2,910.6 1400.5,910.7 1402.7,910.6 1404.9,910.5 1407.1,910.8 1409.3,910.8 1411.5,910.7 1413.7,910.5 1415.9,910.7 1418.1,910.6 1420.3,910.8 1422.5,910.7 1424.7,910.8 1426.9,910.7 1429.1,910.7 1431.3,910.7 1433.6,910.6 1435.8,910.7 1438.0,910.9 1440.2,910.7 1442.4,911.0 1444.6,910.7 1446.8,910.5 1449.0,910.8 1451.2,910.8 1453.4,910.9 1455.6,910.8 1457.8,910.9 1460.0,910.8 1462.2,910.9 1464.4,911.0 1466.7,910.9 1468.9,910.9 1471.1,911.1 1473.3,910.7 1475.5,910.9 1477.7,911.2 1479.9,910.8 1482.1,911.0 1484.3,910.9 1486.5,910.9 1488.7,911.1 1490.9,911.3 1493.1,911.0 1495.3,911.0 1497.5,910.9 1499.7,911.1 1502.0,911.1 1504.2,911.0 1506.4,911.1 1508.6,911.1 1510.8,911.0 1513.0,911.2 1515.2,910.9 1517.4,911.2 1519.6,911.1 1521.8,911.1 1524.0,911.2 1526.2,911.1 1528.4,911.0 1530.6,911.0 1532.8,911.1 1535.1,911.2 1537.3,911.1 1539.5,911.3 1541.7,911.2 1543.9,911.1 1546.1,911.1 1548.3,911.3 1550.5,911.4 1552.7,911.0 1554.9,911.3 1557.1,911.4 1559.3,911.4 1561.5,911.2 1563.7,911.1 1565.9,911.3 1568.2,911.1 1570.4,911.2 1572.6,911.2 1574.8,911.2 1577.0,911.3 1579.2,911.3 1581.4,911.4 1583.6,911.4 1585.8,911.2 1588.0,911.4 1590.2,911.3 1592.4,911.4 1594.6,911.4 1596.8,911.4 1599.0,911.2 1601.3,911.4 1603.5,911.4 1605.7,911.2 1607.9,911.7 1610.1,911.5 1612.3,911.7 1614.5,911.4 1616.7,911.4 1618.9,911.4 1621.1,911.4 1623.3,911.6 1625.5,911.3 1627.7,911.4 1629.9,911.5 1632.1,911.6 1634.4,911.4 1636.6,911.6 1638.8,911.6 1641.0,911.5 1643.2,911.5 1645.4,911.6 1647.6,911.4 1649.8,911.7 1652.0,911.7 1654.2,911.5 1656.4,911.6 1658.6,911.6 1660.8,911.6 1663.0,911.6 1665.2,911.7 1667.5,911.8 1669.7,911.5 1671.9,911.7 1674.1,911.7 1676.3,911.6 1678.5,911.6 1680.7,911.3 1682.9,911.8 1685.1,911.8 1687.3,911.7 1689.5,911.5 1691.7,911.7 1693.9,911.9 1696.1,911.6 1698.3,911.8 1700.6,911.7 1702.8,911.6 1705.0,911.8 1707.2,911.8 1709.4,911.7 1711.6,911.8 1713.8,911.7 1716.0,911.9 1718.2,911.8 1720.4,911.9 1722.6,912.0 1724.8,911.6 1727.0,911.8 1729.2,911.7 1731.4,911.9 1733.6,911.8 1735.9,911.9 1738.1,912.0 1740.3,911.8 1742.5,912.0 1744.7,911.9 1746.9,912.1 1749.1,911.8 1751.3,911.8 1753.5,911.9 1755.7,912.0 1757.9,912.0 1760.1,911.8 1762.3,912.0 1764.5,911.9 1766.7,911.9 1769.0,912.1 1771.2,911.8 1773.4,912.2 1775.6,912.0 1777.8,912.0 1780.0,912.2 1782.2,912.0 1784.4,912.0 1786.6,912.0 1788.8,912.1 1791.0,912.0 1793.2,911.9 1795.4,912.0 1797.6,911.9 1799.8,912.0 1802.1,912.0 1804.3,911.9 1806.5,912.2 1808.7,912.2 1810.9,912.0 1813.1,912.1 1815.3,911.9 1817.5,912.0 1819.7,912.1 1821.9,912.1 1824.1,912.2 1826.3,912.2 1828.5,912.2 1830.7,912.1 1832.9,912.2 1835.2,912.2 1837.4,912.2 1839.6,912.3 1841.8,912.2 1844.0,912.5 1846.2,912.2 1848.4,912.3 1850.6,912.2 1852.8,912.2 1855.0,912.5 1857.2,912.0 1859.4,912.2 1861.6,912.3 1863.8,912.5 1866.0,912.2 1867.7,912.2 1867.7,1009.0 1866.0,1009.0 1863.8,1008.7 1861.6,1008.9 1859.4,1009.0 1857.2,1009.2 1855.0,1008.7 1852.8,1009.0 1850.6,1009.0 1848.4,1008.9 1846.2,1009.0 1844.0,1008.7 1841.8,1009.0 1839.6,1008.9 1837.4,1009.0 1835.2,1009.0 1832.9,1009.0 1830.7,1009.1 1828.5,1009.0 1826.3,1009.0 1824.1,1009.0 1821.9,1009.1 1819.7,1009.1 1817.5,1009.2 1815.3,1009.3 1813.1,1009.1 1810.9,1009.2 1808.7,1009.0 1806.5,1009.0 1804.3,1009.3 1802.1,1009.2 1799.8,1009.2 1797.6,1009.3 1795.4,1009.2 1793.2,1009.3 1791.0,1009.2 1788.8,1009.1 1786.6,1009.2 1784.4,1009.2 1782.2,1009.2 1780.0,1009.0 1777.8,1009.2 1775.6,1009.2 1773.4,1009.0 1771.2,1009.4 1769.0,1009.1 1766.7,1009.3 1764.5,1009.3 1762.3,1009.2 1760.1,1009.4 1757.9,1009.2 1755.7,1009.2 1753.5,1009.3 1751.3,1009.4 1749.1,1009.4 1746.9,1009.1 1744.7,1009.3 1742.5,1009.2 1740.3,1009.4 1738.1,1009.2 1735.9,1009.3 1733.6,1009.4 1731.4,1009.3 1729.2,1009.5 1727.0,1009.4 1724.8,1009.6 1722.6,1009.2 1720.4,1009.3 1718.2,1009.4 1716.0,1009.3 1713.8,1009.5 1711.6,1009.4 1709.4,1009.5 1707.2,1009.4 1705.0,1009.4 1702.8,1009.6 1700.6,1009.5 1698.3,1009.4 1696.1,1009.6 1693.9,1009.3 1691.7,1009.5 1689.5,1009.7 1687.3,1009.5 1685.1,1009.4 1682.9,1009.4 1680.7,1009.9 1678.5,1009.6 1676.3,1009.6 1674.1,1009.5 1671.9,1009.5 1669.7,1009.7 1667.5,1009.4 1665.2,1009.5 1663.0,1009.6 1660.8,1009.6 1658.6,1009.6 1656.4,1009.6 1654.2,1009.7 1652.0,1009.5 1649.8,1009.5 1647.6,1009.8 1645.4,1009.6 1643.2,1009.7 1641.0,1009.7 1638.8,1009.6 1636.6,1009.6 1634.4,1009.8 1632.1,1009.6 1629.9,1009.7 1627.7,1009.8 1625.5,1009.9 1623.3,1009.6 1621.1,1009.8 1618.9,1009.8 1616.7,1009.8 1614.5,1009.8 1612.3,1009.5 1610.1,1009.7 1607.9,1009.5 1605.7,1010.0 1603.5,1009.8 1601.3,1009.8 1599.0,1010.0 1596.8,1009.8 1594.6,1009.8 1592.4,1009.8 1590.2,1009.9 1588.0,1009.8 1585.8,1010.0 1583.6,1009.8 1581.4,1009.8 1579.2,1009.9 1577.0,1009.9 1574.8,1010.0 1572.6,1010.0 1570.4,1010.0 1568.2,1010.1 1565.9,1009.9 1563.7,1010.1 1561.5,1010.0 1559.3,1009.8 1557.1,1009.8 1554.9,1009.9 1552.7,1010.2 1550.5,1009.8 1548.3,1009.9 1546.1,1010.1 1543.9,1010.1 1541.7,1010.0 1539.5,1009.9 1537.3,1010.1 1535.1,1010.0 1532.8,1010.1 1530.6,1010.2 1528.4,1010.2 1526.2,1010.1 1524.0,1010.0 1521.8,1010.1 1519.6,1010.1 1517.4,1010.0 1515.2,1010.3 1513.0,1010.0 1510.8,1010.2 1508.6,1010.1 1506.4,1010.1 1504.2,1010.2 1502.0,1010.1 1499.7,1010.1 1497.5,1010.3 1495.3,1010.2 1493.1,1010.2 1490.9,1009.9 1488.7,1010.1 1486.5,1010.3 1484.3,1010.3 1482.1,1010.2 1479.9,1010.4 1477.7,1010.0 1475.5,1010.3 1473.3,1010.5 1471.1,1010.1 1468.9,1010.3 1466.7,1010.3 1464.4,1010.2 1462.2,1010.3 1460.0,1010.4 1457.8,1010.3 1455.6,1010.4 1453.4,1010.3 1451.2,1010.4 1449.0,1010.4 1446.8,1010.7 1444.6,1010.5 1442.4,1010.2 1440.2,1010.5 1438.0,1010.3 1435.8,1010.5 1433.6,1010.6 1431.3,1010.5 1429.1,1010.5 1426.9,1010.5 1424.7,1010.4 1422.5,1010.5 1420.3,1010.4 1418.1,1010.6 1415.9,1010.5 1413.7,1010.7 1411.5,1010.5 1409.3,1010.4 1407.1,1010.4 1404.9,1010.7 1402.7,1010.6 1400.5,1010.5 1398.2,1010.6 1396.0,1010.6 1393.8,1010.5 1391.6,1010.5 1389.4,1010.5 1387.2,1010.5 1385.0,1010.4 1384.5,1010.7 1383.9,1010.6 1383.4,1010.3 1382.8,1010.4 1382.2,1010.7 1381.7,1010.9 1381.1,1010.7 1380.6,1010.6 1380.0,1010.4 1379.5,1010.3 1378.9,1010.4 1378.4,1010.7 1377.8,1010.5 1377.3,1010.3 1376.7,1010.6 1376.2,1010.5 1375.6,1010.7 1375.1,1010.7 1374.5,1010.7 1374.0,1010.8 1373.4,1010.6 1372.9,1010.4 1372.3,1010.5 1371.8,1010.8 1371.2,1010.6 1370.7,1010.6 1370.1,1010.7 1369.6,1010.7 1369.0,1010.8 1368.5,1011.0 1367.9,1010.9 1367.4,1011.1 1366.8,1011.0 1366.3,1011.0 1365.7,1011.2 1365.1,1011.2 1364.6,1011.4 1364.0,1011.1 1363.5,1011.6 1362.9,1011.4 1362.4,1011.4 1361.8,1011.3 1361.3,1011.6 1360.7,1011.7 1360.2,1011.7 1359.6,1011.7 1359.1,1011.9 1358.5,1012.1 1358.0,1011.9 1357.4,1012.0 1356.9,1012.0 1356.3,1011.9 1355.8,1011.9 1355.2,1012.2 1354.7,1012.2 1354.1,1012.2 1353.6,1012.3 1353.0,1012.2 1352.5,1012.4 1351.9,1012.5 1351.4,1012.4 1350.8,1012.6 1350.3,1012.6 1349.7,1012.8 1349.1,1012.8 1348.6,1012.8 1348.0,1012.9 1347.5,1012.9 1346.9,1012.8 1346.4,1013.0 1345.8,1013.1 1345.3,1013.1 1344.7,1013.0 1344.2,1013.2 1343.6,1013.3 1343.1,1013.1 1342.5,1013.0 1342.0,1012.9 1341.4,1012.7 1340.9,1012.7 1340.3,1012.5 1339.8,1012.2 1339.2,1012.3 1338.7,1012.2 1338.1,1011.9 1337.6,1011.9 1337.0,1011.7 1336.5,1011.5 1335.9,1011.6 1335.4,1011.4 1334.8,1011.1 1334.3,1011.4 1333.7,1011.1 1333.2,1010.8 1332.6,1010.9 1332.0,1010.8 1331.5,1010.6 1330.9,1010.5 1330.4,1010.3 1329.8,1010.3 1329.3,1010.1 1328.7,1010.0 1328.2,1010.1 1327.6,1009.9 1327.1,1009.8 1326.5,1009.8 1326.0,1009.5 1325.4,1009.4 1324.9,1009.1 1324.3,1009.1 1323.8,1009.0 1323.2,1008.9 1322.7,1009.1 1322.1,1008.5 1321.6,1008.6 1321.0,1008.6 1320.5,1008.4 1319.9,1008.2 1319.4,1007.9 1318.8,1012.3 1318.3,1016.4 1317.7,1021.0 1317.2,1025.4 1316.6,1027.7 1316.1,1027.5 1315.5,1027.7 1314.9,1027.5 1314.4,1027.5 1313.8,1027.3 1313.3,1027.5 1312.7,1027.5 1310.5,1027.5 1308.3,1027.2 1306.1,1027.2 1303.9,1027.2 1301.7,1027.1 1299.5,1026.9 1297.3,1027.0 1295.1,1027.0 1292.9,1026.7 1290.7,1026.6 1288.5,1026.7 1286.3,1026.6 1284.1,1026.6 1281.8,1026.2 1279.6,1026.2 1277.4,1026.2 1275.2,1026.2 1273.0,1026.0 1270.8,1026.0 1268.6,1025.8 1266.4,1025.9 1264.2,1025.7 1262.0,1025.7 1259.8,1025.4 1257.6,1025.5 1255.4,1025.4 1253.2,1025.0 1251.0,1025.5 1248.7,1025.3 1246.5,1025.1 1244.3,1024.9 1242.1,1025.1 1239.9,1025.0 1237.7,1024.6 1235.5,1024.6 1233.3,1024.5 1231.1,1024.6 1228.9,1024.3 1226.7,1024.4 1224.5,1024.4 1222.3,1024.0 1220.1,1023.9 1217.9,1023.9 1215.6,1024.0 1213.4,1023.9 1211.2,1023.8 1209.0,1023.5 1206.8,1023.8 1204.6,1023.4 1202.4,1023.7 1200.2,1023.3 1198.0,1023.3 1195.8,1023.1 1193.6,1023.2 1191.4,1023.0 1189.2,1023.0 1187.0,1022.8 1184.8,1022.8 1182.6,1022.8 1180.3,1022.5 1178.1,1022.7 1175.9,1022.5 1173.7,1022.5 1171.5,1022.4 1169.3,1022.2 1167.1,1022.2 1164.9,1022.1 1162.7,1021.8 1160.5,1022.2 1158.3,1022.0 1156.1,1021.9 1153.9,1022.0 1151.7,1021.8 1149.5,1021.9 1147.2,1021.9 1145.0,1021.7 1142.8,1022.2 1140.6,1021.9 1138.4,1021.8 1136.2,1021.7 1134.0,1021.7 1131.8,1021.7 1129.6,1021.6 1127.4,1021.8 1125.2,1021.5 1123.0,1021.6 1120.8,1021.5 1118.6,1021.5 1116.4,1021.7 1114.1,1021.6 1111.9,1021.8 1109.7,1021.7 1107.5,1022.0 1105.3,1021.9 1103.1,1021.8 1100.9,1021.8 1098.7,1021.8 1096.5,1022.0 1094.3,1022.0 1092.1,1021.9 1089.9,1021.7 1087.7,1021.8 1085.5,1022.1 1083.3,1021.9 1081.0,1021.8 1078.8,1022.0 1076.6,1022.2 1074.4,1021.9 1072.2,1022.1 1070.0,1022.0 1067.8,1021.9 1065.6,1022.0 1063.4,1022.3 1061.2,1022.1 1059.0,1022.2 1056.8,1022.2 1054.6,1022.4 1052.4,1022.2 1050.2,1022.3 1047.9,1022.3 1045.7,1022.2 1043.5,1022.2 1041.3,1022.3 1039.1,1022.3 1036.9,1022.3 1034.7,1022.3 1032.5,1022.2 1030.3,1022.4 1028.1,1022.4 1025.9,1022.6 1023.7,1022.3 1021.5,1022.3 1019.3,1022.5 1017.1,1022.6 1014.8,1022.6 1012.6,1022.7 1010.4,1022.4 1008.2,1022.5 1006.0,1022.7 1003.8,1022.7 1001.6,1022.7 999.4,1022.8 997.2,1022.7 995.0,1022.8 992.8,1022.6 990.6,1022.8 988.4,1023.0 986.2,1022.8 984.0,1022.9 981.8,1022.9 979.5,1023.1 977.3,1022.9 975.1,1022.8 972.9,1022.9 970.7,1022.9 968.5,1023.3 966.3,1022.9 964.1,1023.0 961.9,1023.0 959.7,1023.1 957.5,1023.2 955.3,1022.9 953.1,1023.0 950.9,1023.3 948.7,1023.2 946.4,1023.1 944.2,1023.4 942.0,1023.3 939.8,1023.3 937.6,1023.3 935.4,1023.5 933.2,1023.3 931.0,1023.5 928.8,1023.5 926.6,1023.4 924.4,1023.5 922.2,1023.7 920.0,1023.4 917.8,1023.3 915.6,1023.8 913.3,1023.6 911.1,1023.8 908.9,1023.8 906.7,1023.7 904.5,1023.9 902.3,1023.9 900.1,1023.9 897.9,1024.0 895.7,1023.9 893.5,1023.8 891.3,1024.1 889.1,1024.0 886.9,1023.9 884.7,1023.8 882.5,1024.2 880.2,1023.9 878.0,1024.1 875.8,1024.2 873.6,1024.1 871.4,1024.1 869.2,1024.2 867.0,1024.4 864.8,1024.1 862.6,1024.1 860.4,1024.1 858.2,1024.2 856.0,1024.1 853.8,1024.5 851.6,1024.5 849.4,1024.4 847.1,1024.2" fill="#f6a625"/>
<polyline points="764.4,960.6 764.5,960.6 764.6,960.6 764.7,960.6 764.8,960.6 765.0,960.6 765.1,960.6 765.2,960.6 765.3,960.6 765.4,960.6 765.5,960.6 765.6,960.6 765.7,960.6 765.8,960.6 765.9,960.6 766.1,960.6 766.2,960.6 766.3,960.6 766.4,960.6 766.5,960.6 766.6,960.6 766.7,960.6 766.8,960.6 766.9,960.6 767.0,960.6 767.2,960.6 767.3,960.6 767.4,960.6 767.5,960.6 767.6,960.6 767.7,960.6 767.8,960.6 767.9,960.6 768.0,960.6 768.2,960.6 768.3,960.6 768.4,960.6 768.5,960.6 768.6,960.6 768.7,960.6 768.8,960.6 768.9,960.6 769.0,960.6 769.1,960.5 769.3,960.4 769.4,960.3 769.5,960.2 769.6,960.1 769.7,959.9 769.8,959.7 769.9,959.5 770.0,959.3 770.1,959.1 770.2,958.8 770.4,958.5 770.5,958.2 770.6,957.9 770.7,957.5 770.8,957.1 770.9,956.7 771.0,956.3 771.1,955.8 771.2,955.4 771.4,954.9 771.5,954.4 771.6,953.8 771.7,953.3 771.8,952.7 771.9,952.1 772.0,951.5 772.1,950.8 772.2,950.1 772.3,949.5 772.5,948.7 772.6,948.0 772.7,947.3 772.8,946.5 772.9,945.7 773.0,944.9 773.1,944.1 773.2,943.2 773.3,942.4 773.4,941.5 773.6,940.6 773.7,939.7 773.8,938.7 773.9,937.8 774.0,936.8 774.1,935.9 774.2,934.9 774.3,933.9 774.4,932.9 774.6,931.8 774.7,930.8 774.8,929.7 774.9,928.7 775.0,927.6 775.1,926.6 775.2,925.5 775.3,924.4 775.4,923.3 775.5,922.2 775.7,921.1 775.8,920.0 775.9,919.0 776.0,917.9 776.1,916.8 776.2,915.7 776.3,914.7 776.4,913.6 776.5,912.6 776.6,911.5 776.8,910.5 776.9,909.5 777.0,908.6 777.1,907.6 777.2,906.7 777.3,905.8 777.4,904.9 777.5,904.0 777.6,903.2 777.7,902.4 777.9,901.6 778.0,900.9 778.1,900.3 778.2,899.6 778.3,899.0 778.4,898.5 778.5,898.0 778.6,897.6 778.7,897.2 778.9,896.8 779.0,896.6 779.1,896.4 779.2,896.2 779.3,896.1 779.4,896.1 779.5,896.2 779.6,896.3 779.7,896.5 779.8,896.8 780.0,897.2 780.1,897.6 780.2,898.1 780.3,898.7 780.4,899.4 780.5,900.2 780.6,901.1 780.7,902.0 780.8,903.1 780.9,904.2 781.1,905.4 781.2,906.7 781.3,908.1 781.4,909.7 781.5,911.2 781.6,912.9 781.7,914.7 781.8,916.6 781.9,918.5 782.1,920.6 782.2,922.7 782.3,924.9 782.4,927.2 782.5,929.6 782.6,932.0 782.7,934.5 782.8,937.1 782.9,939.8 783.0,942.5 783.2,945.2 783.3,948.1 783.4,950.9 783.5,953.8 783.6,956.8 783.7,959.8 783.8,962.8 783.9,965.8 784.0,968.8 784.1,971.8 784.3,974.9 784.4,977.9 784.5,980.9 784.6,983.8 784.7,986.8 784.8,989.7 784.9,992.5 785.0,995.3 785.1,998.0 785.3,1000.6 785.4,1003.2 785.5,1005.6 785.6,1008.0 785.7,1010.2 785.8,1012.3 785.9,1014.3 786.0,1016.1 786.1,1017.8 786.2,1019.3 786.4,1020.7 786.5,1021.9 786.6,1022.9 786.7,1023.7 786.8,1024.4 786.9,1024.8 787.0,1025.1 787.1,1025.1 787.2,1024.9 787.3,1024.5 787.5,1023.9 787.6,1023.1 787.7,1022.1 787.8,1020.8 787.9,1019.4 788.0,1017.7 788.1,1015.8 788.2,1013.7 788.3,1011.3 788.5,1008.8 788.6,1006.1 788.7,1003.2 788.8,1000.1 788.9,996.9 789.0,993.5 789.1,989.9 789.2,986.2 789.3,982.4 789.4,978.5 789.6,974.4 789.7,970.3 789.8,966.2 789.9,962.0 790.0,957.7 790.1,953.5 790.2,949.2 790.3,945.0 790.4,940.9 790.5,936.8 790.7,932.8 790.8,928.9 790.9,925.1 791.0,921.5 791.1,918.0 791.2,914.8 791.3,911.7 791.4,908.9 791.5,906.3 791.7,904.0 791.8,901.9 791.9,900.1 792.0,898.7 792.1,897.5 792.2,896.7 792.3,896.2 792.4,896.1 792.5,896.3 792.6,896.9 792.8,897.8 792.9,899.1 793.0,900.7 793.1,902.6 793.2,904.9 793.3,907.6 793.4,910.5 793.5,913.8 793.6,917.4 793.7,921.2 793.9,925.3 794.0,929.6 794.1,934.1 794.2,938.8 794.3,943.7 794.4,948.7 794.5,953.8 794.6,959.0 794.7,964.1 794.9,969.3 795.0,974.5 795.1,979.6 795.2,984.5 795.3,989.4 795.4,994.0 795.5,998.5 795.6,1002.7 795.7,1006.6 795.8,1010.3 796.0,1013.6 796.1,1016.5 796.2,1019.0 796.3,1021.1 796.4,1022.8 796.5,1024.0 796.6,1024.8 796.7,1025.1 796.8,1024.9 796.9,1024.2 797.1,1023.0 797.2,1021.4 797.3,1019.2 797.4,1016.6 797.5,1013.5 797.6,1010.0 797.7,1006.1 797.8,1001.8 797.9,997.2 798.1,992.2 798.2,986.9 798.3,981.4 798.4,975.8 798.5,969.9 798.6,964.0 798.7,958.0 798.8,952.0 798.9,946.1 799.0,940.3 799.2,934.6 799.3,929.1 799.4,923.9 799.5,919.1 799.6,914.5 799.7,910.4 799.8,906.8 799.9,903.6 800.0,900.9 800.1,898.8 800.3,897.3 800.4,896.4 800.5,896.1 800.6,896.4 800.7,897.4 800.8,899.0 800.9,901.2 801.0,904.0 801.1,907.3 801.3,911.3 801.4,915.7 801.5,920.6 801.6,926.0 801.7,931.7 801.8,937.8 801.9,944.1 802.0,950.6 802.1,957.2 802.2,963.9 802.4,970.6 802.5,977.2 802.6,983.6 802.7,989.8 802.8,995.7 802.9,1001.3 803.0,1006.3 803.1,1010.9 803.2,1014.9 803.3,1018.3 803.5,1021.1 803.6,1023.2 803.7,1024.5 803.8,1025.1 803.9,1024.9 804.0,1023.9 804.1,1022.2 804.2,1019.8 804.3,1016.6 804.4,1012.7 804.6,1008.2 804.7,1003.0 804.8,997.4 804.9,991.2 805.0,984.6 805.1,977.8 805.2,970.6 805.3,963.4 805.4,956.0 805.6,948.7 805.7,941.6 805.8,934.6 805.9,928.0 806.0,921.8 806.1,916.1 806.2,911.0 806.3,906.5 806.4,902.8 806.5,899.9 806.7,897.7 806.8,896.5 806.9,896.1 807.0,896.6 807.1,898.1 807.2,900.4 807.3,903.6 807.4,907.6 807.5,912.4 807.6,918.0 807.8,924.1 807.9,930.8 808.0,938.0 808.1,945.5 808.2,953.3 808.3,961.2 808.4,969.1 808.5,976.9 808.6,984.5 808.8,991.7 808.9,998.5 809.0,1004.7 809.1,1010.2 809.2,1015.0 809.3,1018.9 809.4,1021.9 809.5,1024.0 809.6,1025.0 809.7,1025.0 809.9,1023.9 810.0,1021.8 810.1,1018.7 810.2,1014.6 810.3,1009.7 810.4,1003.9 810.5,997.3 810.6,990.1 810.7,982.4 810.8,974.4 811.0,966.0 811.1,957.5 811.2,949.1 811.3,940.9 811.4,932.9 811.5,925.5 811.6,918.6 811.7,912.5 811.8,907.2 812.0,902.8 812.1,899.5 812.2,897.3 812.3,896.2 812.4,896.3 812.5,897.6 812.6,900.0 812.7,903.6 812.8,908.3 812.9,913.9 813.1,920.5 813.2,927.8 813.3,935.7 813.4,944.2 813.5,953.0 813.6,961.9 813.7,970.9 813.8,979.7 813.9,988.1 814.0,996.0 814.2,1003.2 814.3,1009.6 814.4,1015.0 814.5,1019.4 814.6,1022.6 814.7,1024.5 814.8,1025.1 814.9,1024.4 815.0,1022.4 815.2,1019.1 815.3,1014.6 815.4,1008.9 815.5,1002.2 815.6,994.7 815.7,986.3 815.8,977.5 815.9,968.2 816.0,958.7 816.1,949.3 816.3,940.1 816.4,931.3 816.5,923.2 816.6,915.8 816.7,909.4 816.8,904.2 816.9,900.1 817.0,897.5 817.1,896.2 817.2,896.4 817.4,898.0 817.5,901.1 817.6,905.6 817.7,911.3 817.8,918.2 817.9,926.1 818.0,934.8 818.1,944.1 818.2,953.8 818.4,963.7 818.5,973.6 818.6,983.2 818.7,992.2 818.8,1000.6 818.9,1007.9 819.0,1014.2 819.1,1019.1 819.2,1022.6 819.3,1024.6 819.5,1025.1 819.6,1023.9 819.7,1021.1 819.8,1016.9 819.9,1011.2 820.0,1004.2 820.1,996.1 820.2,987.1 820.3,977.3 820.4,967.2 820.6,956.8 820.7,946.5 820.8,936.6 820.9,927.3 821.0,918.8 821.1,911.4 821.2,905.3 821.3,900.6 821.4,897.6 821.6,896.2 821.7,896.5 821.8,898.6 821.9,902.4 822.0,907.7 822.1,914.6 822.2,922.6 822.3,931.8 822.4,941.8 822.5,952.3 822.7,963.1 822.8,973.8 822.9,984.2 823.0,993.9 823.1,1002.7 823.2,1010.3 823.3,1016.5 823.4,1021.2 823.5,1024.0 823.6,1025.1 823.8,1024.3 823.9,1021.6 824.0,1017.1 824.1,1011.0 824.2,1003.3 824.3,994.4 824.4,984.5 824.5,973.8 824.6,962.7 824.8,951.5 824.9,940.5 825.0,930.2 825.1,920.8 825.2,912.5 825.3,905.8 825.4,900.7 825.5,897.4 825.6,896.1 825.7,896.8 825.9,899.6 826.0,904.2 826.1,910.6 826.2,918.7 826.3,928.0 826.4,938.5 826.5,949.6 826.6,961.2 826.7,972.7 826.8,983.9 827.0,994.3 827.1,1003.7 827.2,1011.6 827.3,1017.9 827.4,1022.3 827.5,1024.7 827.6,1024.9 827.7,1023.0 827.8,1019.0 828.0,1013.0 828.1,1005.3 828.2,996.0 828.3,985.5 828.4,974.1 828.5,962.2 828.6,950.3 828.7,938.6 828.8,927.8 828.9,918.0 829.1,909.8 829.2,903.2 829.3,898.7 829.4,896.4 829.5,896.4 829.6,898.6 829.7,903.0 829.8,909.6 829.9,917.9 830.0,927.9 830.2,939.0 830.3,950.9 830.4,963.2 830.5,975.5 830.6,987.2 830.7,997.9 830.8,1007.3 830.9,1015.0 831.0,1020.6 831.1,1024.0 831.3,1025.1 831.4,1023.7 831.5,1019.9 831.6,1013.9 831.7,1005.8 831.8,996.0 831.9,984.8 832.0,972.7 832.1,960.1 832.3,947.5 832.4,935.3 832.5,924.1 832.6,914.4 832.7,906.4 832.8,900.6 832.9,897.1 833.0,896.1 833.1,897.7 833.2,901.8 833.4,908.3 833.5,916.9 833.6,927.3 833.7,939.0 833.8,951.7 833.9,964.7 834.0,977.6 834.1,989.8 834.2,1000.8 834.3,1010.2 834.5,1017.5 834.6,1022.5 834.7,1024.9 834.8,1024.6 834.9,1021.6 835.0,1016.1 835.1,1008.2 835.2,998.2 835.3,986.7 835.5,974.0 835.6,960.7 835.7,947.4 835.8,934.6 835.9,922.9 836.0,912.9 836.1,904.9 836.2,899.4 836.3,896.5 836.4,896.4 836.6,899.2 836.7,904.7 836.8,912.7 836.9,922.8 837.0,934.7 837.1,947.7 837.2,961.3 837.3,975.0 837.4,987.9 837.5,999.7 837.7,1009.7 837.8,1017.5 837.9,1022.7 838.0,1025.0 838.1,1024.3 838.2,1020.7 838.3,1014.3 838.4,1005.4 838.5,994.4 838.7,981.8 838.8,968.1 838.9,954.1 839.0,940.3 839.1,927.6 839.2,916.3 839.3,907.2 839.4,900.6 839.5,896.9 839.6,896.2 839.8,898.7 839.9,904.2 840.0,912.4 840.1,923.0 840.2,935.5 840.3,949.2 840.4,963.5 840.5,977.7 840.6,991.0 840.7,1002.9 840.9,1012.7 841.0,1019.8 841.1,1024.0 841.2,1025.0 841.3,1022.8 841.4,1017.4 841.5,1009.1 841.6,998.3 841.7,985.6 841.9,971.6 842.0,956.9 842.1,942.5 842.2,929.0 842.3,917.1 842.4,907.4 842.5,900.5 842.6,896.8 842.7,896.3 842.8,899.3 843.0,905.6 843.1,914.7 843.2,926.3 843.3,939.8 843.4,954.4 843.5,969.3 843.6,983.8 843.7,997.1 843.8,1008.4 843.9,1017.1 844.1,1022.8 844.2,1025.1 844.3,1023.8 844.4,1019.1 844.5,1011.1 844.6,1000.4 844.7,987.4 844.8,972.9 844.9,957.7 845.1,942.7 845.2,928.6 845.3,916.3 845.4,906.5 845.5,899.7 845.6,896.4 845.7,896.7 845.8,900.7 845.9,908.1 846.0,918.5 846.2,931.3 846.3,945.9 846.4,961.3 846.5,976.7 846.6,991.2 846.7,1003.9 846.8,1014.1 846.9,1021.2 847.0,1024.7 847.1,1024.5 847.3,1020.4 847.4,1012.9 847.5,1002.1 847.6,988.9 847.7,974.0 847.8,958.3 847.9,942.6 848.0,928.1 848.1,915.5 848.3,905.6 848.4,899.0 848.5,896.2 848.6,897.3 848.7,902.3 848.8,910.9 848.9,922.6 849.0,936.6 849.1,952.2 849.2,968.3 849.4,983.9 849.5,998.1 849.6,1010.0 849.7,1018.7 849.8,1023.9 849.9,1025.0 850.0,1022.1 850.1,1015.2 850.2,1004.8 850.3,991.7 850.5,976.5 850.6,960.2 850.7,944.0 850.8,928.8 850.9,915.7 851.0,905.4 851.1,898.8 851.2,896.1 851.3,897.7 851.5,903.4 851.6,912.9 851.7,925.5 851.8,940.5 851.9,956.8 852.0,973.4 852.1,989.2 852.2,1003.1 852.3,1014.1 852.4,1021.6 852.6,1024.9 852.7,1024.0 852.8,1018.7 852.9,1009.5 853.0,996.9 853.1,981.8 853.2,965.3 853.3,948.4 853.4,932.4 853.5,918.3 853.7,907.0 853.8,899.5 853.9,896.2 854.0,897.4 854.1,903.0 854.2,912.7 854.3,925.7 854.4,941.2 854.5,958.1 854.6,975.2 854.8,991.3 854.9,1005.2 855.0,1015.9 855.1,1022.7 855.2,1025.1 855.3,1022.8 855.4,1016.1 855.5,1005.3 855.6,991.3 855.8,975.0 855.9,957.7 856.0,940.5 856.1,924.8 856.2,911.7 856.3,902.2 856.4,897.0 856.5,896.5 856.6,900.7 856.7,909.4 856.9,921.9 857.0,937.3 857.1,954.4 857.2,972.1 857.3,988.9 857.4,1003.6 857.5,1015.1 857.6,1022.4 857.7,1025.1 857.8,1022.9 858.0,1015.9 858.1,1004.6 858.2,990.0 858.3,973.1 858.4,955.2 858.5,937.7 858.6,922.0 858.7,909.2 858.8,900.5 859.0,896.4 859.1,897.3 859.2,903.2 859.3,913.6 859.4,927.7 859.5,944.4" fill="none" stroke="#f6a625" stroke-width="2.2" stroke-linejoin="round"/>
<polyline points="764.4,961.0 765.6,947.8 766.1,943.7 766.7,938.0 767.7,932.3 767.9,931.2 769.0,926.2 769.4,925.2 770.2,922.6 771.0,920.6 771.4,920.1 772.5,918.1 772.7,917.7 773.7,916.7 774.3,916.1 774.9,915.4 776.0,915.0 776.0,914.8 777.2,914.3 777.6,914.1 778.3,913.9 779.3,913.8 779.5,913.7 780.7,913.3 780.9,913.4 781.8,913.2 782.6,913.2 783.0,913.2 784.1,913.3 784.3,913.3 785.3,913.1 785.9,913.0 786.5,913.0 787.6,913.1 789.2,913.3 790.9,913.2 792.5,913.3 794.2,913.3 795.8,913.4 797.5,913.0 799.2,913.1 800.8,913.3 802.5,913.4 804.1,913.3 805.8,913.5 807.4,913.3 809.1,913.3 810.7,913.4 812.4,913.6 814.0,913.6 815.7,913.5 817.4,913.6 819.0,913.6 820.7,913.7 822.3,913.6 824.0,913.7 825.6,913.7 827.3,913.8 828.9,913.7 830.6,913.7 832.3,913.9 833.9,913.8 835.6,913.9 837.2,913.9 838.9,914.0 840.5,913.9 842.2,914.1 843.8,914.2 845.5,914.0 847.1,914.3 848.8,914.4 850.5,914.2 852.1,914.0 853.8,914.0 855.4,914.2 857.1,914.5 858.7,914.4 860.4,914.4 862.0,914.3 863.7,914.3 865.4,914.4 867.0,914.3 868.7,914.4 870.3,914.5 872.0,914.5 873.6,914.6 875.3,914.5 876.9,914.7 878.6,914.7 880.2,914.4 881.9,914.5 883.6,914.6 885.2,914.8 886.9,914.8 888.5,914.8 890.2,914.8 891.8,914.9 893.5,915.0 895.1,914.8 896.8,914.7 898.5,915.0 900.1,914.9 901.8,915.0 902.3,915.0 903.4,914.9 905.1,914.9 906.7,915.2 908.4,915.2 910.0,915.2 911.7,915.2 913.3,915.2 915.0,915.1 916.7,915.2 918.3,915.2 920.0,915.2 921.6,915.3 923.3,915.5 924.9,915.1 926.6,915.4 928.2,915.5 929.9,915.3 931.5,915.5 933.2,915.5 934.9,915.4 936.5,915.4 938.2,915.4 939.8,915.7 941.5,915.8 943.1,915.8 944.8,915.6 946.4,915.7 948.1,915.7 949.8,915.6 951.4,915.7 953.1,915.8 954.7,915.7 956.4,915.6 958.0,915.7 959.7,915.9 961.3,915.8 963.0,915.8 964.6,916.1 966.3,915.9 968.0,915.9 969.6,916.0 971.3,916.3 972.9,915.9 974.6,916.3 976.2,916.2 977.9,916.1 979.5,916.1 981.2,916.3 982.9,916.2 984.5,916.1 986.2,916.4 987.8,916.3 989.5,916.3 991.1,916.3 992.8,916.3 994.4,916.4 996.1,916.3 997.7,916.4 999.4,916.5 1001.1,916.6 1002.7,916.6 1004.4,916.7 1006.0,916.6 1007.7,916.5 1009.3,916.7 1011.0,916.4 1012.6,916.5 1014.3,916.7 1016.0,916.4 1017.6,916.8 1019.3,916.6 1020.9,916.5 1022.6,916.7 1024.2,916.7 1025.9,916.8 1027.5,916.8 1029.2,917.0 1030.8,916.8 1032.5,916.9 1034.2,916.8 1035.8,917.0 1037.5,916.9 1039.1,916.8 1040.2,917.2 1040.8,916.9 1042.4,916.9 1044.1,916.9 1045.7,917.1 1047.4,916.9 1049.1,917.1 1050.7,917.2 1052.4,917.4 1054.0,917.1 1055.7,917.2 1057.3,917.1 1059.0,917.5 1060.6,917.2 1062.3,917.3 1063.9,917.3 1065.6,917.2 1067.3,917.3 1068.9,917.2 1070.6,917.5 1072.2,917.4 1073.9,917.4 1075.5,917.6 1077.2,917.3 1078.8,917.6 1080.5,917.7 1082.2,917.4 1083.8,917.6 1085.5,917.5 1087.1,917.7 1088.8,917.6 1090.4,917.5 1092.1,917.7 1093.7,917.6 1095.4,917.7 1097.0,917.8 1098.7,917.9 1100.4,917.8 1102.0,917.6 1103.7,917.8 1105.3,917.8 1107.0,917.9 1108.6,917.8 1110.3,918.0 1111.9,917.9 1113.6,917.9 1115.2,917.9 1116.9,917.7 1118.6,918.0 1120.2,918.0 1121.9,917.9 1123.0,918.0 1123.5,918.0 1125.2,918.0 1126.8,918.0 1128.5,918.1 1130.1,918.1 1131.8,918.0 1133.5,918.0 1135.1,917.9 1136.8,917.9 1138.4,918.1 1140.1,917.9 1141.7,917.8 1143.4,918.0 1145.0,918.1 1146.7,918.0 1148.3,918.1 1150.0,918.1 1151.7,917.9 1153.3,918.0 1155.0,918.0 1156.6,918.1 1158.3,917.7 1159.9,918.1 1161.6,918.1 1163.2,917.9 1164.9,918.1 1166.6,918.0 1168.2,918.0 1169.9,918.1 1171.5,918.2 1173.2,918.0 1174.8,918.1 1176.5,918.1 1178.1,917.9 1179.8,918.2 1181.4,918.1 1183.1,918.0 1184.8,918.1 1186.4,918.1 1188.1,917.9 1189.7,918.1 1191.4,918.0 1193.0,918.1 1194.7,918.1 1196.3,918.1 1198.0,918.2 1199.7,918.0 1201.3,918.0 1203.0,917.9 1204.6,917.9 1206.3,918.1 1207.9,918.1 1209.6,917.9 1211.2,917.9 1212.9,918.0 1214.5,918.2 1216.2,917.9 1217.9,918.0 1219.5,917.8 1221.2,918.0 1222.8,918.2 1224.5,917.9 1226.1,918.1 1227.8,917.8 1229.4,918.0 1231.1,917.9 1232.8,918.0 1234.4,918.0 1236.1,918.1 1237.7,918.0 1239.4,918.0 1241.0,917.9 1242.7,918.1 1244.3,917.9 1246.0,917.9 1247.6,917.9 1249.3,918.1 1251.0,918.3 1252.6,918.0 1254.3,918.2 1255.9,917.9 1257.6,917.9 1259.2,918.1 1260.9,918.1 1262.5,918.1 1264.2,918.2 1265.8,918.0 1267.5,918.1 1269.2,918.0 1270.8,917.7 1272.5,917.9 1274.1,917.9 1275.8,918.0 1277.4,918.1 1279.1,918.0 1280.7,918.2 1282.4,917.9 1284.1,918.0 1285.7,918.1 1287.4,917.9 1289.0,918.2 1290.7,918.1 1292.3,918.0 1294.0,918.0 1295.6,918.0 1297.3,918.0 1298.9,918.2 1300.6,918.1 1302.3,917.8 1303.9,917.8 1305.6,918.1 1307.2,917.7 1308.9,917.8 1310.5,917.9 1312.2,918.0 1313.8,918.2 1314.7,918.0 1315.5,925.6 1316.1,930.0 1317.2,940.4 1318.8,955.8 1319.9,966.0 1320.5,966.9 1322.0,969.2 1322.1,969.3 1323.8,971.0 1324.1,971.4 1325.4,972.8 1326.2,973.4 1327.1,974.2 1328.4,975.2 1328.7,975.5 1330.4,976.7 1330.5,976.8 1332.0,977.8 1332.6,978.2 1333.7,978.7 1334.7,979.1 1335.4,979.4 1336.8,980.2 1337.0,980.0 1338.7,980.6 1338.9,980.9 1340.3,981.1 1341.0,981.2 1342.0,981.5 1343.1,981.2 1343.6,981.5 1345.2,981.4 1345.3,981.4 1346.9,981.4 1347.4,981.4 1348.6,981.1 1349.5,980.9 1350.3,980.6 1351.6,980.1 1351.9,980.0 1353.6,979.0 1353.7,979.1 1355.2,978.4 1355.8,978.1 1356.9,977.5 1357.9,976.5 1358.5,976.2 1360.0,975.1 1360.2,975.2 1361.8,973.6 1362.1,973.4 1363.5,972.0 1364.2,971.4 1365.1,970.3 1366.3,969.1 1366.8,968.3 1368.5,964.1 1370.1,964.1 1371.2,964.0 1371.8,964.0 1373.4,964.0 1375.1,964.0 1376.7,964.0 1378.4,964.0 1380.0,964.0 1381.7,964.0 1383.4,963.9 1385.0,963.9 1386.7,964.0 1388.3,964.0 1390.0,964.0 1391.6,964.0 1393.3,964.0 1394.9,964.0 1396.6,964.0 1398.2,964.0 1399.9,964.0 1401.6,964.0 1403.2,963.9 1404.9,964.0 1406.5,964.0 1408.2,964.0 1409.8,964.0 1411.5,963.9 1413.1,964.0 1414.8,964.0 1416.5,964.0 1418.1,963.9 1419.8,963.9 1421.4,963.9 1423.1,964.0 1424.7,963.9 1426.4,964.0 1428.0,964.0 1429.7,964.0 1431.3,964.0 1433.0,964.0 1434.7,964.0 1436.3,963.9 1438.0,963.9 1439.6,963.9 1441.3,963.9 1442.9,963.9 1444.6,964.0 1446.2,963.9 1447.9,963.9 1449.5,963.9 1451.2,963.9 1452.9,963.9 1454.5,964.0 1456.2,963.9 1457.8,963.9 1459.5,963.9 1461.1,963.9 1462.8,963.9 1464.4,963.9 1466.1,964.0 1467.8,963.9 1469.4,963.9 1471.1,963.9 1472.7,963.9 1474.4,963.9 1476.0,963.9 1477.7,963.9 1479.3,963.9 1481.0,963.9 1482.6,963.9 1484.3,963.9 1486.0,963.9 1487.6,963.9 1489.3,963.9 1490.9,963.9 1492.6,963.9 1494.2,963.9 1495.9,963.9 1497.5,963.9 1499.2,963.9 1500.9,963.9 1502.5,963.8 1504.2,963.9 1505.8,963.9 1507.5,963.9 1509.1,963.8 1510.8,963.9 1512.4,963.9 1514.1,963.9 1515.7,963.8 1517.4,963.9 1519.1,963.9 1520.7,963.9 1522.4,963.8 1524.0,963.8 1525.7,963.8 1527.3,963.8 1529.0,963.8 1530.6,963.9 1532.3,963.9 1534.0,963.9 1535.6,963.9 1537.3,963.9 1538.9,963.8 1540.6,963.8 1542.2,963.9 1543.9,963.8 1545.5,963.8 1547.2,963.8 1548.8,963.8 1550.5,963.9 1552.2,963.8 1553.8,963.8 1555.5,963.8 1557.1,963.8 1558.8,963.8 1560.4,963.8 1562.1,963.8 1563.7,963.8 1565.4,963.8 1567.1,963.8 1568.7,963.8 1570.4,963.8 1572.0,963.8 1573.7,963.8 1575.3,963.8 1577.0,963.8 1578.6,963.7 1580.3,963.8 1581.9,963.8 1583.6,963.8 1585.3,963.8 1586.9,963.8 1588.6,963.8 1590.2,963.8 1591.9,963.8 1593.5,963.8 1595.2,963.8 1596.8,963.8 1598.5,963.7 1600.1,963.8 1601.8,963.8 1603.5,963.8 1605.1,963.8 1606.8,963.8 1608.4,963.8 1610.1,963.7 1611.7,963.7 1613.4,963.8 1615.0,963.8 1616.7,963.7 1618.4,963.8 1620.0,963.8 1621.7,963.8 1623.3,963.7 1625.0,963.7 1626.6,963.7 1628.3,963.8 1629.9,963.7 1631.6,963.7 1633.2,963.8 1634.9,963.8 1636.6,963.7 1638.2,963.7 1639.9,963.7 1641.5,963.8 1643.2,963.7 1644.8,963.7 1646.5,963.7 1648.1,963.7 1649.8,963.7 1651.5,963.7 1653.1,963.7 1654.8,963.7 1656.4,963.7 1658.1,963.7 1659.7,963.7 1661.4,963.7 1663.0,963.7 1664.7,963.7 1666.3,963.7 1668.0,963.7 1669.7,963.7 1671.3,963.7 1673.0,963.8 1674.6,963.7 1676.3,963.7 1677.9,963.7 1679.6,963.7 1681.2,963.7 1682.9,963.7 1684.6,963.7 1686.2,963.7 1687.9,963.7 1689.5,963.7 1691.2,963.7 1692.8,963.7 1694.5,963.7 1696.1,963.7 1697.8,963.6 1699.4,963.7 1701.1,963.7 1702.8,963.6 1704.4,963.7 1706.1,963.7 1707.7,963.7 1709.4,963.6 1711.0,963.7 1712.7,963.7 1714.3,963.6 1716.0,963.6 1717.7,963.7 1719.3,963.7 1721.0,963.7 1722.6,963.7 1724.3,963.6 1725.9,963.6 1727.6,963.6 1729.2,963.6 1730.9,963.6 1732.5,963.6 1734.2,963.7 1735.9,963.6 1737.5,963.6 1739.2,963.6 1740.8,963.7 1742.5,963.6 1744.1,963.6 1745.8,963.6 1747.4,963.6 1749.1,963.6 1750.8,963.6 1752.4,963.6 1754.1,963.6 1755.7,963.6 1757.4,963.6 1759.0,963.6 1760.7,963.6 1762.3,963.6 1764.0,963.6 1765.6,963.6 1767.3,963.6 1769.0,963.6 1770.6,963.6 1772.3,963.6 1773.9,963.6 1775.6,963.6 1777.2,963.6 1778.9,963.6 1780.5,963.6 1782.2,963.6 1783.8,963.6 1785.5,963.6 1787.2,963.6 1788.8,963.6 1790.5,963.6 1792.1,963.6 1793.8,963.6 1795.4,963.6 1797.1,963.6 1798.7,963.6 1800.4,963.5 1802.1,963.6 1803.7,963.6 1805.4,963.6 1807.0,963.6 1808.7,963.6 1810.3,963.6 1812.0,963.6 1813.6,963.5 1815.3,963.6 1816.9,963.5 1818.6,963.5 1820.3,963.5 1821.9,963.6 1823.6,963.5 1825.2,963.5 1826.9,963.5 1828.5,963.5 1830.2,963.5 1831.8,963.6 1833.5,963.5 1835.2,963.5 1836.8,963.6 1838.5,963.6 1840.1,963.5 1841.8,963.5 1843.4,963.5 1845.1,963.5 1846.7,963.5 1848.4,963.5 1850.0,963.5 1851.7,963.5 1853.4,963.5 1855.0,963.5 1856.7,963.5 1858.3,963.5 1860.0,963.5 1861.6,963.5 1863.3,963.5 1864.9,963.5 1866.6,963.5 1867.7,963.5" fill="none" stroke="#0000ff" stroke-width="3.6" stroke-linejoin="round"/>
<polyline points="764.4,961.1 766.1,977.9 767.7,994.6 769.3,1010.6 769.4,1010.3 771.0,1008.7 772.7,1007.7 774.3,1006.9 776.0,1005.9 777.6,1005.3 779.3,1004.6 780.9,1004.0 782.6,1004.0 784.3,1003.7 785.9,1003.5 787.6,1003.5 789.2,1003.2 790.9,1003.1 792.0,1002.9 792.5,1002.9 794.2,1003.2 795.8,1003.0 797.5,1003.0 799.2,1002.9 800.8,1002.9 802.5,1003.0 804.1,1003.1 805.8,1003.1 807.4,1003.1 809.1,1002.9 810.7,1003.3 812.4,1003.1 814.0,1003.1 815.7,1002.9 817.4,1003.0 819.0,1003.1 820.7,1002.8 822.3,1002.9 824.0,1003.0 825.6,1003.3 827.3,1003.1 828.9,1002.9 830.6,1002.9 832.3,1003.1 833.9,1002.9 835.6,1003.0 837.2,1003.2 838.9,1003.0 840.5,1003.0 842.2,1002.9 843.8,1003.2 845.5,1003.2 847.1,1002.9 848.8,1002.8 850.5,1003.0 852.1,1003.2 853.8,1003.1 855.4,1002.9 857.1,1003.0 858.7,1003.1 860.4,1003.0 862.0,1003.0 863.7,1003.0 865.4,1002.9 867.0,1002.9 868.7,1002.8 870.3,1002.9 872.0,1002.8 873.6,1003.1 875.3,1003.1 876.9,1003.0 878.6,1003.1 880.2,1003.0 881.9,1002.9 883.6,1003.0 885.2,1003.0 886.9,1003.0 888.5,1002.7 890.2,1002.9 891.8,1003.0 893.5,1003.0 895.1,1002.9 896.8,1002.8 898.5,1002.9 900.1,1003.2 901.8,1002.9 903.4,1003.1 905.1,1002.9 906.7,1003.1 908.4,1002.9 910.0,1003.0 911.7,1003.1 913.3,1003.1 915.0,1002.9 916.7,1003.0 918.3,1002.9 920.0,1003.0 921.6,1003.0 923.3,1003.0 924.9,1003.1 926.6,1002.9 928.2,1002.9 929.9,1002.9 931.5,1003.0 933.2,1002.9 934.9,1003.1 936.5,1002.9 938.2,1003.2 939.8,1003.0 941.5,1003.1 943.1,1002.9 944.8,1003.0 946.4,1003.0 948.1,1003.2 949.8,1003.0 951.4,1003.2 953.1,1002.9 954.7,1003.2 956.4,1002.9 958.0,1002.8 959.7,1002.8 961.3,1003.0 963.0,1003.0 964.6,1003.0 966.3,1003.0 968.0,1003.1 969.6,1003.2 971.3,1003.0 972.9,1003.0 974.6,1003.0 976.2,1002.8 977.9,1003.0 979.5,1003.2 981.2,1002.9 982.9,1003.3 984.5,1003.1 986.2,1003.1 987.8,1003.1 989.5,1003.0 991.1,1003.0 992.8,1003.2 994.4,1002.9 996.1,1003.0 997.7,1002.9 999.4,1003.0 1001.1,1003.4 1002.7,1003.2 1004.4,1002.9 1006.0,1002.8 1007.7,1003.1 1009.3,1003.1 1011.0,1002.9 1012.6,1003.2 1014.3,1003.1 1016.0,1003.1 1017.6,1003.1 1019.3,1003.1 1020.9,1003.0 1022.6,1002.9 1024.2,1003.2 1025.9,1003.0 1027.5,1002.9 1029.2,1003.1 1030.8,1003.0 1032.5,1003.1 1034.2,1003.4 1035.8,1003.2 1037.5,1003.0 1039.1,1002.9 1040.8,1003.0 1042.4,1002.9 1044.1,1003.0 1045.7,1003.0 1047.4,1003.1 1049.1,1003.0 1050.7,1002.8 1052.4,1003.0 1054.0,1003.0 1055.7,1003.0 1057.3,1003.2 1059.0,1002.9 1060.6,1003.0 1062.3,1002.9 1063.9,1002.9 1065.6,1003.1 1067.3,1002.9 1068.9,1003.2 1070.6,1002.7 1072.2,1003.2 1073.9,1003.0 1075.5,1002.9 1077.2,1003.0 1078.8,1003.0 1080.5,1003.1 1082.2,1003.2 1083.8,1002.9 1085.5,1003.0 1087.1,1003.0 1088.8,1003.0 1090.4,1003.0 1092.1,1003.2 1093.7,1003.0 1095.4,1002.8 1097.0,1003.0 1098.7,1003.0 1100.4,1003.0 1102.0,1003.1 1103.7,1003.1 1105.3,1003.0 1107.0,1003.1 1108.6,1003.1 1110.3,1002.9 1111.9,1003.0 1113.6,1003.2 1115.2,1002.9 1116.9,1003.0 1118.6,1002.9 1120.2,1003.1 1121.9,1002.9 1123.5,1003.1 1125.2,1003.0 1126.8,1003.0 1128.5,1003.0 1130.1,1002.9 1131.8,1002.9 1133.5,1003.1 1135.1,1003.0 1136.8,1003.1 1138.4,1003.1 1140.1,1002.8 1141.7,1003.2 1143.4,1003.0 1145.0,1003.0 1146.7,1003.0 1148.3,1002.9 1150.0,1003.0 1150.6,1003.3 1151.7,1003.1 1153.3,1003.0 1155.0,1003.2 1156.6,1003.6 1158.3,1003.5 1159.9,1003.8 1161.6,1003.6 1163.2,1003.6 1164.9,1003.7 1166.6,1003.8 1168.2,1004.0 1169.9,1004.1 1171.5,1004.0 1173.2,1004.2 1174.8,1004.3 1176.5,1004.5 1178.1,1004.8 1179.8,1004.9 1181.4,1004.8 1183.1,1005.0 1184.8,1004.9 1186.4,1005.1 1188.1,1005.0 1189.7,1005.3 1191.4,1005.4 1193.0,1005.5 1194.7,1005.5 1196.3,1005.6 1198.0,1005.6 1199.7,1005.6 1201.3,1005.8 1203.0,1005.8 1204.6,1006.1 1206.3,1006.2 1207.9,1006.1 1209.6,1006.2 1211.2,1006.5 1212.9,1006.5 1214.5,1006.7 1216.2,1006.9 1217.9,1007.1 1219.5,1007.1 1221.2,1007.0 1222.8,1007.2 1224.5,1007.5 1226.1,1007.3 1227.8,1007.4 1229.4,1007.7 1231.1,1007.7 1232.8,1007.7 1234.4,1007.9 1236.1,1007.9 1237.7,1008.1 1239.4,1008.1 1241.0,1008.2 1242.7,1008.3 1244.3,1008.2 1246.0,1008.5 1247.6,1008.7 1249.3,1008.7 1251.0,1008.7 1252.6,1008.9 1254.3,1009.2 1255.9,1009.2 1257.6,1009.1 1259.2,1009.4 1260.9,1009.4 1262.5,1009.4 1264.2,1009.4 1265.8,1009.7 1267.5,1009.6 1269.2,1009.9 1270.8,1010.1 1272.5,1010.1 1274.1,1010.0 1275.8,1010.1 1277.4,1010.4 1279.1,1010.6 1280.7,1010.5 1282.4,1010.6 1284.1,1010.9 1285.7,1011.0 1287.4,1010.9 1289.0,1011.0 1290.7,1011.2 1292.3,1011.1 1294.0,1011.3 1295.6,1011.4 1297.3,1011.6 1298.9,1011.7 1300.6,1011.5 1302.3,1012.0 1303.9,1012.0 1305.6,1011.7 1307.2,1011.9 1308.9,1012.3 1310.5,1012.1 1312.2,1012.5 1313.8,1012.3 1314.7,1012.3 1315.5,1009.5 1317.2,1003.2 1318.8,1004.5 1319.4,1005.2 1320.5,1005.3 1322.1,1005.7 1323.8,1006.0 1325.4,1006.5 1327.1,1006.9 1328.7,1007.3 1330.4,1007.8 1332.0,1008.1 1332.6,1008.1 1333.7,1008.1 1335.4,1008.4 1337.0,1008.6 1338.7,1008.6 1340.3,1008.7 1342.0,1008.9 1343.6,1009.0 1345.3,1009.3 1346.9,1009.6 1348.6,1009.9 1350.3,1009.9 1351.9,1010.0 1353.6,1010.2 1355.2,1010.4 1356.9,1010.7 1358.5,1010.8 1360.2,1010.7 1361.8,1011.1 1363.5,1011.1 1365.1,1011.4 1365.7,1011.5 1366.8,1011.4 1368.5,1011.5 1370.1,1011.6 1371.8,1011.4 1373.4,1011.5 1375.1,1011.4 1376.7,1011.4 1378.4,1011.4 1380.0,1011.4 1381.7,1011.4 1383.4,1011.4 1385.0,1011.4 1386.7,1011.4 1388.3,1011.3 1390.0,1011.3 1391.6,1011.3 1393.3,1011.4 1394.9,1011.2 1396.6,1011.2 1398.2,1011.2 1399.9,1011.2 1401.6,1011.2 1403.2,1011.2 1404.9,1011.2 1406.5,1011.2 1408.2,1011.1 1409.8,1011.2 1411.5,1011.1 1413.1,1011.2 1414.8,1011.1 1416.5,1011.1 1418.1,1011.1 1419.8,1011.1 1421.4,1011.1 1423.1,1011.0 1424.7,1011.0 1426.4,1011.0 1428.0,1011.0 1429.7,1011.0 1431.3,1010.9 1433.0,1011.0 1434.7,1011.0 1436.3,1010.9 1438.0,1010.9 1439.6,1010.9 1441.3,1010.9 1442.9,1010.9 1444.6,1010.9 1446.2,1010.9 1447.9,1010.9 1449.5,1010.8 1451.2,1010.8 1452.9,1010.8 1454.0,1010.8 1454.5,1010.8 1456.2,1010.8 1457.8,1010.8 1459.5,1010.8 1461.1,1010.8 1462.8,1010.8 1464.4,1010.8 1466.1,1010.7 1467.8,1010.7 1469.4,1010.7 1471.1,1010.7 1472.7,1010.7 1474.4,1010.7 1476.0,1010.7 1477.7,1010.7 1479.3,1010.7 1481.0,1010.7 1482.6,1010.7 1484.3,1010.7 1486.0,1010.7 1487.6,1010.6 1489.3,1010.6 1490.9,1010.6 1492.6,1010.6 1494.2,1010.6 1495.9,1010.6 1497.5,1010.7 1499.2,1010.6 1500.9,1010.6 1502.5,1010.6 1504.2,1010.6 1505.8,1010.6 1507.5,1010.6 1509.1,1010.6 1510.8,1010.6 1512.4,1010.5 1514.1,1010.5 1515.7,1010.6 1517.4,1010.5 1519.1,1010.5 1520.7,1010.5 1522.4,1010.5 1524.0,1010.5 1525.7,1010.5 1527.3,1010.5 1529.0,1010.4 1530.6,1010.5 1532.3,1010.4 1534.0,1010.5 1535.6,1010.4 1537.3,1010.4 1538.9,1010.4 1540.6,1010.4 1542.2,1010.4 1543.9,1010.4 1545.5,1010.4 1547.2,1010.4 1548.8,1010.4 1550.5,1010.4 1552.2,1010.4 1553.8,1010.4 1555.5,1010.4 1557.1,1010.3 1558.8,1010.3 1560.4,1010.3 1562.1,1010.3 1563.7,1010.4 1565.4,1010.3 1567.1,1010.3 1568.7,1010.3 1570.4,1010.3 1572.0,1010.3 1573.7,1010.3 1575.3,1010.3 1577.0,1010.3 1578.6,1010.2 1580.3,1010.2 1581.9,1010.2 1583.6,1010.2 1585.3,1010.2 1586.9,1010.2 1588.6,1010.2 1590.2,1010.2 1591.9,1010.2 1593.5,1010.2 1595.2,1010.2 1596.8,1010.1 1598.5,1010.2 1600.1,1010.2 1601.8,1010.1 1603.5,1010.1 1605.1,1010.2 1606.8,1010.2 1608.4,1010.1 1610.1,1010.1 1611.7,1010.1 1613.4,1010.1 1615.0,1010.1 1616.7,1010.1 1618.4,1010.1 1620.0,1010.1 1621.7,1010.1 1623.3,1010.0 1625.0,1010.1 1626.6,1010.1 1628.3,1010.1 1629.9,1010.1 1631.6,1010.0 1633.2,1010.0 1634.9,1010.0 1636.6,1010.0 1638.2,1010.0 1639.9,1010.0 1641.5,1010.0 1643.2,1010.0 1644.8,1010.0 1646.5,1010.0 1648.1,1010.0 1649.8,1009.9 1651.5,1010.0 1653.1,1010.0 1654.8,1009.9 1656.4,1009.9 1658.1,1009.9 1659.7,1009.9 1661.4,1009.9 1663.0,1009.9 1664.7,1009.9 1666.3,1009.9 1668.0,1009.9 1669.7,1009.9 1671.3,1009.9 1673.0,1009.8 1674.6,1009.8 1676.3,1009.8 1677.9,1009.8 1679.6,1009.8 1681.2,1009.8 1682.9,1009.8 1684.6,1009.8 1686.2,1009.8 1687.9,1009.7 1689.5,1009.8 1691.2,1009.8 1692.8,1009.8 1694.5,1009.8 1696.1,1009.7 1697.8,1009.7 1699.4,1009.7 1701.1,1009.7 1702.8,1009.7 1704.4,1009.7 1706.1,1009.7 1707.7,1009.7 1709.4,1009.7 1711.0,1009.7 1712.7,1009.7 1714.3,1009.7 1716.0,1009.7 1717.7,1009.6 1719.3,1009.7 1721.0,1009.6 1722.6,1009.6 1724.3,1009.6 1725.9,1009.6 1727.6,1009.6 1729.2,1009.6 1730.9,1009.6 1732.5,1009.6 1734.2,1009.6 1735.9,1009.6 1737.5,1009.5 1739.2,1009.5 1740.8,1009.6 1742.5,1009.6 1744.1,1009.5 1745.8,1009.5 1747.4,1009.5 1749.1,1009.5 1750.8,1009.5 1752.4,1009.5 1754.1,1009.5 1755.7,1009.6 1757.4,1009.5 1759.0,1009.5 1760.7,1009.5 1762.3,1009.4 1764.0,1009.4 1765.6,1009.4 1767.3,1009.4 1769.0,1009.4 1770.6,1009.5 1772.3,1009.4 1773.9,1009.4 1775.6,1009.4 1777.2,1009.4 1778.9,1009.4 1780.5,1009.4 1782.2,1009.3 1783.8,1009.4 1785.5,1009.3 1787.2,1009.4 1788.8,1009.3 1790.5,1009.3 1792.1,1009.4 1793.8,1009.3 1795.4,1009.3 1797.1,1009.3 1798.7,1009.3 1800.4,1009.3 1802.1,1009.3 1803.7,1009.2 1805.4,1009.3 1807.0,1009.3 1808.7,1009.3 1810.3,1009.3 1812.0,1009.2 1813.6,1009.2 1815.3,1009.2 1816.9,1009.2 1818.6,1009.2 1820.3,1009.2 1821.9,1009.2 1823.6,1009.2 1825.2,1009.2 1826.9,1009.2 1828.5,1009.2 1830.2,1009.2 1831.8,1009.2 1833.5,1009.2 1835.2,1009.1 1836.8,1009.1 1838.5,1009.2 1840.1,1009.1 1841.8,1009.1 1843.4,1009.1 1845.1,1009.1 1846.7,1009.1 1848.4,1009.1 1850.0,1009.1 1851.7,1009.1 1853.4,1009.1 1855.0,1009.0 1856.7,1009.1 1858.3,1009.0 1860.0,1009.0 1861.6,1009.0 1863.3,1009.1 1864.9,1009.0 1866.6,1009.0 1867.7,1009.0" fill="none" stroke="#ff0000" stroke-width="3.5" stroke-linejoin="round"/>
</svg>
</body></html>
